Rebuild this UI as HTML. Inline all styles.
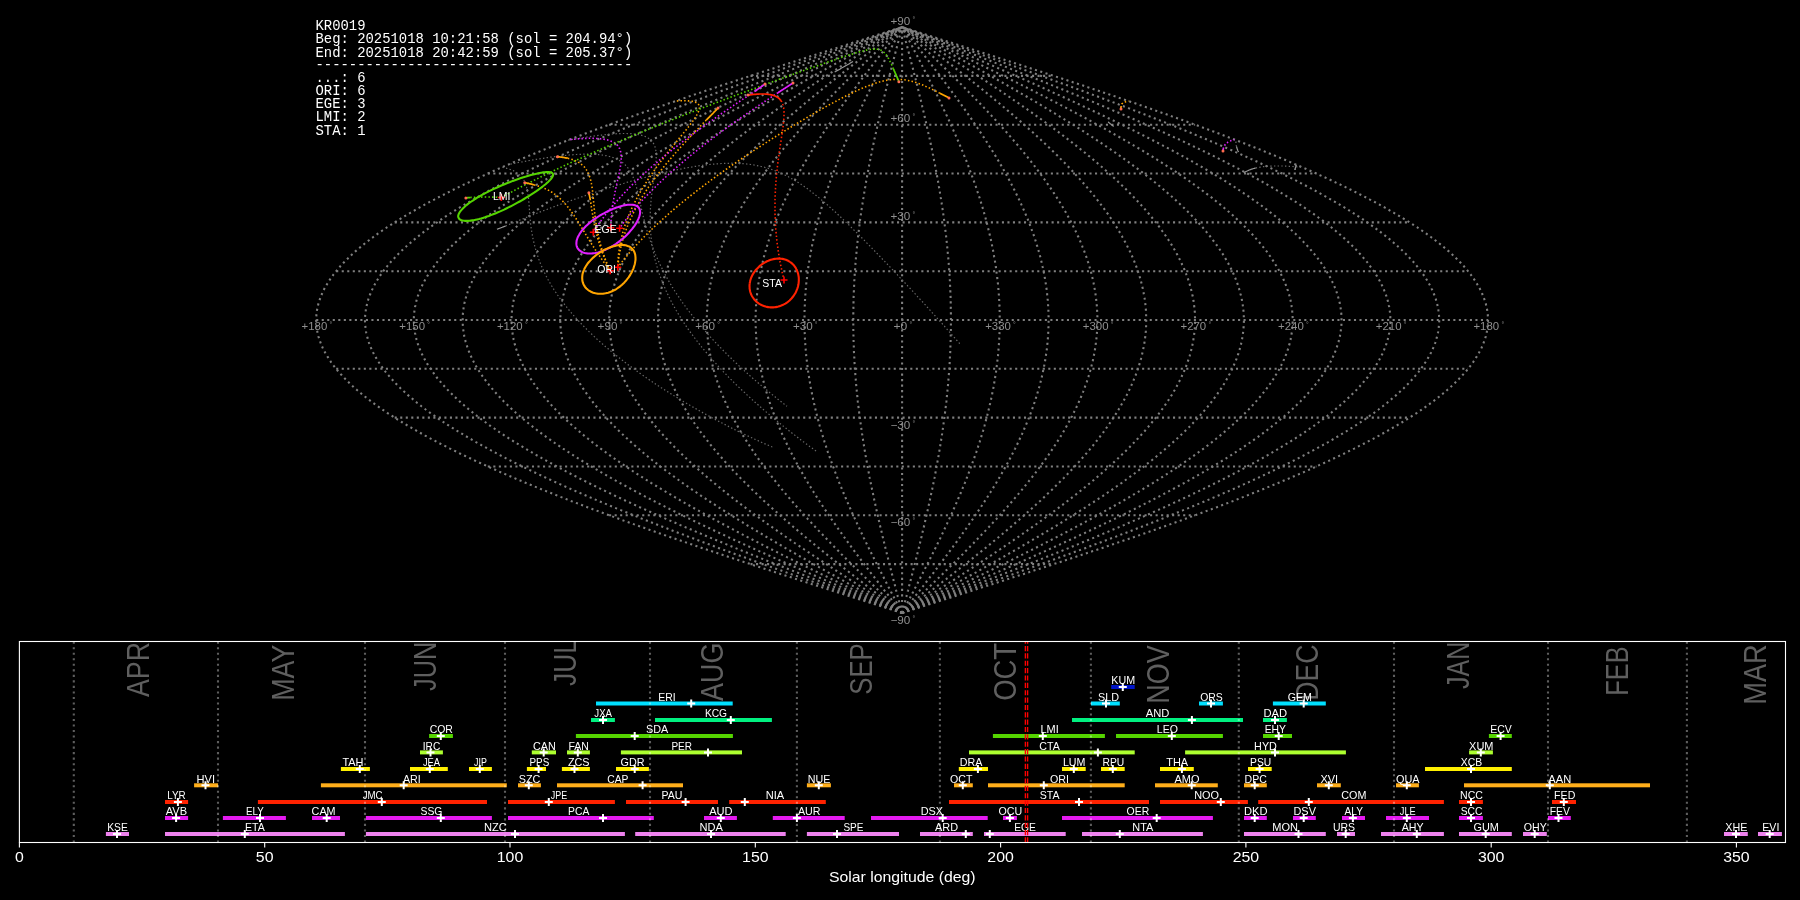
<!DOCTYPE html>
<html><head><meta charset="utf-8"><style>
html,body{margin:0;padding:0;background:#000;width:1800px;height:900px;overflow:hidden}
svg{display:block;will-change:transform}
</style></head><body>
<svg width="1800" height="900" viewBox="0 0 1800 900">
<rect width="1800" height="900" fill="#000"/>
<g fill="none" stroke="#7f7f7f" stroke-width="2.08" stroke-dasharray="2.08 3.44">
<path d="M902.1,613.0 L907.2,611.3 L912.3,609.7 L917.4,608.1 L922.5,606.4 L927.7,604.8 L932.8,603.2 L937.9,601.6 L943.0,599.9 L948.1,598.3 L953.2,596.7 L958.3,595.0 L963.3,593.4 L968.4,591.8 L973.5,590.2 L978.6,588.5 L983.6,586.9 L988.7,585.3 L993.8,583.7 L998.8,582.0 L1003.8,580.4 L1008.9,578.8 L1013.9,577.1 L1018.9,575.5 L1023.9,573.9 L1028.9,572.3 L1033.9,570.6 L1038.9,569.0 L1043.8,567.4 L1048.8,565.8 L1053.7,564.1 L1058.7,562.5 L1063.6,560.9 L1068.5,559.2 L1073.4,557.6 L1078.3,556.0 L1083.2,554.4 L1088.0,552.7 L1092.9,551.1 L1097.7,549.5 L1102.5,547.9 L1107.3,546.2 L1112.1,544.6 L1116.8,543.0 L1121.6,541.3 L1126.3,539.7 L1131.0,538.1 L1135.7,536.5 L1140.4,534.8 L1145.1,533.2 L1149.7,531.6 L1154.3,529.9 L1158.9,528.3 L1163.5,526.7 L1168.1,525.1 L1172.6,523.4 L1177.2,521.8 L1181.7,520.2 L1186.1,518.6 L1190.6,516.9 L1195.1,515.3 L1199.5,513.7 L1203.9,512.0 L1208.2,510.4 L1212.6,508.8 L1216.9,507.2 L1221.2,505.5 L1225.5,503.9 L1229.7,502.3 L1234.0,500.7 L1238.2,499.0 L1242.3,497.4 L1246.5,495.8 L1250.6,494.1 L1254.7,492.5 L1258.8,490.9 L1262.8,489.3 L1266.8,487.6 L1270.8,486.0 L1274.8,484.4 L1278.7,482.8 L1282.6,481.1 L1286.5,479.5 L1290.3,477.9 L1294.1,476.2 L1297.9,474.6 L1301.7,473.0 L1305.4,471.4 L1309.1,469.7 L1312.8,468.1 L1316.4,466.5 L1320.0,464.8 L1323.6,463.2 L1327.1,461.6 L1330.6,460.0 L1334.1,458.3 L1337.5,456.7 L1340.9,455.1 L1344.3,453.5 L1347.6,451.8 L1350.9,450.2 L1354.2,448.6 L1357.4,446.9 L1360.6,445.3 L1363.8,443.7 L1366.9,442.1 L1370.0,440.4 L1373.1,438.8 L1376.1,437.2 L1379.1,435.6 L1382.0,433.9 L1385.0,432.3 L1387.8,430.7 L1390.7,429.0 L1393.5,427.4 L1396.2,425.8 L1399.0,424.2 L1401.7,422.5 L1404.3,420.9 L1406.9,419.3 L1409.5,417.6 L1412.0,416.0 L1414.5,414.4 L1417.0,412.8 L1419.4,411.1 L1421.8,409.5 L1424.1,407.9 L1426.4,406.3 L1428.7,404.6 L1430.9,403.0 L1433.1,401.4 L1435.2,399.7 L1437.3,398.1 L1439.4,396.5 L1441.4,394.9 L1443.4,393.2 L1445.3,391.6 L1447.2,390.0 L1449.1,388.4 L1450.9,386.7 L1452.7,385.1 L1454.4,383.5 L1456.1,381.8 L1457.7,380.2 L1459.3,378.6 L1460.9,377.0 L1462.4,375.3 L1463.9,373.7 L1465.3,372.1 L1466.7,370.5 L1468.0,368.8 L1469.3,367.2 L1470.6,365.6 L1471.8,363.9 L1473.0,362.3 L1474.1,360.7 L1475.2,359.1 L1476.2,357.4 L1477.2,355.8 L1478.2,354.2 L1479.1,352.6 L1480.0,350.9 L1480.8,349.3 L1481.6,347.7 L1482.3,346.0 L1483.0,344.4 L1483.6,342.8 L1484.2,341.2 L1484.8,339.5 L1485.3,337.9 L1485.8,336.3 L1486.2,334.6 L1486.6,333.0 L1486.9,331.4 L1487.2,329.8 L1487.4,328.1 L1487.6,326.5 L1487.8,324.9 L1487.9,323.3 L1488.0,321.6 L1488.0,320.0 L1488.0,318.4 L1487.9,316.7 L1487.8,315.1 L1487.6,313.5 L1487.4,311.9 L1487.2,310.2 L1486.9,308.6 L1486.6,307.0 L1486.2,305.4 L1485.8,303.7 L1485.3,302.1 L1484.8,300.5 L1484.2,298.8 L1483.6,297.2 L1483.0,295.6 L1482.3,294.0 L1481.6,292.3 L1480.8,290.7 L1480.0,289.1 L1479.1,287.4 L1478.2,285.8 L1477.2,284.2 L1476.2,282.6 L1475.2,280.9 L1474.1,279.3 L1473.0,277.7 L1471.8,276.1 L1470.6,274.4 L1469.3,272.8 L1468.0,271.2 L1466.7,269.5 L1465.3,267.9 L1463.9,266.3 L1462.4,264.7 L1460.9,263.0 L1459.3,261.4 L1457.7,259.8 L1456.1,258.2 L1454.4,256.5 L1452.7,254.9 L1450.9,253.3 L1449.1,251.6 L1447.2,250.0 L1445.3,248.4 L1443.4,246.8 L1441.4,245.1 L1439.4,243.5 L1437.3,241.9 L1435.2,240.3 L1433.1,238.6 L1430.9,237.0 L1428.7,235.4 L1426.4,233.7 L1424.1,232.1 L1421.8,230.5 L1419.4,228.9 L1417.0,227.2 L1414.5,225.6 L1412.0,224.0 L1409.5,222.4 L1406.9,220.7 L1404.3,219.1 L1401.7,217.5 L1399.0,215.8 L1396.2,214.2 L1393.5,212.6 L1390.7,211.0 L1387.8,209.3 L1385.0,207.7 L1382.0,206.1 L1379.1,204.4 L1376.1,202.8 L1373.1,201.2 L1370.0,199.6 L1366.9,197.9 L1363.8,196.3 L1360.6,194.7 L1357.4,193.1 L1354.2,191.4 L1350.9,189.8 L1347.6,188.2 L1344.3,186.5 L1340.9,184.9 L1337.5,183.3 L1334.1,181.7 L1330.6,180.0 L1327.1,178.4 L1323.6,176.8 L1320.0,175.2 L1316.4,173.5 L1312.8,171.9 L1309.1,170.3 L1305.4,168.6 L1301.7,167.0 L1297.9,165.4 L1294.1,163.8 L1290.3,162.1 L1286.5,160.5 L1282.6,158.9 L1278.7,157.2 L1274.8,155.6 L1270.8,154.0 L1266.8,152.4 L1262.8,150.7 L1258.8,149.1 L1254.7,147.5 L1250.6,145.9 L1246.5,144.2 L1242.3,142.6 L1238.2,141.0 L1234.0,139.3 L1229.7,137.7 L1225.5,136.1 L1221.2,134.5 L1216.9,132.8 L1212.6,131.2 L1208.2,129.6 L1203.9,128.0 L1199.5,126.3 L1195.1,124.7 L1190.6,123.1 L1186.1,121.4 L1181.7,119.8 L1177.2,118.2 L1172.6,116.6 L1168.1,114.9 L1163.5,113.3 L1158.9,111.7 L1154.3,110.1 L1149.7,108.4 L1145.1,106.8 L1140.4,105.2 L1135.7,103.5 L1131.0,101.9 L1126.3,100.3 L1121.6,98.7 L1116.8,97.0 L1112.1,95.4 L1107.3,93.8 L1102.5,92.2 L1097.7,90.5 L1092.9,88.9 L1088.0,87.3 L1083.2,85.6 L1078.3,84.0 L1073.4,82.4 L1068.5,80.8 L1063.6,79.1 L1058.7,77.5 L1053.7,75.9 L1048.8,74.2 L1043.8,72.6 L1038.9,71.0 L1033.9,69.4 L1028.9,67.7 L1023.9,66.1 L1018.9,64.5 L1013.9,62.9 L1008.9,61.2 L1003.8,59.6 L998.8,58.0 L993.8,56.3 L988.7,54.7 L983.6,53.1 L978.6,51.5 L973.5,49.8 L968.4,48.2 L963.3,46.6 L958.3,45.0 L953.2,43.3 L948.1,41.7 L943.0,40.1 L937.9,38.4 L932.8,36.8 L927.7,35.2 L922.5,33.6 L917.4,31.9 L912.3,30.3 L907.2,28.7 L902.1,27.1"/>
<path d="M902.1,613.0 L906.8,611.3 L911.5,609.7 L916.2,608.1 L920.8,606.4 L925.5,604.8 L930.2,603.2 L934.9,601.6 L939.6,599.9 L944.2,598.3 L948.9,596.7 L953.6,595.0 L958.2,593.4 L962.9,591.8 L967.6,590.2 L972.2,588.5 L976.8,586.9 L981.5,585.3 L986.1,583.7 L990.7,582.0 L995.4,580.4 L1000.0,578.8 L1004.6,577.1 L1009.2,575.5 L1013.8,573.9 L1018.3,572.3 L1022.9,570.6 L1027.5,569.0 L1032.0,567.4 L1036.6,565.8 L1041.1,564.1 L1045.6,562.5 L1050.1,560.9 L1054.6,559.2 L1059.1,557.6 L1063.6,556.0 L1068.1,554.4 L1072.5,552.7 L1077.0,551.1 L1081.4,549.5 L1085.8,547.9 L1090.2,546.2 L1094.6,544.6 L1098.9,543.0 L1103.3,541.3 L1107.6,539.7 L1112.0,538.1 L1116.3,536.5 L1120.5,534.8 L1124.8,533.2 L1129.1,531.6 L1133.3,529.9 L1137.5,528.3 L1141.7,526.7 L1145.9,525.1 L1150.1,523.4 L1154.2,521.8 L1158.4,520.2 L1162.5,518.6 L1166.6,516.9 L1170.6,515.3 L1174.7,513.7 L1178.7,512.0 L1182.7,510.4 L1186.7,508.8 L1190.7,507.2 L1194.6,505.5 L1198.5,503.9 L1202.4,502.3 L1206.3,500.7 L1210.2,499.0 L1214.0,497.4 L1217.8,495.8 L1221.6,494.1 L1225.3,492.5 L1229.1,490.9 L1232.8,489.3 L1236.4,487.6 L1240.1,486.0 L1243.7,484.4 L1247.3,482.8 L1250.9,481.1 L1254.5,479.5 L1258.0,477.9 L1261.5,476.2 L1264.9,474.6 L1268.4,473.0 L1271.8,471.4 L1275.2,469.7 L1278.5,468.1 L1281.9,466.5 L1285.2,464.8 L1288.4,463.2 L1291.7,461.6 L1294.9,460.0 L1298.1,458.3 L1301.2,456.7 L1304.3,455.1 L1307.4,453.5 L1310.5,451.8 L1313.5,450.2 L1316.5,448.6 L1319.5,446.9 L1322.4,445.3 L1325.3,443.7 L1328.2,442.1 L1331.0,440.4 L1333.8,438.8 L1336.6,437.2 L1339.3,435.6 L1342.0,433.9 L1344.7,432.3 L1347.4,430.7 L1350.0,429.0 L1352.5,427.4 L1355.1,425.8 L1357.6,424.2 L1360.0,422.5 L1362.5,420.9 L1364.9,419.3 L1367.2,417.6 L1369.5,416.0 L1371.8,414.4 L1374.1,412.8 L1376.3,411.1 L1378.5,409.5 L1380.6,407.9 L1382.7,406.3 L1384.8,404.6 L1386.9,403.0 L1388.9,401.4 L1390.8,399.7 L1392.7,398.1 L1394.6,396.5 L1396.5,394.9 L1398.3,393.2 L1400.1,391.6 L1401.8,390.0 L1403.5,388.4 L1405.2,386.7 L1406.8,385.1 L1408.4,383.5 L1409.9,381.8 L1411.4,380.2 L1412.9,378.6 L1414.3,377.0 L1415.7,375.3 L1417.1,373.7 L1418.4,372.1 L1419.6,370.5 L1420.9,368.8 L1422.1,367.2 L1423.2,365.6 L1424.3,363.9 L1425.4,362.3 L1426.4,360.7 L1427.4,359.1 L1428.4,357.4 L1429.3,355.8 L1430.2,354.2 L1431.0,352.6 L1431.8,350.9 L1432.6,349.3 L1433.3,347.7 L1433.9,346.0 L1434.6,344.4 L1435.2,342.8 L1435.7,341.2 L1436.2,339.5 L1436.7,337.9 L1437.1,336.3 L1437.5,334.6 L1437.9,333.0 L1438.2,331.4 L1438.4,329.8 L1438.7,328.1 L1438.8,326.5 L1439.0,324.9 L1439.1,323.3 L1439.2,321.6 L1439.2,320.0 L1439.2,318.4 L1439.1,316.7 L1439.0,315.1 L1438.8,313.5 L1438.7,311.9 L1438.4,310.2 L1438.2,308.6 L1437.9,307.0 L1437.5,305.4 L1437.1,303.7 L1436.7,302.1 L1436.2,300.5 L1435.7,298.8 L1435.2,297.2 L1434.6,295.6 L1433.9,294.0 L1433.3,292.3 L1432.6,290.7 L1431.8,289.1 L1431.0,287.4 L1430.2,285.8 L1429.3,284.2 L1428.4,282.6 L1427.4,280.9 L1426.4,279.3 L1425.4,277.7 L1424.3,276.1 L1423.2,274.4 L1422.1,272.8 L1420.9,271.2 L1419.6,269.5 L1418.4,267.9 L1417.1,266.3 L1415.7,264.7 L1414.3,263.0 L1412.9,261.4 L1411.4,259.8 L1409.9,258.2 L1408.4,256.5 L1406.8,254.9 L1405.2,253.3 L1403.5,251.6 L1401.8,250.0 L1400.1,248.4 L1398.3,246.8 L1396.5,245.1 L1394.6,243.5 L1392.7,241.9 L1390.8,240.3 L1388.9,238.6 L1386.9,237.0 L1384.8,235.4 L1382.7,233.7 L1380.6,232.1 L1378.5,230.5 L1376.3,228.9 L1374.1,227.2 L1371.8,225.6 L1369.5,224.0 L1367.2,222.4 L1364.9,220.7 L1362.5,219.1 L1360.0,217.5 L1357.6,215.8 L1355.1,214.2 L1352.5,212.6 L1350.0,211.0 L1347.4,209.3 L1344.7,207.7 L1342.0,206.1 L1339.3,204.4 L1336.6,202.8 L1333.8,201.2 L1331.0,199.6 L1328.2,197.9 L1325.3,196.3 L1322.4,194.7 L1319.5,193.1 L1316.5,191.4 L1313.5,189.8 L1310.5,188.2 L1307.4,186.5 L1304.3,184.9 L1301.2,183.3 L1298.1,181.7 L1294.9,180.0 L1291.7,178.4 L1288.4,176.8 L1285.2,175.2 L1281.9,173.5 L1278.5,171.9 L1275.2,170.3 L1271.8,168.6 L1268.4,167.0 L1264.9,165.4 L1261.5,163.8 L1258.0,162.1 L1254.5,160.5 L1250.9,158.9 L1247.3,157.2 L1243.7,155.6 L1240.1,154.0 L1236.4,152.4 L1232.8,150.7 L1229.1,149.1 L1225.3,147.5 L1221.6,145.9 L1217.8,144.2 L1214.0,142.6 L1210.2,141.0 L1206.3,139.3 L1202.4,137.7 L1198.5,136.1 L1194.6,134.5 L1190.7,132.8 L1186.7,131.2 L1182.7,129.6 L1178.7,128.0 L1174.7,126.3 L1170.6,124.7 L1166.6,123.1 L1162.5,121.4 L1158.4,119.8 L1154.2,118.2 L1150.1,116.6 L1145.9,114.9 L1141.7,113.3 L1137.5,111.7 L1133.3,110.1 L1129.1,108.4 L1124.8,106.8 L1120.5,105.2 L1116.3,103.5 L1112.0,101.9 L1107.6,100.3 L1103.3,98.7 L1098.9,97.0 L1094.6,95.4 L1090.2,93.8 L1085.8,92.2 L1081.4,90.5 L1077.0,88.9 L1072.5,87.3 L1068.1,85.6 L1063.6,84.0 L1059.1,82.4 L1054.6,80.8 L1050.1,79.1 L1045.6,77.5 L1041.1,75.9 L1036.6,74.2 L1032.0,72.6 L1027.5,71.0 L1022.9,69.4 L1018.3,67.7 L1013.8,66.1 L1009.2,64.5 L1004.6,62.9 L1000.0,61.2 L995.4,59.6 L990.7,58.0 L986.1,56.3 L981.5,54.7 L976.8,53.1 L972.2,51.5 L967.6,49.8 L962.9,48.2 L958.2,46.6 L953.6,45.0 L948.9,43.3 L944.2,41.7 L939.6,40.1 L934.9,38.4 L930.2,36.8 L925.5,35.2 L920.8,33.6 L916.2,31.9 L911.5,30.3 L906.8,28.7 L902.1,27.1"/>
<path d="M902.1,613.0 L906.4,611.3 L910.6,609.7 L914.9,608.1 L919.1,606.4 L923.4,604.8 L927.7,603.2 L931.9,601.6 L936.2,599.9 L940.4,598.3 L944.7,596.7 L948.9,595.0 L953.1,593.4 L957.4,591.8 L961.6,590.2 L965.8,588.5 L970.1,586.9 L974.3,585.3 L978.5,583.7 L982.7,582.0 L986.9,580.4 L991.1,578.8 L995.3,577.1 L999.4,575.5 L1003.6,573.9 L1007.8,572.3 L1011.9,570.6 L1016.1,569.0 L1020.2,567.4 L1024.3,565.8 L1028.5,564.1 L1032.6,562.5 L1036.7,560.9 L1040.8,559.2 L1044.9,557.6 L1048.9,556.0 L1053.0,554.4 L1057.0,552.7 L1061.1,551.1 L1065.1,549.5 L1069.1,547.9 L1073.1,546.2 L1077.1,544.6 L1081.0,543.0 L1085.0,541.3 L1088.9,539.7 L1092.9,538.1 L1096.8,536.5 L1100.7,534.8 L1104.6,533.2 L1108.4,531.6 L1112.3,529.9 L1116.1,528.3 L1120.0,526.7 L1123.8,525.1 L1127.5,523.4 L1131.3,521.8 L1135.1,520.2 L1138.8,518.6 L1142.5,516.9 L1146.2,515.3 L1149.9,513.7 L1153.6,512.0 L1157.2,510.4 L1160.8,508.8 L1164.4,507.2 L1168.0,505.5 L1171.6,503.9 L1175.1,502.3 L1178.6,500.7 L1182.1,499.0 L1185.6,497.4 L1189.1,495.8 L1192.5,494.1 L1195.9,492.5 L1199.3,490.9 L1202.7,489.3 L1206.0,487.6 L1209.4,486.0 L1212.7,484.4 L1215.9,482.8 L1219.2,481.1 L1222.4,479.5 L1225.6,477.9 L1228.8,476.2 L1232.0,474.6 L1235.1,473.0 L1238.2,471.4 L1241.3,469.7 L1244.3,468.1 L1247.3,466.5 L1250.3,464.8 L1253.3,463.2 L1256.3,461.6 L1259.2,460.0 L1262.1,458.3 L1264.9,456.7 L1267.8,455.1 L1270.6,453.5 L1273.4,451.8 L1276.1,450.2 L1278.8,448.6 L1281.5,446.9 L1284.2,445.3 L1286.8,443.7 L1289.5,442.1 L1292.0,440.4 L1294.6,438.8 L1297.1,437.2 L1299.6,435.6 L1302.1,433.9 L1304.5,432.3 L1306.9,430.7 L1309.2,429.0 L1311.6,427.4 L1313.9,425.8 L1316.2,424.2 L1318.4,422.5 L1320.6,420.9 L1322.8,419.3 L1324.9,417.6 L1327.1,416.0 L1329.1,414.4 L1331.2,412.8 L1333.2,411.1 L1335.2,409.5 L1337.1,407.9 L1339.1,406.3 L1340.9,404.6 L1342.8,403.0 L1344.6,401.4 L1346.4,399.7 L1348.1,398.1 L1349.9,396.5 L1351.5,394.9 L1353.2,393.2 L1354.8,391.6 L1356.4,390.0 L1357.9,388.4 L1359.4,386.7 L1360.9,385.1 L1362.3,383.5 L1363.7,381.8 L1365.1,380.2 L1366.5,378.6 L1367.8,377.0 L1369.0,375.3 L1370.2,373.7 L1371.4,372.1 L1372.6,370.5 L1373.7,368.8 L1374.8,367.2 L1375.8,365.6 L1376.9,363.9 L1377.8,362.3 L1378.8,360.7 L1379.7,359.1 L1380.5,357.4 L1381.4,355.8 L1382.2,354.2 L1382.9,352.6 L1383.7,350.9 L1384.3,349.3 L1385.0,347.7 L1385.6,346.0 L1386.2,344.4 L1386.7,342.8 L1387.2,341.2 L1387.7,339.5 L1388.1,337.9 L1388.5,336.3 L1388.8,334.6 L1389.2,333.0 L1389.4,331.4 L1389.7,329.8 L1389.9,328.1 L1390.1,326.5 L1390.2,324.9 L1390.3,323.3 L1390.3,321.6 L1390.3,320.0 L1390.3,318.4 L1390.3,316.7 L1390.2,315.1 L1390.1,313.5 L1389.9,311.9 L1389.7,310.2 L1389.4,308.6 L1389.2,307.0 L1388.8,305.4 L1388.5,303.7 L1388.1,302.1 L1387.7,300.5 L1387.2,298.8 L1386.7,297.2 L1386.2,295.6 L1385.6,294.0 L1385.0,292.3 L1384.3,290.7 L1383.7,289.1 L1382.9,287.4 L1382.2,285.8 L1381.4,284.2 L1380.5,282.6 L1379.7,280.9 L1378.8,279.3 L1377.8,277.7 L1376.9,276.1 L1375.8,274.4 L1374.8,272.8 L1373.7,271.2 L1372.6,269.5 L1371.4,267.9 L1370.2,266.3 L1369.0,264.7 L1367.8,263.0 L1366.5,261.4 L1365.1,259.8 L1363.7,258.2 L1362.3,256.5 L1360.9,254.9 L1359.4,253.3 L1357.9,251.6 L1356.4,250.0 L1354.8,248.4 L1353.2,246.8 L1351.5,245.1 L1349.9,243.5 L1348.1,241.9 L1346.4,240.3 L1344.6,238.6 L1342.8,237.0 L1340.9,235.4 L1339.1,233.7 L1337.1,232.1 L1335.2,230.5 L1333.2,228.9 L1331.2,227.2 L1329.1,225.6 L1327.1,224.0 L1324.9,222.4 L1322.8,220.7 L1320.6,219.1 L1318.4,217.5 L1316.2,215.8 L1313.9,214.2 L1311.6,212.6 L1309.2,211.0 L1306.9,209.3 L1304.5,207.7 L1302.1,206.1 L1299.6,204.4 L1297.1,202.8 L1294.6,201.2 L1292.0,199.6 L1289.5,197.9 L1286.8,196.3 L1284.2,194.7 L1281.5,193.1 L1278.8,191.4 L1276.1,189.8 L1273.4,188.2 L1270.6,186.5 L1267.8,184.9 L1264.9,183.3 L1262.1,181.7 L1259.2,180.0 L1256.3,178.4 L1253.3,176.8 L1250.3,175.2 L1247.3,173.5 L1244.3,171.9 L1241.3,170.3 L1238.2,168.6 L1235.1,167.0 L1232.0,165.4 L1228.8,163.8 L1225.6,162.1 L1222.4,160.5 L1219.2,158.9 L1215.9,157.2 L1212.7,155.6 L1209.4,154.0 L1206.0,152.4 L1202.7,150.7 L1199.3,149.1 L1195.9,147.5 L1192.5,145.9 L1189.1,144.2 L1185.6,142.6 L1182.1,141.0 L1178.6,139.3 L1175.1,137.7 L1171.6,136.1 L1168.0,134.5 L1164.4,132.8 L1160.8,131.2 L1157.2,129.6 L1153.6,128.0 L1149.9,126.3 L1146.2,124.7 L1142.5,123.1 L1138.8,121.4 L1135.1,119.8 L1131.3,118.2 L1127.5,116.6 L1123.8,114.9 L1120.0,113.3 L1116.1,111.7 L1112.3,110.1 L1108.4,108.4 L1104.6,106.8 L1100.7,105.2 L1096.8,103.5 L1092.9,101.9 L1088.9,100.3 L1085.0,98.7 L1081.0,97.0 L1077.1,95.4 L1073.1,93.8 L1069.1,92.2 L1065.1,90.5 L1061.1,88.9 L1057.0,87.3 L1053.0,85.6 L1048.9,84.0 L1044.9,82.4 L1040.8,80.8 L1036.7,79.1 L1032.6,77.5 L1028.5,75.9 L1024.3,74.2 L1020.2,72.6 L1016.1,71.0 L1011.9,69.4 L1007.8,67.7 L1003.6,66.1 L999.4,64.5 L995.3,62.9 L991.1,61.2 L986.9,59.6 L982.7,58.0 L978.5,56.3 L974.3,54.7 L970.1,53.1 L965.8,51.5 L961.6,49.8 L957.4,48.2 L953.1,46.6 L948.9,45.0 L944.7,43.3 L940.4,41.7 L936.2,40.1 L931.9,38.4 L927.7,36.8 L923.4,35.2 L919.1,33.6 L914.9,31.9 L910.6,30.3 L906.4,28.7 L902.1,27.1"/>
<path d="M902.1,613.0 L905.9,611.3 L909.8,609.7 L913.6,608.1 L917.4,606.4 L921.3,604.8 L925.1,603.2 L928.9,601.6 L932.8,599.9 L936.6,598.3 L940.4,596.7 L944.2,595.0 L948.0,593.4 L951.8,591.8 L955.7,590.2 L959.5,588.5 L963.3,586.9 L967.1,585.3 L970.8,583.7 L974.6,582.0 L978.4,580.4 L982.2,578.8 L985.9,577.1 L989.7,575.5 L993.5,573.9 L997.2,572.3 L1000.9,570.6 L1004.7,569.0 L1008.4,567.4 L1012.1,565.8 L1015.8,564.1 L1019.5,562.5 L1023.2,560.9 L1026.9,559.2 L1030.6,557.6 L1034.2,556.0 L1037.9,554.4 L1041.5,552.7 L1045.2,551.1 L1048.8,549.5 L1052.4,547.9 L1056.0,546.2 L1059.6,544.6 L1063.1,543.0 L1066.7,541.3 L1070.3,539.7 L1073.8,538.1 L1077.3,536.5 L1080.8,534.8 L1084.3,533.2 L1087.8,531.6 L1091.3,529.9 L1094.7,528.3 L1098.2,526.7 L1101.6,525.1 L1105.0,523.4 L1108.4,521.8 L1111.8,520.2 L1115.1,518.6 L1118.5,516.9 L1121.8,515.3 L1125.1,513.7 L1128.4,512.0 L1131.7,510.4 L1135.0,508.8 L1138.2,507.2 L1141.4,505.5 L1144.6,503.9 L1147.8,502.3 L1151.0,500.7 L1154.1,499.0 L1157.3,497.4 L1160.4,495.8 L1163.5,494.1 L1166.6,492.5 L1169.6,490.9 L1172.6,489.3 L1175.6,487.6 L1178.6,486.0 L1181.6,484.4 L1184.6,482.8 L1187.5,481.1 L1190.4,479.5 L1193.3,477.9 L1196.1,476.2 L1199.0,474.6 L1201.8,473.0 L1204.6,471.4 L1207.4,469.7 L1210.1,468.1 L1212.8,466.5 L1215.5,464.8 L1218.2,463.2 L1220.8,461.6 L1223.5,460.0 L1226.1,458.3 L1228.7,456.7 L1231.2,455.1 L1233.7,453.5 L1236.2,451.8 L1238.7,450.2 L1241.2,448.6 L1243.6,446.9 L1246.0,445.3 L1248.4,443.7 L1250.7,442.1 L1253.0,440.4 L1255.3,438.8 L1257.6,437.2 L1259.8,435.6 L1262.1,433.9 L1264.2,432.3 L1266.4,430.7 L1268.5,429.0 L1270.6,427.4 L1272.7,425.8 L1274.8,424.2 L1276.8,422.5 L1278.8,420.9 L1280.7,419.3 L1282.7,417.6 L1284.6,416.0 L1286.4,414.4 L1288.3,412.8 L1290.1,411.1 L1291.9,409.5 L1293.6,407.9 L1295.4,406.3 L1297.1,404.6 L1298.7,403.0 L1300.4,401.4 L1302.0,399.7 L1303.5,398.1 L1305.1,396.5 L1306.6,394.9 L1308.1,393.2 L1309.5,391.6 L1310.9,390.0 L1312.3,388.4 L1313.7,386.7 L1315.0,385.1 L1316.3,383.5 L1317.6,381.8 L1318.8,380.2 L1320.0,378.6 L1321.2,377.0 L1322.3,375.3 L1323.4,373.7 L1324.5,372.1 L1325.5,370.5 L1326.6,368.8 L1327.5,367.2 L1328.5,365.6 L1329.4,363.9 L1330.3,362.3 L1331.1,360.7 L1331.9,359.1 L1332.7,357.4 L1333.5,355.8 L1334.2,354.2 L1334.8,352.6 L1335.5,350.9 L1336.1,349.3 L1336.7,347.7 L1337.2,346.0 L1337.8,344.4 L1338.2,342.8 L1338.7,341.2 L1339.1,339.5 L1339.5,337.9 L1339.9,336.3 L1340.2,334.6 L1340.5,333.0 L1340.7,331.4 L1340.9,329.8 L1341.1,328.1 L1341.3,326.5 L1341.4,324.9 L1341.5,323.3 L1341.5,321.6 L1341.5,320.0 L1341.5,318.4 L1341.5,316.7 L1341.4,315.1 L1341.3,313.5 L1341.1,311.9 L1340.9,310.2 L1340.7,308.6 L1340.5,307.0 L1340.2,305.4 L1339.9,303.7 L1339.5,302.1 L1339.1,300.5 L1338.7,298.8 L1338.2,297.2 L1337.8,295.6 L1337.2,294.0 L1336.7,292.3 L1336.1,290.7 L1335.5,289.1 L1334.8,287.4 L1334.2,285.8 L1333.5,284.2 L1332.7,282.6 L1331.9,280.9 L1331.1,279.3 L1330.3,277.7 L1329.4,276.1 L1328.5,274.4 L1327.5,272.8 L1326.6,271.2 L1325.5,269.5 L1324.5,267.9 L1323.4,266.3 L1322.3,264.7 L1321.2,263.0 L1320.0,261.4 L1318.8,259.8 L1317.6,258.2 L1316.3,256.5 L1315.0,254.9 L1313.7,253.3 L1312.3,251.6 L1310.9,250.0 L1309.5,248.4 L1308.1,246.8 L1306.6,245.1 L1305.1,243.5 L1303.5,241.9 L1302.0,240.3 L1300.4,238.6 L1298.7,237.0 L1297.1,235.4 L1295.4,233.7 L1293.6,232.1 L1291.9,230.5 L1290.1,228.9 L1288.3,227.2 L1286.4,225.6 L1284.6,224.0 L1282.7,222.4 L1280.7,220.7 L1278.8,219.1 L1276.8,217.5 L1274.8,215.8 L1272.7,214.2 L1270.6,212.6 L1268.5,211.0 L1266.4,209.3 L1264.2,207.7 L1262.1,206.1 L1259.8,204.4 L1257.6,202.8 L1255.3,201.2 L1253.0,199.6 L1250.7,197.9 L1248.4,196.3 L1246.0,194.7 L1243.6,193.1 L1241.2,191.4 L1238.7,189.8 L1236.2,188.2 L1233.7,186.5 L1231.2,184.9 L1228.7,183.3 L1226.1,181.7 L1223.5,180.0 L1220.8,178.4 L1218.2,176.8 L1215.5,175.2 L1212.8,173.5 L1210.1,171.9 L1207.4,170.3 L1204.6,168.6 L1201.8,167.0 L1199.0,165.4 L1196.1,163.8 L1193.3,162.1 L1190.4,160.5 L1187.5,158.9 L1184.6,157.2 L1181.6,155.6 L1178.6,154.0 L1175.6,152.4 L1172.6,150.7 L1169.6,149.1 L1166.6,147.5 L1163.5,145.9 L1160.4,144.2 L1157.3,142.6 L1154.1,141.0 L1151.0,139.3 L1147.8,137.7 L1144.6,136.1 L1141.4,134.5 L1138.2,132.8 L1135.0,131.2 L1131.7,129.6 L1128.4,128.0 L1125.1,126.3 L1121.8,124.7 L1118.5,123.1 L1115.1,121.4 L1111.8,119.8 L1108.4,118.2 L1105.0,116.6 L1101.6,114.9 L1098.2,113.3 L1094.7,111.7 L1091.3,110.1 L1087.8,108.4 L1084.3,106.8 L1080.8,105.2 L1077.3,103.5 L1073.8,101.9 L1070.3,100.3 L1066.7,98.7 L1063.1,97.0 L1059.6,95.4 L1056.0,93.8 L1052.4,92.2 L1048.8,90.5 L1045.2,88.9 L1041.5,87.3 L1037.9,85.6 L1034.2,84.0 L1030.6,82.4 L1026.9,80.8 L1023.2,79.1 L1019.5,77.5 L1015.8,75.9 L1012.1,74.2 L1008.4,72.6 L1004.7,71.0 L1000.9,69.4 L997.2,67.7 L993.5,66.1 L989.7,64.5 L985.9,62.9 L982.2,61.2 L978.4,59.6 L974.6,58.0 L970.8,56.3 L967.1,54.7 L963.3,53.1 L959.5,51.5 L955.7,49.8 L951.8,48.2 L948.0,46.6 L944.2,45.0 L940.4,43.3 L936.6,41.7 L932.8,40.1 L928.9,38.4 L925.1,36.8 L921.3,35.2 L917.4,33.6 L913.6,31.9 L909.8,30.3 L905.9,28.7 L902.1,27.1"/>
<path d="M902.1,613.0 L905.5,611.3 L908.9,609.7 L912.3,608.1 L915.7,606.4 L919.1,604.8 L922.5,603.2 L925.9,601.6 L929.3,599.9 L932.7,598.3 L936.1,596.7 L939.5,595.0 L942.9,593.4 L946.3,591.8 L949.7,590.2 L953.1,588.5 L956.5,586.9 L959.8,585.3 L963.2,583.7 L966.6,582.0 L969.9,580.4 L973.3,578.8 L976.6,577.1 L980.0,575.5 L983.3,573.9 L986.6,572.3 L990.0,570.6 L993.3,569.0 L996.6,567.4 L999.9,565.8 L1003.2,564.1 L1006.5,562.5 L1009.8,560.9 L1013.0,559.2 L1016.3,557.6 L1019.6,556.0 L1022.8,554.4 L1026.0,552.7 L1029.3,551.1 L1032.5,549.5 L1035.7,547.9 L1038.9,546.2 L1042.1,544.6 L1045.3,543.0 L1048.4,541.3 L1051.6,539.7 L1054.7,538.1 L1057.9,536.5 L1061.0,534.8 L1064.1,533.2 L1067.2,531.6 L1070.3,529.9 L1073.3,528.3 L1076.4,526.7 L1079.4,525.1 L1082.5,523.4 L1085.5,521.8 L1088.5,520.2 L1091.5,518.6 L1094.4,516.9 L1097.4,515.3 L1100.3,513.7 L1103.3,512.0 L1106.2,510.4 L1109.1,508.8 L1112.0,507.2 L1114.8,505.5 L1117.7,503.9 L1120.5,502.3 L1123.3,500.7 L1126.1,499.0 L1128.9,497.4 L1131.7,495.8 L1134.4,494.1 L1137.2,492.5 L1139.9,490.9 L1142.6,489.3 L1145.3,487.6 L1147.9,486.0 L1150.6,484.4 L1153.2,482.8 L1155.8,481.1 L1158.4,479.5 L1160.9,477.9 L1163.5,476.2 L1166.0,474.6 L1168.5,473.0 L1171.0,471.4 L1173.4,469.7 L1175.9,468.1 L1178.3,466.5 L1180.7,464.8 L1183.1,463.2 L1185.4,461.6 L1187.8,460.0 L1190.1,458.3 L1192.4,456.7 L1194.6,455.1 L1196.9,453.5 L1199.1,451.8 L1201.3,450.2 L1203.5,448.6 L1205.7,446.9 L1207.8,445.3 L1209.9,443.7 L1212.0,442.1 L1214.0,440.4 L1216.1,438.8 L1218.1,437.2 L1220.1,435.6 L1222.1,433.9 L1224.0,432.3 L1225.9,430.7 L1227.8,429.0 L1229.7,427.4 L1231.5,425.8 L1233.3,424.2 L1235.1,422.5 L1236.9,420.9 L1238.7,419.3 L1240.4,417.6 L1242.1,416.0 L1243.7,414.4 L1245.4,412.8 L1247.0,411.1 L1248.6,409.5 L1250.1,407.9 L1251.7,406.3 L1253.2,404.6 L1254.6,403.0 L1256.1,401.4 L1257.5,399.7 L1258.9,398.1 L1260.3,396.5 L1261.6,394.9 L1263.0,393.2 L1264.3,391.6 L1265.5,390.0 L1266.8,388.4 L1268.0,386.7 L1269.1,385.1 L1270.3,383.5 L1271.4,381.8 L1272.5,380.2 L1273.6,378.6 L1274.6,377.0 L1275.6,375.3 L1276.6,373.7 L1277.6,372.1 L1278.5,370.5 L1279.4,368.8 L1280.3,367.2 L1281.1,365.6 L1281.9,363.9 L1282.7,362.3 L1283.4,360.7 L1284.2,359.1 L1284.9,357.4 L1285.5,355.8 L1286.2,354.2 L1286.8,352.6 L1287.3,350.9 L1287.9,349.3 L1288.4,347.7 L1288.9,346.0 L1289.4,344.4 L1289.8,342.8 L1290.2,341.2 L1290.6,339.5 L1290.9,337.9 L1291.2,336.3 L1291.5,334.6 L1291.7,333.0 L1292.0,331.4 L1292.2,329.8 L1292.3,328.1 L1292.5,326.5 L1292.6,324.9 L1292.6,323.3 L1292.7,321.6 L1292.7,320.0 L1292.7,318.4 L1292.6,316.7 L1292.6,315.1 L1292.5,313.5 L1292.3,311.9 L1292.2,310.2 L1292.0,308.6 L1291.7,307.0 L1291.5,305.4 L1291.2,303.7 L1290.9,302.1 L1290.6,300.5 L1290.2,298.8 L1289.8,297.2 L1289.4,295.6 L1288.9,294.0 L1288.4,292.3 L1287.9,290.7 L1287.3,289.1 L1286.8,287.4 L1286.2,285.8 L1285.5,284.2 L1284.9,282.6 L1284.2,280.9 L1283.4,279.3 L1282.7,277.7 L1281.9,276.1 L1281.1,274.4 L1280.3,272.8 L1279.4,271.2 L1278.5,269.5 L1277.6,267.9 L1276.6,266.3 L1275.6,264.7 L1274.6,263.0 L1273.6,261.4 L1272.5,259.8 L1271.4,258.2 L1270.3,256.5 L1269.1,254.9 L1268.0,253.3 L1266.8,251.6 L1265.5,250.0 L1264.3,248.4 L1263.0,246.8 L1261.6,245.1 L1260.3,243.5 L1258.9,241.9 L1257.5,240.3 L1256.1,238.6 L1254.6,237.0 L1253.2,235.4 L1251.7,233.7 L1250.1,232.1 L1248.6,230.5 L1247.0,228.9 L1245.4,227.2 L1243.7,225.6 L1242.1,224.0 L1240.4,222.4 L1238.7,220.7 L1236.9,219.1 L1235.1,217.5 L1233.3,215.8 L1231.5,214.2 L1229.7,212.6 L1227.8,211.0 L1225.9,209.3 L1224.0,207.7 L1222.1,206.1 L1220.1,204.4 L1218.1,202.8 L1216.1,201.2 L1214.0,199.6 L1212.0,197.9 L1209.9,196.3 L1207.8,194.7 L1205.7,193.1 L1203.5,191.4 L1201.3,189.8 L1199.1,188.2 L1196.9,186.5 L1194.6,184.9 L1192.4,183.3 L1190.1,181.7 L1187.8,180.0 L1185.4,178.4 L1183.1,176.8 L1180.7,175.2 L1178.3,173.5 L1175.9,171.9 L1173.4,170.3 L1171.0,168.6 L1168.5,167.0 L1166.0,165.4 L1163.5,163.8 L1160.9,162.1 L1158.4,160.5 L1155.8,158.9 L1153.2,157.2 L1150.6,155.6 L1147.9,154.0 L1145.3,152.4 L1142.6,150.7 L1139.9,149.1 L1137.2,147.5 L1134.4,145.9 L1131.7,144.2 L1128.9,142.6 L1126.1,141.0 L1123.3,139.3 L1120.5,137.7 L1117.7,136.1 L1114.8,134.5 L1112.0,132.8 L1109.1,131.2 L1106.2,129.6 L1103.3,128.0 L1100.3,126.3 L1097.4,124.7 L1094.4,123.1 L1091.5,121.4 L1088.5,119.8 L1085.5,118.2 L1082.5,116.6 L1079.4,114.9 L1076.4,113.3 L1073.3,111.7 L1070.3,110.1 L1067.2,108.4 L1064.1,106.8 L1061.0,105.2 L1057.9,103.5 L1054.7,101.9 L1051.6,100.3 L1048.4,98.7 L1045.3,97.0 L1042.1,95.4 L1038.9,93.8 L1035.7,92.2 L1032.5,90.5 L1029.3,88.9 L1026.0,87.3 L1022.8,85.6 L1019.6,84.0 L1016.3,82.4 L1013.0,80.8 L1009.8,79.1 L1006.5,77.5 L1003.2,75.9 L999.9,74.2 L996.6,72.6 L993.3,71.0 L990.0,69.4 L986.6,67.7 L983.3,66.1 L980.0,64.5 L976.6,62.9 L973.3,61.2 L969.9,59.6 L966.6,58.0 L963.2,56.3 L959.8,54.7 L956.5,53.1 L953.1,51.5 L949.7,49.8 L946.3,48.2 L942.9,46.6 L939.5,45.0 L936.1,43.3 L932.7,41.7 L929.3,40.1 L925.9,38.4 L922.5,36.8 L919.1,35.2 L915.7,33.6 L912.3,31.9 L908.9,30.3 L905.5,28.7 L902.1,27.1"/>
<path d="M902.1,613.0 L905.1,611.3 L908.1,609.7 L911.0,608.1 L914.0,606.4 L917.0,604.8 L920.0,603.2 L923.0,601.6 L925.9,599.9 L928.9,598.3 L931.9,596.7 L934.9,595.0 L937.8,593.4 L940.8,591.8 L943.8,590.2 L946.7,588.5 L949.7,586.9 L952.6,585.3 L955.6,583.7 L958.5,582.0 L961.4,580.4 L964.4,578.8 L967.3,577.1 L970.2,575.5 L973.2,573.9 L976.1,572.3 L979.0,570.6 L981.9,569.0 L984.8,567.4 L987.7,565.8 L990.6,564.1 L993.4,562.5 L996.3,560.9 L999.2,559.2 L1002.0,557.6 L1004.9,556.0 L1007.7,554.4 L1010.5,552.7 L1013.4,551.1 L1016.2,549.5 L1019.0,547.9 L1021.8,546.2 L1024.6,544.6 L1027.4,543.0 L1030.1,541.3 L1032.9,539.7 L1035.6,538.1 L1038.4,536.5 L1041.1,534.8 L1043.8,533.2 L1046.5,531.6 L1049.2,529.9 L1051.9,528.3 L1054.6,526.7 L1057.3,525.1 L1059.9,523.4 L1062.6,521.8 L1065.2,520.2 L1067.8,518.6 L1070.4,516.9 L1073.0,515.3 L1075.6,513.7 L1078.1,512.0 L1080.7,510.4 L1083.2,508.8 L1085.7,507.2 L1088.2,505.5 L1090.7,503.9 L1093.2,502.3 L1095.7,500.7 L1098.1,499.0 L1100.6,497.4 L1103.0,495.8 L1105.4,494.1 L1107.8,492.5 L1110.2,490.9 L1112.5,489.3 L1114.9,487.6 L1117.2,486.0 L1119.5,484.4 L1121.8,482.8 L1124.1,481.1 L1126.3,479.5 L1128.6,477.9 L1130.8,476.2 L1133.0,474.6 L1135.2,473.0 L1137.4,471.4 L1139.5,469.7 L1141.7,468.1 L1143.8,466.5 L1145.9,464.8 L1148.0,463.2 L1150.0,461.6 L1152.1,460.0 L1154.1,458.3 L1156.1,456.7 L1158.1,455.1 L1160.0,453.5 L1162.0,451.8 L1163.9,450.2 L1165.8,448.6 L1167.7,446.9 L1169.6,445.3 L1171.4,443.7 L1173.2,442.1 L1175.1,440.4 L1176.8,438.8 L1178.6,437.2 L1180.3,435.6 L1182.1,433.9 L1183.8,432.3 L1185.4,430.7 L1187.1,429.0 L1188.7,427.4 L1190.4,425.8 L1191.9,424.2 L1193.5,422.5 L1195.1,420.9 L1196.6,419.3 L1198.1,417.6 L1199.6,416.0 L1201.0,414.4 L1202.5,412.8 L1203.9,411.1 L1205.3,409.5 L1206.6,407.9 L1208.0,406.3 L1209.3,404.6 L1210.6,403.0 L1211.9,401.4 L1213.1,399.7 L1214.3,398.1 L1215.5,396.5 L1216.7,394.9 L1217.9,393.2 L1219.0,391.6 L1220.1,390.0 L1221.2,388.4 L1222.2,386.7 L1223.3,385.1 L1224.3,383.5 L1225.3,381.8 L1226.2,380.2 L1227.1,378.6 L1228.1,377.0 L1228.9,375.3 L1229.8,373.7 L1230.6,372.1 L1231.4,370.5 L1232.2,368.8 L1233.0,367.2 L1233.7,365.6 L1234.4,363.9 L1235.1,362.3 L1235.8,360.7 L1236.4,359.1 L1237.0,357.4 L1237.6,355.8 L1238.2,354.2 L1238.7,352.6 L1239.2,350.9 L1239.7,349.3 L1240.1,347.7 L1240.5,346.0 L1241.0,344.4 L1241.3,342.8 L1241.7,341.2 L1242.0,339.5 L1242.3,337.9 L1242.6,336.3 L1242.8,334.6 L1243.0,333.0 L1243.2,331.4 L1243.4,329.8 L1243.5,328.1 L1243.7,326.5 L1243.8,324.9 L1243.8,323.3 L1243.9,321.6 L1243.9,320.0 L1243.9,318.4 L1243.8,316.7 L1243.8,315.1 L1243.7,313.5 L1243.5,311.9 L1243.4,310.2 L1243.2,308.6 L1243.0,307.0 L1242.8,305.4 L1242.6,303.7 L1242.3,302.1 L1242.0,300.5 L1241.7,298.8 L1241.3,297.2 L1241.0,295.6 L1240.5,294.0 L1240.1,292.3 L1239.7,290.7 L1239.2,289.1 L1238.7,287.4 L1238.2,285.8 L1237.6,284.2 L1237.0,282.6 L1236.4,280.9 L1235.8,279.3 L1235.1,277.7 L1234.4,276.1 L1233.7,274.4 L1233.0,272.8 L1232.2,271.2 L1231.4,269.5 L1230.6,267.9 L1229.8,266.3 L1228.9,264.7 L1228.1,263.0 L1227.1,261.4 L1226.2,259.8 L1225.3,258.2 L1224.3,256.5 L1223.3,254.9 L1222.2,253.3 L1221.2,251.6 L1220.1,250.0 L1219.0,248.4 L1217.9,246.8 L1216.7,245.1 L1215.5,243.5 L1214.3,241.9 L1213.1,240.3 L1211.9,238.6 L1210.6,237.0 L1209.3,235.4 L1208.0,233.7 L1206.6,232.1 L1205.3,230.5 L1203.9,228.9 L1202.5,227.2 L1201.0,225.6 L1199.6,224.0 L1198.1,222.4 L1196.6,220.7 L1195.1,219.1 L1193.5,217.5 L1191.9,215.8 L1190.4,214.2 L1188.7,212.6 L1187.1,211.0 L1185.4,209.3 L1183.8,207.7 L1182.1,206.1 L1180.3,204.4 L1178.6,202.8 L1176.8,201.2 L1175.1,199.6 L1173.2,197.9 L1171.4,196.3 L1169.6,194.7 L1167.7,193.1 L1165.8,191.4 L1163.9,189.8 L1162.0,188.2 L1160.0,186.5 L1158.1,184.9 L1156.1,183.3 L1154.1,181.7 L1152.1,180.0 L1150.0,178.4 L1148.0,176.8 L1145.9,175.2 L1143.8,173.5 L1141.7,171.9 L1139.5,170.3 L1137.4,168.6 L1135.2,167.0 L1133.0,165.4 L1130.8,163.8 L1128.6,162.1 L1126.3,160.5 L1124.1,158.9 L1121.8,157.2 L1119.5,155.6 L1117.2,154.0 L1114.9,152.4 L1112.5,150.7 L1110.2,149.1 L1107.8,147.5 L1105.4,145.9 L1103.0,144.2 L1100.6,142.6 L1098.1,141.0 L1095.7,139.3 L1093.2,137.7 L1090.7,136.1 L1088.2,134.5 L1085.7,132.8 L1083.2,131.2 L1080.7,129.6 L1078.1,128.0 L1075.6,126.3 L1073.0,124.7 L1070.4,123.1 L1067.8,121.4 L1065.2,119.8 L1062.6,118.2 L1059.9,116.6 L1057.3,114.9 L1054.6,113.3 L1051.9,111.7 L1049.2,110.1 L1046.5,108.4 L1043.8,106.8 L1041.1,105.2 L1038.4,103.5 L1035.6,101.9 L1032.9,100.3 L1030.1,98.7 L1027.4,97.0 L1024.6,95.4 L1021.8,93.8 L1019.0,92.2 L1016.2,90.5 L1013.4,88.9 L1010.5,87.3 L1007.7,85.6 L1004.9,84.0 L1002.0,82.4 L999.2,80.8 L996.3,79.1 L993.4,77.5 L990.6,75.9 L987.7,74.2 L984.8,72.6 L981.9,71.0 L979.0,69.4 L976.1,67.7 L973.2,66.1 L970.2,64.5 L967.3,62.9 L964.4,61.2 L961.4,59.6 L958.5,58.0 L955.6,56.3 L952.6,54.7 L949.7,53.1 L946.7,51.5 L943.8,49.8 L940.8,48.2 L937.8,46.6 L934.9,45.0 L931.9,43.3 L928.9,41.7 L925.9,40.1 L923.0,38.4 L920.0,36.8 L917.0,35.2 L914.0,33.6 L911.0,31.9 L908.1,30.3 L905.1,28.7 L902.1,27.1"/>
<path d="M902.1,613.0 L904.7,611.3 L907.2,609.7 L909.8,608.1 L912.3,606.4 L914.9,604.8 L917.4,603.2 L920.0,601.6 L922.5,599.9 L925.1,598.3 L927.6,596.7 L930.2,595.0 L932.7,593.4 L935.3,591.8 L937.8,590.2 L940.3,588.5 L942.9,586.9 L945.4,585.3 L947.9,583.7 L950.5,582.0 L953.0,580.4 L955.5,578.8 L958.0,577.1 L960.5,575.5 L963.0,573.9 L965.5,572.3 L968.0,570.6 L970.5,569.0 L973.0,567.4 L975.4,565.8 L977.9,564.1 L980.4,562.5 L982.8,560.9 L985.3,559.2 L987.8,557.6 L990.2,556.0 L992.6,554.4 L995.1,552.7 L997.5,551.1 L999.9,549.5 L1002.3,547.9 L1004.7,546.2 L1007.1,544.6 L1009.5,543.0 L1011.8,541.3 L1014.2,539.7 L1016.6,538.1 L1018.9,536.5 L1021.3,534.8 L1023.6,533.2 L1025.9,531.6 L1028.2,529.9 L1030.5,528.3 L1032.8,526.7 L1035.1,525.1 L1037.4,523.4 L1039.6,521.8 L1041.9,520.2 L1044.1,518.6 L1046.4,516.9 L1048.6,515.3 L1050.8,513.7 L1053.0,512.0 L1055.2,510.4 L1057.3,508.8 L1059.5,507.2 L1061.7,505.5 L1063.8,503.9 L1065.9,502.3 L1068.0,500.7 L1070.1,499.0 L1072.2,497.4 L1074.3,495.8 L1076.4,494.1 L1078.4,492.5 L1080.4,490.9 L1082.5,489.3 L1084.5,487.6 L1086.5,486.0 L1088.4,484.4 L1090.4,482.8 L1092.4,481.1 L1094.3,479.5 L1096.2,477.9 L1098.1,476.2 L1100.0,474.6 L1101.9,473.0 L1103.8,471.4 L1105.6,469.7 L1107.4,468.1 L1109.2,466.5 L1111.0,464.8 L1112.8,463.2 L1114.6,461.6 L1116.4,460.0 L1118.1,458.3 L1119.8,456.7 L1121.5,455.1 L1123.2,453.5 L1124.9,451.8 L1126.5,450.2 L1128.1,448.6 L1129.8,446.9 L1131.4,445.3 L1132.9,443.7 L1134.5,442.1 L1136.1,440.4 L1137.6,438.8 L1139.1,437.2 L1140.6,435.6 L1142.1,433.9 L1143.5,432.3 L1145.0,430.7 L1146.4,429.0 L1147.8,427.4 L1149.2,425.8 L1150.5,424.2 L1151.9,422.5 L1153.2,420.9 L1154.5,419.3 L1155.8,417.6 L1157.1,416.0 L1158.3,414.4 L1159.5,412.8 L1160.8,411.1 L1161.9,409.5 L1163.1,407.9 L1164.3,406.3 L1165.4,404.6 L1166.5,403.0 L1167.6,401.4 L1168.7,399.7 L1169.7,398.1 L1170.8,396.5 L1171.8,394.9 L1172.8,393.2 L1173.7,391.6 L1174.7,390.0 L1175.6,388.4 L1176.5,386.7 L1177.4,385.1 L1178.2,383.5 L1179.1,381.8 L1179.9,380.2 L1180.7,378.6 L1181.5,377.0 L1182.2,375.3 L1183.0,373.7 L1183.7,372.1 L1184.4,370.5 L1185.1,368.8 L1185.7,367.2 L1186.3,365.6 L1187.0,363.9 L1187.5,362.3 L1188.1,360.7 L1188.6,359.1 L1189.2,357.4 L1189.7,355.8 L1190.1,354.2 L1190.6,352.6 L1191.0,350.9 L1191.4,349.3 L1191.8,347.7 L1192.2,346.0 L1192.5,344.4 L1192.9,342.8 L1193.2,341.2 L1193.4,339.5 L1193.7,337.9 L1193.9,336.3 L1194.1,334.6 L1194.3,333.0 L1194.5,331.4 L1194.6,329.8 L1194.8,328.1 L1194.9,326.5 L1194.9,324.9 L1195.0,323.3 L1195.0,321.6 L1195.0,320.0 L1195.0,318.4 L1195.0,316.7 L1194.9,315.1 L1194.9,313.5 L1194.8,311.9 L1194.6,310.2 L1194.5,308.6 L1194.3,307.0 L1194.1,305.4 L1193.9,303.7 L1193.7,302.1 L1193.4,300.5 L1193.2,298.8 L1192.9,297.2 L1192.5,295.6 L1192.2,294.0 L1191.8,292.3 L1191.4,290.7 L1191.0,289.1 L1190.6,287.4 L1190.1,285.8 L1189.7,284.2 L1189.2,282.6 L1188.6,280.9 L1188.1,279.3 L1187.5,277.7 L1187.0,276.1 L1186.3,274.4 L1185.7,272.8 L1185.1,271.2 L1184.4,269.5 L1183.7,267.9 L1183.0,266.3 L1182.2,264.7 L1181.5,263.0 L1180.7,261.4 L1179.9,259.8 L1179.1,258.2 L1178.2,256.5 L1177.4,254.9 L1176.5,253.3 L1175.6,251.6 L1174.7,250.0 L1173.7,248.4 L1172.8,246.8 L1171.8,245.1 L1170.8,243.5 L1169.7,241.9 L1168.7,240.3 L1167.6,238.6 L1166.5,237.0 L1165.4,235.4 L1164.3,233.7 L1163.1,232.1 L1161.9,230.5 L1160.8,228.9 L1159.5,227.2 L1158.3,225.6 L1157.1,224.0 L1155.8,222.4 L1154.5,220.7 L1153.2,219.1 L1151.9,217.5 L1150.5,215.8 L1149.2,214.2 L1147.8,212.6 L1146.4,211.0 L1145.0,209.3 L1143.5,207.7 L1142.1,206.1 L1140.6,204.4 L1139.1,202.8 L1137.6,201.2 L1136.1,199.6 L1134.5,197.9 L1132.9,196.3 L1131.4,194.7 L1129.8,193.1 L1128.1,191.4 L1126.5,189.8 L1124.9,188.2 L1123.2,186.5 L1121.5,184.9 L1119.8,183.3 L1118.1,181.7 L1116.4,180.0 L1114.6,178.4 L1112.8,176.8 L1111.0,175.2 L1109.2,173.5 L1107.4,171.9 L1105.6,170.3 L1103.8,168.6 L1101.9,167.0 L1100.0,165.4 L1098.1,163.8 L1096.2,162.1 L1094.3,160.5 L1092.4,158.9 L1090.4,157.2 L1088.4,155.6 L1086.5,154.0 L1084.5,152.4 L1082.5,150.7 L1080.4,149.1 L1078.4,147.5 L1076.4,145.9 L1074.3,144.2 L1072.2,142.6 L1070.1,141.0 L1068.0,139.3 L1065.9,137.7 L1063.8,136.1 L1061.7,134.5 L1059.5,132.8 L1057.3,131.2 L1055.2,129.6 L1053.0,128.0 L1050.8,126.3 L1048.6,124.7 L1046.4,123.1 L1044.1,121.4 L1041.9,119.8 L1039.6,118.2 L1037.4,116.6 L1035.1,114.9 L1032.8,113.3 L1030.5,111.7 L1028.2,110.1 L1025.9,108.4 L1023.6,106.8 L1021.3,105.2 L1018.9,103.5 L1016.6,101.9 L1014.2,100.3 L1011.8,98.7 L1009.5,97.0 L1007.1,95.4 L1004.7,93.8 L1002.3,92.2 L999.9,90.5 L997.5,88.9 L995.1,87.3 L992.6,85.6 L990.2,84.0 L987.8,82.4 L985.3,80.8 L982.8,79.1 L980.4,77.5 L977.9,75.9 L975.4,74.2 L973.0,72.6 L970.5,71.0 L968.0,69.4 L965.5,67.7 L963.0,66.1 L960.5,64.5 L958.0,62.9 L955.5,61.2 L953.0,59.6 L950.5,58.0 L947.9,56.3 L945.4,54.7 L942.9,53.1 L940.3,51.5 L937.8,49.8 L935.3,48.2 L932.7,46.6 L930.2,45.0 L927.6,43.3 L925.1,41.7 L922.5,40.1 L920.0,38.4 L917.4,36.8 L914.9,35.2 L912.3,33.6 L909.8,31.9 L907.2,30.3 L904.7,28.7 L902.1,27.1"/>
<path d="M902.1,613.0 L904.2,611.3 L906.4,609.7 L908.5,608.1 L910.6,606.4 L912.7,604.8 L914.9,603.2 L917.0,601.6 L919.1,599.9 L921.3,598.3 L923.4,596.7 L925.5,595.0 L927.6,593.4 L929.7,591.8 L931.9,590.2 L934.0,588.5 L936.1,586.9 L938.2,585.3 L940.3,583.7 L942.4,582.0 L944.5,580.4 L946.6,578.8 L948.7,577.1 L950.8,575.5 L952.9,573.9 L954.9,572.3 L957.0,570.6 L959.1,569.0 L961.2,567.4 L963.2,565.8 L965.3,564.1 L967.3,562.5 L969.4,560.9 L971.4,559.2 L973.5,557.6 L975.5,556.0 L977.5,554.4 L979.6,552.7 L981.6,551.1 L983.6,549.5 L985.6,547.9 L987.6,546.2 L989.6,544.6 L991.6,543.0 L993.6,541.3 L995.5,539.7 L997.5,538.1 L999.4,536.5 L1001.4,534.8 L1003.3,533.2 L1005.3,531.6 L1007.2,529.9 L1009.1,528.3 L1011.0,526.7 L1012.9,525.1 L1014.8,523.4 L1016.7,521.8 L1018.6,520.2 L1020.5,518.6 L1022.3,516.9 L1024.2,515.3 L1026.0,513.7 L1027.8,512.0 L1029.7,510.4 L1031.5,508.8 L1033.3,507.2 L1035.1,505.5 L1036.8,503.9 L1038.6,502.3 L1040.4,500.7 L1042.1,499.0 L1043.9,497.4 L1045.6,495.8 L1047.3,494.1 L1049.0,492.5 L1050.7,490.9 L1052.4,489.3 L1054.1,487.6 L1055.7,486.0 L1057.4,484.4 L1059.0,482.8 L1060.6,481.1 L1062.3,479.5 L1063.9,477.9 L1065.5,476.2 L1067.0,474.6 L1068.6,473.0 L1070.1,471.4 L1071.7,469.7 L1073.2,468.1 L1074.7,466.5 L1076.2,464.8 L1077.7,463.2 L1079.2,461.6 L1080.6,460.0 L1082.1,458.3 L1083.5,456.7 L1084.9,455.1 L1086.3,453.5 L1087.7,451.8 L1089.1,450.2 L1090.5,448.6 L1091.8,446.9 L1093.2,445.3 L1094.5,443.7 L1095.8,442.1 L1097.1,440.4 L1098.3,438.8 L1099.6,437.2 L1100.8,435.6 L1102.1,433.9 L1103.3,432.3 L1104.5,430.7 L1105.7,429.0 L1106.8,427.4 L1108.0,425.8 L1109.1,424.2 L1110.3,422.5 L1111.4,420.9 L1112.4,419.3 L1113.5,417.6 L1114.6,416.0 L1115.6,414.4 L1116.6,412.8 L1117.6,411.1 L1118.6,409.5 L1119.6,407.9 L1120.6,406.3 L1121.5,404.6 L1122.4,403.0 L1123.4,401.4 L1124.2,399.7 L1125.1,398.1 L1126.0,396.5 L1126.8,394.9 L1127.6,393.2 L1128.4,391.6 L1129.2,390.0 L1130.0,388.4 L1130.8,386.7 L1131.5,385.1 L1132.2,383.5 L1132.9,381.8 L1133.6,380.2 L1134.3,378.6 L1134.9,377.0 L1135.6,375.3 L1136.2,373.7 L1136.8,372.1 L1137.3,370.5 L1137.9,368.8 L1138.4,367.2 L1139.0,365.6 L1139.5,363.9 L1140.0,362.3 L1140.4,360.7 L1140.9,359.1 L1141.3,357.4 L1141.7,355.8 L1142.1,354.2 L1142.5,352.6 L1142.9,350.9 L1143.2,349.3 L1143.5,347.7 L1143.8,346.0 L1144.1,344.4 L1144.4,342.8 L1144.7,341.2 L1144.9,339.5 L1145.1,337.9 L1145.3,336.3 L1145.5,334.6 L1145.6,333.0 L1145.8,331.4 L1145.9,329.8 L1146.0,328.1 L1146.1,326.5 L1146.1,324.9 L1146.2,323.3 L1146.2,321.6 L1146.2,320.0 L1146.2,318.4 L1146.2,316.7 L1146.1,315.1 L1146.1,313.5 L1146.0,311.9 L1145.9,310.2 L1145.8,308.6 L1145.6,307.0 L1145.5,305.4 L1145.3,303.7 L1145.1,302.1 L1144.9,300.5 L1144.7,298.8 L1144.4,297.2 L1144.1,295.6 L1143.8,294.0 L1143.5,292.3 L1143.2,290.7 L1142.9,289.1 L1142.5,287.4 L1142.1,285.8 L1141.7,284.2 L1141.3,282.6 L1140.9,280.9 L1140.4,279.3 L1140.0,277.7 L1139.5,276.1 L1139.0,274.4 L1138.4,272.8 L1137.9,271.2 L1137.3,269.5 L1136.8,267.9 L1136.2,266.3 L1135.6,264.7 L1134.9,263.0 L1134.3,261.4 L1133.6,259.8 L1132.9,258.2 L1132.2,256.5 L1131.5,254.9 L1130.8,253.3 L1130.0,251.6 L1129.2,250.0 L1128.4,248.4 L1127.6,246.8 L1126.8,245.1 L1126.0,243.5 L1125.1,241.9 L1124.2,240.3 L1123.4,238.6 L1122.4,237.0 L1121.5,235.4 L1120.6,233.7 L1119.6,232.1 L1118.6,230.5 L1117.6,228.9 L1116.6,227.2 L1115.6,225.6 L1114.6,224.0 L1113.5,222.4 L1112.4,220.7 L1111.4,219.1 L1110.3,217.5 L1109.1,215.8 L1108.0,214.2 L1106.8,212.6 L1105.7,211.0 L1104.5,209.3 L1103.3,207.7 L1102.1,206.1 L1100.8,204.4 L1099.6,202.8 L1098.3,201.2 L1097.1,199.6 L1095.8,197.9 L1094.5,196.3 L1093.2,194.7 L1091.8,193.1 L1090.5,191.4 L1089.1,189.8 L1087.7,188.2 L1086.3,186.5 L1084.9,184.9 L1083.5,183.3 L1082.1,181.7 L1080.6,180.0 L1079.2,178.4 L1077.7,176.8 L1076.2,175.2 L1074.7,173.5 L1073.2,171.9 L1071.7,170.3 L1070.1,168.6 L1068.6,167.0 L1067.0,165.4 L1065.5,163.8 L1063.9,162.1 L1062.3,160.5 L1060.6,158.9 L1059.0,157.2 L1057.4,155.6 L1055.7,154.0 L1054.1,152.4 L1052.4,150.7 L1050.7,149.1 L1049.0,147.5 L1047.3,145.9 L1045.6,144.2 L1043.9,142.6 L1042.1,141.0 L1040.4,139.3 L1038.6,137.7 L1036.8,136.1 L1035.1,134.5 L1033.3,132.8 L1031.5,131.2 L1029.7,129.6 L1027.8,128.0 L1026.0,126.3 L1024.2,124.7 L1022.3,123.1 L1020.5,121.4 L1018.6,119.8 L1016.7,118.2 L1014.8,116.6 L1012.9,114.9 L1011.0,113.3 L1009.1,111.7 L1007.2,110.1 L1005.3,108.4 L1003.3,106.8 L1001.4,105.2 L999.4,103.5 L997.5,101.9 L995.5,100.3 L993.6,98.7 L991.6,97.0 L989.6,95.4 L987.6,93.8 L985.6,92.2 L983.6,90.5 L981.6,88.9 L979.6,87.3 L977.5,85.6 L975.5,84.0 L973.5,82.4 L971.4,80.8 L969.4,79.1 L967.3,77.5 L965.3,75.9 L963.2,74.2 L961.2,72.6 L959.1,71.0 L957.0,69.4 L954.9,67.7 L952.9,66.1 L950.8,64.5 L948.7,62.9 L946.6,61.2 L944.5,59.6 L942.4,58.0 L940.3,56.3 L938.2,54.7 L936.1,53.1 L934.0,51.5 L931.9,49.8 L929.7,48.2 L927.6,46.6 L925.5,45.0 L923.4,43.3 L921.3,41.7 L919.1,40.1 L917.0,38.4 L914.9,36.8 L912.7,35.2 L910.6,33.6 L908.5,31.9 L906.4,30.3 L904.2,28.7 L902.1,27.1"/>
<path d="M902.1,613.0 L903.8,611.3 L905.5,609.7 L907.2,608.1 L908.9,606.4 L910.6,604.8 L912.3,603.2 L914.0,601.6 L915.7,599.9 L917.4,598.3 L919.1,596.7 L920.8,595.0 L922.5,593.4 L924.2,591.8 L925.9,590.2 L927.6,588.5 L929.3,586.9 L931.0,585.3 L932.7,583.7 L934.3,582.0 L936.0,580.4 L937.7,578.8 L939.4,577.1 L941.0,575.5 L942.7,573.9 L944.4,572.3 L946.0,570.6 L947.7,569.0 L949.3,567.4 L951.0,565.8 L952.6,564.1 L954.3,562.5 L955.9,560.9 L957.6,559.2 L959.2,557.6 L960.8,556.0 L962.5,554.4 L964.1,552.7 L965.7,551.1 L967.3,549.5 L968.9,547.9 L970.5,546.2 L972.1,544.6 L973.7,543.0 L975.3,541.3 L976.8,539.7 L978.4,538.1 L980.0,536.5 L981.5,534.8 L983.1,533.2 L984.6,531.6 L986.2,529.9 L987.7,528.3 L989.2,526.7 L990.8,525.1 L992.3,523.4 L993.8,521.8 L995.3,520.2 L996.8,518.6 L998.3,516.9 L999.8,515.3 L1001.2,513.7 L1002.7,512.0 L1004.1,510.4 L1005.6,508.8 L1007.0,507.2 L1008.5,505.5 L1009.9,503.9 L1011.3,502.3 L1012.7,500.7 L1014.1,499.0 L1015.5,497.4 L1016.9,495.8 L1018.3,494.1 L1019.6,492.5 L1021.0,490.9 L1022.3,489.3 L1023.7,487.6 L1025.0,486.0 L1026.3,484.4 L1027.6,482.8 L1028.9,481.1 L1030.2,479.5 L1031.5,477.9 L1032.8,476.2 L1034.0,474.6 L1035.3,473.0 L1036.5,471.4 L1037.8,469.7 L1039.0,468.1 L1040.2,466.5 L1041.4,464.8 L1042.6,463.2 L1043.8,461.6 L1044.9,460.0 L1046.1,458.3 L1047.2,456.7 L1048.4,455.1 L1049.5,453.5 L1050.6,451.8 L1051.7,450.2 L1052.8,448.6 L1053.9,446.9 L1054.9,445.3 L1056.0,443.7 L1057.0,442.1 L1058.1,440.4 L1059.1,438.8 L1060.1,437.2 L1061.1,435.6 L1062.1,433.9 L1063.1,432.3 L1064.0,430.7 L1065.0,429.0 L1065.9,427.4 L1066.8,425.8 L1067.7,424.2 L1068.6,422.5 L1069.5,420.9 L1070.4,419.3 L1071.2,417.6 L1072.1,416.0 L1072.9,414.4 L1073.7,412.8 L1074.5,411.1 L1075.3,409.5 L1076.1,407.9 L1076.9,406.3 L1077.6,404.6 L1078.4,403.0 L1079.1,401.4 L1079.8,399.7 L1080.5,398.1 L1081.2,396.5 L1081.9,394.9 L1082.5,393.2 L1083.2,391.6 L1083.8,390.0 L1084.4,388.4 L1085.0,386.7 L1085.6,385.1 L1086.2,383.5 L1086.8,381.8 L1087.3,380.2 L1087.8,378.6 L1088.4,377.0 L1088.9,375.3 L1089.4,373.7 L1089.8,372.1 L1090.3,370.5 L1090.7,368.8 L1091.2,367.2 L1091.6,365.6 L1092.0,363.9 L1092.4,362.3 L1092.8,360.7 L1093.1,359.1 L1093.5,357.4 L1093.8,355.8 L1094.1,354.2 L1094.4,352.6 L1094.7,350.9 L1095.0,349.3 L1095.3,347.7 L1095.5,346.0 L1095.7,344.4 L1095.9,342.8 L1096.1,341.2 L1096.3,339.5 L1096.5,337.9 L1096.7,336.3 L1096.8,334.6 L1096.9,333.0 L1097.0,331.4 L1097.1,329.8 L1097.2,328.1 L1097.3,326.5 L1097.3,324.9 L1097.4,323.3 L1097.4,321.6 L1097.4,320.0 L1097.4,318.4 L1097.4,316.7 L1097.3,315.1 L1097.3,313.5 L1097.2,311.9 L1097.1,310.2 L1097.0,308.6 L1096.9,307.0 L1096.8,305.4 L1096.7,303.7 L1096.5,302.1 L1096.3,300.5 L1096.1,298.8 L1095.9,297.2 L1095.7,295.6 L1095.5,294.0 L1095.3,292.3 L1095.0,290.7 L1094.7,289.1 L1094.4,287.4 L1094.1,285.8 L1093.8,284.2 L1093.5,282.6 L1093.1,280.9 L1092.8,279.3 L1092.4,277.7 L1092.0,276.1 L1091.6,274.4 L1091.2,272.8 L1090.7,271.2 L1090.3,269.5 L1089.8,267.9 L1089.4,266.3 L1088.9,264.7 L1088.4,263.0 L1087.8,261.4 L1087.3,259.8 L1086.8,258.2 L1086.2,256.5 L1085.6,254.9 L1085.0,253.3 L1084.4,251.6 L1083.8,250.0 L1083.2,248.4 L1082.5,246.8 L1081.9,245.1 L1081.2,243.5 L1080.5,241.9 L1079.8,240.3 L1079.1,238.6 L1078.4,237.0 L1077.6,235.4 L1076.9,233.7 L1076.1,232.1 L1075.3,230.5 L1074.5,228.9 L1073.7,227.2 L1072.9,225.6 L1072.1,224.0 L1071.2,222.4 L1070.4,220.7 L1069.5,219.1 L1068.6,217.5 L1067.7,215.8 L1066.8,214.2 L1065.9,212.6 L1065.0,211.0 L1064.0,209.3 L1063.1,207.7 L1062.1,206.1 L1061.1,204.4 L1060.1,202.8 L1059.1,201.2 L1058.1,199.6 L1057.0,197.9 L1056.0,196.3 L1054.9,194.7 L1053.9,193.1 L1052.8,191.4 L1051.7,189.8 L1050.6,188.2 L1049.5,186.5 L1048.4,184.9 L1047.2,183.3 L1046.1,181.7 L1044.9,180.0 L1043.8,178.4 L1042.6,176.8 L1041.4,175.2 L1040.2,173.5 L1039.0,171.9 L1037.8,170.3 L1036.5,168.6 L1035.3,167.0 L1034.0,165.4 L1032.8,163.8 L1031.5,162.1 L1030.2,160.5 L1028.9,158.9 L1027.6,157.2 L1026.3,155.6 L1025.0,154.0 L1023.7,152.4 L1022.3,150.7 L1021.0,149.1 L1019.6,147.5 L1018.3,145.9 L1016.9,144.2 L1015.5,142.6 L1014.1,141.0 L1012.7,139.3 L1011.3,137.7 L1009.9,136.1 L1008.5,134.5 L1007.0,132.8 L1005.6,131.2 L1004.1,129.6 L1002.7,128.0 L1001.2,126.3 L999.8,124.7 L998.3,123.1 L996.8,121.4 L995.3,119.8 L993.8,118.2 L992.3,116.6 L990.8,114.9 L989.2,113.3 L987.7,111.7 L986.2,110.1 L984.6,108.4 L983.1,106.8 L981.5,105.2 L980.0,103.5 L978.4,101.9 L976.8,100.3 L975.3,98.7 L973.7,97.0 L972.1,95.4 L970.5,93.8 L968.9,92.2 L967.3,90.5 L965.7,88.9 L964.1,87.3 L962.5,85.6 L960.8,84.0 L959.2,82.4 L957.6,80.8 L955.9,79.1 L954.3,77.5 L952.6,75.9 L951.0,74.2 L949.3,72.6 L947.7,71.0 L946.0,69.4 L944.4,67.7 L942.7,66.1 L941.0,64.5 L939.4,62.9 L937.7,61.2 L936.0,59.6 L934.3,58.0 L932.7,56.3 L931.0,54.7 L929.3,53.1 L927.6,51.5 L925.9,49.8 L924.2,48.2 L922.5,46.6 L920.8,45.0 L919.1,43.3 L917.4,41.7 L915.7,40.1 L914.0,38.4 L912.3,36.8 L910.6,35.2 L908.9,33.6 L907.2,31.9 L905.5,30.3 L903.8,28.7 L902.1,27.1"/>
<path d="M902.1,613.0 L903.4,611.3 L904.7,609.7 L905.9,608.1 L907.2,606.4 L908.5,604.8 L909.8,603.2 L911.0,601.6 L912.3,599.9 L913.6,598.3 L914.9,596.7 L916.1,595.0 L917.4,593.4 L918.7,591.8 L920.0,590.2 L921.2,588.5 L922.5,586.9 L923.8,585.3 L925.0,583.7 L926.3,582.0 L927.5,580.4 L928.8,578.8 L930.0,577.1 L931.3,575.5 L932.6,573.9 L933.8,572.3 L935.0,570.6 L936.3,569.0 L937.5,567.4 L938.8,565.8 L940.0,564.1 L941.2,562.5 L942.5,560.9 L943.7,559.2 L944.9,557.6 L946.1,556.0 L947.4,554.4 L948.6,552.7 L949.8,551.1 L951.0,549.5 L952.2,547.9 L953.4,546.2 L954.6,544.6 L955.8,543.0 L957.0,541.3 L958.2,539.7 L959.3,538.1 L960.5,536.5 L961.7,534.8 L962.8,533.2 L964.0,531.6 L965.2,529.9 L966.3,528.3 L967.5,526.7 L968.6,525.1 L969.7,523.4 L970.9,521.8 L972.0,520.2 L973.1,518.6 L974.2,516.9 L975.3,515.3 L976.4,513.7 L977.5,512.0 L978.6,510.4 L979.7,508.8 L980.8,507.2 L981.9,505.5 L982.9,503.9 L984.0,502.3 L985.1,500.7 L986.1,499.0 L987.2,497.4 L988.2,495.8 L989.2,494.1 L990.3,492.5 L991.3,490.9 L992.3,489.3 L993.3,487.6 L994.3,486.0 L995.3,484.4 L996.3,482.8 L997.2,481.1 L998.2,479.5 L999.2,477.9 L1000.1,476.2 L1001.1,474.6 L1002.0,473.0 L1002.9,471.4 L1003.9,469.7 L1004.8,468.1 L1005.7,466.5 L1006.6,464.8 L1007.5,463.2 L1008.3,461.6 L1009.2,460.0 L1010.1,458.3 L1011.0,456.7 L1011.8,455.1 L1012.6,453.5 L1013.5,451.8 L1014.3,450.2 L1015.1,448.6 L1015.9,446.9 L1016.7,445.3 L1017.5,443.7 L1018.3,442.1 L1019.1,440.4 L1019.8,438.8 L1020.6,437.2 L1021.3,435.6 L1022.1,433.9 L1022.8,432.3 L1023.5,430.7 L1024.2,429.0 L1024.9,427.4 L1025.6,425.8 L1026.3,424.2 L1027.0,422.5 L1027.7,420.9 L1028.3,419.3 L1029.0,417.6 L1029.6,416.0 L1030.2,414.4 L1030.8,412.8 L1031.4,411.1 L1032.0,409.5 L1032.6,407.9 L1033.2,406.3 L1033.8,404.6 L1034.3,403.0 L1034.9,401.4 L1035.4,399.7 L1035.9,398.1 L1036.4,396.5 L1036.9,394.9 L1037.4,393.2 L1037.9,391.6 L1038.4,390.0 L1038.8,388.4 L1039.3,386.7 L1039.7,385.1 L1040.2,383.5 L1040.6,381.8 L1041.0,380.2 L1041.4,378.6 L1041.8,377.0 L1042.2,375.3 L1042.5,373.7 L1042.9,372.1 L1043.2,370.5 L1043.6,368.8 L1043.9,367.2 L1044.2,365.6 L1044.5,363.9 L1044.8,362.3 L1045.1,360.7 L1045.4,359.1 L1045.6,357.4 L1045.9,355.8 L1046.1,354.2 L1046.3,352.6 L1046.6,350.9 L1046.8,349.3 L1047.0,347.7 L1047.1,346.0 L1047.3,344.4 L1047.5,342.8 L1047.6,341.2 L1047.8,339.5 L1047.9,337.9 L1048.0,336.3 L1048.1,334.6 L1048.2,333.0 L1048.3,331.4 L1048.4,329.8 L1048.4,328.1 L1048.5,326.5 L1048.5,324.9 L1048.6,323.3 L1048.6,321.6 L1048.6,320.0 L1048.6,318.4 L1048.6,316.7 L1048.5,315.1 L1048.5,313.5 L1048.4,311.9 L1048.4,310.2 L1048.3,308.6 L1048.2,307.0 L1048.1,305.4 L1048.0,303.7 L1047.9,302.1 L1047.8,300.5 L1047.6,298.8 L1047.5,297.2 L1047.3,295.6 L1047.1,294.0 L1047.0,292.3 L1046.8,290.7 L1046.6,289.1 L1046.3,287.4 L1046.1,285.8 L1045.9,284.2 L1045.6,282.6 L1045.4,280.9 L1045.1,279.3 L1044.8,277.7 L1044.5,276.1 L1044.2,274.4 L1043.9,272.8 L1043.6,271.2 L1043.2,269.5 L1042.9,267.9 L1042.5,266.3 L1042.2,264.7 L1041.8,263.0 L1041.4,261.4 L1041.0,259.8 L1040.6,258.2 L1040.2,256.5 L1039.7,254.9 L1039.3,253.3 L1038.8,251.6 L1038.4,250.0 L1037.9,248.4 L1037.4,246.8 L1036.9,245.1 L1036.4,243.5 L1035.9,241.9 L1035.4,240.3 L1034.9,238.6 L1034.3,237.0 L1033.8,235.4 L1033.2,233.7 L1032.6,232.1 L1032.0,230.5 L1031.4,228.9 L1030.8,227.2 L1030.2,225.6 L1029.6,224.0 L1029.0,222.4 L1028.3,220.7 L1027.7,219.1 L1027.0,217.5 L1026.3,215.8 L1025.6,214.2 L1024.9,212.6 L1024.2,211.0 L1023.5,209.3 L1022.8,207.7 L1022.1,206.1 L1021.3,204.4 L1020.6,202.8 L1019.8,201.2 L1019.1,199.6 L1018.3,197.9 L1017.5,196.3 L1016.7,194.7 L1015.9,193.1 L1015.1,191.4 L1014.3,189.8 L1013.5,188.2 L1012.6,186.5 L1011.8,184.9 L1011.0,183.3 L1010.1,181.7 L1009.2,180.0 L1008.3,178.4 L1007.5,176.8 L1006.6,175.2 L1005.7,173.5 L1004.8,171.9 L1003.9,170.3 L1002.9,168.6 L1002.0,167.0 L1001.1,165.4 L1000.1,163.8 L999.2,162.1 L998.2,160.5 L997.2,158.9 L996.3,157.2 L995.3,155.6 L994.3,154.0 L993.3,152.4 L992.3,150.7 L991.3,149.1 L990.3,147.5 L989.2,145.9 L988.2,144.2 L987.2,142.6 L986.1,141.0 L985.1,139.3 L984.0,137.7 L982.9,136.1 L981.9,134.5 L980.8,132.8 L979.7,131.2 L978.6,129.6 L977.5,128.0 L976.4,126.3 L975.3,124.7 L974.2,123.1 L973.1,121.4 L972.0,119.8 L970.9,118.2 L969.7,116.6 L968.6,114.9 L967.5,113.3 L966.3,111.7 L965.2,110.1 L964.0,108.4 L962.8,106.8 L961.7,105.2 L960.5,103.5 L959.3,101.9 L958.2,100.3 L957.0,98.7 L955.8,97.0 L954.6,95.4 L953.4,93.8 L952.2,92.2 L951.0,90.5 L949.8,88.9 L948.6,87.3 L947.4,85.6 L946.1,84.0 L944.9,82.4 L943.7,80.8 L942.5,79.1 L941.2,77.5 L940.0,75.9 L938.8,74.2 L937.5,72.6 L936.3,71.0 L935.0,69.4 L933.8,67.7 L932.6,66.1 L931.3,64.5 L930.0,62.9 L928.8,61.2 L927.5,59.6 L926.3,58.0 L925.0,56.3 L923.8,54.7 L922.5,53.1 L921.2,51.5 L920.0,49.8 L918.7,48.2 L917.4,46.6 L916.1,45.0 L914.9,43.3 L913.6,41.7 L912.3,40.1 L911.0,38.4 L909.8,36.8 L908.5,35.2 L907.2,33.6 L905.9,31.9 L904.7,30.3 L903.4,28.7 L902.1,27.1"/>
<path d="M902.1,613.0 L903.0,611.3 L903.8,609.7 L904.7,608.1 L905.5,606.4 L906.4,604.8 L907.2,603.2 L908.1,601.6 L908.9,599.9 L909.8,598.3 L910.6,596.7 L911.5,595.0 L912.3,593.4 L913.2,591.8 L914.0,590.2 L914.8,588.5 L915.7,586.9 L916.5,585.3 L917.4,583.7 L918.2,582.0 L919.1,580.4 L919.9,578.8 L920.7,577.1 L921.6,575.5 L922.4,573.9 L923.2,572.3 L924.1,570.6 L924.9,569.0 L925.7,567.4 L926.5,565.8 L927.4,564.1 L928.2,562.5 L929.0,560.9 L929.8,559.2 L930.7,557.6 L931.5,556.0 L932.3,554.4 L933.1,552.7 L933.9,551.1 L934.7,549.5 L935.5,547.9 L936.3,546.2 L937.1,544.6 L937.9,543.0 L938.7,541.3 L939.5,539.7 L940.3,538.1 L941.0,536.5 L941.8,534.8 L942.6,533.2 L943.4,531.6 L944.1,529.9 L944.9,528.3 L945.7,526.7 L946.4,525.1 L947.2,523.4 L947.9,521.8 L948.7,520.2 L949.4,518.6 L950.2,516.9 L950.9,515.3 L951.7,513.7 L952.4,512.0 L953.1,510.4 L953.8,508.8 L954.6,507.2 L955.3,505.5 L956.0,503.9 L956.7,502.3 L957.4,500.7 L958.1,499.0 L958.8,497.4 L959.5,495.8 L960.2,494.1 L960.9,492.5 L961.5,490.9 L962.2,489.3 L962.9,487.6 L963.6,486.0 L964.2,484.4 L964.9,482.8 L965.5,481.1 L966.2,479.5 L966.8,477.9 L967.4,476.2 L968.1,474.6 L968.7,473.0 L969.3,471.4 L969.9,469.7 L970.5,468.1 L971.1,466.5 L971.7,464.8 L972.3,463.2 L972.9,461.6 L973.5,460.0 L974.1,458.3 L974.7,456.7 L975.2,455.1 L975.8,453.5 L976.4,451.8 L976.9,450.2 L977.4,448.6 L978.0,446.9 L978.5,445.3 L979.0,443.7 L979.6,442.1 L980.1,440.4 L980.6,438.8 L981.1,437.2 L981.6,435.6 L982.1,433.9 L982.6,432.3 L983.1,430.7 L983.5,429.0 L984.0,427.4 L984.5,425.8 L984.9,424.2 L985.4,422.5 L985.8,420.9 L986.2,419.3 L986.7,417.6 L987.1,416.0 L987.5,414.4 L987.9,412.8 L988.3,411.1 L988.7,409.5 L989.1,407.9 L989.5,406.3 L989.9,404.6 L990.2,403.0 L990.6,401.4 L991.0,399.7 L991.3,398.1 L991.7,396.5 L992.0,394.9 L992.3,393.2 L992.6,391.6 L993.0,390.0 L993.3,388.4 L993.6,386.7 L993.9,385.1 L994.1,383.5 L994.4,381.8 L994.7,380.2 L995.0,378.6 L995.2,377.0 L995.5,375.3 L995.7,373.7 L996.0,372.1 L996.2,370.5 L996.4,368.8 L996.6,367.2 L996.8,365.6 L997.1,363.9 L997.2,362.3 L997.4,360.7 L997.6,359.1 L997.8,357.4 L998.0,355.8 L998.1,354.2 L998.3,352.6 L998.4,350.9 L998.5,349.3 L998.7,347.7 L998.8,346.0 L998.9,344.4 L999.0,342.8 L999.1,341.2 L999.2,339.5 L999.3,337.9 L999.4,336.3 L999.4,334.6 L999.5,333.0 L999.6,331.4 L999.6,329.8 L999.7,328.1 L999.7,326.5 L999.7,324.9 L999.7,323.3 L999.7,321.6 L999.8,320.0 L999.7,318.4 L999.7,316.7 L999.7,315.1 L999.7,313.5 L999.7,311.9 L999.6,310.2 L999.6,308.6 L999.5,307.0 L999.4,305.4 L999.4,303.7 L999.3,302.1 L999.2,300.5 L999.1,298.8 L999.0,297.2 L998.9,295.6 L998.8,294.0 L998.7,292.3 L998.5,290.7 L998.4,289.1 L998.3,287.4 L998.1,285.8 L998.0,284.2 L997.8,282.6 L997.6,280.9 L997.4,279.3 L997.2,277.7 L997.1,276.1 L996.8,274.4 L996.6,272.8 L996.4,271.2 L996.2,269.5 L996.0,267.9 L995.7,266.3 L995.5,264.7 L995.2,263.0 L995.0,261.4 L994.7,259.8 L994.4,258.2 L994.1,256.5 L993.9,254.9 L993.6,253.3 L993.3,251.6 L993.0,250.0 L992.6,248.4 L992.3,246.8 L992.0,245.1 L991.7,243.5 L991.3,241.9 L991.0,240.3 L990.6,238.6 L990.2,237.0 L989.9,235.4 L989.5,233.7 L989.1,232.1 L988.7,230.5 L988.3,228.9 L987.9,227.2 L987.5,225.6 L987.1,224.0 L986.7,222.4 L986.2,220.7 L985.8,219.1 L985.4,217.5 L984.9,215.8 L984.5,214.2 L984.0,212.6 L983.5,211.0 L983.1,209.3 L982.6,207.7 L982.1,206.1 L981.6,204.4 L981.1,202.8 L980.6,201.2 L980.1,199.6 L979.6,197.9 L979.0,196.3 L978.5,194.7 L978.0,193.1 L977.4,191.4 L976.9,189.8 L976.4,188.2 L975.8,186.5 L975.2,184.9 L974.7,183.3 L974.1,181.7 L973.5,180.0 L972.9,178.4 L972.3,176.8 L971.7,175.2 L971.1,173.5 L970.5,171.9 L969.9,170.3 L969.3,168.6 L968.7,167.0 L968.1,165.4 L967.4,163.8 L966.8,162.1 L966.2,160.5 L965.5,158.9 L964.9,157.2 L964.2,155.6 L963.6,154.0 L962.9,152.4 L962.2,150.7 L961.5,149.1 L960.9,147.5 L960.2,145.9 L959.5,144.2 L958.8,142.6 L958.1,141.0 L957.4,139.3 L956.7,137.7 L956.0,136.1 L955.3,134.5 L954.6,132.8 L953.8,131.2 L953.1,129.6 L952.4,128.0 L951.7,126.3 L950.9,124.7 L950.2,123.1 L949.4,121.4 L948.7,119.8 L947.9,118.2 L947.2,116.6 L946.4,114.9 L945.7,113.3 L944.9,111.7 L944.1,110.1 L943.4,108.4 L942.6,106.8 L941.8,105.2 L941.0,103.5 L940.3,101.9 L939.5,100.3 L938.7,98.7 L937.9,97.0 L937.1,95.4 L936.3,93.8 L935.5,92.2 L934.7,90.5 L933.9,88.9 L933.1,87.3 L932.3,85.6 L931.5,84.0 L930.7,82.4 L929.8,80.8 L929.0,79.1 L928.2,77.5 L927.4,75.9 L926.5,74.2 L925.7,72.6 L924.9,71.0 L924.1,69.4 L923.2,67.7 L922.4,66.1 L921.6,64.5 L920.7,62.9 L919.9,61.2 L919.1,59.6 L918.2,58.0 L917.4,56.3 L916.5,54.7 L915.7,53.1 L914.8,51.5 L914.0,49.8 L913.2,48.2 L912.3,46.6 L911.5,45.0 L910.6,43.3 L909.8,41.7 L908.9,40.1 L908.1,38.4 L907.2,36.8 L906.4,35.2 L905.5,33.6 L904.7,31.9 L903.8,30.3 L903.0,28.7 L902.1,27.1"/>
<path d="M902.1,613.0 L902.5,611.3 L903.0,609.7 L903.4,608.1 L903.8,606.4 L904.2,604.8 L904.7,603.2 L905.1,601.6 L905.5,599.9 L905.9,598.3 L906.4,596.7 L906.8,595.0 L907.2,593.4 L907.6,591.8 L908.1,590.2 L908.5,588.5 L908.9,586.9 L909.3,585.3 L909.7,583.7 L910.2,582.0 L910.6,580.4 L911.0,578.8 L911.4,577.1 L911.8,575.5 L912.3,573.9 L912.7,572.3 L913.1,570.6 L913.5,569.0 L913.9,567.4 L914.3,565.8 L914.7,564.1 L915.1,562.5 L915.6,560.9 L916.0,559.2 L916.4,557.6 L916.8,556.0 L917.2,554.4 L917.6,552.7 L918.0,551.1 L918.4,549.5 L918.8,547.9 L919.2,546.2 L919.6,544.6 L920.0,543.0 L920.4,541.3 L920.8,539.7 L921.2,538.1 L921.6,536.5 L922.0,534.8 L922.3,533.2 L922.7,531.6 L923.1,529.9 L923.5,528.3 L923.9,526.7 L924.3,525.1 L924.6,523.4 L925.0,521.8 L925.4,520.2 L925.8,518.6 L926.1,516.9 L926.5,515.3 L926.9,513.7 L927.2,512.0 L927.6,510.4 L928.0,508.8 L928.3,507.2 L928.7,505.5 L929.0,503.9 L929.4,502.3 L929.8,500.7 L930.1,499.0 L930.5,497.4 L930.8,495.8 L931.1,494.1 L931.5,492.5 L931.8,490.9 L932.2,489.3 L932.5,487.6 L932.8,486.0 L933.2,484.4 L933.5,482.8 L933.8,481.1 L934.1,479.5 L934.5,477.9 L934.8,476.2 L935.1,474.6 L935.4,473.0 L935.7,471.4 L936.0,469.7 L936.3,468.1 L936.6,466.5 L936.9,464.8 L937.2,463.2 L937.5,461.6 L937.8,460.0 L938.1,458.3 L938.4,456.7 L938.7,455.1 L938.9,453.5 L939.2,451.8 L939.5,450.2 L939.8,448.6 L940.0,446.9 L940.3,445.3 L940.6,443.7 L940.8,442.1 L941.1,440.4 L941.3,438.8 L941.6,437.2 L941.8,435.6 L942.1,433.9 L942.3,432.3 L942.6,430.7 L942.8,429.0 L943.0,427.4 L943.3,425.8 L943.5,424.2 L943.7,422.5 L944.0,420.9 L944.2,419.3 L944.4,417.6 L944.6,416.0 L944.8,414.4 L945.0,412.8 L945.2,411.1 L945.4,409.5 L945.6,407.9 L945.8,406.3 L946.0,404.6 L946.2,403.0 L946.4,401.4 L946.5,399.7 L946.7,398.1 L946.9,396.5 L947.0,394.9 L947.2,393.2 L947.4,391.6 L947.5,390.0 L947.7,388.4 L947.8,386.7 L948.0,385.1 L948.1,383.5 L948.3,381.8 L948.4,380.2 L948.5,378.6 L948.7,377.0 L948.8,375.3 L948.9,373.7 L949.0,372.1 L949.1,370.5 L949.3,368.8 L949.4,367.2 L949.5,365.6 L949.6,363.9 L949.7,362.3 L949.8,360.7 L949.9,359.1 L949.9,357.4 L950.0,355.8 L950.1,354.2 L950.2,352.6 L950.3,350.9 L950.3,349.3 L950.4,347.7 L950.4,346.0 L950.5,344.4 L950.6,342.8 L950.6,341.2 L950.7,339.5 L950.7,337.9 L950.7,336.3 L950.8,334.6 L950.8,333.0 L950.8,331.4 L950.9,329.8 L950.9,328.1 L950.9,326.5 L950.9,324.9 L950.9,323.3 L950.9,321.6 L950.9,320.0 L950.9,318.4 L950.9,316.7 L950.9,315.1 L950.9,313.5 L950.9,311.9 L950.9,310.2 L950.8,308.6 L950.8,307.0 L950.8,305.4 L950.7,303.7 L950.7,302.1 L950.7,300.5 L950.6,298.8 L950.6,297.2 L950.5,295.6 L950.4,294.0 L950.4,292.3 L950.3,290.7 L950.3,289.1 L950.2,287.4 L950.1,285.8 L950.0,284.2 L949.9,282.6 L949.9,280.9 L949.8,279.3 L949.7,277.7 L949.6,276.1 L949.5,274.4 L949.4,272.8 L949.3,271.2 L949.1,269.5 L949.0,267.9 L948.9,266.3 L948.8,264.7 L948.7,263.0 L948.5,261.4 L948.4,259.8 L948.3,258.2 L948.1,256.5 L948.0,254.9 L947.8,253.3 L947.7,251.6 L947.5,250.0 L947.4,248.4 L947.2,246.8 L947.0,245.1 L946.9,243.5 L946.7,241.9 L946.5,240.3 L946.4,238.6 L946.2,237.0 L946.0,235.4 L945.8,233.7 L945.6,232.1 L945.4,230.5 L945.2,228.9 L945.0,227.2 L944.8,225.6 L944.6,224.0 L944.4,222.4 L944.2,220.7 L944.0,219.1 L943.7,217.5 L943.5,215.8 L943.3,214.2 L943.0,212.6 L942.8,211.0 L942.6,209.3 L942.3,207.7 L942.1,206.1 L941.8,204.4 L941.6,202.8 L941.3,201.2 L941.1,199.6 L940.8,197.9 L940.6,196.3 L940.3,194.7 L940.0,193.1 L939.8,191.4 L939.5,189.8 L939.2,188.2 L938.9,186.5 L938.7,184.9 L938.4,183.3 L938.1,181.7 L937.8,180.0 L937.5,178.4 L937.2,176.8 L936.9,175.2 L936.6,173.5 L936.3,171.9 L936.0,170.3 L935.7,168.6 L935.4,167.0 L935.1,165.4 L934.8,163.8 L934.5,162.1 L934.1,160.5 L933.8,158.9 L933.5,157.2 L933.2,155.6 L932.8,154.0 L932.5,152.4 L932.2,150.7 L931.8,149.1 L931.5,147.5 L931.1,145.9 L930.8,144.2 L930.5,142.6 L930.1,141.0 L929.8,139.3 L929.4,137.7 L929.0,136.1 L928.7,134.5 L928.3,132.8 L928.0,131.2 L927.6,129.6 L927.2,128.0 L926.9,126.3 L926.5,124.7 L926.1,123.1 L925.8,121.4 L925.4,119.8 L925.0,118.2 L924.6,116.6 L924.3,114.9 L923.9,113.3 L923.5,111.7 L923.1,110.1 L922.7,108.4 L922.3,106.8 L922.0,105.2 L921.6,103.5 L921.2,101.9 L920.8,100.3 L920.4,98.7 L920.0,97.0 L919.6,95.4 L919.2,93.8 L918.8,92.2 L918.4,90.5 L918.0,88.9 L917.6,87.3 L917.2,85.6 L916.8,84.0 L916.4,82.4 L916.0,80.8 L915.6,79.1 L915.1,77.5 L914.7,75.9 L914.3,74.2 L913.9,72.6 L913.5,71.0 L913.1,69.4 L912.7,67.7 L912.3,66.1 L911.8,64.5 L911.4,62.9 L911.0,61.2 L910.6,59.6 L910.2,58.0 L909.7,56.3 L909.3,54.7 L908.9,53.1 L908.5,51.5 L908.1,49.8 L907.6,48.2 L907.2,46.6 L906.8,45.0 L906.4,43.3 L905.9,41.7 L905.5,40.1 L905.1,38.4 L904.7,36.8 L904.2,35.2 L903.8,33.6 L903.4,31.9 L903.0,30.3 L902.5,28.7 L902.1,27.1"/>
<path d="M902.1,613.0 L902.1,611.3 L902.1,609.7 L902.1,608.1 L902.1,606.4 L902.1,604.8 L902.1,603.2 L902.1,601.6 L902.1,599.9 L902.1,598.3 L902.1,596.7 L902.1,595.0 L902.1,593.4 L902.1,591.8 L902.1,590.2 L902.1,588.5 L902.1,586.9 L902.1,585.3 L902.1,583.7 L902.1,582.0 L902.1,580.4 L902.1,578.8 L902.1,577.1 L902.1,575.5 L902.1,573.9 L902.1,572.3 L902.1,570.6 L902.1,569.0 L902.1,567.4 L902.1,565.8 L902.1,564.1 L902.1,562.5 L902.1,560.9 L902.1,559.2 L902.1,557.6 L902.1,556.0 L902.1,554.4 L902.1,552.7 L902.1,551.1 L902.1,549.5 L902.1,547.9 L902.1,546.2 L902.1,544.6 L902.1,543.0 L902.1,541.3 L902.1,539.7 L902.1,538.1 L902.1,536.5 L902.1,534.8 L902.1,533.2 L902.1,531.6 L902.1,529.9 L902.1,528.3 L902.1,526.7 L902.1,525.1 L902.1,523.4 L902.1,521.8 L902.1,520.2 L902.1,518.6 L902.1,516.9 L902.1,515.3 L902.1,513.7 L902.1,512.0 L902.1,510.4 L902.1,508.8 L902.1,507.2 L902.1,505.5 L902.1,503.9 L902.1,502.3 L902.1,500.7 L902.1,499.0 L902.1,497.4 L902.1,495.8 L902.1,494.1 L902.1,492.5 L902.1,490.9 L902.1,489.3 L902.1,487.6 L902.1,486.0 L902.1,484.4 L902.1,482.8 L902.1,481.1 L902.1,479.5 L902.1,477.9 L902.1,476.2 L902.1,474.6 L902.1,473.0 L902.1,471.4 L902.1,469.7 L902.1,468.1 L902.1,466.5 L902.1,464.8 L902.1,463.2 L902.1,461.6 L902.1,460.0 L902.1,458.3 L902.1,456.7 L902.1,455.1 L902.1,453.5 L902.1,451.8 L902.1,450.2 L902.1,448.6 L902.1,446.9 L902.1,445.3 L902.1,443.7 L902.1,442.1 L902.1,440.4 L902.1,438.8 L902.1,437.2 L902.1,435.6 L902.1,433.9 L902.1,432.3 L902.1,430.7 L902.1,429.0 L902.1,427.4 L902.1,425.8 L902.1,424.2 L902.1,422.5 L902.1,420.9 L902.1,419.3 L902.1,417.6 L902.1,416.0 L902.1,414.4 L902.1,412.8 L902.1,411.1 L902.1,409.5 L902.1,407.9 L902.1,406.3 L902.1,404.6 L902.1,403.0 L902.1,401.4 L902.1,399.7 L902.1,398.1 L902.1,396.5 L902.1,394.9 L902.1,393.2 L902.1,391.6 L902.1,390.0 L902.1,388.4 L902.1,386.7 L902.1,385.1 L902.1,383.5 L902.1,381.8 L902.1,380.2 L902.1,378.6 L902.1,377.0 L902.1,375.3 L902.1,373.7 L902.1,372.1 L902.1,370.5 L902.1,368.8 L902.1,367.2 L902.1,365.6 L902.1,363.9 L902.1,362.3 L902.1,360.7 L902.1,359.1 L902.1,357.4 L902.1,355.8 L902.1,354.2 L902.1,352.6 L902.1,350.9 L902.1,349.3 L902.1,347.7 L902.1,346.0 L902.1,344.4 L902.1,342.8 L902.1,341.2 L902.1,339.5 L902.1,337.9 L902.1,336.3 L902.1,334.6 L902.1,333.0 L902.1,331.4 L902.1,329.8 L902.1,328.1 L902.1,326.5 L902.1,324.9 L902.1,323.3 L902.1,321.6 L902.1,320.0 L902.1,318.4 L902.1,316.7 L902.1,315.1 L902.1,313.5 L902.1,311.9 L902.1,310.2 L902.1,308.6 L902.1,307.0 L902.1,305.4 L902.1,303.7 L902.1,302.1 L902.1,300.5 L902.1,298.8 L902.1,297.2 L902.1,295.6 L902.1,294.0 L902.1,292.3 L902.1,290.7 L902.1,289.1 L902.1,287.4 L902.1,285.8 L902.1,284.2 L902.1,282.6 L902.1,280.9 L902.1,279.3 L902.1,277.7 L902.1,276.1 L902.1,274.4 L902.1,272.8 L902.1,271.2 L902.1,269.5 L902.1,267.9 L902.1,266.3 L902.1,264.7 L902.1,263.0 L902.1,261.4 L902.1,259.8 L902.1,258.2 L902.1,256.5 L902.1,254.9 L902.1,253.3 L902.1,251.6 L902.1,250.0 L902.1,248.4 L902.1,246.8 L902.1,245.1 L902.1,243.5 L902.1,241.9 L902.1,240.3 L902.1,238.6 L902.1,237.0 L902.1,235.4 L902.1,233.7 L902.1,232.1 L902.1,230.5 L902.1,228.9 L902.1,227.2 L902.1,225.6 L902.1,224.0 L902.1,222.4 L902.1,220.7 L902.1,219.1 L902.1,217.5 L902.1,215.8 L902.1,214.2 L902.1,212.6 L902.1,211.0 L902.1,209.3 L902.1,207.7 L902.1,206.1 L902.1,204.4 L902.1,202.8 L902.1,201.2 L902.1,199.6 L902.1,197.9 L902.1,196.3 L902.1,194.7 L902.1,193.1 L902.1,191.4 L902.1,189.8 L902.1,188.2 L902.1,186.5 L902.1,184.9 L902.1,183.3 L902.1,181.7 L902.1,180.0 L902.1,178.4 L902.1,176.8 L902.1,175.2 L902.1,173.5 L902.1,171.9 L902.1,170.3 L902.1,168.6 L902.1,167.0 L902.1,165.4 L902.1,163.8 L902.1,162.1 L902.1,160.5 L902.1,158.9 L902.1,157.2 L902.1,155.6 L902.1,154.0 L902.1,152.4 L902.1,150.7 L902.1,149.1 L902.1,147.5 L902.1,145.9 L902.1,144.2 L902.1,142.6 L902.1,141.0 L902.1,139.3 L902.1,137.7 L902.1,136.1 L902.1,134.5 L902.1,132.8 L902.1,131.2 L902.1,129.6 L902.1,128.0 L902.1,126.3 L902.1,124.7 L902.1,123.1 L902.1,121.4 L902.1,119.8 L902.1,118.2 L902.1,116.6 L902.1,114.9 L902.1,113.3 L902.1,111.7 L902.1,110.1 L902.1,108.4 L902.1,106.8 L902.1,105.2 L902.1,103.5 L902.1,101.9 L902.1,100.3 L902.1,98.7 L902.1,97.0 L902.1,95.4 L902.1,93.8 L902.1,92.2 L902.1,90.5 L902.1,88.9 L902.1,87.3 L902.1,85.6 L902.1,84.0 L902.1,82.4 L902.1,80.8 L902.1,79.1 L902.1,77.5 L902.1,75.9 L902.1,74.2 L902.1,72.6 L902.1,71.0 L902.1,69.4 L902.1,67.7 L902.1,66.1 L902.1,64.5 L902.1,62.9 L902.1,61.2 L902.1,59.6 L902.1,58.0 L902.1,56.3 L902.1,54.7 L902.1,53.1 L902.1,51.5 L902.1,49.8 L902.1,48.2 L902.1,46.6 L902.1,45.0 L902.1,43.3 L902.1,41.7 L902.1,40.1 L902.1,38.4 L902.1,36.8 L902.1,35.2 L902.1,33.6 L902.1,31.9 L902.1,30.3 L902.1,28.7 L902.1,27.1"/>
<path d="M902.1,613.0 L901.7,611.3 L901.2,609.7 L900.8,608.1 L900.4,606.4 L900.0,604.8 L899.5,603.2 L899.1,601.6 L898.7,599.9 L898.3,598.3 L897.8,596.7 L897.4,595.0 L897.0,593.4 L896.6,591.8 L896.1,590.2 L895.7,588.5 L895.3,586.9 L894.9,585.3 L894.5,583.7 L894.0,582.0 L893.6,580.4 L893.2,578.8 L892.8,577.1 L892.4,575.5 L891.9,573.9 L891.5,572.3 L891.1,570.6 L890.7,569.0 L890.3,567.4 L889.9,565.8 L889.5,564.1 L889.1,562.5 L888.6,560.9 L888.2,559.2 L887.8,557.6 L887.4,556.0 L887.0,554.4 L886.6,552.7 L886.2,551.1 L885.8,549.5 L885.4,547.9 L885.0,546.2 L884.6,544.6 L884.2,543.0 L883.8,541.3 L883.4,539.7 L883.0,538.1 L882.6,536.5 L882.2,534.8 L881.9,533.2 L881.5,531.6 L881.1,529.9 L880.7,528.3 L880.3,526.7 L879.9,525.1 L879.6,523.4 L879.2,521.8 L878.8,520.2 L878.4,518.6 L878.1,516.9 L877.7,515.3 L877.3,513.7 L877.0,512.0 L876.6,510.4 L876.2,508.8 L875.9,507.2 L875.5,505.5 L875.2,503.9 L874.8,502.3 L874.4,500.7 L874.1,499.0 L873.7,497.4 L873.4,495.8 L873.1,494.1 L872.7,492.5 L872.4,490.9 L872.0,489.3 L871.7,487.6 L871.4,486.0 L871.0,484.4 L870.7,482.8 L870.4,481.1 L870.1,479.5 L869.7,477.9 L869.4,476.2 L869.1,474.6 L868.8,473.0 L868.5,471.4 L868.2,469.7 L867.9,468.1 L867.6,466.5 L867.3,464.8 L867.0,463.2 L866.7,461.6 L866.4,460.0 L866.1,458.3 L865.8,456.7 L865.5,455.1 L865.3,453.5 L865.0,451.8 L864.7,450.2 L864.4,448.6 L864.2,446.9 L863.9,445.3 L863.6,443.7 L863.4,442.1 L863.1,440.4 L862.9,438.8 L862.6,437.2 L862.4,435.6 L862.1,433.9 L861.9,432.3 L861.6,430.7 L861.4,429.0 L861.2,427.4 L860.9,425.8 L860.7,424.2 L860.5,422.5 L860.2,420.9 L860.0,419.3 L859.8,417.6 L859.6,416.0 L859.4,414.4 L859.2,412.8 L859.0,411.1 L858.8,409.5 L858.6,407.9 L858.4,406.3 L858.2,404.6 L858.0,403.0 L857.8,401.4 L857.7,399.7 L857.5,398.1 L857.3,396.5 L857.2,394.9 L857.0,393.2 L856.8,391.6 L856.7,390.0 L856.5,388.4 L856.4,386.7 L856.2,385.1 L856.1,383.5 L855.9,381.8 L855.8,380.2 L855.7,378.6 L855.5,377.0 L855.4,375.3 L855.3,373.7 L855.2,372.1 L855.1,370.5 L854.9,368.8 L854.8,367.2 L854.7,365.6 L854.6,363.9 L854.5,362.3 L854.4,360.7 L854.3,359.1 L854.3,357.4 L854.2,355.8 L854.1,354.2 L854.0,352.6 L853.9,350.9 L853.9,349.3 L853.8,347.7 L853.8,346.0 L853.7,344.4 L853.6,342.8 L853.6,341.2 L853.5,339.5 L853.5,337.9 L853.5,336.3 L853.4,334.6 L853.4,333.0 L853.4,331.4 L853.3,329.8 L853.3,328.1 L853.3,326.5 L853.3,324.9 L853.3,323.3 L853.3,321.6 L853.3,320.0 L853.3,318.4 L853.3,316.7 L853.3,315.1 L853.3,313.5 L853.3,311.9 L853.3,310.2 L853.4,308.6 L853.4,307.0 L853.4,305.4 L853.5,303.7 L853.5,302.1 L853.5,300.5 L853.6,298.8 L853.6,297.2 L853.7,295.6 L853.8,294.0 L853.8,292.3 L853.9,290.7 L853.9,289.1 L854.0,287.4 L854.1,285.8 L854.2,284.2 L854.3,282.6 L854.3,280.9 L854.4,279.3 L854.5,277.7 L854.6,276.1 L854.7,274.4 L854.8,272.8 L854.9,271.2 L855.1,269.5 L855.2,267.9 L855.3,266.3 L855.4,264.7 L855.5,263.0 L855.7,261.4 L855.8,259.8 L855.9,258.2 L856.1,256.5 L856.2,254.9 L856.4,253.3 L856.5,251.6 L856.7,250.0 L856.8,248.4 L857.0,246.8 L857.2,245.1 L857.3,243.5 L857.5,241.9 L857.7,240.3 L857.8,238.6 L858.0,237.0 L858.2,235.4 L858.4,233.7 L858.6,232.1 L858.8,230.5 L859.0,228.9 L859.2,227.2 L859.4,225.6 L859.6,224.0 L859.8,222.4 L860.0,220.7 L860.2,219.1 L860.5,217.5 L860.7,215.8 L860.9,214.2 L861.2,212.6 L861.4,211.0 L861.6,209.3 L861.9,207.7 L862.1,206.1 L862.4,204.4 L862.6,202.8 L862.9,201.2 L863.1,199.6 L863.4,197.9 L863.6,196.3 L863.9,194.7 L864.2,193.1 L864.4,191.4 L864.7,189.8 L865.0,188.2 L865.3,186.5 L865.5,184.9 L865.8,183.3 L866.1,181.7 L866.4,180.0 L866.7,178.4 L867.0,176.8 L867.3,175.2 L867.6,173.5 L867.9,171.9 L868.2,170.3 L868.5,168.6 L868.8,167.0 L869.1,165.4 L869.4,163.8 L869.7,162.1 L870.1,160.5 L870.4,158.9 L870.7,157.2 L871.0,155.6 L871.4,154.0 L871.7,152.4 L872.0,150.7 L872.4,149.1 L872.7,147.5 L873.1,145.9 L873.4,144.2 L873.7,142.6 L874.1,141.0 L874.4,139.3 L874.8,137.7 L875.2,136.1 L875.5,134.5 L875.9,132.8 L876.2,131.2 L876.6,129.6 L877.0,128.0 L877.3,126.3 L877.7,124.7 L878.1,123.1 L878.4,121.4 L878.8,119.8 L879.2,118.2 L879.6,116.6 L879.9,114.9 L880.3,113.3 L880.7,111.7 L881.1,110.1 L881.5,108.4 L881.9,106.8 L882.2,105.2 L882.6,103.5 L883.0,101.9 L883.4,100.3 L883.8,98.7 L884.2,97.0 L884.6,95.4 L885.0,93.8 L885.4,92.2 L885.8,90.5 L886.2,88.9 L886.6,87.3 L887.0,85.6 L887.4,84.0 L887.8,82.4 L888.2,80.8 L888.6,79.1 L889.1,77.5 L889.5,75.9 L889.9,74.2 L890.3,72.6 L890.7,71.0 L891.1,69.4 L891.5,67.7 L891.9,66.1 L892.4,64.5 L892.8,62.9 L893.2,61.2 L893.6,59.6 L894.0,58.0 L894.5,56.3 L894.9,54.7 L895.3,53.1 L895.7,51.5 L896.1,49.8 L896.6,48.2 L897.0,46.6 L897.4,45.0 L897.8,43.3 L898.3,41.7 L898.7,40.1 L899.1,38.4 L899.5,36.8 L900.0,35.2 L900.4,33.6 L900.8,31.9 L901.2,30.3 L901.7,28.7 L902.1,27.1"/>
<path d="M902.1,613.0 L901.2,611.3 L900.4,609.7 L899.5,608.1 L898.7,606.4 L897.8,604.8 L897.0,603.2 L896.1,601.6 L895.3,599.9 L894.4,598.3 L893.6,596.7 L892.7,595.0 L891.9,593.4 L891.0,591.8 L890.2,590.2 L889.4,588.5 L888.5,586.9 L887.7,585.3 L886.8,583.7 L886.0,582.0 L885.1,580.4 L884.3,578.8 L883.5,577.1 L882.6,575.5 L881.8,573.9 L881.0,572.3 L880.1,570.6 L879.3,569.0 L878.5,567.4 L877.7,565.8 L876.8,564.1 L876.0,562.5 L875.2,560.9 L874.4,559.2 L873.5,557.6 L872.7,556.0 L871.9,554.4 L871.1,552.7 L870.3,551.1 L869.5,549.5 L868.7,547.9 L867.9,546.2 L867.1,544.6 L866.3,543.0 L865.5,541.3 L864.7,539.7 L863.9,538.1 L863.2,536.5 L862.4,534.8 L861.6,533.2 L860.8,531.6 L860.1,529.9 L859.3,528.3 L858.5,526.7 L857.8,525.1 L857.0,523.4 L856.3,521.8 L855.5,520.2 L854.8,518.6 L854.0,516.9 L853.3,515.3 L852.5,513.7 L851.8,512.0 L851.1,510.4 L850.4,508.8 L849.6,507.2 L848.9,505.5 L848.2,503.9 L847.5,502.3 L846.8,500.7 L846.1,499.0 L845.4,497.4 L844.7,495.8 L844.0,494.1 L843.3,492.5 L842.7,490.9 L842.0,489.3 L841.3,487.6 L840.6,486.0 L840.0,484.4 L839.3,482.8 L838.7,481.1 L838.0,479.5 L837.4,477.9 L836.8,476.2 L836.1,474.6 L835.5,473.0 L834.9,471.4 L834.3,469.7 L833.7,468.1 L833.1,466.5 L832.5,464.8 L831.9,463.2 L831.3,461.6 L830.7,460.0 L830.1,458.3 L829.5,456.7 L829.0,455.1 L828.4,453.5 L827.8,451.8 L827.3,450.2 L826.8,448.6 L826.2,446.9 L825.7,445.3 L825.2,443.7 L824.6,442.1 L824.1,440.4 L823.6,438.8 L823.1,437.2 L822.6,435.6 L822.1,433.9 L821.6,432.3 L821.1,430.7 L820.7,429.0 L820.2,427.4 L819.7,425.8 L819.3,424.2 L818.8,422.5 L818.4,420.9 L818.0,419.3 L817.5,417.6 L817.1,416.0 L816.7,414.4 L816.3,412.8 L815.9,411.1 L815.5,409.5 L815.1,407.9 L814.7,406.3 L814.3,404.6 L814.0,403.0 L813.6,401.4 L813.2,399.7 L812.9,398.1 L812.5,396.5 L812.2,394.9 L811.9,393.2 L811.6,391.6 L811.2,390.0 L810.9,388.4 L810.6,386.7 L810.3,385.1 L810.1,383.5 L809.8,381.8 L809.5,380.2 L809.2,378.6 L809.0,377.0 L808.7,375.3 L808.5,373.7 L808.2,372.1 L808.0,370.5 L807.8,368.8 L807.6,367.2 L807.4,365.6 L807.1,363.9 L807.0,362.3 L806.8,360.7 L806.6,359.1 L806.4,357.4 L806.2,355.8 L806.1,354.2 L805.9,352.6 L805.8,350.9 L805.7,349.3 L805.5,347.7 L805.4,346.0 L805.3,344.4 L805.2,342.8 L805.1,341.2 L805.0,339.5 L804.9,337.9 L804.8,336.3 L804.8,334.6 L804.7,333.0 L804.6,331.4 L804.6,329.8 L804.5,328.1 L804.5,326.5 L804.5,324.9 L804.5,323.3 L804.5,321.6 L804.5,320.0 L804.5,318.4 L804.5,316.7 L804.5,315.1 L804.5,313.5 L804.5,311.9 L804.6,310.2 L804.6,308.6 L804.7,307.0 L804.8,305.4 L804.8,303.7 L804.9,302.1 L805.0,300.5 L805.1,298.8 L805.2,297.2 L805.3,295.6 L805.4,294.0 L805.5,292.3 L805.7,290.7 L805.8,289.1 L805.9,287.4 L806.1,285.8 L806.2,284.2 L806.4,282.6 L806.6,280.9 L806.8,279.3 L807.0,277.7 L807.1,276.1 L807.4,274.4 L807.6,272.8 L807.8,271.2 L808.0,269.5 L808.2,267.9 L808.5,266.3 L808.7,264.7 L809.0,263.0 L809.2,261.4 L809.5,259.8 L809.8,258.2 L810.1,256.5 L810.3,254.9 L810.6,253.3 L810.9,251.6 L811.2,250.0 L811.6,248.4 L811.9,246.8 L812.2,245.1 L812.5,243.5 L812.9,241.9 L813.2,240.3 L813.6,238.6 L814.0,237.0 L814.3,235.4 L814.7,233.7 L815.1,232.1 L815.5,230.5 L815.9,228.9 L816.3,227.2 L816.7,225.6 L817.1,224.0 L817.5,222.4 L818.0,220.7 L818.4,219.1 L818.8,217.5 L819.3,215.8 L819.7,214.2 L820.2,212.6 L820.7,211.0 L821.1,209.3 L821.6,207.7 L822.1,206.1 L822.6,204.4 L823.1,202.8 L823.6,201.2 L824.1,199.6 L824.6,197.9 L825.2,196.3 L825.7,194.7 L826.2,193.1 L826.8,191.4 L827.3,189.8 L827.8,188.2 L828.4,186.5 L829.0,184.9 L829.5,183.3 L830.1,181.7 L830.7,180.0 L831.3,178.4 L831.9,176.8 L832.5,175.2 L833.1,173.5 L833.7,171.9 L834.3,170.3 L834.9,168.6 L835.5,167.0 L836.1,165.4 L836.8,163.8 L837.4,162.1 L838.0,160.5 L838.7,158.9 L839.3,157.2 L840.0,155.6 L840.6,154.0 L841.3,152.4 L842.0,150.7 L842.7,149.1 L843.3,147.5 L844.0,145.9 L844.7,144.2 L845.4,142.6 L846.1,141.0 L846.8,139.3 L847.5,137.7 L848.2,136.1 L848.9,134.5 L849.6,132.8 L850.4,131.2 L851.1,129.6 L851.8,128.0 L852.5,126.3 L853.3,124.7 L854.0,123.1 L854.8,121.4 L855.5,119.8 L856.3,118.2 L857.0,116.6 L857.8,114.9 L858.5,113.3 L859.3,111.7 L860.1,110.1 L860.8,108.4 L861.6,106.8 L862.4,105.2 L863.2,103.5 L863.9,101.9 L864.7,100.3 L865.5,98.7 L866.3,97.0 L867.1,95.4 L867.9,93.8 L868.7,92.2 L869.5,90.5 L870.3,88.9 L871.1,87.3 L871.9,85.6 L872.7,84.0 L873.5,82.4 L874.4,80.8 L875.2,79.1 L876.0,77.5 L876.8,75.9 L877.7,74.2 L878.5,72.6 L879.3,71.0 L880.1,69.4 L881.0,67.7 L881.8,66.1 L882.6,64.5 L883.5,62.9 L884.3,61.2 L885.1,59.6 L886.0,58.0 L886.8,56.3 L887.7,54.7 L888.5,53.1 L889.4,51.5 L890.2,49.8 L891.0,48.2 L891.9,46.6 L892.7,45.0 L893.6,43.3 L894.4,41.7 L895.3,40.1 L896.1,38.4 L897.0,36.8 L897.8,35.2 L898.7,33.6 L899.5,31.9 L900.4,30.3 L901.2,28.7 L902.1,27.1"/>
<path d="M902.1,613.0 L900.8,611.3 L899.5,609.7 L898.3,608.1 L897.0,606.4 L895.7,604.8 L894.4,603.2 L893.2,601.6 L891.9,599.9 L890.6,598.3 L889.3,596.7 L888.1,595.0 L886.8,593.4 L885.5,591.8 L884.2,590.2 L883.0,588.5 L881.7,586.9 L880.4,585.3 L879.2,583.7 L877.9,582.0 L876.7,580.4 L875.4,578.8 L874.2,577.1 L872.9,575.5 L871.6,573.9 L870.4,572.3 L869.2,570.6 L867.9,569.0 L866.7,567.4 L865.4,565.8 L864.2,564.1 L863.0,562.5 L861.7,560.9 L860.5,559.2 L859.3,557.6 L858.1,556.0 L856.8,554.4 L855.6,552.7 L854.4,551.1 L853.2,549.5 L852.0,547.9 L850.8,546.2 L849.6,544.6 L848.4,543.0 L847.2,541.3 L846.0,539.7 L844.9,538.1 L843.7,536.5 L842.5,534.8 L841.4,533.2 L840.2,531.6 L839.0,529.9 L837.9,528.3 L836.7,526.7 L835.6,525.1 L834.5,523.4 L833.3,521.8 L832.2,520.2 L831.1,518.6 L830.0,516.9 L828.9,515.3 L827.8,513.7 L826.7,512.0 L825.6,510.4 L824.5,508.8 L823.4,507.2 L822.3,505.5 L821.3,503.9 L820.2,502.3 L819.1,500.7 L818.1,499.0 L817.0,497.4 L816.0,495.8 L815.0,494.1 L813.9,492.5 L812.9,490.9 L811.9,489.3 L810.9,487.6 L809.9,486.0 L808.9,484.4 L807.9,482.8 L807.0,481.1 L806.0,479.5 L805.0,477.9 L804.1,476.2 L803.1,474.6 L802.2,473.0 L801.3,471.4 L800.3,469.7 L799.4,468.1 L798.5,466.5 L797.6,464.8 L796.7,463.2 L795.9,461.6 L795.0,460.0 L794.1,458.3 L793.2,456.7 L792.4,455.1 L791.6,453.5 L790.7,451.8 L789.9,450.2 L789.1,448.6 L788.3,446.9 L787.5,445.3 L786.7,443.7 L785.9,442.1 L785.1,440.4 L784.4,438.8 L783.6,437.2 L782.9,435.6 L782.1,433.9 L781.4,432.3 L780.7,430.7 L780.0,429.0 L779.3,427.4 L778.6,425.8 L777.9,424.2 L777.2,422.5 L776.5,420.9 L775.9,419.3 L775.2,417.6 L774.6,416.0 L774.0,414.4 L773.4,412.8 L772.8,411.1 L772.2,409.5 L771.6,407.9 L771.0,406.3 L770.4,404.6 L769.9,403.0 L769.3,401.4 L768.8,399.7 L768.3,398.1 L767.8,396.5 L767.3,394.9 L766.8,393.2 L766.3,391.6 L765.8,390.0 L765.4,388.4 L764.9,386.7 L764.5,385.1 L764.0,383.5 L763.6,381.8 L763.2,380.2 L762.8,378.6 L762.4,377.0 L762.0,375.3 L761.7,373.7 L761.3,372.1 L761.0,370.5 L760.6,368.8 L760.3,367.2 L760.0,365.6 L759.7,363.9 L759.4,362.3 L759.1,360.7 L758.8,359.1 L758.6,357.4 L758.3,355.8 L758.1,354.2 L757.9,352.6 L757.6,350.9 L757.4,349.3 L757.2,347.7 L757.1,346.0 L756.9,344.4 L756.7,342.8 L756.6,341.2 L756.4,339.5 L756.3,337.9 L756.2,336.3 L756.1,334.6 L756.0,333.0 L755.9,331.4 L755.8,329.8 L755.8,328.1 L755.7,326.5 L755.7,324.9 L755.6,323.3 L755.6,321.6 L755.6,320.0 L755.6,318.4 L755.6,316.7 L755.7,315.1 L755.7,313.5 L755.8,311.9 L755.8,310.2 L755.9,308.6 L756.0,307.0 L756.1,305.4 L756.2,303.7 L756.3,302.1 L756.4,300.5 L756.6,298.8 L756.7,297.2 L756.9,295.6 L757.1,294.0 L757.2,292.3 L757.4,290.7 L757.6,289.1 L757.9,287.4 L758.1,285.8 L758.3,284.2 L758.6,282.6 L758.8,280.9 L759.1,279.3 L759.4,277.7 L759.7,276.1 L760.0,274.4 L760.3,272.8 L760.6,271.2 L761.0,269.5 L761.3,267.9 L761.7,266.3 L762.0,264.7 L762.4,263.0 L762.8,261.4 L763.2,259.8 L763.6,258.2 L764.0,256.5 L764.5,254.9 L764.9,253.3 L765.4,251.6 L765.8,250.0 L766.3,248.4 L766.8,246.8 L767.3,245.1 L767.8,243.5 L768.3,241.9 L768.8,240.3 L769.3,238.6 L769.9,237.0 L770.4,235.4 L771.0,233.7 L771.6,232.1 L772.2,230.5 L772.8,228.9 L773.4,227.2 L774.0,225.6 L774.6,224.0 L775.2,222.4 L775.9,220.7 L776.5,219.1 L777.2,217.5 L777.9,215.8 L778.6,214.2 L779.3,212.6 L780.0,211.0 L780.7,209.3 L781.4,207.7 L782.1,206.1 L782.9,204.4 L783.6,202.8 L784.4,201.2 L785.1,199.6 L785.9,197.9 L786.7,196.3 L787.5,194.7 L788.3,193.1 L789.1,191.4 L789.9,189.8 L790.7,188.2 L791.6,186.5 L792.4,184.9 L793.2,183.3 L794.1,181.7 L795.0,180.0 L795.9,178.4 L796.7,176.8 L797.6,175.2 L798.5,173.5 L799.4,171.9 L800.3,170.3 L801.3,168.6 L802.2,167.0 L803.1,165.4 L804.1,163.8 L805.0,162.1 L806.0,160.5 L807.0,158.9 L807.9,157.2 L808.9,155.6 L809.9,154.0 L810.9,152.4 L811.9,150.7 L812.9,149.1 L813.9,147.5 L815.0,145.9 L816.0,144.2 L817.0,142.6 L818.1,141.0 L819.1,139.3 L820.2,137.7 L821.3,136.1 L822.3,134.5 L823.4,132.8 L824.5,131.2 L825.6,129.6 L826.7,128.0 L827.8,126.3 L828.9,124.7 L830.0,123.1 L831.1,121.4 L832.2,119.8 L833.3,118.2 L834.5,116.6 L835.6,114.9 L836.7,113.3 L837.9,111.7 L839.0,110.1 L840.2,108.4 L841.4,106.8 L842.5,105.2 L843.7,103.5 L844.9,101.9 L846.0,100.3 L847.2,98.7 L848.4,97.0 L849.6,95.4 L850.8,93.8 L852.0,92.2 L853.2,90.5 L854.4,88.9 L855.6,87.3 L856.8,85.6 L858.1,84.0 L859.3,82.4 L860.5,80.8 L861.7,79.1 L863.0,77.5 L864.2,75.9 L865.4,74.2 L866.7,72.6 L867.9,71.0 L869.2,69.4 L870.4,67.7 L871.6,66.1 L872.9,64.5 L874.2,62.9 L875.4,61.2 L876.7,59.6 L877.9,58.0 L879.2,56.3 L880.4,54.7 L881.7,53.1 L883.0,51.5 L884.2,49.8 L885.5,48.2 L886.8,46.6 L888.1,45.0 L889.3,43.3 L890.6,41.7 L891.9,40.1 L893.2,38.4 L894.4,36.8 L895.7,35.2 L897.0,33.6 L898.3,31.9 L899.5,30.3 L900.8,28.7 L902.1,27.1"/>
<path d="M902.1,613.0 L900.4,611.3 L898.7,609.7 L897.0,608.1 L895.3,606.4 L893.6,604.8 L891.9,603.2 L890.2,601.6 L888.5,599.9 L886.8,598.3 L885.1,596.7 L883.4,595.0 L881.7,593.4 L880.0,591.8 L878.3,590.2 L876.6,588.5 L874.9,586.9 L873.2,585.3 L871.5,583.7 L869.9,582.0 L868.2,580.4 L866.5,578.8 L864.8,577.1 L863.2,575.5 L861.5,573.9 L859.8,572.3 L858.2,570.6 L856.5,569.0 L854.9,567.4 L853.2,565.8 L851.6,564.1 L849.9,562.5 L848.3,560.9 L846.6,559.2 L845.0,557.6 L843.4,556.0 L841.7,554.4 L840.1,552.7 L838.5,551.1 L836.9,549.5 L835.3,547.9 L833.7,546.2 L832.1,544.6 L830.5,543.0 L828.9,541.3 L827.4,539.7 L825.8,538.1 L824.2,536.5 L822.7,534.8 L821.1,533.2 L819.6,531.6 L818.0,529.9 L816.5,528.3 L815.0,526.7 L813.4,525.1 L811.9,523.4 L810.4,521.8 L808.9,520.2 L807.4,518.6 L805.9,516.9 L804.5,515.3 L803.0,513.7 L801.5,512.0 L800.1,510.4 L798.6,508.8 L797.2,507.2 L795.7,505.5 L794.3,503.9 L792.9,502.3 L791.5,500.7 L790.1,499.0 L788.7,497.4 L787.3,495.8 L785.9,494.1 L784.6,492.5 L783.2,490.9 L781.9,489.3 L780.5,487.6 L779.2,486.0 L777.9,484.4 L776.6,482.8 L775.3,481.1 L774.0,479.5 L772.7,477.9 L771.4,476.2 L770.2,474.6 L768.9,473.0 L767.7,471.4 L766.4,469.7 L765.2,468.1 L764.0,466.5 L762.8,464.8 L761.6,463.2 L760.4,461.6 L759.3,460.0 L758.1,458.3 L757.0,456.7 L755.8,455.1 L754.7,453.5 L753.6,451.8 L752.5,450.2 L751.4,448.6 L750.3,446.9 L749.3,445.3 L748.2,443.7 L747.2,442.1 L746.1,440.4 L745.1,438.8 L744.1,437.2 L743.1,435.6 L742.1,433.9 L741.1,432.3 L740.2,430.7 L739.2,429.0 L738.3,427.4 L737.4,425.8 L736.5,424.2 L735.6,422.5 L734.7,420.9 L733.8,419.3 L733.0,417.6 L732.1,416.0 L731.3,414.4 L730.5,412.8 L729.7,411.1 L728.9,409.5 L728.1,407.9 L727.3,406.3 L726.6,404.6 L725.8,403.0 L725.1,401.4 L724.4,399.7 L723.7,398.1 L723.0,396.5 L722.3,394.9 L721.7,393.2 L721.0,391.6 L720.4,390.0 L719.8,388.4 L719.2,386.7 L718.6,385.1 L718.0,383.5 L717.4,381.8 L716.9,380.2 L716.4,378.6 L715.8,377.0 L715.3,375.3 L714.8,373.7 L714.4,372.1 L713.9,370.5 L713.5,368.8 L713.0,367.2 L712.6,365.6 L712.2,363.9 L711.8,362.3 L711.4,360.7 L711.1,359.1 L710.7,357.4 L710.4,355.8 L710.1,354.2 L709.8,352.6 L709.5,350.9 L709.2,349.3 L708.9,347.7 L708.7,346.0 L708.5,344.4 L708.3,342.8 L708.1,341.2 L707.9,339.5 L707.7,337.9 L707.5,336.3 L707.4,334.6 L707.3,333.0 L707.2,331.4 L707.1,329.8 L707.0,328.1 L706.9,326.5 L706.9,324.9 L706.8,323.3 L706.8,321.6 L706.8,320.0 L706.8,318.4 L706.8,316.7 L706.9,315.1 L706.9,313.5 L707.0,311.9 L707.1,310.2 L707.2,308.6 L707.3,307.0 L707.4,305.4 L707.5,303.7 L707.7,302.1 L707.9,300.5 L708.1,298.8 L708.3,297.2 L708.5,295.6 L708.7,294.0 L708.9,292.3 L709.2,290.7 L709.5,289.1 L709.8,287.4 L710.1,285.8 L710.4,284.2 L710.7,282.6 L711.1,280.9 L711.4,279.3 L711.8,277.7 L712.2,276.1 L712.6,274.4 L713.0,272.8 L713.5,271.2 L713.9,269.5 L714.4,267.9 L714.8,266.3 L715.3,264.7 L715.8,263.0 L716.4,261.4 L716.9,259.8 L717.4,258.2 L718.0,256.5 L718.6,254.9 L719.2,253.3 L719.8,251.6 L720.4,250.0 L721.0,248.4 L721.7,246.8 L722.3,245.1 L723.0,243.5 L723.7,241.9 L724.4,240.3 L725.1,238.6 L725.8,237.0 L726.6,235.4 L727.3,233.7 L728.1,232.1 L728.9,230.5 L729.7,228.9 L730.5,227.2 L731.3,225.6 L732.1,224.0 L733.0,222.4 L733.8,220.7 L734.7,219.1 L735.6,217.5 L736.5,215.8 L737.4,214.2 L738.3,212.6 L739.2,211.0 L740.2,209.3 L741.1,207.7 L742.1,206.1 L743.1,204.4 L744.1,202.8 L745.1,201.2 L746.1,199.6 L747.2,197.9 L748.2,196.3 L749.3,194.7 L750.3,193.1 L751.4,191.4 L752.5,189.8 L753.6,188.2 L754.7,186.5 L755.8,184.9 L757.0,183.3 L758.1,181.7 L759.3,180.0 L760.4,178.4 L761.6,176.8 L762.8,175.2 L764.0,173.5 L765.2,171.9 L766.4,170.3 L767.7,168.6 L768.9,167.0 L770.2,165.4 L771.4,163.8 L772.7,162.1 L774.0,160.5 L775.3,158.9 L776.6,157.2 L777.9,155.6 L779.2,154.0 L780.5,152.4 L781.9,150.7 L783.2,149.1 L784.6,147.5 L785.9,145.9 L787.3,144.2 L788.7,142.6 L790.1,141.0 L791.5,139.3 L792.9,137.7 L794.3,136.1 L795.7,134.5 L797.2,132.8 L798.6,131.2 L800.1,129.6 L801.5,128.0 L803.0,126.3 L804.5,124.7 L805.9,123.1 L807.4,121.4 L808.9,119.8 L810.4,118.2 L811.9,116.6 L813.4,114.9 L815.0,113.3 L816.5,111.7 L818.0,110.1 L819.6,108.4 L821.1,106.8 L822.7,105.2 L824.2,103.5 L825.8,101.9 L827.4,100.3 L828.9,98.7 L830.5,97.0 L832.1,95.4 L833.7,93.8 L835.3,92.2 L836.9,90.5 L838.5,88.9 L840.1,87.3 L841.7,85.6 L843.4,84.0 L845.0,82.4 L846.6,80.8 L848.3,79.1 L849.9,77.5 L851.6,75.9 L853.2,74.2 L854.9,72.6 L856.5,71.0 L858.2,69.4 L859.8,67.7 L861.5,66.1 L863.2,64.5 L864.8,62.9 L866.5,61.2 L868.2,59.6 L869.9,58.0 L871.5,56.3 L873.2,54.7 L874.9,53.1 L876.6,51.5 L878.3,49.8 L880.0,48.2 L881.7,46.6 L883.4,45.0 L885.1,43.3 L886.8,41.7 L888.5,40.1 L890.2,38.4 L891.9,36.8 L893.6,35.2 L895.3,33.6 L897.0,31.9 L898.7,30.3 L900.4,28.7 L902.1,27.1"/>
<path d="M902.1,613.0 L900.0,611.3 L897.8,609.7 L895.7,608.1 L893.6,606.4 L891.5,604.8 L889.3,603.2 L887.2,601.6 L885.1,599.9 L882.9,598.3 L880.8,596.7 L878.7,595.0 L876.6,593.4 L874.5,591.8 L872.3,590.2 L870.2,588.5 L868.1,586.9 L866.0,585.3 L863.9,583.7 L861.8,582.0 L859.7,580.4 L857.6,578.8 L855.5,577.1 L853.4,575.5 L851.3,573.9 L849.3,572.3 L847.2,570.6 L845.1,569.0 L843.0,567.4 L841.0,565.8 L838.9,564.1 L836.9,562.5 L834.8,560.9 L832.8,559.2 L830.7,557.6 L828.7,556.0 L826.7,554.4 L824.6,552.7 L822.6,551.1 L820.6,549.5 L818.6,547.9 L816.6,546.2 L814.6,544.6 L812.6,543.0 L810.6,541.3 L808.7,539.7 L806.7,538.1 L804.8,536.5 L802.8,534.8 L800.9,533.2 L798.9,531.6 L797.0,529.9 L795.1,528.3 L793.2,526.7 L791.3,525.1 L789.4,523.4 L787.5,521.8 L785.6,520.2 L783.7,518.6 L781.9,516.9 L780.0,515.3 L778.2,513.7 L776.4,512.0 L774.5,510.4 L772.7,508.8 L770.9,507.2 L769.1,505.5 L767.4,503.9 L765.6,502.3 L763.8,500.7 L762.1,499.0 L760.3,497.4 L758.6,495.8 L756.9,494.1 L755.2,492.5 L753.5,490.9 L751.8,489.3 L750.1,487.6 L748.5,486.0 L746.8,484.4 L745.2,482.8 L743.6,481.1 L741.9,479.5 L740.3,477.9 L738.7,476.2 L737.2,474.6 L735.6,473.0 L734.1,471.4 L732.5,469.7 L731.0,468.1 L729.5,466.5 L728.0,464.8 L726.5,463.2 L725.0,461.6 L723.6,460.0 L722.1,458.3 L720.7,456.7 L719.3,455.1 L717.9,453.5 L716.5,451.8 L715.1,450.2 L713.7,448.6 L712.4,446.9 L711.0,445.3 L709.7,443.7 L708.4,442.1 L707.1,440.4 L705.9,438.8 L704.6,437.2 L703.4,435.6 L702.1,433.9 L700.9,432.3 L699.7,430.7 L698.5,429.0 L697.4,427.4 L696.2,425.8 L695.1,424.2 L693.9,422.5 L692.8,420.9 L691.8,419.3 L690.7,417.6 L689.6,416.0 L688.6,414.4 L687.6,412.8 L686.6,411.1 L685.6,409.5 L684.6,407.9 L683.6,406.3 L682.7,404.6 L681.8,403.0 L680.8,401.4 L680.0,399.7 L679.1,398.1 L678.2,396.5 L677.4,394.9 L676.6,393.2 L675.8,391.6 L675.0,390.0 L674.2,388.4 L673.4,386.7 L672.7,385.1 L672.0,383.5 L671.3,381.8 L670.6,380.2 L669.9,378.6 L669.3,377.0 L668.6,375.3 L668.0,373.7 L667.4,372.1 L666.9,370.5 L666.3,368.8 L665.8,367.2 L665.2,365.6 L664.7,363.9 L664.2,362.3 L663.8,360.7 L663.3,359.1 L662.9,357.4 L662.5,355.8 L662.1,354.2 L661.7,352.6 L661.3,350.9 L661.0,349.3 L660.7,347.7 L660.4,346.0 L660.1,344.4 L659.8,342.8 L659.5,341.2 L659.3,339.5 L659.1,337.9 L658.9,336.3 L658.7,334.6 L658.6,333.0 L658.4,331.4 L658.3,329.8 L658.2,328.1 L658.1,326.5 L658.1,324.9 L658.0,323.3 L658.0,321.6 L658.0,320.0 L658.0,318.4 L658.0,316.7 L658.1,315.1 L658.1,313.5 L658.2,311.9 L658.3,310.2 L658.4,308.6 L658.6,307.0 L658.7,305.4 L658.9,303.7 L659.1,302.1 L659.3,300.5 L659.5,298.8 L659.8,297.2 L660.1,295.6 L660.4,294.0 L660.7,292.3 L661.0,290.7 L661.3,289.1 L661.7,287.4 L662.1,285.8 L662.5,284.2 L662.9,282.6 L663.3,280.9 L663.8,279.3 L664.2,277.7 L664.7,276.1 L665.2,274.4 L665.8,272.8 L666.3,271.2 L666.9,269.5 L667.4,267.9 L668.0,266.3 L668.6,264.7 L669.3,263.0 L669.9,261.4 L670.6,259.8 L671.3,258.2 L672.0,256.5 L672.7,254.9 L673.4,253.3 L674.2,251.6 L675.0,250.0 L675.8,248.4 L676.6,246.8 L677.4,245.1 L678.2,243.5 L679.1,241.9 L680.0,240.3 L680.8,238.6 L681.8,237.0 L682.7,235.4 L683.6,233.7 L684.6,232.1 L685.6,230.5 L686.6,228.9 L687.6,227.2 L688.6,225.6 L689.6,224.0 L690.7,222.4 L691.8,220.7 L692.8,219.1 L693.9,217.5 L695.1,215.8 L696.2,214.2 L697.4,212.6 L698.5,211.0 L699.7,209.3 L700.9,207.7 L702.1,206.1 L703.4,204.4 L704.6,202.8 L705.9,201.2 L707.1,199.6 L708.4,197.9 L709.7,196.3 L711.0,194.7 L712.4,193.1 L713.7,191.4 L715.1,189.8 L716.5,188.2 L717.9,186.5 L719.3,184.9 L720.7,183.3 L722.1,181.7 L723.6,180.0 L725.0,178.4 L726.5,176.8 L728.0,175.2 L729.5,173.5 L731.0,171.9 L732.5,170.3 L734.1,168.6 L735.6,167.0 L737.2,165.4 L738.7,163.8 L740.3,162.1 L741.9,160.5 L743.6,158.9 L745.2,157.2 L746.8,155.6 L748.5,154.0 L750.1,152.4 L751.8,150.7 L753.5,149.1 L755.2,147.5 L756.9,145.9 L758.6,144.2 L760.3,142.6 L762.1,141.0 L763.8,139.3 L765.6,137.7 L767.4,136.1 L769.1,134.5 L770.9,132.8 L772.7,131.2 L774.5,129.6 L776.4,128.0 L778.2,126.3 L780.0,124.7 L781.9,123.1 L783.7,121.4 L785.6,119.8 L787.5,118.2 L789.4,116.6 L791.3,114.9 L793.2,113.3 L795.1,111.7 L797.0,110.1 L798.9,108.4 L800.9,106.8 L802.8,105.2 L804.8,103.5 L806.7,101.9 L808.7,100.3 L810.6,98.7 L812.6,97.0 L814.6,95.4 L816.6,93.8 L818.6,92.2 L820.6,90.5 L822.6,88.9 L824.6,87.3 L826.7,85.6 L828.7,84.0 L830.7,82.4 L832.8,80.8 L834.8,79.1 L836.9,77.5 L838.9,75.9 L841.0,74.2 L843.0,72.6 L845.1,71.0 L847.2,69.4 L849.3,67.7 L851.3,66.1 L853.4,64.5 L855.5,62.9 L857.6,61.2 L859.7,59.6 L861.8,58.0 L863.9,56.3 L866.0,54.7 L868.1,53.1 L870.2,51.5 L872.3,49.8 L874.5,48.2 L876.6,46.6 L878.7,45.0 L880.8,43.3 L882.9,41.7 L885.1,40.1 L887.2,38.4 L889.3,36.8 L891.5,35.2 L893.6,33.6 L895.7,31.9 L897.8,30.3 L900.0,28.7 L902.1,27.1"/>
<path d="M902.1,613.0 L899.5,611.3 L897.0,609.7 L894.4,608.1 L891.9,606.4 L889.3,604.8 L886.8,603.2 L884.2,601.6 L881.7,599.9 L879.1,598.3 L876.6,596.7 L874.0,595.0 L871.5,593.4 L868.9,591.8 L866.4,590.2 L863.9,588.5 L861.3,586.9 L858.8,585.3 L856.3,583.7 L853.7,582.0 L851.2,580.4 L848.7,578.8 L846.2,577.1 L843.7,575.5 L841.2,573.9 L838.7,572.3 L836.2,570.6 L833.7,569.0 L831.2,567.4 L828.8,565.8 L826.3,564.1 L823.8,562.5 L821.4,560.9 L818.9,559.2 L816.4,557.6 L814.0,556.0 L811.6,554.4 L809.1,552.7 L806.7,551.1 L804.3,549.5 L801.9,547.9 L799.5,546.2 L797.1,544.6 L794.7,543.0 L792.4,541.3 L790.0,539.7 L787.6,538.1 L785.3,536.5 L782.9,534.8 L780.6,533.2 L778.3,531.6 L776.0,529.9 L773.7,528.3 L771.4,526.7 L769.1,525.1 L766.8,523.4 L764.6,521.8 L762.3,520.2 L760.1,518.6 L757.8,516.9 L755.6,515.3 L753.4,513.7 L751.2,512.0 L749.0,510.4 L746.9,508.8 L744.7,507.2 L742.5,505.5 L740.4,503.9 L738.3,502.3 L736.2,500.7 L734.1,499.0 L732.0,497.4 L729.9,495.8 L727.8,494.1 L725.8,492.5 L723.8,490.9 L721.7,489.3 L719.7,487.6 L717.7,486.0 L715.8,484.4 L713.8,482.8 L711.8,481.1 L709.9,479.5 L708.0,477.9 L706.1,476.2 L704.2,474.6 L702.3,473.0 L700.4,471.4 L698.6,469.7 L696.8,468.1 L695.0,466.5 L693.2,464.8 L691.4,463.2 L689.6,461.6 L687.8,460.0 L686.1,458.3 L684.4,456.7 L682.7,455.1 L681.0,453.5 L679.3,451.8 L677.7,450.2 L676.1,448.6 L674.4,446.9 L672.8,445.3 L671.3,443.7 L669.7,442.1 L668.1,440.4 L666.6,438.8 L665.1,437.2 L663.6,435.6 L662.1,433.9 L660.7,432.3 L659.2,430.7 L657.8,429.0 L656.4,427.4 L655.0,425.8 L653.7,424.2 L652.3,422.5 L651.0,420.9 L649.7,419.3 L648.4,417.6 L647.1,416.0 L645.9,414.4 L644.7,412.8 L643.4,411.1 L642.3,409.5 L641.1,407.9 L639.9,406.3 L638.8,404.6 L637.7,403.0 L636.6,401.4 L635.5,399.7 L634.5,398.1 L633.4,396.5 L632.4,394.9 L631.4,393.2 L630.5,391.6 L629.5,390.0 L628.6,388.4 L627.7,386.7 L626.8,385.1 L626.0,383.5 L625.1,381.8 L624.3,380.2 L623.5,378.6 L622.7,377.0 L622.0,375.3 L621.2,373.7 L620.5,372.1 L619.8,370.5 L619.1,368.8 L618.5,367.2 L617.9,365.6 L617.2,363.9 L616.7,362.3 L616.1,360.7 L615.6,359.1 L615.0,357.4 L614.5,355.8 L614.1,354.2 L613.6,352.6 L613.2,350.9 L612.8,349.3 L612.4,347.7 L612.0,346.0 L611.7,344.4 L611.3,342.8 L611.0,341.2 L610.8,339.5 L610.5,337.9 L610.3,336.3 L610.1,334.6 L609.9,333.0 L609.7,331.4 L609.6,329.8 L609.4,328.1 L609.3,326.5 L609.3,324.9 L609.2,323.3 L609.2,321.6 L609.2,320.0 L609.2,318.4 L609.2,316.7 L609.3,315.1 L609.3,313.5 L609.4,311.9 L609.6,310.2 L609.7,308.6 L609.9,307.0 L610.1,305.4 L610.3,303.7 L610.5,302.1 L610.8,300.5 L611.0,298.8 L611.3,297.2 L611.7,295.6 L612.0,294.0 L612.4,292.3 L612.8,290.7 L613.2,289.1 L613.6,287.4 L614.1,285.8 L614.5,284.2 L615.0,282.6 L615.6,280.9 L616.1,279.3 L616.7,277.7 L617.2,276.1 L617.9,274.4 L618.5,272.8 L619.1,271.2 L619.8,269.5 L620.5,267.9 L621.2,266.3 L622.0,264.7 L622.7,263.0 L623.5,261.4 L624.3,259.8 L625.1,258.2 L626.0,256.5 L626.8,254.9 L627.7,253.3 L628.6,251.6 L629.5,250.0 L630.5,248.4 L631.4,246.8 L632.4,245.1 L633.4,243.5 L634.5,241.9 L635.5,240.3 L636.6,238.6 L637.7,237.0 L638.8,235.4 L639.9,233.7 L641.1,232.1 L642.3,230.5 L643.4,228.9 L644.7,227.2 L645.9,225.6 L647.1,224.0 L648.4,222.4 L649.7,220.7 L651.0,219.1 L652.3,217.5 L653.7,215.8 L655.0,214.2 L656.4,212.6 L657.8,211.0 L659.2,209.3 L660.7,207.7 L662.1,206.1 L663.6,204.4 L665.1,202.8 L666.6,201.2 L668.1,199.6 L669.7,197.9 L671.3,196.3 L672.8,194.7 L674.4,193.1 L676.1,191.4 L677.7,189.8 L679.3,188.2 L681.0,186.5 L682.7,184.9 L684.4,183.3 L686.1,181.7 L687.8,180.0 L689.6,178.4 L691.4,176.8 L693.2,175.2 L695.0,173.5 L696.8,171.9 L698.6,170.3 L700.4,168.6 L702.3,167.0 L704.2,165.4 L706.1,163.8 L708.0,162.1 L709.9,160.5 L711.8,158.9 L713.8,157.2 L715.8,155.6 L717.7,154.0 L719.7,152.4 L721.7,150.7 L723.8,149.1 L725.8,147.5 L727.8,145.9 L729.9,144.2 L732.0,142.6 L734.1,141.0 L736.2,139.3 L738.3,137.7 L740.4,136.1 L742.5,134.5 L744.7,132.8 L746.9,131.2 L749.0,129.6 L751.2,128.0 L753.4,126.3 L755.6,124.7 L757.8,123.1 L760.1,121.4 L762.3,119.8 L764.6,118.2 L766.8,116.6 L769.1,114.9 L771.4,113.3 L773.7,111.7 L776.0,110.1 L778.3,108.4 L780.6,106.8 L782.9,105.2 L785.3,103.5 L787.6,101.9 L790.0,100.3 L792.4,98.7 L794.7,97.0 L797.1,95.4 L799.5,93.8 L801.9,92.2 L804.3,90.5 L806.7,88.9 L809.1,87.3 L811.6,85.6 L814.0,84.0 L816.4,82.4 L818.9,80.8 L821.4,79.1 L823.8,77.5 L826.3,75.9 L828.8,74.2 L831.2,72.6 L833.7,71.0 L836.2,69.4 L838.7,67.7 L841.2,66.1 L843.7,64.5 L846.2,62.9 L848.7,61.2 L851.2,59.6 L853.7,58.0 L856.3,56.3 L858.8,54.7 L861.3,53.1 L863.9,51.5 L866.4,49.8 L868.9,48.2 L871.5,46.6 L874.0,45.0 L876.6,43.3 L879.1,41.7 L881.7,40.1 L884.2,38.4 L886.8,36.8 L889.3,35.2 L891.9,33.6 L894.4,31.9 L897.0,30.3 L899.5,28.7 L902.1,27.1"/>
<path d="M902.1,613.0 L899.1,611.3 L896.1,609.7 L893.2,608.1 L890.2,606.4 L887.2,604.8 L884.2,603.2 L881.2,601.6 L878.3,599.9 L875.3,598.3 L872.3,596.7 L869.3,595.0 L866.4,593.4 L863.4,591.8 L860.4,590.2 L857.5,588.5 L854.5,586.9 L851.6,585.3 L848.6,583.7 L845.7,582.0 L842.8,580.4 L839.8,578.8 L836.9,577.1 L834.0,575.5 L831.0,573.9 L828.1,572.3 L825.2,570.6 L822.3,569.0 L819.4,567.4 L816.5,565.8 L813.6,564.1 L810.8,562.5 L807.9,560.9 L805.0,559.2 L802.2,557.6 L799.3,556.0 L796.5,554.4 L793.7,552.7 L790.8,551.1 L788.0,549.5 L785.2,547.9 L782.4,546.2 L779.6,544.6 L776.8,543.0 L774.1,541.3 L771.3,539.7 L768.6,538.1 L765.8,536.5 L763.1,534.8 L760.4,533.2 L757.7,531.6 L755.0,529.9 L752.3,528.3 L749.6,526.7 L746.9,525.1 L744.3,523.4 L741.6,521.8 L739.0,520.2 L736.4,518.6 L733.8,516.9 L731.2,515.3 L728.6,513.7 L726.1,512.0 L723.5,510.4 L721.0,508.8 L718.5,507.2 L716.0,505.5 L713.5,503.9 L711.0,502.3 L708.5,500.7 L706.1,499.0 L703.6,497.4 L701.2,495.8 L698.8,494.1 L696.4,492.5 L694.0,490.9 L691.7,489.3 L689.3,487.6 L687.0,486.0 L684.7,484.4 L682.4,482.8 L680.1,481.1 L677.9,479.5 L675.6,477.9 L673.4,476.2 L671.2,474.6 L669.0,473.0 L666.8,471.4 L664.7,469.7 L662.5,468.1 L660.4,466.5 L658.3,464.8 L656.2,463.2 L654.2,461.6 L652.1,460.0 L650.1,458.3 L648.1,456.7 L646.1,455.1 L644.2,453.5 L642.2,451.8 L640.3,450.2 L638.4,448.6 L636.5,446.9 L634.6,445.3 L632.8,443.7 L631.0,442.1 L629.1,440.4 L627.4,438.8 L625.6,437.2 L623.9,435.6 L622.1,433.9 L620.4,432.3 L618.8,430.7 L617.1,429.0 L615.5,427.4 L613.8,425.8 L612.3,424.2 L610.7,422.5 L609.1,420.9 L607.6,419.3 L606.1,417.6 L604.6,416.0 L603.2,414.4 L601.7,412.8 L600.3,411.1 L598.9,409.5 L597.6,407.9 L596.2,406.3 L594.9,404.6 L593.6,403.0 L592.3,401.4 L591.1,399.7 L589.9,398.1 L588.7,396.5 L587.5,394.9 L586.3,393.2 L585.2,391.6 L584.1,390.0 L583.0,388.4 L582.0,386.7 L580.9,385.1 L579.9,383.5 L578.9,381.8 L578.0,380.2 L577.1,378.6 L576.1,377.0 L575.3,375.3 L574.4,373.7 L573.6,372.1 L572.8,370.5 L572.0,368.8 L571.2,367.2 L570.5,365.6 L569.8,363.9 L569.1,362.3 L568.4,360.7 L567.8,359.1 L567.2,357.4 L566.6,355.8 L566.0,354.2 L565.5,352.6 L565.0,350.9 L564.5,349.3 L564.1,347.7 L563.7,346.0 L563.2,344.4 L562.9,342.8 L562.5,341.2 L562.2,339.5 L561.9,337.9 L561.6,336.3 L561.4,334.6 L561.2,333.0 L561.0,331.4 L560.8,329.8 L560.7,328.1 L560.5,326.5 L560.4,324.9 L560.4,323.3 L560.3,321.6 L560.3,320.0 L560.3,318.4 L560.4,316.7 L560.4,315.1 L560.5,313.5 L560.7,311.9 L560.8,310.2 L561.0,308.6 L561.2,307.0 L561.4,305.4 L561.6,303.7 L561.9,302.1 L562.2,300.5 L562.5,298.8 L562.9,297.2 L563.2,295.6 L563.7,294.0 L564.1,292.3 L564.5,290.7 L565.0,289.1 L565.5,287.4 L566.0,285.8 L566.6,284.2 L567.2,282.6 L567.8,280.9 L568.4,279.3 L569.1,277.7 L569.8,276.1 L570.5,274.4 L571.2,272.8 L572.0,271.2 L572.8,269.5 L573.6,267.9 L574.4,266.3 L575.3,264.7 L576.1,263.0 L577.1,261.4 L578.0,259.8 L578.9,258.2 L579.9,256.5 L580.9,254.9 L582.0,253.3 L583.0,251.6 L584.1,250.0 L585.2,248.4 L586.3,246.8 L587.5,245.1 L588.7,243.5 L589.9,241.9 L591.1,240.3 L592.3,238.6 L593.6,237.0 L594.9,235.4 L596.2,233.7 L597.6,232.1 L598.9,230.5 L600.3,228.9 L601.7,227.2 L603.2,225.6 L604.6,224.0 L606.1,222.4 L607.6,220.7 L609.1,219.1 L610.7,217.5 L612.3,215.8 L613.8,214.2 L615.5,212.6 L617.1,211.0 L618.8,209.3 L620.4,207.7 L622.1,206.1 L623.9,204.4 L625.6,202.8 L627.4,201.2 L629.1,199.6 L631.0,197.9 L632.8,196.3 L634.6,194.7 L636.5,193.1 L638.4,191.4 L640.3,189.8 L642.2,188.2 L644.2,186.5 L646.1,184.9 L648.1,183.3 L650.1,181.7 L652.1,180.0 L654.2,178.4 L656.2,176.8 L658.3,175.2 L660.4,173.5 L662.5,171.9 L664.7,170.3 L666.8,168.6 L669.0,167.0 L671.2,165.4 L673.4,163.8 L675.6,162.1 L677.9,160.5 L680.1,158.9 L682.4,157.2 L684.7,155.6 L687.0,154.0 L689.3,152.4 L691.7,150.7 L694.0,149.1 L696.4,147.5 L698.8,145.9 L701.2,144.2 L703.6,142.6 L706.1,141.0 L708.5,139.3 L711.0,137.7 L713.5,136.1 L716.0,134.5 L718.5,132.8 L721.0,131.2 L723.5,129.6 L726.1,128.0 L728.6,126.3 L731.2,124.7 L733.8,123.1 L736.4,121.4 L739.0,119.8 L741.6,118.2 L744.3,116.6 L746.9,114.9 L749.6,113.3 L752.3,111.7 L755.0,110.1 L757.7,108.4 L760.4,106.8 L763.1,105.2 L765.8,103.5 L768.6,101.9 L771.3,100.3 L774.1,98.7 L776.8,97.0 L779.6,95.4 L782.4,93.8 L785.2,92.2 L788.0,90.5 L790.8,88.9 L793.7,87.3 L796.5,85.6 L799.3,84.0 L802.2,82.4 L805.0,80.8 L807.9,79.1 L810.8,77.5 L813.6,75.9 L816.5,74.2 L819.4,72.6 L822.3,71.0 L825.2,69.4 L828.1,67.7 L831.0,66.1 L834.0,64.5 L836.9,62.9 L839.8,61.2 L842.8,59.6 L845.7,58.0 L848.6,56.3 L851.6,54.7 L854.5,53.1 L857.5,51.5 L860.4,49.8 L863.4,48.2 L866.4,46.6 L869.3,45.0 L872.3,43.3 L875.3,41.7 L878.3,40.1 L881.2,38.4 L884.2,36.8 L887.2,35.2 L890.2,33.6 L893.2,31.9 L896.1,30.3 L899.1,28.7 L902.1,27.1"/>
<path d="M902.1,613.0 L898.7,611.3 L895.3,609.7 L891.9,608.1 L888.5,606.4 L885.1,604.8 L881.7,603.2 L878.3,601.6 L874.9,599.9 L871.5,598.3 L868.1,596.7 L864.7,595.0 L861.3,593.4 L857.9,591.8 L854.5,590.2 L851.1,588.5 L847.7,586.9 L844.4,585.3 L841.0,583.7 L837.6,582.0 L834.3,580.4 L830.9,578.8 L827.6,577.1 L824.2,575.5 L820.9,573.9 L817.6,572.3 L814.2,570.6 L810.9,569.0 L807.6,567.4 L804.3,565.8 L801.0,564.1 L797.7,562.5 L794.4,560.9 L791.2,559.2 L787.9,557.6 L784.6,556.0 L781.4,554.4 L778.2,552.7 L774.9,551.1 L771.7,549.5 L768.5,547.9 L765.3,546.2 L762.1,544.6 L758.9,543.0 L755.8,541.3 L752.6,539.7 L749.5,538.1 L746.3,536.5 L743.2,534.8 L740.1,533.2 L737.0,531.6 L733.9,529.9 L730.9,528.3 L727.8,526.7 L724.8,525.1 L721.7,523.4 L718.7,521.8 L715.7,520.2 L712.7,518.6 L709.8,516.9 L706.8,515.3 L703.9,513.7 L700.9,512.0 L698.0,510.4 L695.1,508.8 L692.2,507.2 L689.4,505.5 L686.5,503.9 L683.7,502.3 L680.9,500.7 L678.1,499.0 L675.3,497.4 L672.5,495.8 L669.8,494.1 L667.0,492.5 L664.3,490.9 L661.6,489.3 L658.9,487.6 L656.3,486.0 L653.6,484.4 L651.0,482.8 L648.4,481.1 L645.8,479.5 L643.3,477.9 L640.7,476.2 L638.2,474.6 L635.7,473.0 L633.2,471.4 L630.8,469.7 L628.3,468.1 L625.9,466.5 L623.5,464.8 L621.1,463.2 L618.8,461.6 L616.4,460.0 L614.1,458.3 L611.8,456.7 L609.6,455.1 L607.3,453.5 L605.1,451.8 L602.9,450.2 L600.7,448.6 L598.5,446.9 L596.4,445.3 L594.3,443.7 L592.2,442.1 L590.2,440.4 L588.1,438.8 L586.1,437.2 L584.1,435.6 L582.1,433.9 L580.2,432.3 L578.3,430.7 L576.4,429.0 L574.5,427.4 L572.7,425.8 L570.9,424.2 L569.1,422.5 L567.3,420.9 L565.5,419.3 L563.8,417.6 L562.1,416.0 L560.5,414.4 L558.8,412.8 L557.2,411.1 L555.6,409.5 L554.1,407.9 L552.5,406.3 L551.0,404.6 L549.6,403.0 L548.1,401.4 L546.7,399.7 L545.3,398.1 L543.9,396.5 L542.6,394.9 L541.2,393.2 L539.9,391.6 L538.7,390.0 L537.4,388.4 L536.2,386.7 L535.1,385.1 L533.9,383.5 L532.8,381.8 L531.7,380.2 L530.6,378.6 L529.6,377.0 L528.6,375.3 L527.6,373.7 L526.6,372.1 L525.7,370.5 L524.8,368.8 L523.9,367.2 L523.1,365.6 L522.3,363.9 L521.5,362.3 L520.8,360.7 L520.0,359.1 L519.3,357.4 L518.7,355.8 L518.0,354.2 L517.4,352.6 L516.9,350.9 L516.3,349.3 L515.8,347.7 L515.3,346.0 L514.8,344.4 L514.4,342.8 L514.0,341.2 L513.6,339.5 L513.3,337.9 L513.0,336.3 L512.7,334.6 L512.5,333.0 L512.2,331.4 L512.0,329.8 L511.9,328.1 L511.7,326.5 L511.6,324.9 L511.6,323.3 L511.5,321.6 L511.5,320.0 L511.5,318.4 L511.6,316.7 L511.6,315.1 L511.7,313.5 L511.9,311.9 L512.0,310.2 L512.2,308.6 L512.5,307.0 L512.7,305.4 L513.0,303.7 L513.3,302.1 L513.6,300.5 L514.0,298.8 L514.4,297.2 L514.8,295.6 L515.3,294.0 L515.8,292.3 L516.3,290.7 L516.9,289.1 L517.4,287.4 L518.0,285.8 L518.7,284.2 L519.3,282.6 L520.0,280.9 L520.8,279.3 L521.5,277.7 L522.3,276.1 L523.1,274.4 L523.9,272.8 L524.8,271.2 L525.7,269.5 L526.6,267.9 L527.6,266.3 L528.6,264.7 L529.6,263.0 L530.6,261.4 L531.7,259.8 L532.8,258.2 L533.9,256.5 L535.1,254.9 L536.2,253.3 L537.4,251.6 L538.7,250.0 L539.9,248.4 L541.2,246.8 L542.6,245.1 L543.9,243.5 L545.3,241.9 L546.7,240.3 L548.1,238.6 L549.6,237.0 L551.0,235.4 L552.5,233.7 L554.1,232.1 L555.6,230.5 L557.2,228.9 L558.8,227.2 L560.5,225.6 L562.1,224.0 L563.8,222.4 L565.5,220.7 L567.3,219.1 L569.1,217.5 L570.9,215.8 L572.7,214.2 L574.5,212.6 L576.4,211.0 L578.3,209.3 L580.2,207.7 L582.1,206.1 L584.1,204.4 L586.1,202.8 L588.1,201.2 L590.2,199.6 L592.2,197.9 L594.3,196.3 L596.4,194.7 L598.5,193.1 L600.7,191.4 L602.9,189.8 L605.1,188.2 L607.3,186.5 L609.6,184.9 L611.8,183.3 L614.1,181.7 L616.4,180.0 L618.8,178.4 L621.1,176.8 L623.5,175.2 L625.9,173.5 L628.3,171.9 L630.8,170.3 L633.2,168.6 L635.7,167.0 L638.2,165.4 L640.7,163.8 L643.3,162.1 L645.8,160.5 L648.4,158.9 L651.0,157.2 L653.6,155.6 L656.3,154.0 L658.9,152.4 L661.6,150.7 L664.3,149.1 L667.0,147.5 L669.8,145.9 L672.5,144.2 L675.3,142.6 L678.1,141.0 L680.9,139.3 L683.7,137.7 L686.5,136.1 L689.4,134.5 L692.2,132.8 L695.1,131.2 L698.0,129.6 L700.9,128.0 L703.9,126.3 L706.8,124.7 L709.8,123.1 L712.7,121.4 L715.7,119.8 L718.7,118.2 L721.7,116.6 L724.8,114.9 L727.8,113.3 L730.9,111.7 L733.9,110.1 L737.0,108.4 L740.1,106.8 L743.2,105.2 L746.3,103.5 L749.5,101.9 L752.6,100.3 L755.8,98.7 L758.9,97.0 L762.1,95.4 L765.3,93.8 L768.5,92.2 L771.7,90.5 L774.9,88.9 L778.2,87.3 L781.4,85.6 L784.6,84.0 L787.9,82.4 L791.2,80.8 L794.4,79.1 L797.7,77.5 L801.0,75.9 L804.3,74.2 L807.6,72.6 L810.9,71.0 L814.2,69.4 L817.6,67.7 L820.9,66.1 L824.2,64.5 L827.6,62.9 L830.9,61.2 L834.3,59.6 L837.6,58.0 L841.0,56.3 L844.4,54.7 L847.7,53.1 L851.1,51.5 L854.5,49.8 L857.9,48.2 L861.3,46.6 L864.7,45.0 L868.1,43.3 L871.5,41.7 L874.9,40.1 L878.3,38.4 L881.7,36.8 L885.1,35.2 L888.5,33.6 L891.9,31.9 L895.3,30.3 L898.7,28.7 L902.1,27.1"/>
<path d="M902.1,613.0 L898.3,611.3 L894.4,609.7 L890.6,608.1 L886.8,606.4 L882.9,604.8 L879.1,603.2 L875.3,601.6 L871.4,599.9 L867.6,598.3 L863.8,596.7 L860.0,595.0 L856.2,593.4 L852.4,591.8 L848.5,590.2 L844.7,588.5 L840.9,586.9 L837.1,585.3 L833.4,583.7 L829.6,582.0 L825.8,580.4 L822.0,578.8 L818.3,577.1 L814.5,575.5 L810.7,573.9 L807.0,572.3 L803.3,570.6 L799.5,569.0 L795.8,567.4 L792.1,565.8 L788.4,564.1 L784.7,562.5 L781.0,560.9 L777.3,559.2 L773.6,557.6 L770.0,556.0 L766.3,554.4 L762.7,552.7 L759.0,551.1 L755.4,549.5 L751.8,547.9 L748.2,546.2 L744.6,544.6 L741.1,543.0 L737.5,541.3 L733.9,539.7 L730.4,538.1 L726.9,536.5 L723.4,534.8 L719.9,533.2 L716.4,531.6 L712.9,529.9 L709.5,528.3 L706.0,526.7 L702.6,525.1 L699.2,523.4 L695.8,521.8 L692.4,520.2 L689.1,518.6 L685.7,516.9 L682.4,515.3 L679.1,513.7 L675.8,512.0 L672.5,510.4 L669.2,508.8 L666.0,507.2 L662.8,505.5 L659.6,503.9 L656.4,502.3 L653.2,500.7 L650.1,499.0 L646.9,497.4 L643.8,495.8 L640.7,494.1 L637.6,492.5 L634.6,490.9 L631.6,489.3 L628.6,487.6 L625.6,486.0 L622.6,484.4 L619.6,482.8 L616.7,481.1 L613.8,479.5 L610.9,477.9 L608.1,476.2 L605.2,474.6 L602.4,473.0 L599.6,471.4 L596.8,469.7 L594.1,468.1 L591.4,466.5 L588.7,464.8 L586.0,463.2 L583.4,461.6 L580.7,460.0 L578.1,458.3 L575.5,456.7 L573.0,455.1 L570.5,453.5 L568.0,451.8 L565.5,450.2 L563.0,448.6 L560.6,446.9 L558.2,445.3 L555.8,443.7 L553.5,442.1 L551.2,440.4 L548.9,438.8 L546.6,437.2 L544.4,435.6 L542.1,433.9 L540.0,432.3 L537.8,430.7 L535.7,429.0 L533.6,427.4 L531.5,425.8 L529.4,424.2 L527.4,422.5 L525.4,420.9 L523.5,419.3 L521.5,417.6 L519.6,416.0 L517.8,414.4 L515.9,412.8 L514.1,411.1 L512.3,409.5 L510.6,407.9 L508.8,406.3 L507.1,404.6 L505.5,403.0 L503.8,401.4 L502.2,399.7 L500.7,398.1 L499.1,396.5 L497.6,394.9 L496.1,393.2 L494.7,391.6 L493.3,390.0 L491.9,388.4 L490.5,386.7 L489.2,385.1 L487.9,383.5 L486.6,381.8 L485.4,380.2 L484.2,378.6 L483.0,377.0 L481.9,375.3 L480.8,373.7 L479.7,372.1 L478.7,370.5 L477.6,368.8 L476.7,367.2 L475.7,365.6 L474.8,363.9 L473.9,362.3 L473.1,360.7 L472.3,359.1 L471.5,357.4 L470.7,355.8 L470.0,354.2 L469.4,352.6 L468.7,350.9 L468.1,349.3 L467.5,347.7 L467.0,346.0 L466.4,344.4 L466.0,342.8 L465.5,341.2 L465.1,339.5 L464.7,337.9 L464.3,336.3 L464.0,334.6 L463.7,333.0 L463.5,331.4 L463.3,329.8 L463.1,328.1 L462.9,326.5 L462.8,324.9 L462.7,323.3 L462.7,321.6 L462.7,320.0 L462.7,318.4 L462.7,316.7 L462.8,315.1 L462.9,313.5 L463.1,311.9 L463.3,310.2 L463.5,308.6 L463.7,307.0 L464.0,305.4 L464.3,303.7 L464.7,302.1 L465.1,300.5 L465.5,298.8 L466.0,297.2 L466.4,295.6 L467.0,294.0 L467.5,292.3 L468.1,290.7 L468.7,289.1 L469.4,287.4 L470.0,285.8 L470.7,284.2 L471.5,282.6 L472.3,280.9 L473.1,279.3 L473.9,277.7 L474.8,276.1 L475.7,274.4 L476.7,272.8 L477.6,271.2 L478.7,269.5 L479.7,267.9 L480.8,266.3 L481.9,264.7 L483.0,263.0 L484.2,261.4 L485.4,259.8 L486.6,258.2 L487.9,256.5 L489.2,254.9 L490.5,253.3 L491.9,251.6 L493.3,250.0 L494.7,248.4 L496.1,246.8 L497.6,245.1 L499.1,243.5 L500.7,241.9 L502.2,240.3 L503.8,238.6 L505.5,237.0 L507.1,235.4 L508.8,233.7 L510.6,232.1 L512.3,230.5 L514.1,228.9 L515.9,227.2 L517.8,225.6 L519.6,224.0 L521.5,222.4 L523.5,220.7 L525.4,219.1 L527.4,217.5 L529.4,215.8 L531.5,214.2 L533.6,212.6 L535.7,211.0 L537.8,209.3 L540.0,207.7 L542.1,206.1 L544.4,204.4 L546.6,202.8 L548.9,201.2 L551.2,199.6 L553.5,197.9 L555.8,196.3 L558.2,194.7 L560.6,193.1 L563.0,191.4 L565.5,189.8 L568.0,188.2 L570.5,186.5 L573.0,184.9 L575.5,183.3 L578.1,181.7 L580.7,180.0 L583.4,178.4 L586.0,176.8 L588.7,175.2 L591.4,173.5 L594.1,171.9 L596.8,170.3 L599.6,168.6 L602.4,167.0 L605.2,165.4 L608.1,163.8 L610.9,162.1 L613.8,160.5 L616.7,158.9 L619.6,157.2 L622.6,155.6 L625.6,154.0 L628.6,152.4 L631.6,150.7 L634.6,149.1 L637.6,147.5 L640.7,145.9 L643.8,144.2 L646.9,142.6 L650.1,141.0 L653.2,139.3 L656.4,137.7 L659.6,136.1 L662.8,134.5 L666.0,132.8 L669.2,131.2 L672.5,129.6 L675.8,128.0 L679.1,126.3 L682.4,124.7 L685.7,123.1 L689.1,121.4 L692.4,119.8 L695.8,118.2 L699.2,116.6 L702.6,114.9 L706.0,113.3 L709.5,111.7 L712.9,110.1 L716.4,108.4 L719.9,106.8 L723.4,105.2 L726.9,103.5 L730.4,101.9 L733.9,100.3 L737.5,98.7 L741.1,97.0 L744.6,95.4 L748.2,93.8 L751.8,92.2 L755.4,90.5 L759.0,88.9 L762.7,87.3 L766.3,85.6 L770.0,84.0 L773.6,82.4 L777.3,80.8 L781.0,79.1 L784.7,77.5 L788.4,75.9 L792.1,74.2 L795.8,72.6 L799.5,71.0 L803.3,69.4 L807.0,67.7 L810.7,66.1 L814.5,64.5 L818.3,62.9 L822.0,61.2 L825.8,59.6 L829.6,58.0 L833.4,56.3 L837.1,54.7 L840.9,53.1 L844.7,51.5 L848.5,49.8 L852.4,48.2 L856.2,46.6 L860.0,45.0 L863.8,43.3 L867.6,41.7 L871.4,40.1 L875.3,38.4 L879.1,36.8 L882.9,35.2 L886.8,33.6 L890.6,31.9 L894.4,30.3 L898.3,28.7 L902.1,27.1"/>
<path d="M902.1,613.0 L897.8,611.3 L893.6,609.7 L889.3,608.1 L885.1,606.4 L880.8,604.8 L876.5,603.2 L872.3,601.6 L868.0,599.9 L863.8,598.3 L859.5,596.7 L855.3,595.0 L851.1,593.4 L846.8,591.8 L842.6,590.2 L838.4,588.5 L834.1,586.9 L829.9,585.3 L825.7,583.7 L821.5,582.0 L817.3,580.4 L813.1,578.8 L808.9,577.1 L804.8,575.5 L800.6,573.9 L796.4,572.3 L792.3,570.6 L788.1,569.0 L784.0,567.4 L779.9,565.8 L775.7,564.1 L771.6,562.5 L767.5,560.9 L763.4,559.2 L759.3,557.6 L755.3,556.0 L751.2,554.4 L747.2,552.7 L743.1,551.1 L739.1,549.5 L735.1,547.9 L731.1,546.2 L727.1,544.6 L723.2,543.0 L719.2,541.3 L715.3,539.7 L711.3,538.1 L707.4,536.5 L703.5,534.8 L699.6,533.2 L695.8,531.6 L691.9,529.9 L688.1,528.3 L684.2,526.7 L680.4,525.1 L676.7,523.4 L672.9,521.8 L669.1,520.2 L665.4,518.6 L661.7,516.9 L658.0,515.3 L654.3,513.7 L650.6,512.0 L647.0,510.4 L643.4,508.8 L639.8,507.2 L636.2,505.5 L632.6,503.9 L629.1,502.3 L625.6,500.7 L622.1,499.0 L618.6,497.4 L615.1,495.8 L611.7,494.1 L608.3,492.5 L604.9,490.9 L601.5,489.3 L598.2,487.6 L594.8,486.0 L591.5,484.4 L588.3,482.8 L585.0,481.1 L581.8,479.5 L578.6,477.9 L575.4,476.2 L572.2,474.6 L569.1,473.0 L566.0,471.4 L562.9,469.7 L559.9,468.1 L556.9,466.5 L553.9,464.8 L550.9,463.2 L547.9,461.6 L545.0,460.0 L542.1,458.3 L539.3,456.7 L536.4,455.1 L533.6,453.5 L530.8,451.8 L528.1,450.2 L525.4,448.6 L522.7,446.9 L520.0,445.3 L517.4,443.7 L514.7,442.1 L512.2,440.4 L509.6,438.8 L507.1,437.2 L504.6,435.6 L502.1,433.9 L499.7,432.3 L497.3,430.7 L495.0,429.0 L492.6,427.4 L490.3,425.8 L488.0,424.2 L485.8,422.5 L483.6,420.9 L481.4,419.3 L479.3,417.6 L477.1,416.0 L475.1,414.4 L473.0,412.8 L471.0,411.1 L469.0,409.5 L467.1,407.9 L465.1,406.3 L463.3,404.6 L461.4,403.0 L459.6,401.4 L457.8,399.7 L456.1,398.1 L454.3,396.5 L452.7,394.9 L451.0,393.2 L449.4,391.6 L447.8,390.0 L446.3,388.4 L444.8,386.7 L443.3,385.1 L441.9,383.5 L440.5,381.8 L439.1,380.2 L437.7,378.6 L436.4,377.0 L435.2,375.3 L434.0,373.7 L432.8,372.1 L431.6,370.5 L430.5,368.8 L429.4,367.2 L428.4,365.6 L427.3,363.9 L426.4,362.3 L425.4,360.7 L424.5,359.1 L423.7,357.4 L422.8,355.8 L422.0,354.2 L421.3,352.6 L420.5,350.9 L419.9,349.3 L419.2,347.7 L418.6,346.0 L418.0,344.4 L417.5,342.8 L417.0,341.2 L416.5,339.5 L416.1,337.9 L415.7,336.3 L415.4,334.6 L415.0,333.0 L414.8,331.4 L414.5,329.8 L414.3,328.1 L414.1,326.5 L414.0,324.9 L413.9,323.3 L413.9,321.6 L413.9,320.0 L413.9,318.4 L413.9,316.7 L414.0,315.1 L414.1,313.5 L414.3,311.9 L414.5,310.2 L414.8,308.6 L415.0,307.0 L415.4,305.4 L415.7,303.7 L416.1,302.1 L416.5,300.5 L417.0,298.8 L417.5,297.2 L418.0,295.6 L418.6,294.0 L419.2,292.3 L419.9,290.7 L420.5,289.1 L421.3,287.4 L422.0,285.8 L422.8,284.2 L423.7,282.6 L424.5,280.9 L425.4,279.3 L426.4,277.7 L427.3,276.1 L428.4,274.4 L429.4,272.8 L430.5,271.2 L431.6,269.5 L432.8,267.9 L434.0,266.3 L435.2,264.7 L436.4,263.0 L437.7,261.4 L439.1,259.8 L440.5,258.2 L441.9,256.5 L443.3,254.9 L444.8,253.3 L446.3,251.6 L447.8,250.0 L449.4,248.4 L451.0,246.8 L452.7,245.1 L454.3,243.5 L456.1,241.9 L457.8,240.3 L459.6,238.6 L461.4,237.0 L463.3,235.4 L465.1,233.7 L467.1,232.1 L469.0,230.5 L471.0,228.9 L473.0,227.2 L475.1,225.6 L477.1,224.0 L479.3,222.4 L481.4,220.7 L483.6,219.1 L485.8,217.5 L488.0,215.8 L490.3,214.2 L492.6,212.6 L495.0,211.0 L497.3,209.3 L499.7,207.7 L502.1,206.1 L504.6,204.4 L507.1,202.8 L509.6,201.2 L512.2,199.6 L514.7,197.9 L517.4,196.3 L520.0,194.7 L522.7,193.1 L525.4,191.4 L528.1,189.8 L530.8,188.2 L533.6,186.5 L536.4,184.9 L539.3,183.3 L542.1,181.7 L545.0,180.0 L547.9,178.4 L550.9,176.8 L553.9,175.2 L556.9,173.5 L559.9,171.9 L562.9,170.3 L566.0,168.6 L569.1,167.0 L572.2,165.4 L575.4,163.8 L578.6,162.1 L581.8,160.5 L585.0,158.9 L588.3,157.2 L591.5,155.6 L594.8,154.0 L598.2,152.4 L601.5,150.7 L604.9,149.1 L608.3,147.5 L611.7,145.9 L615.1,144.2 L618.6,142.6 L622.1,141.0 L625.6,139.3 L629.1,137.7 L632.6,136.1 L636.2,134.5 L639.8,132.8 L643.4,131.2 L647.0,129.6 L650.6,128.0 L654.3,126.3 L658.0,124.7 L661.7,123.1 L665.4,121.4 L669.1,119.8 L672.9,118.2 L676.7,116.6 L680.4,114.9 L684.2,113.3 L688.1,111.7 L691.9,110.1 L695.8,108.4 L699.6,106.8 L703.5,105.2 L707.4,103.5 L711.3,101.9 L715.3,100.3 L719.2,98.7 L723.2,97.0 L727.1,95.4 L731.1,93.8 L735.1,92.2 L739.1,90.5 L743.1,88.9 L747.2,87.3 L751.2,85.6 L755.3,84.0 L759.3,82.4 L763.4,80.8 L767.5,79.1 L771.6,77.5 L775.7,75.9 L779.9,74.2 L784.0,72.6 L788.1,71.0 L792.3,69.4 L796.4,67.7 L800.6,66.1 L804.8,64.5 L808.9,62.9 L813.1,61.2 L817.3,59.6 L821.5,58.0 L825.7,56.3 L829.9,54.7 L834.1,53.1 L838.4,51.5 L842.6,49.8 L846.8,48.2 L851.1,46.6 L855.3,45.0 L859.5,43.3 L863.8,41.7 L868.0,40.1 L872.3,38.4 L876.5,36.8 L880.8,35.2 L885.1,33.6 L889.3,31.9 L893.6,30.3 L897.8,28.7 L902.1,27.1"/>
<path d="M902.1,613.0 L897.4,611.3 L892.7,609.7 L888.0,608.1 L883.4,606.4 L878.7,604.8 L874.0,603.2 L869.3,601.6 L864.6,599.9 L860.0,598.3 L855.3,596.7 L850.6,595.0 L846.0,593.4 L841.3,591.8 L836.6,590.2 L832.0,588.5 L827.4,586.9 L822.7,585.3 L818.1,583.7 L813.5,582.0 L808.8,580.4 L804.2,578.8 L799.6,577.1 L795.0,575.5 L790.4,573.9 L785.9,572.3 L781.3,570.6 L776.7,569.0 L772.2,567.4 L767.6,565.8 L763.1,564.1 L758.6,562.5 L754.1,560.9 L749.6,559.2 L745.1,557.6 L740.6,556.0 L736.1,554.4 L731.7,552.7 L727.2,551.1 L722.8,549.5 L718.4,547.9 L714.0,546.2 L709.6,544.6 L705.3,543.0 L700.9,541.3 L696.6,539.7 L692.2,538.1 L687.9,536.5 L683.7,534.8 L679.4,533.2 L675.1,531.6 L670.9,529.9 L666.7,528.3 L662.5,526.7 L658.3,525.1 L654.1,523.4 L650.0,521.8 L645.8,520.2 L641.7,518.6 L637.6,516.9 L633.6,515.3 L629.5,513.7 L625.5,512.0 L621.5,510.4 L617.5,508.8 L613.5,507.2 L609.6,505.5 L605.7,503.9 L601.8,502.3 L597.9,500.7 L594.0,499.0 L590.2,497.4 L586.4,495.8 L582.6,494.1 L578.9,492.5 L575.1,490.9 L571.4,489.3 L567.8,487.6 L564.1,486.0 L560.5,484.4 L556.9,482.8 L553.3,481.1 L549.7,479.5 L546.2,477.9 L542.7,476.2 L539.3,474.6 L535.8,473.0 L532.4,471.4 L529.0,469.7 L525.7,468.1 L522.3,466.5 L519.0,464.8 L515.8,463.2 L512.5,461.6 L509.3,460.0 L506.1,458.3 L503.0,456.7 L499.9,455.1 L496.8,453.5 L493.7,451.8 L490.7,450.2 L487.7,448.6 L484.7,446.9 L481.8,445.3 L478.9,443.7 L476.0,442.1 L473.2,440.4 L470.4,438.8 L467.6,437.2 L464.9,435.6 L462.2,433.9 L459.5,432.3 L456.8,430.7 L454.2,429.0 L451.7,427.4 L449.1,425.8 L446.6,424.2 L444.2,422.5 L441.7,420.9 L439.3,419.3 L437.0,417.6 L434.7,416.0 L432.4,414.4 L430.1,412.8 L427.9,411.1 L425.7,409.5 L423.6,407.9 L421.5,406.3 L419.4,404.6 L417.3,403.0 L415.3,401.4 L413.4,399.7 L411.5,398.1 L409.6,396.5 L407.7,394.9 L405.9,393.2 L404.1,391.6 L402.4,390.0 L400.7,388.4 L399.0,386.7 L397.4,385.1 L395.8,383.5 L394.3,381.8 L392.8,380.2 L391.3,378.6 L389.9,377.0 L388.5,375.3 L387.1,373.7 L385.8,372.1 L384.6,370.5 L383.3,368.8 L382.1,367.2 L381.0,365.6 L379.9,363.9 L378.8,362.3 L377.8,360.7 L376.8,359.1 L375.8,357.4 L374.9,355.8 L374.0,354.2 L373.2,352.6 L372.4,350.9 L371.6,349.3 L370.9,347.7 L370.3,346.0 L369.6,344.4 L369.0,342.8 L368.5,341.2 L368.0,339.5 L367.5,337.9 L367.1,336.3 L366.7,334.6 L366.3,333.0 L366.0,331.4 L365.8,329.8 L365.5,328.1 L365.4,326.5 L365.2,324.9 L365.1,323.3 L365.0,321.6 L365.0,320.0 L365.0,318.4 L365.1,316.7 L365.2,315.1 L365.4,313.5 L365.5,311.9 L365.8,310.2 L366.0,308.6 L366.3,307.0 L366.7,305.4 L367.1,303.7 L367.5,302.1 L368.0,300.5 L368.5,298.8 L369.0,297.2 L369.6,295.6 L370.3,294.0 L370.9,292.3 L371.6,290.7 L372.4,289.1 L373.2,287.4 L374.0,285.8 L374.9,284.2 L375.8,282.6 L376.8,280.9 L377.8,279.3 L378.8,277.7 L379.9,276.1 L381.0,274.4 L382.1,272.8 L383.3,271.2 L384.6,269.5 L385.8,267.9 L387.1,266.3 L388.5,264.7 L389.9,263.0 L391.3,261.4 L392.8,259.8 L394.3,258.2 L395.8,256.5 L397.4,254.9 L399.0,253.3 L400.7,251.6 L402.4,250.0 L404.1,248.4 L405.9,246.8 L407.7,245.1 L409.6,243.5 L411.5,241.9 L413.4,240.3 L415.3,238.6 L417.3,237.0 L419.4,235.4 L421.5,233.7 L423.6,232.1 L425.7,230.5 L427.9,228.9 L430.1,227.2 L432.4,225.6 L434.7,224.0 L437.0,222.4 L439.3,220.7 L441.7,219.1 L444.2,217.5 L446.6,215.8 L449.1,214.2 L451.7,212.6 L454.2,211.0 L456.8,209.3 L459.5,207.7 L462.2,206.1 L464.9,204.4 L467.6,202.8 L470.4,201.2 L473.2,199.6 L476.0,197.9 L478.9,196.3 L481.8,194.7 L484.7,193.1 L487.7,191.4 L490.7,189.8 L493.7,188.2 L496.8,186.5 L499.9,184.9 L503.0,183.3 L506.1,181.7 L509.3,180.0 L512.5,178.4 L515.8,176.8 L519.0,175.2 L522.3,173.5 L525.7,171.9 L529.0,170.3 L532.4,168.6 L535.8,167.0 L539.3,165.4 L542.7,163.8 L546.2,162.1 L549.7,160.5 L553.3,158.9 L556.9,157.2 L560.5,155.6 L564.1,154.0 L567.8,152.4 L571.4,150.7 L575.1,149.1 L578.9,147.5 L582.6,145.9 L586.4,144.2 L590.2,142.6 L594.0,141.0 L597.9,139.3 L601.8,137.7 L605.7,136.1 L609.6,134.5 L613.5,132.8 L617.5,131.2 L621.5,129.6 L625.5,128.0 L629.5,126.3 L633.6,124.7 L637.6,123.1 L641.7,121.4 L645.8,119.8 L650.0,118.2 L654.1,116.6 L658.3,114.9 L662.5,113.3 L666.7,111.7 L670.9,110.1 L675.1,108.4 L679.4,106.8 L683.7,105.2 L687.9,103.5 L692.2,101.9 L696.6,100.3 L700.9,98.7 L705.3,97.0 L709.6,95.4 L714.0,93.8 L718.4,92.2 L722.8,90.5 L727.2,88.9 L731.7,87.3 L736.1,85.6 L740.6,84.0 L745.1,82.4 L749.6,80.8 L754.1,79.1 L758.6,77.5 L763.1,75.9 L767.6,74.2 L772.2,72.6 L776.7,71.0 L781.3,69.4 L785.9,67.7 L790.4,66.1 L795.0,64.5 L799.6,62.9 L804.2,61.2 L808.8,59.6 L813.5,58.0 L818.1,56.3 L822.7,54.7 L827.4,53.1 L832.0,51.5 L836.6,49.8 L841.3,48.2 L846.0,46.6 L850.6,45.0 L855.3,43.3 L860.0,41.7 L864.6,40.1 L869.3,38.4 L874.0,36.8 L878.7,35.2 L883.4,33.6 L888.0,31.9 L892.7,30.3 L897.4,28.7 L902.1,27.1"/>
<path d="M902.1,613.0 L897.0,611.3 L891.9,609.7 L886.8,608.1 L881.7,606.4 L876.5,604.8 L871.4,603.2 L866.3,601.6 L861.2,599.9 L856.1,598.3 L851.0,596.7 L845.9,595.0 L840.9,593.4 L835.8,591.8 L830.7,590.2 L825.6,588.5 L820.6,586.9 L815.5,585.3 L810.4,583.7 L805.4,582.0 L800.4,580.4 L795.3,578.8 L790.3,577.1 L785.3,575.5 L780.3,573.9 L775.3,572.3 L770.3,570.6 L765.3,569.0 L760.4,567.4 L755.4,565.8 L750.5,564.1 L745.5,562.5 L740.6,560.9 L735.7,559.2 L730.8,557.6 L725.9,556.0 L721.0,554.4 L716.2,552.7 L711.3,551.1 L706.5,549.5 L701.7,547.9 L696.9,546.2 L692.1,544.6 L687.4,543.0 L682.6,541.3 L677.9,539.7 L673.2,538.1 L668.5,536.5 L663.8,534.8 L659.1,533.2 L654.5,531.6 L649.9,529.9 L645.3,528.3 L640.7,526.7 L636.1,525.1 L631.6,523.4 L627.0,521.8 L622.5,520.2 L618.1,518.6 L613.6,516.9 L609.1,515.3 L604.7,513.7 L600.3,512.0 L596.0,510.4 L591.6,508.8 L587.3,507.2 L583.0,505.5 L578.7,503.9 L574.5,502.3 L570.2,500.7 L566.0,499.0 L561.9,497.4 L557.7,495.8 L553.6,494.1 L549.5,492.5 L545.4,490.9 L541.4,489.3 L537.4,487.6 L533.4,486.0 L529.4,484.4 L525.5,482.8 L521.6,481.1 L517.7,479.5 L513.9,477.9 L510.1,476.2 L506.3,474.6 L502.5,473.0 L498.8,471.4 L495.1,469.7 L491.4,468.1 L487.8,466.5 L484.2,464.8 L480.6,463.2 L477.1,461.6 L473.6,460.0 L470.1,458.3 L466.7,456.7 L463.3,455.1 L459.9,453.5 L456.6,451.8 L453.3,450.2 L450.0,448.6 L446.8,446.9 L443.6,445.3 L440.4,443.7 L437.3,442.1 L434.2,440.4 L431.1,438.8 L428.1,437.2 L425.1,435.6 L422.2,433.9 L419.2,432.3 L416.4,430.7 L413.5,429.0 L410.7,427.4 L408.0,425.8 L405.2,424.2 L402.5,422.5 L399.9,420.9 L397.3,419.3 L394.7,417.6 L392.2,416.0 L389.7,414.4 L387.2,412.8 L384.8,411.1 L382.4,409.5 L380.1,407.9 L377.8,406.3 L375.5,404.6 L373.3,403.0 L371.1,401.4 L369.0,399.7 L366.9,398.1 L364.8,396.5 L362.8,394.9 L360.8,393.2 L358.9,391.6 L357.0,390.0 L355.1,388.4 L353.3,386.7 L351.5,385.1 L349.8,383.5 L348.1,381.8 L346.5,380.2 L344.9,378.6 L343.3,377.0 L341.8,375.3 L340.3,373.7 L338.9,372.1 L337.5,370.5 L336.2,368.8 L334.9,367.2 L333.6,365.6 L332.4,363.9 L331.2,362.3 L330.1,360.7 L329.0,359.1 L328.0,357.4 L327.0,355.8 L326.0,354.2 L325.1,352.6 L324.2,350.9 L323.4,349.3 L322.6,347.7 L321.9,346.0 L321.2,344.4 L320.6,342.8 L320.0,341.2 L319.4,339.5 L318.9,337.9 L318.4,336.3 L318.0,334.6 L317.6,333.0 L317.3,331.4 L317.0,329.8 L316.8,328.1 L316.6,326.5 L316.4,324.9 L316.3,323.3 L316.2,321.6 L316.2,320.0 L316.2,318.4 L316.3,316.7 L316.4,315.1 L316.6,313.5 L316.8,311.9 L317.0,310.2 L317.3,308.6 L317.6,307.0 L318.0,305.4 L318.4,303.7 L318.9,302.1 L319.4,300.5 L320.0,298.8 L320.6,297.2 L321.2,295.6 L321.9,294.0 L322.6,292.3 L323.4,290.7 L324.2,289.1 L325.1,287.4 L326.0,285.8 L327.0,284.2 L328.0,282.6 L329.0,280.9 L330.1,279.3 L331.2,277.7 L332.4,276.1 L333.6,274.4 L334.9,272.8 L336.2,271.2 L337.5,269.5 L338.9,267.9 L340.3,266.3 L341.8,264.7 L343.3,263.0 L344.9,261.4 L346.5,259.8 L348.1,258.2 L349.8,256.5 L351.5,254.9 L353.3,253.3 L355.1,251.6 L357.0,250.0 L358.9,248.4 L360.8,246.8 L362.8,245.1 L364.8,243.5 L366.9,241.9 L369.0,240.3 L371.1,238.6 L373.3,237.0 L375.5,235.4 L377.8,233.7 L380.1,232.1 L382.4,230.5 L384.8,228.9 L387.2,227.2 L389.7,225.6 L392.2,224.0 L394.7,222.4 L397.3,220.7 L399.9,219.1 L402.5,217.5 L405.2,215.8 L408.0,214.2 L410.7,212.6 L413.5,211.0 L416.4,209.3 L419.2,207.7 L422.2,206.1 L425.1,204.4 L428.1,202.8 L431.1,201.2 L434.2,199.6 L437.3,197.9 L440.4,196.3 L443.6,194.7 L446.8,193.1 L450.0,191.4 L453.3,189.8 L456.6,188.2 L459.9,186.5 L463.3,184.9 L466.7,183.3 L470.1,181.7 L473.6,180.0 L477.1,178.4 L480.6,176.8 L484.2,175.2 L487.8,173.5 L491.4,171.9 L495.1,170.3 L498.8,168.6 L502.5,167.0 L506.3,165.4 L510.1,163.8 L513.9,162.1 L517.7,160.5 L521.6,158.9 L525.5,157.2 L529.4,155.6 L533.4,154.0 L537.4,152.4 L541.4,150.7 L545.4,149.1 L549.5,147.5 L553.6,145.9 L557.7,144.2 L561.9,142.6 L566.0,141.0 L570.2,139.3 L574.5,137.7 L578.7,136.1 L583.0,134.5 L587.3,132.8 L591.6,131.2 L596.0,129.6 L600.3,128.0 L604.7,126.3 L609.1,124.7 L613.6,123.1 L618.1,121.4 L622.5,119.8 L627.0,118.2 L631.6,116.6 L636.1,114.9 L640.7,113.3 L645.3,111.7 L649.9,110.1 L654.5,108.4 L659.1,106.8 L663.8,105.2 L668.5,103.5 L673.2,101.9 L677.9,100.3 L682.6,98.7 L687.4,97.0 L692.1,95.4 L696.9,93.8 L701.7,92.2 L706.5,90.5 L711.3,88.9 L716.2,87.3 L721.0,85.6 L725.9,84.0 L730.8,82.4 L735.7,80.8 L740.6,79.1 L745.5,77.5 L750.5,75.9 L755.4,74.2 L760.4,72.6 L765.3,71.0 L770.3,69.4 L775.3,67.7 L780.3,66.1 L785.3,64.5 L790.3,62.9 L795.3,61.2 L800.4,59.6 L805.4,58.0 L810.4,56.3 L815.5,54.7 L820.6,53.1 L825.6,51.5 L830.7,49.8 L835.8,48.2 L840.9,46.6 L845.9,45.0 L851.0,43.3 L856.1,41.7 L861.2,40.1 L866.3,38.4 L871.4,36.8 L876.5,35.2 L881.7,33.6 L886.8,31.9 L891.9,30.3 L897.0,28.7 L902.1,27.1"/>
<path d="M750.5,564.1 L751.3,564.1 L752.1,564.1 L753.0,564.1 L753.8,564.1 L754.7,564.1 L755.5,564.1 L756.4,564.1 L757.2,564.1 L758.0,564.1 L758.9,564.1 L759.7,564.1 L760.6,564.1 L761.4,564.1 L762.3,564.1 L763.1,564.1 L763.9,564.1 L764.8,564.1 L765.6,564.1 L766.5,564.1 L767.3,564.1 L768.1,564.1 L769.0,564.1 L769.8,564.1 L770.7,564.1 L771.5,564.1 L772.4,564.1 L773.2,564.1 L774.0,564.1 L774.9,564.1 L775.7,564.1 L776.6,564.1 L777.4,564.1 L778.3,564.1 L779.1,564.1 L779.9,564.1 L780.8,564.1 L781.6,564.1 L782.5,564.1 L783.3,564.1 L784.2,564.1 L785.0,564.1 L785.8,564.1 L786.7,564.1 L787.5,564.1 L788.4,564.1 L789.2,564.1 L790.1,564.1 L790.9,564.1 L791.7,564.1 L792.6,564.1 L793.4,564.1 L794.3,564.1 L795.1,564.1 L796.0,564.1 L796.8,564.1 L797.6,564.1 L798.5,564.1 L799.3,564.1 L800.2,564.1 L801.0,564.1 L801.8,564.1 L802.7,564.1 L803.5,564.1 L804.4,564.1 L805.2,564.1 L806.1,564.1 L806.9,564.1 L807.7,564.1 L808.6,564.1 L809.4,564.1 L810.3,564.1 L811.1,564.1 L812.0,564.1 L812.8,564.1 L813.6,564.1 L814.5,564.1 L815.3,564.1 L816.2,564.1 L817.0,564.1 L817.9,564.1 L818.7,564.1 L819.5,564.1 L820.4,564.1 L821.2,564.1 L822.1,564.1 L822.9,564.1 L823.8,564.1 L824.6,564.1 L825.4,564.1 L826.3,564.1 L827.1,564.1 L828.0,564.1 L828.8,564.1 L829.6,564.1 L830.5,564.1 L831.3,564.1 L832.2,564.1 L833.0,564.1 L833.9,564.1 L834.7,564.1 L835.5,564.1 L836.4,564.1 L837.2,564.1 L838.1,564.1 L838.9,564.1 L839.8,564.1 L840.6,564.1 L841.4,564.1 L842.3,564.1 L843.1,564.1 L844.0,564.1 L844.8,564.1 L845.7,564.1 L846.5,564.1 L847.3,564.1 L848.2,564.1 L849.0,564.1 L849.9,564.1 L850.7,564.1 L851.6,564.1 L852.4,564.1 L853.2,564.1 L854.1,564.1 L854.9,564.1 L855.8,564.1 L856.6,564.1 L857.4,564.1 L858.3,564.1 L859.1,564.1 L860.0,564.1 L860.8,564.1 L861.7,564.1 L862.5,564.1 L863.3,564.1 L864.2,564.1 L865.0,564.1 L865.9,564.1 L866.7,564.1 L867.6,564.1 L868.4,564.1 L869.2,564.1 L870.1,564.1 L870.9,564.1 L871.8,564.1 L872.6,564.1 L873.5,564.1 L874.3,564.1 L875.1,564.1 L876.0,564.1 L876.8,564.1 L877.7,564.1 L878.5,564.1 L879.4,564.1 L880.2,564.1 L881.0,564.1 L881.9,564.1 L882.7,564.1 L883.6,564.1 L884.4,564.1 L885.3,564.1 L886.1,564.1 L886.9,564.1 L887.8,564.1 L888.6,564.1 L889.5,564.1 L890.3,564.1 L891.1,564.1 L892.0,564.1 L892.8,564.1 L893.7,564.1 L894.5,564.1 L895.4,564.1 L896.2,564.1 L897.0,564.1 L897.9,564.1 L898.7,564.1 L899.6,564.1 L900.4,564.1 L901.3,564.1 L902.1,564.1 L902.9,564.1 L903.8,564.1 L904.6,564.1 L905.5,564.1 L906.3,564.1 L907.2,564.1 L908.0,564.1 L908.8,564.1 L909.7,564.1 L910.5,564.1 L911.4,564.1 L912.2,564.1 L913.1,564.1 L913.9,564.1 L914.7,564.1 L915.6,564.1 L916.4,564.1 L917.3,564.1 L918.1,564.1 L918.9,564.1 L919.8,564.1 L920.6,564.1 L921.5,564.1 L922.3,564.1 L923.2,564.1 L924.0,564.1 L924.8,564.1 L925.7,564.1 L926.5,564.1 L927.4,564.1 L928.2,564.1 L929.1,564.1 L929.9,564.1 L930.7,564.1 L931.6,564.1 L932.4,564.1 L933.3,564.1 L934.1,564.1 L935.0,564.1 L935.8,564.1 L936.6,564.1 L937.5,564.1 L938.3,564.1 L939.2,564.1 L940.0,564.1 L940.9,564.1 L941.7,564.1 L942.5,564.1 L943.4,564.1 L944.2,564.1 L945.1,564.1 L945.9,564.1 L946.8,564.1 L947.6,564.1 L948.4,564.1 L949.3,564.1 L950.1,564.1 L951.0,564.1 L951.8,564.1 L952.6,564.1 L953.5,564.1 L954.3,564.1 L955.2,564.1 L956.0,564.1 L956.9,564.1 L957.7,564.1 L958.5,564.1 L959.4,564.1 L960.2,564.1 L961.1,564.1 L961.9,564.1 L962.8,564.1 L963.6,564.1 L964.4,564.1 L965.3,564.1 L966.1,564.1 L967.0,564.1 L967.8,564.1 L968.7,564.1 L969.5,564.1 L970.3,564.1 L971.2,564.1 L972.0,564.1 L972.9,564.1 L973.7,564.1 L974.6,564.1 L975.4,564.1 L976.2,564.1 L977.1,564.1 L977.9,564.1 L978.8,564.1 L979.6,564.1 L980.4,564.1 L981.3,564.1 L982.1,564.1 L983.0,564.1 L983.8,564.1 L984.7,564.1 L985.5,564.1 L986.3,564.1 L987.2,564.1 L988.0,564.1 L988.9,564.1 L989.7,564.1 L990.6,564.1 L991.4,564.1 L992.2,564.1 L993.1,564.1 L993.9,564.1 L994.8,564.1 L995.6,564.1 L996.5,564.1 L997.3,564.1 L998.1,564.1 L999.0,564.1 L999.8,564.1 L1000.7,564.1 L1001.5,564.1 L1002.4,564.1 L1003.2,564.1 L1004.0,564.1 L1004.9,564.1 L1005.7,564.1 L1006.6,564.1 L1007.4,564.1 L1008.2,564.1 L1009.1,564.1 L1009.9,564.1 L1010.8,564.1 L1011.6,564.1 L1012.5,564.1 L1013.3,564.1 L1014.1,564.1 L1015.0,564.1 L1015.8,564.1 L1016.7,564.1 L1017.5,564.1 L1018.4,564.1 L1019.2,564.1 L1020.0,564.1 L1020.9,564.1 L1021.7,564.1 L1022.6,564.1 L1023.4,564.1 L1024.3,564.1 L1025.1,564.1 L1025.9,564.1 L1026.8,564.1 L1027.6,564.1 L1028.5,564.1 L1029.3,564.1 L1030.2,564.1 L1031.0,564.1 L1031.8,564.1 L1032.7,564.1 L1033.5,564.1 L1034.4,564.1 L1035.2,564.1 L1036.1,564.1 L1036.9,564.1 L1037.7,564.1 L1038.6,564.1 L1039.4,564.1 L1040.3,564.1 L1041.1,564.1 L1041.9,564.1 L1042.8,564.1 L1043.6,564.1 L1044.5,564.1 L1045.3,564.1 L1046.2,564.1 L1047.0,564.1 L1047.8,564.1 L1048.7,564.1 L1049.5,564.1 L1050.4,564.1 L1051.2,564.1 L1052.1,564.1 L1052.9,564.1 L1053.7,564.1"/>
<path d="M609.1,515.3 L610.8,515.3 L612.4,515.3 L614.0,515.3 L615.7,515.3 L617.3,515.3 L618.9,515.3 L620.5,515.3 L622.2,515.3 L623.8,515.3 L625.4,515.3 L627.1,515.3 L628.7,515.3 L630.3,515.3 L631.9,515.3 L633.6,515.3 L635.2,515.3 L636.8,515.3 L638.4,515.3 L640.1,515.3 L641.7,515.3 L643.3,515.3 L645.0,515.3 L646.6,515.3 L648.2,515.3 L649.8,515.3 L651.5,515.3 L653.1,515.3 L654.7,515.3 L656.3,515.3 L658.0,515.3 L659.6,515.3 L661.2,515.3 L662.9,515.3 L664.5,515.3 L666.1,515.3 L667.7,515.3 L669.4,515.3 L671.0,515.3 L672.6,515.3 L674.2,515.3 L675.9,515.3 L677.5,515.3 L679.1,515.3 L680.8,515.3 L682.4,515.3 L684.0,515.3 L685.6,515.3 L687.3,515.3 L688.9,515.3 L690.5,515.3 L692.2,515.3 L693.8,515.3 L695.4,515.3 L697.0,515.3 L698.7,515.3 L700.3,515.3 L701.9,515.3 L703.5,515.3 L705.2,515.3 L706.8,515.3 L708.4,515.3 L710.1,515.3 L711.7,515.3 L713.3,515.3 L714.9,515.3 L716.6,515.3 L718.2,515.3 L719.8,515.3 L721.4,515.3 L723.1,515.3 L724.7,515.3 L726.3,515.3 L728.0,515.3 L729.6,515.3 L731.2,515.3 L732.8,515.3 L734.5,515.3 L736.1,515.3 L737.7,515.3 L739.4,515.3 L741.0,515.3 L742.6,515.3 L744.2,515.3 L745.9,515.3 L747.5,515.3 L749.1,515.3 L750.7,515.3 L752.4,515.3 L754.0,515.3 L755.6,515.3 L757.3,515.3 L758.9,515.3 L760.5,515.3 L762.1,515.3 L763.8,515.3 L765.4,515.3 L767.0,515.3 L768.6,515.3 L770.3,515.3 L771.9,515.3 L773.5,515.3 L775.2,515.3 L776.8,515.3 L778.4,515.3 L780.0,515.3 L781.7,515.3 L783.3,515.3 L784.9,515.3 L786.5,515.3 L788.2,515.3 L789.8,515.3 L791.4,515.3 L793.1,515.3 L794.7,515.3 L796.3,515.3 L797.9,515.3 L799.6,515.3 L801.2,515.3 L802.8,515.3 L804.5,515.3 L806.1,515.3 L807.7,515.3 L809.3,515.3 L811.0,515.3 L812.6,515.3 L814.2,515.3 L815.8,515.3 L817.5,515.3 L819.1,515.3 L820.7,515.3 L822.4,515.3 L824.0,515.3 L825.6,515.3 L827.2,515.3 L828.9,515.3 L830.5,515.3 L832.1,515.3 L833.7,515.3 L835.4,515.3 L837.0,515.3 L838.6,515.3 L840.3,515.3 L841.9,515.3 L843.5,515.3 L845.1,515.3 L846.8,515.3 L848.4,515.3 L850.0,515.3 L851.6,515.3 L853.3,515.3 L854.9,515.3 L856.5,515.3 L858.2,515.3 L859.8,515.3 L861.4,515.3 L863.0,515.3 L864.7,515.3 L866.3,515.3 L867.9,515.3 L869.6,515.3 L871.2,515.3 L872.8,515.3 L874.4,515.3 L876.1,515.3 L877.7,515.3 L879.3,515.3 L880.9,515.3 L882.6,515.3 L884.2,515.3 L885.8,515.3 L887.5,515.3 L889.1,515.3 L890.7,515.3 L892.3,515.3 L894.0,515.3 L895.6,515.3 L897.2,515.3 L898.8,515.3 L900.5,515.3 L902.1,515.3 L903.7,515.3 L905.4,515.3 L907.0,515.3 L908.6,515.3 L910.2,515.3 L911.9,515.3 L913.5,515.3 L915.1,515.3 L916.7,515.3 L918.4,515.3 L920.0,515.3 L921.6,515.3 L923.3,515.3 L924.9,515.3 L926.5,515.3 L928.1,515.3 L929.8,515.3 L931.4,515.3 L933.0,515.3 L934.6,515.3 L936.3,515.3 L937.9,515.3 L939.5,515.3 L941.2,515.3 L942.8,515.3 L944.4,515.3 L946.0,515.3 L947.7,515.3 L949.3,515.3 L950.9,515.3 L952.6,515.3 L954.2,515.3 L955.8,515.3 L957.4,515.3 L959.1,515.3 L960.7,515.3 L962.3,515.3 L963.9,515.3 L965.6,515.3 L967.2,515.3 L968.8,515.3 L970.5,515.3 L972.1,515.3 L973.7,515.3 L975.3,515.3 L977.0,515.3 L978.6,515.3 L980.2,515.3 L981.8,515.3 L983.5,515.3 L985.1,515.3 L986.7,515.3 L988.4,515.3 L990.0,515.3 L991.6,515.3 L993.2,515.3 L994.9,515.3 L996.5,515.3 L998.1,515.3 L999.8,515.3 L1001.4,515.3 L1003.0,515.3 L1004.6,515.3 L1006.3,515.3 L1007.9,515.3 L1009.5,515.3 L1011.1,515.3 L1012.8,515.3 L1014.4,515.3 L1016.0,515.3 L1017.7,515.3 L1019.3,515.3 L1020.9,515.3 L1022.5,515.3 L1024.2,515.3 L1025.8,515.3 L1027.4,515.3 L1029.0,515.3 L1030.7,515.3 L1032.3,515.3 L1033.9,515.3 L1035.6,515.3 L1037.2,515.3 L1038.8,515.3 L1040.4,515.3 L1042.1,515.3 L1043.7,515.3 L1045.3,515.3 L1046.9,515.3 L1048.6,515.3 L1050.2,515.3 L1051.8,515.3 L1053.5,515.3 L1055.1,515.3 L1056.7,515.3 L1058.3,515.3 L1060.0,515.3 L1061.6,515.3 L1063.2,515.3 L1064.9,515.3 L1066.5,515.3 L1068.1,515.3 L1069.7,515.3 L1071.4,515.3 L1073.0,515.3 L1074.6,515.3 L1076.2,515.3 L1077.9,515.3 L1079.5,515.3 L1081.1,515.3 L1082.8,515.3 L1084.4,515.3 L1086.0,515.3 L1087.6,515.3 L1089.3,515.3 L1090.9,515.3 L1092.5,515.3 L1094.1,515.3 L1095.8,515.3 L1097.4,515.3 L1099.0,515.3 L1100.7,515.3 L1102.3,515.3 L1103.9,515.3 L1105.5,515.3 L1107.2,515.3 L1108.8,515.3 L1110.4,515.3 L1112.0,515.3 L1113.7,515.3 L1115.3,515.3 L1116.9,515.3 L1118.6,515.3 L1120.2,515.3 L1121.8,515.3 L1123.4,515.3 L1125.1,515.3 L1126.7,515.3 L1128.3,515.3 L1130.0,515.3 L1131.6,515.3 L1133.2,515.3 L1134.8,515.3 L1136.5,515.3 L1138.1,515.3 L1139.7,515.3 L1141.3,515.3 L1143.0,515.3 L1144.6,515.3 L1146.2,515.3 L1147.9,515.3 L1149.5,515.3 L1151.1,515.3 L1152.7,515.3 L1154.4,515.3 L1156.0,515.3 L1157.6,515.3 L1159.2,515.3 L1160.9,515.3 L1162.5,515.3 L1164.1,515.3 L1165.8,515.3 L1167.4,515.3 L1169.0,515.3 L1170.6,515.3 L1172.3,515.3 L1173.9,515.3 L1175.5,515.3 L1177.1,515.3 L1178.8,515.3 L1180.4,515.3 L1182.0,515.3 L1183.7,515.3 L1185.3,515.3 L1186.9,515.3 L1188.5,515.3 L1190.2,515.3 L1191.8,515.3 L1193.4,515.3 L1195.1,515.3"/>
<path d="M487.8,466.5 L490.1,466.5 L492.4,466.5 L494.7,466.5 L497.0,466.5 L499.3,466.5 L501.6,466.5 L503.9,466.5 L506.2,466.5 L508.5,466.5 L510.8,466.5 L513.1,466.5 L515.4,466.5 L517.7,466.5 L520.0,466.5 L522.3,466.5 L524.6,466.5 L526.9,466.5 L529.2,466.5 L531.5,466.5 L533.8,466.5 L536.1,466.5 L538.4,466.5 L540.7,466.5 L543.0,466.5 L545.3,466.5 L547.6,466.5 L550.0,466.5 L552.3,466.5 L554.6,466.5 L556.9,466.5 L559.2,466.5 L561.5,466.5 L563.8,466.5 L566.1,466.5 L568.4,466.5 L570.7,466.5 L573.0,466.5 L575.3,466.5 L577.6,466.5 L579.9,466.5 L582.2,466.5 L584.5,466.5 L586.8,466.5 L589.1,466.5 L591.4,466.5 L593.7,466.5 L596.0,466.5 L598.3,466.5 L600.6,466.5 L602.9,466.5 L605.2,466.5 L607.5,466.5 L609.8,466.5 L612.1,466.5 L614.4,466.5 L616.7,466.5 L619.0,466.5 L621.3,466.5 L623.6,466.5 L625.9,466.5 L628.2,466.5 L630.5,466.5 L632.8,466.5 L635.1,466.5 L637.4,466.5 L639.7,466.5 L642.0,466.5 L644.3,466.5 L646.6,466.5 L648.9,466.5 L651.2,466.5 L653.5,466.5 L655.8,466.5 L658.1,466.5 L660.4,466.5 L662.7,466.5 L665.0,466.5 L667.3,466.5 L669.6,466.5 L671.9,466.5 L674.2,466.5 L676.5,466.5 L678.8,466.5 L681.1,466.5 L683.4,466.5 L685.7,466.5 L688.0,466.5 L690.3,466.5 L692.7,466.5 L695.0,466.5 L697.3,466.5 L699.6,466.5 L701.9,466.5 L704.2,466.5 L706.5,466.5 L708.8,466.5 L711.1,466.5 L713.4,466.5 L715.7,466.5 L718.0,466.5 L720.3,466.5 L722.6,466.5 L724.9,466.5 L727.2,466.5 L729.5,466.5 L731.8,466.5 L734.1,466.5 L736.4,466.5 L738.7,466.5 L741.0,466.5 L743.3,466.5 L745.6,466.5 L747.9,466.5 L750.2,466.5 L752.5,466.5 L754.8,466.5 L757.1,466.5 L759.4,466.5 L761.7,466.5 L764.0,466.5 L766.3,466.5 L768.6,466.5 L770.9,466.5 L773.2,466.5 L775.5,466.5 L777.8,466.5 L780.1,466.5 L782.4,466.5 L784.7,466.5 L787.0,466.5 L789.3,466.5 L791.6,466.5 L793.9,466.5 L796.2,466.5 L798.5,466.5 L800.8,466.5 L803.1,466.5 L805.4,466.5 L807.7,466.5 L810.0,466.5 L812.3,466.5 L814.6,466.5 L816.9,466.5 L819.2,466.5 L821.5,466.5 L823.8,466.5 L826.1,466.5 L828.4,466.5 L830.7,466.5 L833.1,466.5 L835.4,466.5 L837.7,466.5 L840.0,466.5 L842.3,466.5 L844.6,466.5 L846.9,466.5 L849.2,466.5 L851.5,466.5 L853.8,466.5 L856.1,466.5 L858.4,466.5 L860.7,466.5 L863.0,466.5 L865.3,466.5 L867.6,466.5 L869.9,466.5 L872.2,466.5 L874.5,466.5 L876.8,466.5 L879.1,466.5 L881.4,466.5 L883.7,466.5 L886.0,466.5 L888.3,466.5 L890.6,466.5 L892.9,466.5 L895.2,466.5 L897.5,466.5 L899.8,466.5 L902.1,466.5 L904.4,466.5 L906.7,466.5 L909.0,466.5 L911.3,466.5 L913.6,466.5 L915.9,466.5 L918.2,466.5 L920.5,466.5 L922.8,466.5 L925.1,466.5 L927.4,466.5 L929.7,466.5 L932.0,466.5 L934.3,466.5 L936.6,466.5 L938.9,466.5 L941.2,466.5 L943.5,466.5 L945.8,466.5 L948.1,466.5 L950.4,466.5 L952.7,466.5 L955.0,466.5 L957.3,466.5 L959.6,466.5 L961.9,466.5 L964.2,466.5 L966.5,466.5 L968.8,466.5 L971.1,466.5 L973.5,466.5 L975.8,466.5 L978.1,466.5 L980.4,466.5 L982.7,466.5 L985.0,466.5 L987.3,466.5 L989.6,466.5 L991.9,466.5 L994.2,466.5 L996.5,466.5 L998.8,466.5 L1001.1,466.5 L1003.4,466.5 L1005.7,466.5 L1008.0,466.5 L1010.3,466.5 L1012.6,466.5 L1014.9,466.5 L1017.2,466.5 L1019.5,466.5 L1021.8,466.5 L1024.1,466.5 L1026.4,466.5 L1028.7,466.5 L1031.0,466.5 L1033.3,466.5 L1035.6,466.5 L1037.9,466.5 L1040.2,466.5 L1042.5,466.5 L1044.8,466.5 L1047.1,466.5 L1049.4,466.5 L1051.7,466.5 L1054.0,466.5 L1056.3,466.5 L1058.6,466.5 L1060.9,466.5 L1063.2,466.5 L1065.5,466.5 L1067.8,466.5 L1070.1,466.5 L1072.4,466.5 L1074.7,466.5 L1077.0,466.5 L1079.3,466.5 L1081.6,466.5 L1083.9,466.5 L1086.2,466.5 L1088.5,466.5 L1090.8,466.5 L1093.1,466.5 L1095.4,466.5 L1097.7,466.5 L1100.0,466.5 L1102.3,466.5 L1104.6,466.5 L1106.9,466.5 L1109.2,466.5 L1111.5,466.5 L1113.9,466.5 L1116.2,466.5 L1118.5,466.5 L1120.8,466.5 L1123.1,466.5 L1125.4,466.5 L1127.7,466.5 L1130.0,466.5 L1132.3,466.5 L1134.6,466.5 L1136.9,466.5 L1139.2,466.5 L1141.5,466.5 L1143.8,466.5 L1146.1,466.5 L1148.4,466.5 L1150.7,466.5 L1153.0,466.5 L1155.3,466.5 L1157.6,466.5 L1159.9,466.5 L1162.2,466.5 L1164.5,466.5 L1166.8,466.5 L1169.1,466.5 L1171.4,466.5 L1173.7,466.5 L1176.0,466.5 L1178.3,466.5 L1180.6,466.5 L1182.9,466.5 L1185.2,466.5 L1187.5,466.5 L1189.8,466.5 L1192.1,466.5 L1194.4,466.5 L1196.7,466.5 L1199.0,466.5 L1201.3,466.5 L1203.6,466.5 L1205.9,466.5 L1208.2,466.5 L1210.5,466.5 L1212.8,466.5 L1215.1,466.5 L1217.4,466.5 L1219.7,466.5 L1222.0,466.5 L1224.3,466.5 L1226.6,466.5 L1228.9,466.5 L1231.2,466.5 L1233.5,466.5 L1235.8,466.5 L1238.1,466.5 L1240.4,466.5 L1242.7,466.5 L1245.0,466.5 L1247.3,466.5 L1249.6,466.5 L1251.9,466.5 L1254.2,466.5 L1256.6,466.5 L1258.9,466.5 L1261.2,466.5 L1263.5,466.5 L1265.8,466.5 L1268.1,466.5 L1270.4,466.5 L1272.7,466.5 L1275.0,466.5 L1277.3,466.5 L1279.6,466.5 L1281.9,466.5 L1284.2,466.5 L1286.5,466.5 L1288.8,466.5 L1291.1,466.5 L1293.4,466.5 L1295.7,466.5 L1298.0,466.5 L1300.3,466.5 L1302.6,466.5 L1304.9,466.5 L1307.2,466.5 L1309.5,466.5 L1311.8,466.5 L1314.1,466.5 L1316.4,466.5"/>
<path d="M394.7,417.6 L397.5,417.6 L400.3,417.6 L403.2,417.6 L406.0,417.6 L408.8,417.6 L411.6,417.6 L414.4,417.6 L417.2,417.6 L420.1,417.6 L422.9,417.6 L425.7,417.6 L428.5,417.6 L431.3,417.6 L434.2,417.6 L437.0,417.6 L439.8,417.6 L442.6,417.6 L445.4,417.6 L448.3,417.6 L451.1,417.6 L453.9,417.6 L456.7,417.6 L459.5,417.6 L462.3,417.6 L465.2,417.6 L468.0,417.6 L470.8,417.6 L473.6,417.6 L476.4,417.6 L479.3,417.6 L482.1,417.6 L484.9,417.6 L487.7,417.6 L490.5,417.6 L493.4,417.6 L496.2,417.6 L499.0,417.6 L501.8,417.6 L504.6,417.6 L507.5,417.6 L510.3,417.6 L513.1,417.6 L515.9,417.6 L518.7,417.6 L521.5,417.6 L524.4,417.6 L527.2,417.6 L530.0,417.6 L532.8,417.6 L535.6,417.6 L538.5,417.6 L541.3,417.6 L544.1,417.6 L546.9,417.6 L549.7,417.6 L552.6,417.6 L555.4,417.6 L558.2,417.6 L561.0,417.6 L563.8,417.6 L566.6,417.6 L569.5,417.6 L572.3,417.6 L575.1,417.6 L577.9,417.6 L580.7,417.6 L583.6,417.6 L586.4,417.6 L589.2,417.6 L592.0,417.6 L594.8,417.6 L597.7,417.6 L600.5,417.6 L603.3,417.6 L606.1,417.6 L608.9,417.6 L611.8,417.6 L614.6,417.6 L617.4,417.6 L620.2,417.6 L623.0,417.6 L625.8,417.6 L628.7,417.6 L631.5,417.6 L634.3,417.6 L637.1,417.6 L639.9,417.6 L642.8,417.6 L645.6,417.6 L648.4,417.6 L651.2,417.6 L654.0,417.6 L656.9,417.6 L659.7,417.6 L662.5,417.6 L665.3,417.6 L668.1,417.6 L670.9,417.6 L673.8,417.6 L676.6,417.6 L679.4,417.6 L682.2,417.6 L685.0,417.6 L687.9,417.6 L690.7,417.6 L693.5,417.6 L696.3,417.6 L699.1,417.6 L702.0,417.6 L704.8,417.6 L707.6,417.6 L710.4,417.6 L713.2,417.6 L716.1,417.6 L718.9,417.6 L721.7,417.6 L724.5,417.6 L727.3,417.6 L730.1,417.6 L733.0,417.6 L735.8,417.6 L738.6,417.6 L741.4,417.6 L744.2,417.6 L747.1,417.6 L749.9,417.6 L752.7,417.6 L755.5,417.6 L758.3,417.6 L761.2,417.6 L764.0,417.6 L766.8,417.6 L769.6,417.6 L772.4,417.6 L775.2,417.6 L778.1,417.6 L780.9,417.6 L783.7,417.6 L786.5,417.6 L789.3,417.6 L792.2,417.6 L795.0,417.6 L797.8,417.6 L800.6,417.6 L803.4,417.6 L806.3,417.6 L809.1,417.6 L811.9,417.6 L814.7,417.6 L817.5,417.6 L820.4,417.6 L823.2,417.6 L826.0,417.6 L828.8,417.6 L831.6,417.6 L834.4,417.6 L837.3,417.6 L840.1,417.6 L842.9,417.6 L845.7,417.6 L848.5,417.6 L851.4,417.6 L854.2,417.6 L857.0,417.6 L859.8,417.6 L862.6,417.6 L865.5,417.6 L868.3,417.6 L871.1,417.6 L873.9,417.6 L876.7,417.6 L879.5,417.6 L882.4,417.6 L885.2,417.6 L888.0,417.6 L890.8,417.6 L893.6,417.6 L896.5,417.6 L899.3,417.6 L902.1,417.6 L904.9,417.6 L907.7,417.6 L910.6,417.6 L913.4,417.6 L916.2,417.6 L919.0,417.6 L921.8,417.6 L924.7,417.6 L927.5,417.6 L930.3,417.6 L933.1,417.6 L935.9,417.6 L938.7,417.6 L941.6,417.6 L944.4,417.6 L947.2,417.6 L950.0,417.6 L952.8,417.6 L955.7,417.6 L958.5,417.6 L961.3,417.6 L964.1,417.6 L966.9,417.6 L969.8,417.6 L972.6,417.6 L975.4,417.6 L978.2,417.6 L981.0,417.6 L983.8,417.6 L986.7,417.6 L989.5,417.6 L992.3,417.6 L995.1,417.6 L997.9,417.6 L1000.8,417.6 L1003.6,417.6 L1006.4,417.6 L1009.2,417.6 L1012.0,417.6 L1014.9,417.6 L1017.7,417.6 L1020.5,417.6 L1023.3,417.6 L1026.1,417.6 L1029.0,417.6 L1031.8,417.6 L1034.6,417.6 L1037.4,417.6 L1040.2,417.6 L1043.0,417.6 L1045.9,417.6 L1048.7,417.6 L1051.5,417.6 L1054.3,417.6 L1057.1,417.6 L1060.0,417.6 L1062.8,417.6 L1065.6,417.6 L1068.4,417.6 L1071.2,417.6 L1074.1,417.6 L1076.9,417.6 L1079.7,417.6 L1082.5,417.6 L1085.3,417.6 L1088.1,417.6 L1091.0,417.6 L1093.8,417.6 L1096.6,417.6 L1099.4,417.6 L1102.2,417.6 L1105.1,417.6 L1107.9,417.6 L1110.7,417.6 L1113.5,417.6 L1116.3,417.6 L1119.2,417.6 L1122.0,417.6 L1124.8,417.6 L1127.6,417.6 L1130.4,417.6 L1133.3,417.6 L1136.1,417.6 L1138.9,417.6 L1141.7,417.6 L1144.5,417.6 L1147.3,417.6 L1150.2,417.6 L1153.0,417.6 L1155.8,417.6 L1158.6,417.6 L1161.4,417.6 L1164.3,417.6 L1167.1,417.6 L1169.9,417.6 L1172.7,417.6 L1175.5,417.6 L1178.4,417.6 L1181.2,417.6 L1184.0,417.6 L1186.8,417.6 L1189.6,417.6 L1192.4,417.6 L1195.3,417.6 L1198.1,417.6 L1200.9,417.6 L1203.7,417.6 L1206.5,417.6 L1209.4,417.6 L1212.2,417.6 L1215.0,417.6 L1217.8,417.6 L1220.6,417.6 L1223.5,417.6 L1226.3,417.6 L1229.1,417.6 L1231.9,417.6 L1234.7,417.6 L1237.6,417.6 L1240.4,417.6 L1243.2,417.6 L1246.0,417.6 L1248.8,417.6 L1251.6,417.6 L1254.5,417.6 L1257.3,417.6 L1260.1,417.6 L1262.9,417.6 L1265.7,417.6 L1268.6,417.6 L1271.4,417.6 L1274.2,417.6 L1277.0,417.6 L1279.8,417.6 L1282.7,417.6 L1285.5,417.6 L1288.3,417.6 L1291.1,417.6 L1293.9,417.6 L1296.7,417.6 L1299.6,417.6 L1302.4,417.6 L1305.2,417.6 L1308.0,417.6 L1310.8,417.6 L1313.7,417.6 L1316.5,417.6 L1319.3,417.6 L1322.1,417.6 L1324.9,417.6 L1327.8,417.6 L1330.6,417.6 L1333.4,417.6 L1336.2,417.6 L1339.0,417.6 L1341.9,417.6 L1344.7,417.6 L1347.5,417.6 L1350.3,417.6 L1353.1,417.6 L1355.9,417.6 L1358.8,417.6 L1361.6,417.6 L1364.4,417.6 L1367.2,417.6 L1370.0,417.6 L1372.9,417.6 L1375.7,417.6 L1378.5,417.6 L1381.3,417.6 L1384.1,417.6 L1387.0,417.6 L1389.8,417.6 L1392.6,417.6 L1395.4,417.6 L1398.2,417.6 L1401.0,417.6 L1403.9,417.6 L1406.7,417.6 L1409.5,417.6"/>
<path d="M336.2,368.8 L339.3,368.8 L342.5,368.8 L345.6,368.8 L348.7,368.8 L351.9,368.8 L355.0,368.8 L358.2,368.8 L361.3,368.8 L364.5,368.8 L367.6,368.8 L370.7,368.8 L373.9,368.8 L377.0,368.8 L380.2,368.8 L383.3,368.8 L386.5,368.8 L389.6,368.8 L392.8,368.8 L395.9,368.8 L399.0,368.8 L402.2,368.8 L405.3,368.8 L408.5,368.8 L411.6,368.8 L414.8,368.8 L417.9,368.8 L421.1,368.8 L424.2,368.8 L427.3,368.8 L430.5,368.8 L433.6,368.8 L436.8,368.8 L439.9,368.8 L443.1,368.8 L446.2,368.8 L449.4,368.8 L452.5,368.8 L455.6,368.8 L458.8,368.8 L461.9,368.8 L465.1,368.8 L468.2,368.8 L471.4,368.8 L474.5,368.8 L477.6,368.8 L480.8,368.8 L483.9,368.8 L487.1,368.8 L490.2,368.8 L493.4,368.8 L496.5,368.8 L499.7,368.8 L502.8,368.8 L505.9,368.8 L509.1,368.8 L512.2,368.8 L515.4,368.8 L518.5,368.8 L521.7,368.8 L524.8,368.8 L528.0,368.8 L531.1,368.8 L534.2,368.8 L537.4,368.8 L540.5,368.8 L543.7,368.8 L546.8,368.8 L550.0,368.8 L553.1,368.8 L556.3,368.8 L559.4,368.8 L562.5,368.8 L565.7,368.8 L568.8,368.8 L572.0,368.8 L575.1,368.8 L578.3,368.8 L581.4,368.8 L584.5,368.8 L587.7,368.8 L590.8,368.8 L594.0,368.8 L597.1,368.8 L600.3,368.8 L603.4,368.8 L606.6,368.8 L609.7,368.8 L612.8,368.8 L616.0,368.8 L619.1,368.8 L622.3,368.8 L625.4,368.8 L628.6,368.8 L631.7,368.8 L634.9,368.8 L638.0,368.8 L641.1,368.8 L644.3,368.8 L647.4,368.8 L650.6,368.8 L653.7,368.8 L656.9,368.8 L660.0,368.8 L663.1,368.8 L666.3,368.8 L669.4,368.8 L672.6,368.8 L675.7,368.8 L678.9,368.8 L682.0,368.8 L685.2,368.8 L688.3,368.8 L691.4,368.8 L694.6,368.8 L697.7,368.8 L700.9,368.8 L704.0,368.8 L707.2,368.8 L710.3,368.8 L713.5,368.8 L716.6,368.8 L719.7,368.8 L722.9,368.8 L726.0,368.8 L729.2,368.8 L732.3,368.8 L735.5,368.8 L738.6,368.8 L741.8,368.8 L744.9,368.8 L748.0,368.8 L751.2,368.8 L754.3,368.8 L757.5,368.8 L760.6,368.8 L763.8,368.8 L766.9,368.8 L770.0,368.8 L773.2,368.8 L776.3,368.8 L779.5,368.8 L782.6,368.8 L785.8,368.8 L788.9,368.8 L792.1,368.8 L795.2,368.8 L798.3,368.8 L801.5,368.8 L804.6,368.8 L807.8,368.8 L810.9,368.8 L814.1,368.8 L817.2,368.8 L820.4,368.8 L823.5,368.8 L826.6,368.8 L829.8,368.8 L832.9,368.8 L836.1,368.8 L839.2,368.8 L842.4,368.8 L845.5,368.8 L848.7,368.8 L851.8,368.8 L854.9,368.8 L858.1,368.8 L861.2,368.8 L864.4,368.8 L867.5,368.8 L870.7,368.8 L873.8,368.8 L876.9,368.8 L880.1,368.8 L883.2,368.8 L886.4,368.8 L889.5,368.8 L892.7,368.8 L895.8,368.8 L899.0,368.8 L902.1,368.8 L905.2,368.8 L908.4,368.8 L911.5,368.8 L914.7,368.8 L917.8,368.8 L921.0,368.8 L924.1,368.8 L927.3,368.8 L930.4,368.8 L933.5,368.8 L936.7,368.8 L939.8,368.8 L943.0,368.8 L946.1,368.8 L949.3,368.8 L952.4,368.8 L955.5,368.8 L958.7,368.8 L961.8,368.8 L965.0,368.8 L968.1,368.8 L971.3,368.8 L974.4,368.8 L977.6,368.8 L980.7,368.8 L983.8,368.8 L987.0,368.8 L990.1,368.8 L993.3,368.8 L996.4,368.8 L999.6,368.8 L1002.7,368.8 L1005.9,368.8 L1009.0,368.8 L1012.1,368.8 L1015.3,368.8 L1018.4,368.8 L1021.6,368.8 L1024.7,368.8 L1027.9,368.8 L1031.0,368.8 L1034.2,368.8 L1037.3,368.8 L1040.4,368.8 L1043.6,368.8 L1046.7,368.8 L1049.9,368.8 L1053.0,368.8 L1056.2,368.8 L1059.3,368.8 L1062.4,368.8 L1065.6,368.8 L1068.7,368.8 L1071.9,368.8 L1075.0,368.8 L1078.2,368.8 L1081.3,368.8 L1084.5,368.8 L1087.6,368.8 L1090.7,368.8 L1093.9,368.8 L1097.0,368.8 L1100.2,368.8 L1103.3,368.8 L1106.5,368.8 L1109.6,368.8 L1112.8,368.8 L1115.9,368.8 L1119.0,368.8 L1122.2,368.8 L1125.3,368.8 L1128.5,368.8 L1131.6,368.8 L1134.8,368.8 L1137.9,368.8 L1141.1,368.8 L1144.2,368.8 L1147.3,368.8 L1150.5,368.8 L1153.6,368.8 L1156.8,368.8 L1159.9,368.8 L1163.1,368.8 L1166.2,368.8 L1169.3,368.8 L1172.5,368.8 L1175.6,368.8 L1178.8,368.8 L1181.9,368.8 L1185.1,368.8 L1188.2,368.8 L1191.4,368.8 L1194.5,368.8 L1197.6,368.8 L1200.8,368.8 L1203.9,368.8 L1207.1,368.8 L1210.2,368.8 L1213.4,368.8 L1216.5,368.8 L1219.7,368.8 L1222.8,368.8 L1225.9,368.8 L1229.1,368.8 L1232.2,368.8 L1235.4,368.8 L1238.5,368.8 L1241.7,368.8 L1244.8,368.8 L1247.9,368.8 L1251.1,368.8 L1254.2,368.8 L1257.4,368.8 L1260.5,368.8 L1263.7,368.8 L1266.8,368.8 L1270.0,368.8 L1273.1,368.8 L1276.2,368.8 L1279.4,368.8 L1282.5,368.8 L1285.7,368.8 L1288.8,368.8 L1292.0,368.8 L1295.1,368.8 L1298.3,368.8 L1301.4,368.8 L1304.5,368.8 L1307.7,368.8 L1310.8,368.8 L1314.0,368.8 L1317.1,368.8 L1320.3,368.8 L1323.4,368.8 L1326.6,368.8 L1329.7,368.8 L1332.8,368.8 L1336.0,368.8 L1339.1,368.8 L1342.3,368.8 L1345.4,368.8 L1348.6,368.8 L1351.7,368.8 L1354.8,368.8 L1358.0,368.8 L1361.1,368.8 L1364.3,368.8 L1367.4,368.8 L1370.6,368.8 L1373.7,368.8 L1376.9,368.8 L1380.0,368.8 L1383.1,368.8 L1386.3,368.8 L1389.4,368.8 L1392.6,368.8 L1395.7,368.8 L1398.9,368.8 L1402.0,368.8 L1405.2,368.8 L1408.3,368.8 L1411.4,368.8 L1414.6,368.8 L1417.7,368.8 L1420.9,368.8 L1424.0,368.8 L1427.2,368.8 L1430.3,368.8 L1433.5,368.8 L1436.6,368.8 L1439.7,368.8 L1442.9,368.8 L1446.0,368.8 L1449.2,368.8 L1452.3,368.8 L1455.5,368.8 L1458.6,368.8 L1461.7,368.8 L1464.9,368.8 L1468.0,368.8"/>
<path d="M316.2,320.0 L319.5,320.0 L322.7,320.0 L326.0,320.0 L329.2,320.0 L332.5,320.0 L335.7,320.0 L339.0,320.0 L342.2,320.0 L345.5,320.0 L348.8,320.0 L352.0,320.0 L355.3,320.0 L358.5,320.0 L361.8,320.0 L365.0,320.0 L368.3,320.0 L371.5,320.0 L374.8,320.0 L378.0,320.0 L381.3,320.0 L384.6,320.0 L387.8,320.0 L391.1,320.0 L394.3,320.0 L397.6,320.0 L400.8,320.0 L404.1,320.0 L407.3,320.0 L410.6,320.0 L413.9,320.0 L417.1,320.0 L420.4,320.0 L423.6,320.0 L426.9,320.0 L430.1,320.0 L433.4,320.0 L436.6,320.0 L439.9,320.0 L443.1,320.0 L446.4,320.0 L449.7,320.0 L452.9,320.0 L456.2,320.0 L459.4,320.0 L462.7,320.0 L465.9,320.0 L469.2,320.0 L472.4,320.0 L475.7,320.0 L479.0,320.0 L482.2,320.0 L485.5,320.0 L488.7,320.0 L492.0,320.0 L495.2,320.0 L498.5,320.0 L501.7,320.0 L505.0,320.0 L508.2,320.0 L511.5,320.0 L514.8,320.0 L518.0,320.0 L521.3,320.0 L524.5,320.0 L527.8,320.0 L531.0,320.0 L534.3,320.0 L537.5,320.0 L540.8,320.0 L544.0,320.0 L547.3,320.0 L550.6,320.0 L553.8,320.0 L557.1,320.0 L560.3,320.0 L563.6,320.0 L566.8,320.0 L570.1,320.0 L573.3,320.0 L576.6,320.0 L579.9,320.0 L583.1,320.0 L586.4,320.0 L589.6,320.0 L592.9,320.0 L596.1,320.0 L599.4,320.0 L602.6,320.0 L605.9,320.0 L609.2,320.0 L612.4,320.0 L615.7,320.0 L618.9,320.0 L622.2,320.0 L625.4,320.0 L628.7,320.0 L631.9,320.0 L635.2,320.0 L638.4,320.0 L641.7,320.0 L645.0,320.0 L648.2,320.0 L651.5,320.0 L654.7,320.0 L658.0,320.0 L661.2,320.0 L664.5,320.0 L667.7,320.0 L671.0,320.0 L674.2,320.0 L677.5,320.0 L680.8,320.0 L684.0,320.0 L687.3,320.0 L690.5,320.0 L693.8,320.0 L697.0,320.0 L700.3,320.0 L703.5,320.0 L706.8,320.0 L710.1,320.0 L713.3,320.0 L716.6,320.0 L719.8,320.0 L723.1,320.0 L726.3,320.0 L729.6,320.0 L732.8,320.0 L736.1,320.0 L739.4,320.0 L742.6,320.0 L745.9,320.0 L749.1,320.0 L752.4,320.0 L755.6,320.0 L758.9,320.0 L762.1,320.0 L765.4,320.0 L768.6,320.0 L771.9,320.0 L775.2,320.0 L778.4,320.0 L781.7,320.0 L784.9,320.0 L788.2,320.0 L791.4,320.0 L794.7,320.0 L797.9,320.0 L801.2,320.0 L804.5,320.0 L807.7,320.0 L811.0,320.0 L814.2,320.0 L817.5,320.0 L820.7,320.0 L824.0,320.0 L827.2,320.0 L830.5,320.0 L833.7,320.0 L837.0,320.0 L840.3,320.0 L843.5,320.0 L846.8,320.0 L850.0,320.0 L853.3,320.0 L856.5,320.0 L859.8,320.0 L863.0,320.0 L866.3,320.0 L869.6,320.0 L872.8,320.0 L876.1,320.0 L879.3,320.0 L882.6,320.0 L885.8,320.0 L889.1,320.0 L892.3,320.0 L895.6,320.0 L898.8,320.0 L902.1,320.0 L905.4,320.0 L908.6,320.0 L911.9,320.0 L915.1,320.0 L918.4,320.0 L921.6,320.0 L924.9,320.0 L928.1,320.0 L931.4,320.0 L934.6,320.0 L937.9,320.0 L941.2,320.0 L944.4,320.0 L947.7,320.0 L950.9,320.0 L954.2,320.0 L957.4,320.0 L960.7,320.0 L963.9,320.0 L967.2,320.0 L970.5,320.0 L973.7,320.0 L977.0,320.0 L980.2,320.0 L983.5,320.0 L986.7,320.0 L990.0,320.0 L993.2,320.0 L996.5,320.0 L999.8,320.0 L1003.0,320.0 L1006.3,320.0 L1009.5,320.0 L1012.8,320.0 L1016.0,320.0 L1019.3,320.0 L1022.5,320.0 L1025.8,320.0 L1029.0,320.0 L1032.3,320.0 L1035.6,320.0 L1038.8,320.0 L1042.1,320.0 L1045.3,320.0 L1048.6,320.0 L1051.8,320.0 L1055.1,320.0 L1058.3,320.0 L1061.6,320.0 L1064.8,320.0 L1068.1,320.0 L1071.4,320.0 L1074.6,320.0 L1077.9,320.0 L1081.1,320.0 L1084.4,320.0 L1087.6,320.0 L1090.9,320.0 L1094.1,320.0 L1097.4,320.0 L1100.7,320.0 L1103.9,320.0 L1107.2,320.0 L1110.4,320.0 L1113.7,320.0 L1116.9,320.0 L1120.2,320.0 L1123.4,320.0 L1126.7,320.0 L1130.0,320.0 L1133.2,320.0 L1136.5,320.0 L1139.7,320.0 L1143.0,320.0 L1146.2,320.0 L1149.5,320.0 L1152.7,320.0 L1156.0,320.0 L1159.2,320.0 L1162.5,320.0 L1165.8,320.0 L1169.0,320.0 L1172.3,320.0 L1175.5,320.0 L1178.8,320.0 L1182.0,320.0 L1185.3,320.0 L1188.5,320.0 L1191.8,320.0 L1195.0,320.0 L1198.3,320.0 L1201.6,320.0 L1204.8,320.0 L1208.1,320.0 L1211.3,320.0 L1214.6,320.0 L1217.8,320.0 L1221.1,320.0 L1224.3,320.0 L1227.6,320.0 L1230.9,320.0 L1234.1,320.0 L1237.4,320.0 L1240.6,320.0 L1243.9,320.0 L1247.1,320.0 L1250.4,320.0 L1253.6,320.0 L1256.9,320.0 L1260.2,320.0 L1263.4,320.0 L1266.7,320.0 L1269.9,320.0 L1273.2,320.0 L1276.4,320.0 L1279.7,320.0 L1282.9,320.0 L1286.2,320.0 L1289.4,320.0 L1292.7,320.0 L1296.0,320.0 L1299.2,320.0 L1302.5,320.0 L1305.7,320.0 L1309.0,320.0 L1312.2,320.0 L1315.5,320.0 L1318.7,320.0 L1322.0,320.0 L1325.2,320.0 L1328.5,320.0 L1331.8,320.0 L1335.0,320.0 L1338.3,320.0 L1341.5,320.0 L1344.8,320.0 L1348.0,320.0 L1351.3,320.0 L1354.5,320.0 L1357.8,320.0 L1361.1,320.0 L1364.3,320.0 L1367.6,320.0 L1370.8,320.0 L1374.1,320.0 L1377.3,320.0 L1380.6,320.0 L1383.8,320.0 L1387.1,320.0 L1390.3,320.0 L1393.6,320.0 L1396.9,320.0 L1400.1,320.0 L1403.4,320.0 L1406.6,320.0 L1409.9,320.0 L1413.1,320.0 L1416.4,320.0 L1419.6,320.0 L1422.9,320.0 L1426.2,320.0 L1429.4,320.0 L1432.7,320.0 L1435.9,320.0 L1439.2,320.0 L1442.4,320.0 L1445.7,320.0 L1448.9,320.0 L1452.2,320.0 L1455.5,320.0 L1458.7,320.0 L1462.0,320.0 L1465.2,320.0 L1468.5,320.0 L1471.7,320.0 L1475.0,320.0 L1478.2,320.0 L1481.5,320.0 L1484.7,320.0 L1488.0,320.0"/>
<path d="M336.2,271.2 L339.3,271.2 L342.5,271.2 L345.6,271.2 L348.7,271.2 L351.9,271.2 L355.0,271.2 L358.2,271.2 L361.3,271.2 L364.5,271.2 L367.6,271.2 L370.7,271.2 L373.9,271.2 L377.0,271.2 L380.2,271.2 L383.3,271.2 L386.5,271.2 L389.6,271.2 L392.8,271.2 L395.9,271.2 L399.0,271.2 L402.2,271.2 L405.3,271.2 L408.5,271.2 L411.6,271.2 L414.8,271.2 L417.9,271.2 L421.1,271.2 L424.2,271.2 L427.3,271.2 L430.5,271.2 L433.6,271.2 L436.8,271.2 L439.9,271.2 L443.1,271.2 L446.2,271.2 L449.4,271.2 L452.5,271.2 L455.6,271.2 L458.8,271.2 L461.9,271.2 L465.1,271.2 L468.2,271.2 L471.4,271.2 L474.5,271.2 L477.6,271.2 L480.8,271.2 L483.9,271.2 L487.1,271.2 L490.2,271.2 L493.4,271.2 L496.5,271.2 L499.7,271.2 L502.8,271.2 L505.9,271.2 L509.1,271.2 L512.2,271.2 L515.4,271.2 L518.5,271.2 L521.7,271.2 L524.8,271.2 L528.0,271.2 L531.1,271.2 L534.2,271.2 L537.4,271.2 L540.5,271.2 L543.7,271.2 L546.8,271.2 L550.0,271.2 L553.1,271.2 L556.3,271.2 L559.4,271.2 L562.5,271.2 L565.7,271.2 L568.8,271.2 L572.0,271.2 L575.1,271.2 L578.3,271.2 L581.4,271.2 L584.5,271.2 L587.7,271.2 L590.8,271.2 L594.0,271.2 L597.1,271.2 L600.3,271.2 L603.4,271.2 L606.6,271.2 L609.7,271.2 L612.8,271.2 L616.0,271.2 L619.1,271.2 L622.3,271.2 L625.4,271.2 L628.6,271.2 L631.7,271.2 L634.9,271.2 L638.0,271.2 L641.1,271.2 L644.3,271.2 L647.4,271.2 L650.6,271.2 L653.7,271.2 L656.9,271.2 L660.0,271.2 L663.1,271.2 L666.3,271.2 L669.4,271.2 L672.6,271.2 L675.7,271.2 L678.9,271.2 L682.0,271.2 L685.2,271.2 L688.3,271.2 L691.4,271.2 L694.6,271.2 L697.7,271.2 L700.9,271.2 L704.0,271.2 L707.2,271.2 L710.3,271.2 L713.5,271.2 L716.6,271.2 L719.7,271.2 L722.9,271.2 L726.0,271.2 L729.2,271.2 L732.3,271.2 L735.5,271.2 L738.6,271.2 L741.8,271.2 L744.9,271.2 L748.0,271.2 L751.2,271.2 L754.3,271.2 L757.5,271.2 L760.6,271.2 L763.8,271.2 L766.9,271.2 L770.0,271.2 L773.2,271.2 L776.3,271.2 L779.5,271.2 L782.6,271.2 L785.8,271.2 L788.9,271.2 L792.1,271.2 L795.2,271.2 L798.3,271.2 L801.5,271.2 L804.6,271.2 L807.8,271.2 L810.9,271.2 L814.1,271.2 L817.2,271.2 L820.4,271.2 L823.5,271.2 L826.6,271.2 L829.8,271.2 L832.9,271.2 L836.1,271.2 L839.2,271.2 L842.4,271.2 L845.5,271.2 L848.7,271.2 L851.8,271.2 L854.9,271.2 L858.1,271.2 L861.2,271.2 L864.4,271.2 L867.5,271.2 L870.7,271.2 L873.8,271.2 L876.9,271.2 L880.1,271.2 L883.2,271.2 L886.4,271.2 L889.5,271.2 L892.7,271.2 L895.8,271.2 L899.0,271.2 L902.1,271.2 L905.2,271.2 L908.4,271.2 L911.5,271.2 L914.7,271.2 L917.8,271.2 L921.0,271.2 L924.1,271.2 L927.3,271.2 L930.4,271.2 L933.5,271.2 L936.7,271.2 L939.8,271.2 L943.0,271.2 L946.1,271.2 L949.3,271.2 L952.4,271.2 L955.5,271.2 L958.7,271.2 L961.8,271.2 L965.0,271.2 L968.1,271.2 L971.3,271.2 L974.4,271.2 L977.6,271.2 L980.7,271.2 L983.8,271.2 L987.0,271.2 L990.1,271.2 L993.3,271.2 L996.4,271.2 L999.6,271.2 L1002.7,271.2 L1005.9,271.2 L1009.0,271.2 L1012.1,271.2 L1015.3,271.2 L1018.4,271.2 L1021.6,271.2 L1024.7,271.2 L1027.9,271.2 L1031.0,271.2 L1034.2,271.2 L1037.3,271.2 L1040.4,271.2 L1043.6,271.2 L1046.7,271.2 L1049.9,271.2 L1053.0,271.2 L1056.2,271.2 L1059.3,271.2 L1062.4,271.2 L1065.6,271.2 L1068.7,271.2 L1071.9,271.2 L1075.0,271.2 L1078.2,271.2 L1081.3,271.2 L1084.5,271.2 L1087.6,271.2 L1090.7,271.2 L1093.9,271.2 L1097.0,271.2 L1100.2,271.2 L1103.3,271.2 L1106.5,271.2 L1109.6,271.2 L1112.8,271.2 L1115.9,271.2 L1119.0,271.2 L1122.2,271.2 L1125.3,271.2 L1128.5,271.2 L1131.6,271.2 L1134.8,271.2 L1137.9,271.2 L1141.1,271.2 L1144.2,271.2 L1147.3,271.2 L1150.5,271.2 L1153.6,271.2 L1156.8,271.2 L1159.9,271.2 L1163.1,271.2 L1166.2,271.2 L1169.3,271.2 L1172.5,271.2 L1175.6,271.2 L1178.8,271.2 L1181.9,271.2 L1185.1,271.2 L1188.2,271.2 L1191.4,271.2 L1194.5,271.2 L1197.6,271.2 L1200.8,271.2 L1203.9,271.2 L1207.1,271.2 L1210.2,271.2 L1213.4,271.2 L1216.5,271.2 L1219.7,271.2 L1222.8,271.2 L1225.9,271.2 L1229.1,271.2 L1232.2,271.2 L1235.4,271.2 L1238.5,271.2 L1241.7,271.2 L1244.8,271.2 L1247.9,271.2 L1251.1,271.2 L1254.2,271.2 L1257.4,271.2 L1260.5,271.2 L1263.7,271.2 L1266.8,271.2 L1270.0,271.2 L1273.1,271.2 L1276.2,271.2 L1279.4,271.2 L1282.5,271.2 L1285.7,271.2 L1288.8,271.2 L1292.0,271.2 L1295.1,271.2 L1298.3,271.2 L1301.4,271.2 L1304.5,271.2 L1307.7,271.2 L1310.8,271.2 L1314.0,271.2 L1317.1,271.2 L1320.3,271.2 L1323.4,271.2 L1326.6,271.2 L1329.7,271.2 L1332.8,271.2 L1336.0,271.2 L1339.1,271.2 L1342.3,271.2 L1345.4,271.2 L1348.6,271.2 L1351.7,271.2 L1354.8,271.2 L1358.0,271.2 L1361.1,271.2 L1364.3,271.2 L1367.4,271.2 L1370.6,271.2 L1373.7,271.2 L1376.9,271.2 L1380.0,271.2 L1383.1,271.2 L1386.3,271.2 L1389.4,271.2 L1392.6,271.2 L1395.7,271.2 L1398.9,271.2 L1402.0,271.2 L1405.2,271.2 L1408.3,271.2 L1411.4,271.2 L1414.6,271.2 L1417.7,271.2 L1420.9,271.2 L1424.0,271.2 L1427.2,271.2 L1430.3,271.2 L1433.5,271.2 L1436.6,271.2 L1439.7,271.2 L1442.9,271.2 L1446.0,271.2 L1449.2,271.2 L1452.3,271.2 L1455.5,271.2 L1458.6,271.2 L1461.7,271.2 L1464.9,271.2 L1468.0,271.2"/>
<path d="M394.7,222.4 L397.5,222.4 L400.3,222.4 L403.2,222.4 L406.0,222.4 L408.8,222.4 L411.6,222.4 L414.4,222.4 L417.2,222.4 L420.1,222.4 L422.9,222.4 L425.7,222.4 L428.5,222.4 L431.3,222.4 L434.2,222.4 L437.0,222.4 L439.8,222.4 L442.6,222.4 L445.4,222.4 L448.3,222.4 L451.1,222.4 L453.9,222.4 L456.7,222.4 L459.5,222.4 L462.3,222.4 L465.2,222.4 L468.0,222.4 L470.8,222.4 L473.6,222.4 L476.4,222.4 L479.3,222.4 L482.1,222.4 L484.9,222.4 L487.7,222.4 L490.5,222.4 L493.4,222.4 L496.2,222.4 L499.0,222.4 L501.8,222.4 L504.6,222.4 L507.5,222.4 L510.3,222.4 L513.1,222.4 L515.9,222.4 L518.7,222.4 L521.5,222.4 L524.4,222.4 L527.2,222.4 L530.0,222.4 L532.8,222.4 L535.6,222.4 L538.5,222.4 L541.3,222.4 L544.1,222.4 L546.9,222.4 L549.7,222.4 L552.6,222.4 L555.4,222.4 L558.2,222.4 L561.0,222.4 L563.8,222.4 L566.6,222.4 L569.5,222.4 L572.3,222.4 L575.1,222.4 L577.9,222.4 L580.7,222.4 L583.6,222.4 L586.4,222.4 L589.2,222.4 L592.0,222.4 L594.8,222.4 L597.7,222.4 L600.5,222.4 L603.3,222.4 L606.1,222.4 L608.9,222.4 L611.8,222.4 L614.6,222.4 L617.4,222.4 L620.2,222.4 L623.0,222.4 L625.8,222.4 L628.7,222.4 L631.5,222.4 L634.3,222.4 L637.1,222.4 L639.9,222.4 L642.8,222.4 L645.6,222.4 L648.4,222.4 L651.2,222.4 L654.0,222.4 L656.9,222.4 L659.7,222.4 L662.5,222.4 L665.3,222.4 L668.1,222.4 L670.9,222.4 L673.8,222.4 L676.6,222.4 L679.4,222.4 L682.2,222.4 L685.0,222.4 L687.9,222.4 L690.7,222.4 L693.5,222.4 L696.3,222.4 L699.1,222.4 L702.0,222.4 L704.8,222.4 L707.6,222.4 L710.4,222.4 L713.2,222.4 L716.1,222.4 L718.9,222.4 L721.7,222.4 L724.5,222.4 L727.3,222.4 L730.1,222.4 L733.0,222.4 L735.8,222.4 L738.6,222.4 L741.4,222.4 L744.2,222.4 L747.1,222.4 L749.9,222.4 L752.7,222.4 L755.5,222.4 L758.3,222.4 L761.2,222.4 L764.0,222.4 L766.8,222.4 L769.6,222.4 L772.4,222.4 L775.2,222.4 L778.1,222.4 L780.9,222.4 L783.7,222.4 L786.5,222.4 L789.3,222.4 L792.2,222.4 L795.0,222.4 L797.8,222.4 L800.6,222.4 L803.4,222.4 L806.3,222.4 L809.1,222.4 L811.9,222.4 L814.7,222.4 L817.5,222.4 L820.4,222.4 L823.2,222.4 L826.0,222.4 L828.8,222.4 L831.6,222.4 L834.4,222.4 L837.3,222.4 L840.1,222.4 L842.9,222.4 L845.7,222.4 L848.5,222.4 L851.4,222.4 L854.2,222.4 L857.0,222.4 L859.8,222.4 L862.6,222.4 L865.5,222.4 L868.3,222.4 L871.1,222.4 L873.9,222.4 L876.7,222.4 L879.5,222.4 L882.4,222.4 L885.2,222.4 L888.0,222.4 L890.8,222.4 L893.6,222.4 L896.5,222.4 L899.3,222.4 L902.1,222.4 L904.9,222.4 L907.7,222.4 L910.6,222.4 L913.4,222.4 L916.2,222.4 L919.0,222.4 L921.8,222.4 L924.7,222.4 L927.5,222.4 L930.3,222.4 L933.1,222.4 L935.9,222.4 L938.7,222.4 L941.6,222.4 L944.4,222.4 L947.2,222.4 L950.0,222.4 L952.8,222.4 L955.7,222.4 L958.5,222.4 L961.3,222.4 L964.1,222.4 L966.9,222.4 L969.8,222.4 L972.6,222.4 L975.4,222.4 L978.2,222.4 L981.0,222.4 L983.8,222.4 L986.7,222.4 L989.5,222.4 L992.3,222.4 L995.1,222.4 L997.9,222.4 L1000.8,222.4 L1003.6,222.4 L1006.4,222.4 L1009.2,222.4 L1012.0,222.4 L1014.9,222.4 L1017.7,222.4 L1020.5,222.4 L1023.3,222.4 L1026.1,222.4 L1029.0,222.4 L1031.8,222.4 L1034.6,222.4 L1037.4,222.4 L1040.2,222.4 L1043.0,222.4 L1045.9,222.4 L1048.7,222.4 L1051.5,222.4 L1054.3,222.4 L1057.1,222.4 L1060.0,222.4 L1062.8,222.4 L1065.6,222.4 L1068.4,222.4 L1071.2,222.4 L1074.1,222.4 L1076.9,222.4 L1079.7,222.4 L1082.5,222.4 L1085.3,222.4 L1088.1,222.4 L1091.0,222.4 L1093.8,222.4 L1096.6,222.4 L1099.4,222.4 L1102.2,222.4 L1105.1,222.4 L1107.9,222.4 L1110.7,222.4 L1113.5,222.4 L1116.3,222.4 L1119.2,222.4 L1122.0,222.4 L1124.8,222.4 L1127.6,222.4 L1130.4,222.4 L1133.3,222.4 L1136.1,222.4 L1138.9,222.4 L1141.7,222.4 L1144.5,222.4 L1147.3,222.4 L1150.2,222.4 L1153.0,222.4 L1155.8,222.4 L1158.6,222.4 L1161.4,222.4 L1164.3,222.4 L1167.1,222.4 L1169.9,222.4 L1172.7,222.4 L1175.5,222.4 L1178.4,222.4 L1181.2,222.4 L1184.0,222.4 L1186.8,222.4 L1189.6,222.4 L1192.4,222.4 L1195.3,222.4 L1198.1,222.4 L1200.9,222.4 L1203.7,222.4 L1206.5,222.4 L1209.4,222.4 L1212.2,222.4 L1215.0,222.4 L1217.8,222.4 L1220.6,222.4 L1223.5,222.4 L1226.3,222.4 L1229.1,222.4 L1231.9,222.4 L1234.7,222.4 L1237.6,222.4 L1240.4,222.4 L1243.2,222.4 L1246.0,222.4 L1248.8,222.4 L1251.6,222.4 L1254.5,222.4 L1257.3,222.4 L1260.1,222.4 L1262.9,222.4 L1265.7,222.4 L1268.6,222.4 L1271.4,222.4 L1274.2,222.4 L1277.0,222.4 L1279.8,222.4 L1282.7,222.4 L1285.5,222.4 L1288.3,222.4 L1291.1,222.4 L1293.9,222.4 L1296.7,222.4 L1299.6,222.4 L1302.4,222.4 L1305.2,222.4 L1308.0,222.4 L1310.8,222.4 L1313.7,222.4 L1316.5,222.4 L1319.3,222.4 L1322.1,222.4 L1324.9,222.4 L1327.8,222.4 L1330.6,222.4 L1333.4,222.4 L1336.2,222.4 L1339.0,222.4 L1341.9,222.4 L1344.7,222.4 L1347.5,222.4 L1350.3,222.4 L1353.1,222.4 L1355.9,222.4 L1358.8,222.4 L1361.6,222.4 L1364.4,222.4 L1367.2,222.4 L1370.0,222.4 L1372.9,222.4 L1375.7,222.4 L1378.5,222.4 L1381.3,222.4 L1384.1,222.4 L1387.0,222.4 L1389.8,222.4 L1392.6,222.4 L1395.4,222.4 L1398.2,222.4 L1401.0,222.4 L1403.9,222.4 L1406.7,222.4 L1409.5,222.4"/>
<path d="M487.8,173.5 L490.1,173.5 L492.4,173.5 L494.7,173.5 L497.0,173.5 L499.3,173.5 L501.6,173.5 L503.9,173.5 L506.2,173.5 L508.5,173.5 L510.8,173.5 L513.1,173.5 L515.4,173.5 L517.7,173.5 L520.0,173.5 L522.3,173.5 L524.6,173.5 L526.9,173.5 L529.2,173.5 L531.5,173.5 L533.8,173.5 L536.1,173.5 L538.4,173.5 L540.7,173.5 L543.0,173.5 L545.3,173.5 L547.6,173.5 L550.0,173.5 L552.3,173.5 L554.6,173.5 L556.9,173.5 L559.2,173.5 L561.5,173.5 L563.8,173.5 L566.1,173.5 L568.4,173.5 L570.7,173.5 L573.0,173.5 L575.3,173.5 L577.6,173.5 L579.9,173.5 L582.2,173.5 L584.5,173.5 L586.8,173.5 L589.1,173.5 L591.4,173.5 L593.7,173.5 L596.0,173.5 L598.3,173.5 L600.6,173.5 L602.9,173.5 L605.2,173.5 L607.5,173.5 L609.8,173.5 L612.1,173.5 L614.4,173.5 L616.7,173.5 L619.0,173.5 L621.3,173.5 L623.6,173.5 L625.9,173.5 L628.2,173.5 L630.5,173.5 L632.8,173.5 L635.1,173.5 L637.4,173.5 L639.7,173.5 L642.0,173.5 L644.3,173.5 L646.6,173.5 L648.9,173.5 L651.2,173.5 L653.5,173.5 L655.8,173.5 L658.1,173.5 L660.4,173.5 L662.7,173.5 L665.0,173.5 L667.3,173.5 L669.6,173.5 L671.9,173.5 L674.2,173.5 L676.5,173.5 L678.8,173.5 L681.1,173.5 L683.4,173.5 L685.7,173.5 L688.0,173.5 L690.3,173.5 L692.7,173.5 L695.0,173.5 L697.3,173.5 L699.6,173.5 L701.9,173.5 L704.2,173.5 L706.5,173.5 L708.8,173.5 L711.1,173.5 L713.4,173.5 L715.7,173.5 L718.0,173.5 L720.3,173.5 L722.6,173.5 L724.9,173.5 L727.2,173.5 L729.5,173.5 L731.8,173.5 L734.1,173.5 L736.4,173.5 L738.7,173.5 L741.0,173.5 L743.3,173.5 L745.6,173.5 L747.9,173.5 L750.2,173.5 L752.5,173.5 L754.8,173.5 L757.1,173.5 L759.4,173.5 L761.7,173.5 L764.0,173.5 L766.3,173.5 L768.6,173.5 L770.9,173.5 L773.2,173.5 L775.5,173.5 L777.8,173.5 L780.1,173.5 L782.4,173.5 L784.7,173.5 L787.0,173.5 L789.3,173.5 L791.6,173.5 L793.9,173.5 L796.2,173.5 L798.5,173.5 L800.8,173.5 L803.1,173.5 L805.4,173.5 L807.7,173.5 L810.0,173.5 L812.3,173.5 L814.6,173.5 L816.9,173.5 L819.2,173.5 L821.5,173.5 L823.8,173.5 L826.1,173.5 L828.4,173.5 L830.7,173.5 L833.1,173.5 L835.4,173.5 L837.7,173.5 L840.0,173.5 L842.3,173.5 L844.6,173.5 L846.9,173.5 L849.2,173.5 L851.5,173.5 L853.8,173.5 L856.1,173.5 L858.4,173.5 L860.7,173.5 L863.0,173.5 L865.3,173.5 L867.6,173.5 L869.9,173.5 L872.2,173.5 L874.5,173.5 L876.8,173.5 L879.1,173.5 L881.4,173.5 L883.7,173.5 L886.0,173.5 L888.3,173.5 L890.6,173.5 L892.9,173.5 L895.2,173.5 L897.5,173.5 L899.8,173.5 L902.1,173.5 L904.4,173.5 L906.7,173.5 L909.0,173.5 L911.3,173.5 L913.6,173.5 L915.9,173.5 L918.2,173.5 L920.5,173.5 L922.8,173.5 L925.1,173.5 L927.4,173.5 L929.7,173.5 L932.0,173.5 L934.3,173.5 L936.6,173.5 L938.9,173.5 L941.2,173.5 L943.5,173.5 L945.8,173.5 L948.1,173.5 L950.4,173.5 L952.7,173.5 L955.0,173.5 L957.3,173.5 L959.6,173.5 L961.9,173.5 L964.2,173.5 L966.5,173.5 L968.8,173.5 L971.1,173.5 L973.5,173.5 L975.8,173.5 L978.1,173.5 L980.4,173.5 L982.7,173.5 L985.0,173.5 L987.3,173.5 L989.6,173.5 L991.9,173.5 L994.2,173.5 L996.5,173.5 L998.8,173.5 L1001.1,173.5 L1003.4,173.5 L1005.7,173.5 L1008.0,173.5 L1010.3,173.5 L1012.6,173.5 L1014.9,173.5 L1017.2,173.5 L1019.5,173.5 L1021.8,173.5 L1024.1,173.5 L1026.4,173.5 L1028.7,173.5 L1031.0,173.5 L1033.3,173.5 L1035.6,173.5 L1037.9,173.5 L1040.2,173.5 L1042.5,173.5 L1044.8,173.5 L1047.1,173.5 L1049.4,173.5 L1051.7,173.5 L1054.0,173.5 L1056.3,173.5 L1058.6,173.5 L1060.9,173.5 L1063.2,173.5 L1065.5,173.5 L1067.8,173.5 L1070.1,173.5 L1072.4,173.5 L1074.7,173.5 L1077.0,173.5 L1079.3,173.5 L1081.6,173.5 L1083.9,173.5 L1086.2,173.5 L1088.5,173.5 L1090.8,173.5 L1093.1,173.5 L1095.4,173.5 L1097.7,173.5 L1100.0,173.5 L1102.3,173.5 L1104.6,173.5 L1106.9,173.5 L1109.2,173.5 L1111.5,173.5 L1113.9,173.5 L1116.2,173.5 L1118.5,173.5 L1120.8,173.5 L1123.1,173.5 L1125.4,173.5 L1127.7,173.5 L1130.0,173.5 L1132.3,173.5 L1134.6,173.5 L1136.9,173.5 L1139.2,173.5 L1141.5,173.5 L1143.8,173.5 L1146.1,173.5 L1148.4,173.5 L1150.7,173.5 L1153.0,173.5 L1155.3,173.5 L1157.6,173.5 L1159.9,173.5 L1162.2,173.5 L1164.5,173.5 L1166.8,173.5 L1169.1,173.5 L1171.4,173.5 L1173.7,173.5 L1176.0,173.5 L1178.3,173.5 L1180.6,173.5 L1182.9,173.5 L1185.2,173.5 L1187.5,173.5 L1189.8,173.5 L1192.1,173.5 L1194.4,173.5 L1196.7,173.5 L1199.0,173.5 L1201.3,173.5 L1203.6,173.5 L1205.9,173.5 L1208.2,173.5 L1210.5,173.5 L1212.8,173.5 L1215.1,173.5 L1217.4,173.5 L1219.7,173.5 L1222.0,173.5 L1224.3,173.5 L1226.6,173.5 L1228.9,173.5 L1231.2,173.5 L1233.5,173.5 L1235.8,173.5 L1238.1,173.5 L1240.4,173.5 L1242.7,173.5 L1245.0,173.5 L1247.3,173.5 L1249.6,173.5 L1251.9,173.5 L1254.2,173.5 L1256.6,173.5 L1258.9,173.5 L1261.2,173.5 L1263.5,173.5 L1265.8,173.5 L1268.1,173.5 L1270.4,173.5 L1272.7,173.5 L1275.0,173.5 L1277.3,173.5 L1279.6,173.5 L1281.9,173.5 L1284.2,173.5 L1286.5,173.5 L1288.8,173.5 L1291.1,173.5 L1293.4,173.5 L1295.7,173.5 L1298.0,173.5 L1300.3,173.5 L1302.6,173.5 L1304.9,173.5 L1307.2,173.5 L1309.5,173.5 L1311.8,173.5 L1314.1,173.5 L1316.4,173.5"/>
<path d="M609.1,124.7 L610.8,124.7 L612.4,124.7 L614.0,124.7 L615.7,124.7 L617.3,124.7 L618.9,124.7 L620.5,124.7 L622.2,124.7 L623.8,124.7 L625.4,124.7 L627.1,124.7 L628.7,124.7 L630.3,124.7 L631.9,124.7 L633.6,124.7 L635.2,124.7 L636.8,124.7 L638.4,124.7 L640.1,124.7 L641.7,124.7 L643.3,124.7 L645.0,124.7 L646.6,124.7 L648.2,124.7 L649.8,124.7 L651.5,124.7 L653.1,124.7 L654.7,124.7 L656.3,124.7 L658.0,124.7 L659.6,124.7 L661.2,124.7 L662.9,124.7 L664.5,124.7 L666.1,124.7 L667.7,124.7 L669.4,124.7 L671.0,124.7 L672.6,124.7 L674.2,124.7 L675.9,124.7 L677.5,124.7 L679.1,124.7 L680.8,124.7 L682.4,124.7 L684.0,124.7 L685.6,124.7 L687.3,124.7 L688.9,124.7 L690.5,124.7 L692.2,124.7 L693.8,124.7 L695.4,124.7 L697.0,124.7 L698.7,124.7 L700.3,124.7 L701.9,124.7 L703.5,124.7 L705.2,124.7 L706.8,124.7 L708.4,124.7 L710.1,124.7 L711.7,124.7 L713.3,124.7 L714.9,124.7 L716.6,124.7 L718.2,124.7 L719.8,124.7 L721.4,124.7 L723.1,124.7 L724.7,124.7 L726.3,124.7 L728.0,124.7 L729.6,124.7 L731.2,124.7 L732.8,124.7 L734.5,124.7 L736.1,124.7 L737.7,124.7 L739.4,124.7 L741.0,124.7 L742.6,124.7 L744.2,124.7 L745.9,124.7 L747.5,124.7 L749.1,124.7 L750.7,124.7 L752.4,124.7 L754.0,124.7 L755.6,124.7 L757.3,124.7 L758.9,124.7 L760.5,124.7 L762.1,124.7 L763.8,124.7 L765.4,124.7 L767.0,124.7 L768.6,124.7 L770.3,124.7 L771.9,124.7 L773.5,124.7 L775.2,124.7 L776.8,124.7 L778.4,124.7 L780.0,124.7 L781.7,124.7 L783.3,124.7 L784.9,124.7 L786.5,124.7 L788.2,124.7 L789.8,124.7 L791.4,124.7 L793.1,124.7 L794.7,124.7 L796.3,124.7 L797.9,124.7 L799.6,124.7 L801.2,124.7 L802.8,124.7 L804.5,124.7 L806.1,124.7 L807.7,124.7 L809.3,124.7 L811.0,124.7 L812.6,124.7 L814.2,124.7 L815.8,124.7 L817.5,124.7 L819.1,124.7 L820.7,124.7 L822.4,124.7 L824.0,124.7 L825.6,124.7 L827.2,124.7 L828.9,124.7 L830.5,124.7 L832.1,124.7 L833.7,124.7 L835.4,124.7 L837.0,124.7 L838.6,124.7 L840.3,124.7 L841.9,124.7 L843.5,124.7 L845.1,124.7 L846.8,124.7 L848.4,124.7 L850.0,124.7 L851.6,124.7 L853.3,124.7 L854.9,124.7 L856.5,124.7 L858.2,124.7 L859.8,124.7 L861.4,124.7 L863.0,124.7 L864.7,124.7 L866.3,124.7 L867.9,124.7 L869.6,124.7 L871.2,124.7 L872.8,124.7 L874.4,124.7 L876.1,124.7 L877.7,124.7 L879.3,124.7 L880.9,124.7 L882.6,124.7 L884.2,124.7 L885.8,124.7 L887.5,124.7 L889.1,124.7 L890.7,124.7 L892.3,124.7 L894.0,124.7 L895.6,124.7 L897.2,124.7 L898.8,124.7 L900.5,124.7 L902.1,124.7 L903.7,124.7 L905.4,124.7 L907.0,124.7 L908.6,124.7 L910.2,124.7 L911.9,124.7 L913.5,124.7 L915.1,124.7 L916.7,124.7 L918.4,124.7 L920.0,124.7 L921.6,124.7 L923.3,124.7 L924.9,124.7 L926.5,124.7 L928.1,124.7 L929.8,124.7 L931.4,124.7 L933.0,124.7 L934.6,124.7 L936.3,124.7 L937.9,124.7 L939.5,124.7 L941.2,124.7 L942.8,124.7 L944.4,124.7 L946.0,124.7 L947.7,124.7 L949.3,124.7 L950.9,124.7 L952.6,124.7 L954.2,124.7 L955.8,124.7 L957.4,124.7 L959.1,124.7 L960.7,124.7 L962.3,124.7 L963.9,124.7 L965.6,124.7 L967.2,124.7 L968.8,124.7 L970.5,124.7 L972.1,124.7 L973.7,124.7 L975.3,124.7 L977.0,124.7 L978.6,124.7 L980.2,124.7 L981.8,124.7 L983.5,124.7 L985.1,124.7 L986.7,124.7 L988.4,124.7 L990.0,124.7 L991.6,124.7 L993.2,124.7 L994.9,124.7 L996.5,124.7 L998.1,124.7 L999.8,124.7 L1001.4,124.7 L1003.0,124.7 L1004.6,124.7 L1006.3,124.7 L1007.9,124.7 L1009.5,124.7 L1011.1,124.7 L1012.8,124.7 L1014.4,124.7 L1016.0,124.7 L1017.7,124.7 L1019.3,124.7 L1020.9,124.7 L1022.5,124.7 L1024.2,124.7 L1025.8,124.7 L1027.4,124.7 L1029.0,124.7 L1030.7,124.7 L1032.3,124.7 L1033.9,124.7 L1035.6,124.7 L1037.2,124.7 L1038.8,124.7 L1040.4,124.7 L1042.1,124.7 L1043.7,124.7 L1045.3,124.7 L1046.9,124.7 L1048.6,124.7 L1050.2,124.7 L1051.8,124.7 L1053.5,124.7 L1055.1,124.7 L1056.7,124.7 L1058.3,124.7 L1060.0,124.7 L1061.6,124.7 L1063.2,124.7 L1064.9,124.7 L1066.5,124.7 L1068.1,124.7 L1069.7,124.7 L1071.4,124.7 L1073.0,124.7 L1074.6,124.7 L1076.2,124.7 L1077.9,124.7 L1079.5,124.7 L1081.1,124.7 L1082.8,124.7 L1084.4,124.7 L1086.0,124.7 L1087.6,124.7 L1089.3,124.7 L1090.9,124.7 L1092.5,124.7 L1094.1,124.7 L1095.8,124.7 L1097.4,124.7 L1099.0,124.7 L1100.7,124.7 L1102.3,124.7 L1103.9,124.7 L1105.5,124.7 L1107.2,124.7 L1108.8,124.7 L1110.4,124.7 L1112.0,124.7 L1113.7,124.7 L1115.3,124.7 L1116.9,124.7 L1118.6,124.7 L1120.2,124.7 L1121.8,124.7 L1123.4,124.7 L1125.1,124.7 L1126.7,124.7 L1128.3,124.7 L1130.0,124.7 L1131.6,124.7 L1133.2,124.7 L1134.8,124.7 L1136.5,124.7 L1138.1,124.7 L1139.7,124.7 L1141.3,124.7 L1143.0,124.7 L1144.6,124.7 L1146.2,124.7 L1147.9,124.7 L1149.5,124.7 L1151.1,124.7 L1152.7,124.7 L1154.4,124.7 L1156.0,124.7 L1157.6,124.7 L1159.2,124.7 L1160.9,124.7 L1162.5,124.7 L1164.1,124.7 L1165.8,124.7 L1167.4,124.7 L1169.0,124.7 L1170.6,124.7 L1172.3,124.7 L1173.9,124.7 L1175.5,124.7 L1177.1,124.7 L1178.8,124.7 L1180.4,124.7 L1182.0,124.7 L1183.7,124.7 L1185.3,124.7 L1186.9,124.7 L1188.5,124.7 L1190.2,124.7 L1191.8,124.7 L1193.4,124.7 L1195.1,124.7"/>
<path d="M750.5,75.9 L751.3,75.9 L752.1,75.9 L753.0,75.9 L753.8,75.9 L754.7,75.9 L755.5,75.9 L756.4,75.9 L757.2,75.9 L758.0,75.9 L758.9,75.9 L759.7,75.9 L760.6,75.9 L761.4,75.9 L762.3,75.9 L763.1,75.9 L763.9,75.9 L764.8,75.9 L765.6,75.9 L766.5,75.9 L767.3,75.9 L768.1,75.9 L769.0,75.9 L769.8,75.9 L770.7,75.9 L771.5,75.9 L772.4,75.9 L773.2,75.9 L774.0,75.9 L774.9,75.9 L775.7,75.9 L776.6,75.9 L777.4,75.9 L778.3,75.9 L779.1,75.9 L779.9,75.9 L780.8,75.9 L781.6,75.9 L782.5,75.9 L783.3,75.9 L784.2,75.9 L785.0,75.9 L785.8,75.9 L786.7,75.9 L787.5,75.9 L788.4,75.9 L789.2,75.9 L790.1,75.9 L790.9,75.9 L791.7,75.9 L792.6,75.9 L793.4,75.9 L794.3,75.9 L795.1,75.9 L796.0,75.9 L796.8,75.9 L797.6,75.9 L798.5,75.9 L799.3,75.9 L800.2,75.9 L801.0,75.9 L801.8,75.9 L802.7,75.9 L803.5,75.9 L804.4,75.9 L805.2,75.9 L806.1,75.9 L806.9,75.9 L807.7,75.9 L808.6,75.9 L809.4,75.9 L810.3,75.9 L811.1,75.9 L812.0,75.9 L812.8,75.9 L813.6,75.9 L814.5,75.9 L815.3,75.9 L816.2,75.9 L817.0,75.9 L817.9,75.9 L818.7,75.9 L819.5,75.9 L820.4,75.9 L821.2,75.9 L822.1,75.9 L822.9,75.9 L823.8,75.9 L824.6,75.9 L825.4,75.9 L826.3,75.9 L827.1,75.9 L828.0,75.9 L828.8,75.9 L829.6,75.9 L830.5,75.9 L831.3,75.9 L832.2,75.9 L833.0,75.9 L833.9,75.9 L834.7,75.9 L835.5,75.9 L836.4,75.9 L837.2,75.9 L838.1,75.9 L838.9,75.9 L839.8,75.9 L840.6,75.9 L841.4,75.9 L842.3,75.9 L843.1,75.9 L844.0,75.9 L844.8,75.9 L845.7,75.9 L846.5,75.9 L847.3,75.9 L848.2,75.9 L849.0,75.9 L849.9,75.9 L850.7,75.9 L851.6,75.9 L852.4,75.9 L853.2,75.9 L854.1,75.9 L854.9,75.9 L855.8,75.9 L856.6,75.9 L857.4,75.9 L858.3,75.9 L859.1,75.9 L860.0,75.9 L860.8,75.9 L861.7,75.9 L862.5,75.9 L863.3,75.9 L864.2,75.9 L865.0,75.9 L865.9,75.9 L866.7,75.9 L867.6,75.9 L868.4,75.9 L869.2,75.9 L870.1,75.9 L870.9,75.9 L871.8,75.9 L872.6,75.9 L873.5,75.9 L874.3,75.9 L875.1,75.9 L876.0,75.9 L876.8,75.9 L877.7,75.9 L878.5,75.9 L879.4,75.9 L880.2,75.9 L881.0,75.9 L881.9,75.9 L882.7,75.9 L883.6,75.9 L884.4,75.9 L885.3,75.9 L886.1,75.9 L886.9,75.9 L887.8,75.9 L888.6,75.9 L889.5,75.9 L890.3,75.9 L891.1,75.9 L892.0,75.9 L892.8,75.9 L893.7,75.9 L894.5,75.9 L895.4,75.9 L896.2,75.9 L897.0,75.9 L897.9,75.9 L898.7,75.9 L899.6,75.9 L900.4,75.9 L901.3,75.9 L902.1,75.9 L902.9,75.9 L903.8,75.9 L904.6,75.9 L905.5,75.9 L906.3,75.9 L907.2,75.9 L908.0,75.9 L908.8,75.9 L909.7,75.9 L910.5,75.9 L911.4,75.9 L912.2,75.9 L913.1,75.9 L913.9,75.9 L914.7,75.9 L915.6,75.9 L916.4,75.9 L917.3,75.9 L918.1,75.9 L918.9,75.9 L919.8,75.9 L920.6,75.9 L921.5,75.9 L922.3,75.9 L923.2,75.9 L924.0,75.9 L924.8,75.9 L925.7,75.9 L926.5,75.9 L927.4,75.9 L928.2,75.9 L929.1,75.9 L929.9,75.9 L930.7,75.9 L931.6,75.9 L932.4,75.9 L933.3,75.9 L934.1,75.9 L935.0,75.9 L935.8,75.9 L936.6,75.9 L937.5,75.9 L938.3,75.9 L939.2,75.9 L940.0,75.9 L940.9,75.9 L941.7,75.9 L942.5,75.9 L943.4,75.9 L944.2,75.9 L945.1,75.9 L945.9,75.9 L946.8,75.9 L947.6,75.9 L948.4,75.9 L949.3,75.9 L950.1,75.9 L951.0,75.9 L951.8,75.9 L952.6,75.9 L953.5,75.9 L954.3,75.9 L955.2,75.9 L956.0,75.9 L956.9,75.9 L957.7,75.9 L958.5,75.9 L959.4,75.9 L960.2,75.9 L961.1,75.9 L961.9,75.9 L962.8,75.9 L963.6,75.9 L964.4,75.9 L965.3,75.9 L966.1,75.9 L967.0,75.9 L967.8,75.9 L968.7,75.9 L969.5,75.9 L970.3,75.9 L971.2,75.9 L972.0,75.9 L972.9,75.9 L973.7,75.9 L974.6,75.9 L975.4,75.9 L976.2,75.9 L977.1,75.9 L977.9,75.9 L978.8,75.9 L979.6,75.9 L980.4,75.9 L981.3,75.9 L982.1,75.9 L983.0,75.9 L983.8,75.9 L984.7,75.9 L985.5,75.9 L986.3,75.9 L987.2,75.9 L988.0,75.9 L988.9,75.9 L989.7,75.9 L990.6,75.9 L991.4,75.9 L992.2,75.9 L993.1,75.9 L993.9,75.9 L994.8,75.9 L995.6,75.9 L996.5,75.9 L997.3,75.9 L998.1,75.9 L999.0,75.9 L999.8,75.9 L1000.7,75.9 L1001.5,75.9 L1002.4,75.9 L1003.2,75.9 L1004.0,75.9 L1004.9,75.9 L1005.7,75.9 L1006.6,75.9 L1007.4,75.9 L1008.2,75.9 L1009.1,75.9 L1009.9,75.9 L1010.8,75.9 L1011.6,75.9 L1012.5,75.9 L1013.3,75.9 L1014.1,75.9 L1015.0,75.9 L1015.8,75.9 L1016.7,75.9 L1017.5,75.9 L1018.4,75.9 L1019.2,75.9 L1020.0,75.9 L1020.9,75.9 L1021.7,75.9 L1022.6,75.9 L1023.4,75.9 L1024.3,75.9 L1025.1,75.9 L1025.9,75.9 L1026.8,75.9 L1027.6,75.9 L1028.5,75.9 L1029.3,75.9 L1030.2,75.9 L1031.0,75.9 L1031.8,75.9 L1032.7,75.9 L1033.5,75.9 L1034.4,75.9 L1035.2,75.9 L1036.1,75.9 L1036.9,75.9 L1037.7,75.9 L1038.6,75.9 L1039.4,75.9 L1040.3,75.9 L1041.1,75.9 L1041.9,75.9 L1042.8,75.9 L1043.6,75.9 L1044.5,75.9 L1045.3,75.9 L1046.2,75.9 L1047.0,75.9 L1047.8,75.9 L1048.7,75.9 L1049.5,75.9 L1050.4,75.9 L1051.2,75.9 L1052.1,75.9 L1052.9,75.9 L1053.7,75.9"/>
</g>
<g font-family="Liberation Sans, sans-serif" font-size="10.70" fill="#8f8f8f">
<text x="1473.4" y="329.6" textLength="25.7" lengthAdjust="spacingAndGlyphs">+180</text>
<text x="1501.4" y="326.8" font-size="6.8">°</text>
<text x="1375.8" y="329.6" textLength="25.7" lengthAdjust="spacingAndGlyphs">+210</text>
<text x="1403.7" y="326.8" font-size="6.8">°</text>
<text x="1278.1" y="329.6" textLength="25.7" lengthAdjust="spacingAndGlyphs">+240</text>
<text x="1306.1" y="326.8" font-size="6.8">°</text>
<text x="1180.5" y="329.6" textLength="25.7" lengthAdjust="spacingAndGlyphs">+270</text>
<text x="1208.4" y="326.8" font-size="6.8">°</text>
<text x="1082.8" y="329.6" textLength="25.7" lengthAdjust="spacingAndGlyphs">+300</text>
<text x="1110.8" y="326.8" font-size="6.8">°</text>
<text x="985.2" y="329.6" textLength="25.7" lengthAdjust="spacingAndGlyphs">+330</text>
<text x="1013.1" y="326.8" font-size="6.8">°</text>
<text x="893.5" y="329.6" textLength="13.8" lengthAdjust="spacingAndGlyphs">+0</text>
<text x="909.5" y="326.8" font-size="6.8">°</text>
<text x="792.9" y="329.6" textLength="19.8" lengthAdjust="spacingAndGlyphs">+30</text>
<text x="814.8" y="326.8" font-size="6.8">°</text>
<text x="695.2" y="329.6" textLength="19.8" lengthAdjust="spacingAndGlyphs">+60</text>
<text x="717.2" y="326.8" font-size="6.8">°</text>
<text x="597.6" y="329.6" textLength="19.8" lengthAdjust="spacingAndGlyphs">+90</text>
<text x="619.5" y="326.8" font-size="6.8">°</text>
<text x="496.9" y="329.6" textLength="25.7" lengthAdjust="spacingAndGlyphs">+120</text>
<text x="524.9" y="326.8" font-size="6.8">°</text>
<text x="399.3" y="329.6" textLength="25.7" lengthAdjust="spacingAndGlyphs">+150</text>
<text x="427.2" y="326.8" font-size="6.8">°</text>
<text x="301.6" y="329.6" textLength="25.7" lengthAdjust="spacingAndGlyphs">+180</text>
<text x="329.6" y="326.8" font-size="6.8">°</text>
<text x="890.5" y="24.6" textLength="19.8" lengthAdjust="spacingAndGlyphs">+90</text>
<text x="912.5" y="21.8" font-size="6.8">°</text>
<text x="890.5" y="122.2" textLength="19.8" lengthAdjust="spacingAndGlyphs">+60</text>
<text x="912.5" y="119.4" font-size="6.8">°</text>
<text x="890.5" y="219.9" textLength="19.8" lengthAdjust="spacingAndGlyphs">+30</text>
<text x="912.5" y="217.1" font-size="6.8">°</text>
<text x="890.5" y="428.5" textLength="19.8" lengthAdjust="spacingAndGlyphs">−30</text>
<text x="912.5" y="425.7" font-size="6.8">°</text>
<text x="890.5" y="526.2" textLength="19.8" lengthAdjust="spacingAndGlyphs">−60</text>
<text x="912.5" y="523.4" font-size="6.8">°</text>
<text x="890.5" y="623.9" textLength="19.8" lengthAdjust="spacingAndGlyphs">−90</text>
<text x="912.5" y="621.1" font-size="6.8">°</text>
</g>
<path d="M505.6,226.0 L507.5,225.2 L509.3,224.4 L511.2,223.7 L513.0,222.9 L514.9,222.1 L516.8,221.3 L518.6,220.6 L520.5,219.8 L522.4,219.0 L524.3,218.3 L526.2,217.5 L528.0,216.7 L529.9,216.0 L531.8,215.2 L533.7,214.5 L535.6,213.8 L537.5,213.0 L539.4,212.3 L541.3,211.5 L543.2,210.8 L545.1,210.1 L547.0,209.4 L548.9,208.6 L550.8,207.9 L552.7,207.2 L554.6,206.5 L556.5,205.8 L558.4,205.1 L560.4,204.4 L562.3,203.7 L564.2,203.0 L566.1,202.3 L568.0,201.6 L569.9,201.0 L571.8,200.3 L573.7,199.6 L575.6,199.0 L577.5,198.3 L579.4,197.6 L581.3,197.0 L583.2,196.3 L585.1,195.7 L587.0,195.0 L588.8,194.4 L590.7,193.8 L592.6,193.2 L594.5,192.5 L596.4,191.9 L598.2,191.3 L600.1,190.7 L602.0,190.1 L603.8,189.5 L605.7,188.9 L607.5,188.3 L609.4,187.7 L611.2,187.2 L613.1,186.6 L614.9,186.0 L616.8,185.5 L618.6,184.9 L620.4,184.4 L622.2,183.8 L624.0,183.3 L625.8,182.7 L627.6,182.2 L629.4,181.7 L631.2,181.2 L633.0,180.7 L634.8,180.2 L636.6,179.7 L638.3,179.2 L640.1,178.7 L641.8,178.2 L643.6,177.7 L645.3,177.3 L647.1,176.8 L648.8,176.4 L650.5,175.9 L652.2,175.5 L653.9,175.1 L655.6,174.6 L657.3,174.2 L659.0,173.8 L660.6,173.4 L662.3,173.0 L664.0,172.6 L665.6,172.2 L667.2,171.9 L668.9,171.5 L670.5,171.1 L672.1,170.8 L673.7,170.4 L675.3,170.1 L676.9,169.8 L678.5,169.4 L680.0,169.1 L681.6,168.8 L683.1,168.5 L684.7,168.2 L686.2,167.9 L687.7,167.7 L689.3,167.4 L690.8,167.1 L692.2,166.9 L693.7,166.6 L695.2,166.4 L696.7,166.2 L698.1,165.9 L699.6,165.7 L701.0,165.5 L702.4,165.3 L703.9,165.2 L705.3,165.0 L706.7,164.8 L708.1,164.6 L709.4,164.5 L710.8,164.4 L712.2,164.2 L713.5,164.1 L714.8,164.0 L716.2,163.9 L717.5,163.8 L718.8,163.7 L720.1,163.6 L721.4,163.5 L722.7,163.5 L724.0,163.4 L725.2,163.4 L726.5,163.3 L727.7,163.3 L729.0,163.3 L730.2,163.3 L731.4,163.2 L732.6,163.3 L733.8,163.3 L735.0,163.3 L736.2,163.3 L737.4,163.4 L738.5,163.4 L739.7,163.5 L740.8,163.5 L742.0,163.6 L743.1,163.7 L744.2,163.8 L745.3,163.9 L746.5,164.0 L747.5,164.1 L748.6,164.3 L749.7,164.4 L750.8,164.5 L751.9,164.7 L752.9,164.9 L754.0,165.0 L755.0,165.2 L756.1,165.4 L757.1,165.6 L758.1,165.8 L759.1,166.0 L760.1,166.2 L761.2,166.5 L762.1,166.7 L763.1,167.0 L764.1,167.2 L765.1,167.5 L766.1,167.8 L767.0,168.0 L768.0,168.3 L769.0,168.6 L769.9,168.9 L770.9,169.2 L771.8,169.5 L772.7,169.9 L773.7,170.2 L774.6,170.5 L775.5,170.9 L776.4,171.2 L777.3,171.6 L778.2,172.0 L779.1,172.4 L780.0,172.7 L780.9,173.1 L781.8,173.5 L782.7,173.9 L783.6,174.4 L784.5,174.8 L785.3,175.2 L786.2,175.6 L787.1,176.1 L787.9,176.5 L788.8,177.0 L789.6,177.4 L790.5,177.9 L791.3,178.4 L792.2,178.9 L793.0,179.4 L793.9,179.8 L794.7,180.3 L795.6,180.9 L796.4,181.4 L797.2,181.9 L798.1,182.4 L798.9,182.9 L799.7,183.5 L800.5,184.0 L801.4,184.6 L802.2,185.1 L803.0,185.7 L803.8,186.2 L804.6,186.8 L805.4,187.4 L806.2,187.9 L807.1,188.5 L807.9,189.1 L808.7,189.7 L809.5,190.3 L810.3,190.9 L811.1,191.5 L811.9,192.1 L812.7,192.8 L813.5,193.4 L814.3,194.0 L815.1,194.6 L815.9,195.3 L816.7,195.9 L817.5,196.6 L818.3,197.2 L819.1,197.9 L819.9,198.5 L820.7,199.2 L821.5,199.9 L822.3,200.5 L823.1,201.2 L823.9,201.9 L824.7,202.6 L825.5,203.3 L826.3,204.0 L827.1,204.6 L827.9,205.3 L828.6,206.1 L829.4,206.8 L830.2,207.5 L831.0,208.2 L831.8,208.9 L832.6,209.6 L833.4,210.3 L834.2,211.1 L835.0,211.8 L835.8,212.5 L836.6,213.3 L837.4,214.0 L838.2,214.8 L839.0,215.5 L839.8,216.3 L840.6,217.0 L841.4,217.8 L842.2,218.5 L843.0,219.3 L843.8,220.1 L844.6,220.8 L845.4,221.6 L846.2,222.4 L847.0,223.1 L847.8,223.9 L848.6,224.7 L849.4,225.5 L850.2,226.3 L851.0,227.1 L851.8,227.9 L852.6,228.7 L853.4,229.5 L854.2,230.3 L855.1,231.1 L855.9,231.9 L856.7,232.7 L857.5,233.5 L858.3,234.3 L859.1,235.1 L859.9,235.9 L860.7,236.7 L861.5,237.5 L862.3,238.4 L863.2,239.2 L864.0,240.0 L864.8,240.8 L865.6,241.7 L866.4,242.5 L867.2,243.3 L868.1,244.2 L868.9,245.0 L869.7,245.8 L870.5,246.7 L871.3,247.5 L872.1,248.4 L873.0,249.2 L873.8,250.1 L874.6,250.9 L875.4,251.8 L876.2,252.6 L877.1,253.5 L877.9,254.3 L878.7,255.2 L879.5,256.0 L880.4,256.9 L881.2,257.7 L882.0,258.6 L882.8,259.5 L883.7,260.3 L884.5,261.2 L885.3,262.1 L886.1,262.9 L887.0,263.8 L887.8,264.7 L888.6,265.5 L889.5,266.4 L890.3,267.3 L891.1,268.2 L891.9,269.0 L892.8,269.9 L893.6,270.8 L894.4,271.7 L895.3,272.6 L896.1,273.4 L896.9,274.3 L897.7,275.2 L898.6,276.1 L899.4,277.0 L900.2,277.9 L901.1,278.7 L901.9,279.6 L902.7,280.5 L903.5,281.4 L904.4,282.3 L905.2,283.2 L906.0,284.1 L906.9,285.0 L907.7,285.9 L908.5,286.7 L909.4,287.6 L910.2,288.5 L911.0,289.4 L911.8,290.3 L912.7,291.2 L913.5,292.1 L914.3,293.0 L915.2,293.9 L916.0,294.8 L916.8,295.7 L917.6,296.6 L918.5,297.5 L919.3,298.4 L920.1,299.3 L920.9,300.2 L921.8,301.1 L922.6,302.0 L923.4,302.9 L924.2,303.8 L925.1,304.7 L925.9,305.6 L926.7,306.5 L927.5,307.4 L928.3,308.3 L929.2,309.2 L930.0,310.1 L930.8,311.0 L931.6,312.0 L932.4,312.9 L933.3,313.8 L934.1,314.7 L934.9,315.6 L935.7,316.5 L936.5,317.4 L937.3,318.3 L938.1,319.2 L938.9,320.1 L939.8,321.0 L940.6,321.9 L941.4,322.8 L942.2,323.7 L943.0,324.6 L943.8,325.5 L944.6,326.4 L945.4,327.3 L946.2,328.2 L947.0,329.2 L947.8,330.1 L948.6,331.0 L949.4,331.9 L950.2,332.8 L951.0,333.7 L951.8,334.6 L952.6,335.5 L953.4,336.4 L954.2,337.3 L955.0,338.2 L955.7,339.1 L956.5,340.0 L957.3,340.9 L958.1,341.8 L958.9,342.7 L959.7,343.6" fill="none" stroke="#6a6a6a" stroke-width="1.2" stroke-dasharray="1.39 2.29"/>
<path d="M1255.7,168.0 L1256.6,167.8 L1257.5,167.6 L1258.4,167.5 L1259.3,167.3 L1260.3,167.1 L1261.3,167.0 L1262.3,166.9 L1263.3,166.7 L1264.3,166.6 L1265.4,166.5 L1266.4,166.4 L1267.5,166.3 L1268.6,166.2 L1269.8,166.2 L1270.9,166.1 L1272.1,166.1 L1273.3,166.0 L1274.5,166.0 L1275.7,166.0 L1277.0,166.0 L1278.3,166.0 L1279.6,166.0 L1280.9,166.0 L1282.2,166.0 L1283.6,166.0 L1284.9,166.1 L1286.3,166.1 L1287.8,166.2 L1289.2,166.3 L1290.7,166.4 L1292.2,166.5 L1293.7,166.6 L1295.2,166.7 L1296.7,166.8 L1298.3,166.9 L1299.9,167.1 L1301.5,167.2 M502.4,167.4 L503.2,167.5 L504.1,167.7 L505.0,167.9 L505.8,168.1 L506.6,168.3 L507.4,168.5 L508.1,168.7 L508.9,169.0 L509.6,169.2 L510.3,169.5 L511.0,169.7 L511.7,170.0 L512.3,170.2 L513.0,170.5 L513.6,170.8 L514.2,171.1 L514.8,171.4 L515.3,171.8 L515.9,172.1 L516.4,172.4 L516.9,172.8 L517.5,173.1 L517.9,173.5 L518.4,173.8 L518.9,174.2 L519.3,174.6 L519.7,175.0 L520.2,175.4 L520.6,175.8 L520.9,176.2 L521.3,176.6 L521.7,177.1 L522.0,177.5 L522.4,177.9 L522.7,178.4 L523.0,178.8 L523.3,179.3 L523.6,179.8 L523.9,180.3 L524.1,180.8 L524.4,181.2 L524.6,181.8 L524.9,182.3 L525.1,182.8 L525.3,183.3 L525.5,183.8 L525.7,184.4 L525.9,184.9 L526.1,185.4 L526.3,186.0 L526.4,186.6 L526.6,187.1 L526.7,187.7 L526.9,188.3 L527.0,188.9 L527.2,189.5 L527.3,190.0 L527.4,190.6 L527.5,191.3 L527.6,191.9 L527.7,192.5 L527.8,193.1 L527.9,193.7 L528.0,194.4 L528.1,195.0 L528.2,195.7 L528.3,196.3 L528.4,197.0 L528.4,197.6 L528.5,198.3 L528.6,199.0 L528.6,199.6 L528.7,200.3 L528.8,201.0 L528.8,201.7 L528.9,202.4 L528.9,203.1 L529.0,203.8 L529.1,204.5 L529.1,205.2 L529.2,205.9 L529.2,206.6 L529.3,207.4 L529.3,208.1 L529.4,208.8 L529.4,209.6 L529.5,210.3 L529.5,211.0 L529.6,211.8 L529.6,212.5 L529.7,213.3 L529.8,214.1 L529.8,214.8 L529.9,215.6 L530.0,216.4 L530.0,217.1 L530.1,217.9 L530.2,218.7 L530.2,219.5 L530.3,220.3 L530.4,221.1 L530.5,221.8 L530.6,222.6 L530.6,223.4 L530.7,224.2 L530.8,225.0 L530.9,225.9 L531.0,226.7 L531.1,227.5 L531.2,228.3 L531.4,229.1 L531.5,229.9 L531.6,230.8 L531.7,231.6 L531.9,232.4 L532.0,233.3 L532.1,234.1 L532.3,234.9 L532.4,235.8 L532.6,236.6 L532.8,237.5 L532.9,238.3 L533.1,239.2 L533.3,240.0 L533.5,240.9 L533.7,241.7 L533.9,242.6 L534.1,243.4 L534.3,244.3 L534.5,245.2 L534.7,246.0 L534.9,246.9 L535.2,247.8 L535.4,248.7 L535.7,249.5 L535.9,250.4 L536.2,251.3 L536.4,252.2 L536.7,253.0 L537.0,253.9 L537.3,254.8 L537.6,255.7 L537.9,256.6 L538.2,257.5 L538.5,258.4 L538.8,259.3 L539.2,260.2 L539.5,261.1 L539.8,262.0 L540.2,262.9 L540.6,263.8 L540.9,264.7 L541.3,265.6 L541.7,266.5 L542.1,267.4 L542.5,268.3 L542.9,269.2 L543.3,270.1 L543.7,271.0 L544.2,271.9 L544.6,272.8 L545.1,273.8 L545.5,274.7 L546.0,275.6 L546.4,276.5 L546.9,277.4 L547.4,278.3 L547.9,279.3 L548.4,280.2 L548.9,281.1 L549.4,282.0 L550.0,283.0 L550.5,283.9 L551.1,284.8 L551.6,285.7 L552.2,286.7 L552.8,287.6 L553.3,288.5 L553.9,289.5 L554.5,290.4 L555.1,291.3 L555.7,292.2 L556.4,293.2 L557.0,294.1 L557.6,295.0 L558.3,296.0 L558.9,296.9 L559.6,297.9 L560.3,298.8 L561.0,299.7 L561.6,300.7 L562.3,301.6 L563.0,302.5 L563.8,303.5 L564.5,304.4 L565.2,305.3 L566.0,306.3 L566.7,307.2 L567.5,308.2 L568.2,309.1 L569.0,310.0 L569.8,311.0 L570.6,311.9 L571.4,312.9 L572.2,313.8 L573.0,314.8 L573.8,315.7 L574.7,316.6 L575.5,317.6 L576.4,318.5 L577.2,319.5 L578.1,320.4 L579.0,321.3 L579.9,322.3 L580.7,323.2 L581.6,324.2 L582.6,325.1 L583.5,326.0 L584.4,327.0 L585.3,327.9 L586.3,328.9 L587.2,329.8 L588.2,330.7 L589.1,331.7 L590.1,332.6 L591.1,333.6 L592.1,334.5 L593.1,335.4 L594.1,336.4 L595.1,337.3 L596.1,338.3 L597.1,339.2 L598.2,340.1 L599.2,341.1 L600.3,342.0 L601.3,342.9 L602.4,343.9 L603.5,344.8 L604.5,345.7 L605.6,346.7 L606.7,347.6 L607.8,348.5 L608.9,349.5 L610.0,350.4 L611.2,351.3 L612.3,352.3 L613.4,353.2 L614.6,354.1 L615.7,355.0 L616.9,356.0 L618.0,356.9 L619.2,357.8 L620.4,358.7 L621.6,359.7 L622.8,360.6 L624.0,361.5 L625.2,362.4 L626.4,363.3 L627.6,364.3 L628.8,365.2 L630.0,366.1 L631.3,367.0 L632.5,367.9 L633.8,368.8 L635.0,369.8 L636.3,370.7 L637.5,371.6 L638.8,372.5 L640.1,373.4 L641.4,374.3 L642.7,375.2 L644.0,376.1 L645.3,377.0 L646.6,377.9 L647.9,378.8 L649.2,379.7 L650.5,380.6 L651.8,381.5 L653.2,382.4 L654.5,383.3 L655.8,384.2 L657.2,385.0 L658.5,385.9 L659.9,386.8 L661.2,387.7 L662.6,388.6 L664.0,389.5 L665.3,390.3 L666.7,391.2 L668.1,392.1 L669.5,393.0 L670.9,393.8 L672.3,394.7 L673.7,395.6 L675.1,396.4 L676.5,397.3 L677.9,398.1 L679.3,399.0 L680.7,399.9 L682.1,400.7 L683.5,401.6 L685.0,402.4 L686.4,403.3 L687.8,404.1 L689.3,404.9 L690.7,405.8 L692.1,406.6 L693.6,407.4 L695.0,408.3 L696.5,409.1 L697.9,409.9 L699.4,410.8 L700.8,411.6 L702.3,412.4 L703.7,413.2 L705.2,414.0 L706.7,414.8 L708.1,415.6 L709.6,416.4 L711.1,417.2 L712.6,418.0 L714.0,418.8 L715.5,419.6 L717.0,420.4 L718.5,421.2 L719.9,422.0 L721.4,422.7 L722.9,423.5 L724.4,424.3 L725.9,425.1 L727.3,425.8 L728.8,426.6 L730.3,427.3 L731.8,428.1 L733.3,428.8 L734.8,429.6 L736.3,430.3 L737.7,431.1 L739.2,431.8 L740.7,432.5 L742.2,433.2 L743.7,434.0 L745.2,434.7 L746.7,435.4 L748.2,436.1 L749.6,436.8 L751.1,437.5 L752.6,438.2 L754.1,438.9 L755.6,439.6 L757.1,440.3 L758.5,440.9 L760.0,441.6 L761.5,442.3 L763.0,442.9 L764.5,443.6 L765.9,444.2 L767.4,444.9 L768.9,445.5 L770.4,446.2 L771.8,446.8 L773.3,447.4" fill="none" stroke="#6a6a6a" stroke-width="1.2" stroke-dasharray="1.39 2.29"/>
<path d="M1236.5,146.5 L1236.4,146.0 L1236.2,145.4 L1236.1,144.9 L1236.0,144.4 L1236.0,143.9 L1235.9,143.4 L1235.9,142.9 L1235.9,142.4 L1236.0,142.0 L1236.0,141.5 L1236.1,141.1 L1236.2,140.7 M568.1,140.2 L570.3,139.8 L572.5,139.4 L574.8,139.1 L576.9,138.7 L579.1,138.3 L581.2,138.0 L583.3,137.7 L585.3,137.3 L587.4,137.0 L589.4,136.7 L591.3,136.4 L593.3,136.2 L595.2,135.9 L597.0,135.7 L598.9,135.4 L600.7,135.2 L602.5,135.0 L604.2,134.8 L605.9,134.6 L607.6,134.5 L609.3,134.3 L610.9,134.2 L612.5,134.0 L614.0,133.9 L615.5,133.8 L617.0,133.7 L618.5,133.7 L619.9,133.6 L621.3,133.6 L622.6,133.5 L623.9,133.5 L625.2,133.5 L626.5,133.5 L627.7,133.6 L628.9,133.6 L630.1,133.6 L631.2,133.7 L632.3,133.8 L633.4,133.9 L634.4,134.0 L635.5,134.1 L636.4,134.2 L637.4,134.4 L638.3,134.6 L639.2,134.7 L640.1,134.9 L640.9,135.1 L641.7,135.3 L642.5,135.6 L643.3,135.8 L644.0,136.0 L644.7,136.3 L645.4,136.6 L646.0,136.9 L646.7,137.2 L647.3,137.5 L647.8,137.8 L648.4,138.2 L648.9,138.5 L649.4,138.9 L649.9,139.3 L650.4,139.6 L650.8,140.0 L651.2,140.5 L651.6,140.9 L652.0,141.3 L652.4,141.8 L652.7,142.2 L653.0,142.7 L653.3,143.2 L653.6,143.6 L653.9,144.1 L654.1,144.7 L654.4,145.2 L654.6,145.7 L654.8,146.2 L655.0,146.8 L655.1,147.3 L655.3,147.9 L655.4,148.5 L655.6,149.1 L655.7,149.7 L655.8,150.3 L655.9,150.9 L656.0,151.5 L656.0,152.1 L656.1,152.8 L656.1,153.4 L656.2,154.1 L656.2,154.8 L656.2,155.4 L656.2,156.1 L656.2,156.8 L656.2,157.5 L656.2,158.2 L656.1,158.9 L656.1,159.6 L656.1,160.3 L656.0,161.1 L656.0,161.8 L655.9,162.5 L655.8,163.3 L655.7,164.1 L655.7,164.8 L655.6,165.6 L655.5,166.4 L655.4,167.1 L655.3,167.9 L655.2,168.7 L655.1,169.5 L655.0,170.3 L654.9,171.1 L654.8,171.9 L654.7,172.8 L654.5,173.6 L654.4,174.4 L654.3,175.3 L654.2,176.1 L654.1,177.0 L653.9,177.8 L653.8,178.7 L653.7,179.5 L653.6,180.4 L653.4,181.3 L653.3,182.1 L653.2,183.0 L653.1,183.9 L652.9,184.8 L652.8,185.7 L652.7,186.6 L652.6,187.5 L652.4,188.4 L652.3,189.3 L652.2,190.2 L652.1,191.1 L652.0,192.0 L651.9,192.9 L651.8,193.9 L651.6,194.8 L651.5,195.7 L651.4,196.6 L651.3,197.6 L651.2,198.5 L651.2,199.5 L651.1,200.4 L651.0,201.4 L650.9,202.3 L650.8,203.3 L650.7,204.2 L650.7,205.2 L650.6,206.2 L650.6,207.1 L650.5,208.1 L650.4,209.1 L650.4,210.0 L650.3,211.0 L650.3,212.0 L650.3,213.0 L650.2,214.0 L650.2,215.0 L650.2,215.9 L650.2,216.9 L650.2,217.9 L650.2,218.9 L650.2,219.9 L650.2,220.9 L650.2,221.9 L650.2,222.9 L650.2,223.9 L650.3,224.9 L650.3,225.9 L650.4,227.0 L650.4,228.0 L650.5,229.0 L650.5,230.0 L650.6,231.0 L650.7,232.0 L650.7,233.1 L650.8,234.1 L650.9,235.1 L651.0,236.1 L651.1,237.2 L651.2,238.2 L651.4,239.2 L651.5,240.3 L651.6,241.3 L651.8,242.3 L651.9,243.4 L652.1,244.4 L652.2,245.4 L652.4,246.5 L652.6,247.5 L652.8,248.6 L652.9,249.6 L653.1,250.7 L653.3,251.7 L653.6,252.8 L653.8,253.8 L654.0,254.9 L654.2,255.9 L654.5,257.0 L654.7,258.0 L655.0,259.1 L655.2,260.1 L655.5,261.2 L655.8,262.2 L656.1,263.3 L656.4,264.4 L656.7,265.4 L657.0,266.5 L657.3,267.5 L657.6,268.6 L657.9,269.7 L658.3,270.7 L658.6,271.8 L659.0,272.9 L659.3,273.9 L659.7,275.0 L660.1,276.1 L660.5,277.1 L660.9,278.2 L661.3,279.3 L661.7,280.3 L662.1,281.4 L662.5,282.5 L662.9,283.5 L663.4,284.6 L663.8,285.7 L664.3,286.8 L664.8,287.8 L665.2,288.9 L665.7,290.0 L666.2,291.1 L666.7,292.1 L667.2,293.2 L667.7,294.3 L668.2,295.4 L668.7,296.4 L669.3,297.5 L669.8,298.6 L670.4,299.7 L670.9,300.7 L671.5,301.8 L672.0,302.9 L672.6,304.0 L673.2,305.1 L673.8,306.1 L674.4,307.2 L675.0,308.3 L675.6,309.4 L676.2,310.5 L676.9,311.5 L677.5,312.6 L678.2,313.7 L678.8,314.8 L679.5,315.9 L680.2,316.9 L680.8,318.0 L681.5,319.1 L682.2,320.2 L682.9,321.3 L683.6,322.3 L684.3,323.4 L685.0,324.5 L685.8,325.6 L686.5,326.7 L687.3,327.8 L688.0,328.8 L688.8,329.9 L689.5,331.0 L690.3,332.1 L691.1,333.2 L691.9,334.2 L692.7,335.3 L693.5,336.4 L694.3,337.5 L695.1,338.5 L695.9,339.6 L696.7,340.7 L697.6,341.8 L698.4,342.9 L699.2,343.9 L700.1,345.0 L701.0,346.1 L701.8,347.2 L702.7,348.2 L703.6,349.3 L704.5,350.4 L705.4,351.5 L706.3,352.5 L707.2,353.6 L708.1,354.7 L709.0,355.8 L709.9,356.8 L710.9,357.9 L711.8,359.0 L712.7,360.0 L713.7,361.1 L714.6,362.2 L715.6,363.2 L716.6,364.3 L717.6,365.4 L718.5,366.5 L719.5,367.5 L720.5,368.6 L721.5,369.6 L722.5,370.7 L723.5,371.8 L724.5,372.8 L725.6,373.9 L726.6,375.0 L727.6,376.0 L728.6,377.1 L729.7,378.1 L730.7,379.2 L731.8,380.2 L732.8,381.3 L733.9,382.4 L735.0,383.4 L736.0,384.5 L737.1,385.5 L738.2,386.6 L739.3,387.6 L740.4,388.7 L741.5,389.7 L742.6,390.7 L743.7,391.8 L744.8,392.8 L745.9,393.9 L747.0,394.9 L748.2,396.0 L749.3,397.0 L750.4,398.0 L751.5,399.1 L752.7,400.1 L753.8,401.1 L755.0,402.2 L756.1,403.2 L757.3,404.2 L758.5,405.2 L759.6,406.3 L760.8,407.3 L762.0,408.3 L763.1,409.3 L764.3,410.4 L765.5,411.4 L766.7,412.4 L767.9,413.4 L769.1,414.4 L770.2,415.4 L771.4,416.4 L772.6,417.4 L773.8,418.4 L775.1,419.4 L776.3,420.4 L777.5,421.4 L778.7,422.4 L779.9,423.4 L781.1,424.4 L782.4,425.4 L783.6,426.4 L784.8,427.4 L786.0,428.3 L787.3,429.3 L788.5,430.3 L789.7,431.3 L791.0,432.2 L792.2,433.2 L793.5,434.2 L794.7,435.1 L795.9,436.1 L797.2,437.1 L798.4,438.0 L799.7,439.0 L800.9,439.9 L802.2,440.9 L803.4,441.8 L804.7,442.7 L806.0,443.7 L807.2,444.6 L808.5,445.5 L809.7,446.5 L811.0,447.4 L812.3,448.3 L813.5,449.2 L814.8,450.1 L816.0,451.0" fill="none" stroke="#6a6a6a" stroke-width="1.2" stroke-dasharray="1.39 2.29"/>
<path d="M1295.0,170.0 L1295.0,169.5 L1295.0,169.0 L1295.0,168.5 L1295.1,168.1 L1295.1,167.6 L1295.2,167.1 L1295.2,166.7 L1295.3,166.2 L1295.4,165.8 L1295.5,165.3 L1295.7,164.9 L1295.8,164.5 M510.4,164.1 L512.5,163.7 L514.5,163.3 L516.6,162.9 L518.6,162.5 L520.6,162.1 L522.6,161.8 L524.6,161.4 L526.5,161.0 L528.4,160.7 L530.4,160.4 L532.3,160.0 L534.1,159.7 L536.0,159.4 L537.9,159.1 L539.7,158.8 L541.5,158.5 L543.3,158.3 L545.1,158.0 L546.8,157.7 L548.5,157.5 L550.3,157.2 L552.0,157.0 L553.6,156.8 L555.3,156.6 L556.9,156.4 L558.5,156.2 L560.1,156.0 L561.7,155.8 L563.3,155.6 L564.8,155.5 L566.3,155.3 L567.8,155.2 L569.3,155.0 L570.8,154.9 L572.2,154.8 L573.6,154.7 L575.0,154.6 L576.4,154.5 L577.8,154.4 L579.1,154.4 L580.4,154.3 L581.7,154.3 L583.0,154.2 L584.3,154.2 L585.5,154.2 L586.7,154.2 L587.9,154.2 L589.1,154.2 L590.3,154.2 L591.4,154.2 L592.5,154.2 L593.7,154.3 L594.7,154.3 L595.8,154.4 L596.8,154.5 L597.9,154.6 L598.9,154.7 L599.9,154.8 L600.8,154.9 L601.8,155.0 L602.7,155.1 L603.6,155.3 L604.5,155.4 L605.4,155.6 L606.3,155.7 L607.1,155.9 L608.0,156.1 L608.8,156.3 L609.6,156.5 L610.4,156.7 L611.1,156.9 L611.9,157.1 L612.6,157.4 L613.3,157.6 L614.0,157.9 L614.7,158.2 L615.4,158.4 L616.0,158.7 L616.7,159.0 L617.3,159.3 L617.9,159.6 L618.5,159.9 L619.1,160.2 L619.7,160.6 L620.2,160.9 L620.8,161.3 L621.3,161.6 L621.8,162.0 L622.3,162.3 L622.8,162.7 L623.3,163.1 L623.8,163.5 L624.2,163.9 L624.7,164.3 L625.1,164.7 L625.5,165.2 L626.0,165.6 L626.4,166.0 L626.8,166.5 L627.2,166.9 L627.5,167.4 L627.9,167.9 L628.3,168.3 L628.6,168.8 L629.0,169.3 L629.3,169.8 L629.6,170.3 L629.9,170.8 L630.2,171.3 L630.5,171.8 L630.8,172.4 L631.1,172.9 L631.4,173.4 L631.7,174.0 L632.0,174.5 L632.2,175.1 L632.5,175.7 L632.7,176.2 L633.0,176.8 L633.2,177.4 L633.4,178.0 L633.7,178.6 L633.9,179.2 L634.1,179.8 L634.3,180.4 L634.5,181.0 L634.8,181.6 L635.0,182.2 L635.2,182.9 L635.4,183.5 L635.6,184.1 L635.7,184.8 L635.9,185.4 L636.1,186.1 L636.3,186.7 L636.5,187.4 L636.7,188.1 L636.8,188.7 L637.0,189.4 L637.2,190.1 L637.4,190.8 L637.5,191.5 L637.7,192.1 L637.9,192.8 L638.0,193.5 L638.2,194.3 L638.4,195.0 L638.5,195.7 L638.7,196.4 L638.8,197.1 L639.0,197.8 L639.2,198.6 L639.3,199.3 L639.5,200.0 L639.7,200.8 L639.8,201.5 L640.0,202.3 L640.2,203.0 L640.3,203.8 L640.5,204.5 L640.7,205.3 L640.8,206.0 L641.0,206.8 L641.2,207.6 L641.3,208.4 L641.5,209.1 L641.7,209.9 L641.9,210.7 L642.1,211.5 L642.2,212.3 L642.4,213.1 L642.6,213.8 L642.8,214.6 L643.0,215.4 L643.2,216.2 L643.4,217.0 L643.6,217.8 L643.8,218.7 L644.0,219.5 L644.2,220.3 L644.4,221.1 L644.6,221.9 L644.8,222.7 L645.0,223.6 L645.3,224.4 L645.5,225.2 L645.7,226.0 L646.0,226.9 L646.2,227.7 L646.4,228.5 L646.7,229.4 L646.9,230.2 L647.2,231.1 L647.4,231.9 L647.7,232.8 L647.9,233.6 L648.2,234.5 L648.5,235.3 L648.8,236.2 L649.0,237.0 L649.3,237.9 L649.6,238.7 L649.9,239.6 L650.2,240.5 L650.5,241.3 L650.8,242.2 L651.1,243.1 L651.4,243.9 L651.7,244.8 L652.1,245.7 L652.4,246.5 L652.7,247.4 L653.1,248.3 L653.4,249.2 L653.7,250.1 L654.1,250.9 L654.5,251.8 L654.8,252.7 L655.2,253.6 L655.5,254.5 L655.9,255.4 L656.3,256.3 L656.7,257.1 L657.1,258.0 L657.5,258.9 L657.9,259.8 L658.3,260.7 L658.7,261.6 L659.1,262.5 L659.5,263.4 L660.0,264.3 L660.4,265.2 L660.8,266.1 L661.3,267.0 L661.7,267.9 L662.2,268.8 L662.6,269.7 L663.1,270.6 L663.6,271.5 L664.0,272.4 L664.5,273.3 L665.0,274.3 L665.5,275.2 L666.0,276.1 L666.5,277.0 L667.0,277.9 L667.5,278.8 L668.0,279.7 L668.5,280.6 L669.1,281.6 L669.6,282.5 L670.1,283.4 L670.7,284.3 L671.2,285.2 L671.8,286.1 L672.3,287.1 L672.9,288.0 L673.5,288.9 L674.1,289.8 L674.6,290.7 L675.2,291.7 L675.8,292.6 L676.4,293.5 L677.0,294.4 L677.6,295.4 L678.3,296.3 L678.9,297.2 L679.5,298.1 L680.1,299.1 L680.8,300.0 L681.4,300.9 L682.1,301.8 L682.7,302.8 L683.4,303.7 L684.0,304.6 L684.7,305.5 L685.4,306.5 L686.1,307.4 L686.7,308.3 L687.4,309.3 L688.1,310.2 L688.8,311.1 L689.5,312.0 L690.3,313.0 L691.0,313.9 L691.7,314.8 L692.4,315.8 L693.2,316.7 L693.9,317.6 L694.6,318.5 L695.4,319.5 L696.1,320.4 L696.9,321.3 L697.7,322.3 L698.4,323.2 L699.2,324.1 L700.0,325.0 L700.8,326.0 L701.5,326.9 L702.3,327.8 L703.1,328.8 L703.9,329.7 L704.8,330.6 L705.6,331.5 L706.4,332.5 L707.2,333.4 L708.0,334.3 L708.9,335.3 L709.7,336.2 L710.5,337.1 L711.4,338.0 L712.2,339.0 L713.1,339.9 L714.0,340.8 L714.8,341.7 L715.7,342.7 L716.6,343.6 L717.5,344.5 L718.3,345.4 L719.2,346.4 L720.1,347.3 L721.0,348.2 L721.9,349.1 L722.8,350.0 L723.7,351.0 L724.6,351.9 L725.6,352.8 L726.5,353.7 L727.4,354.6 L728.3,355.6 L729.3,356.5 L730.2,357.4 L731.2,358.3 L732.1,359.2 L733.1,360.1 L734.0,361.1 L735.0,362.0 L735.9,362.9 L736.9,363.8 L737.9,364.7 L738.8,365.6 L739.8,366.5 L740.8,367.4 L741.8,368.3 L742.8,369.2 L743.8,370.2 L744.8,371.1 L745.8,372.0 L746.8,372.9 L747.8,373.8 L748.8,374.7 L749.8,375.6 L750.8,376.5 L751.8,377.4 L752.8,378.3 L753.9,379.2 L754.9,380.1 L755.9,380.9 L757.0,381.8 L758.0,382.7 L759.0,383.6 L760.1,384.5 L761.1,385.4 L762.2,386.3 L763.2,387.2 L764.3,388.1 L765.3,388.9 L766.4,389.8 L767.5,390.7 L768.5,391.6 L769.6,392.5 L770.7,393.3 L771.7,394.2 L772.8,395.1 L773.9,395.9 L775.0,396.8 L776.1,397.7 L777.1,398.6 L778.2,399.4 L779.3,400.3 L780.4,401.1 L781.5,402.0 L782.6,402.9 L783.7,403.7 L784.8,404.6 L785.9,405.4 L787.0,406.3" fill="none" stroke="#6a6a6a" stroke-width="1.2" stroke-dasharray="1.39 2.29"/>
<path d="M567.8,158.3 L568.4,158.4 L568.9,158.6 L569.5,158.7 L570.0,158.8 L570.6,159.0 L571.1,159.1 L571.6,159.3 L572.1,159.5 L572.6,159.6 L573.1,159.8 L573.6,160.0 L574.1,160.1 L574.5,160.3 L575.0,160.5 L575.4,160.7 L575.9,160.9 L576.3,161.1 L576.7,161.3 L577.1,161.5 L577.5,161.7 L577.9,161.9 L578.3,162.2 L578.7,162.4 L579.1,162.6 L579.5,162.8 L579.8,163.1 L580.2,163.3 L580.5,163.6 L580.9,163.8 L581.2,164.1 L581.5,164.3 L581.8,164.6 L582.2,164.9 L582.5,165.1 L582.8,165.4 L583.1,165.7 L583.3,165.9 L583.6,166.2 L583.9,166.5 L584.2,166.8 L584.4,167.1 L584.7,167.4 L584.9,167.7 L585.2,168.0 L585.4,168.3 L585.7,168.6 L585.9,168.9 L586.1,169.3 L586.3,169.6 L586.5,169.9 L586.7,170.2 L587.0,170.6 L587.1,170.9 L587.3,171.3 L587.5,171.6 L587.7,172.0 L587.9,172.3 L588.1,172.7 L588.2,173.0 L588.4,173.4 L588.6,173.7 L588.7,174.1 L588.9,174.5 L589.0,174.8 L589.2,175.2 L589.3,175.6 L589.4,176.0 L589.6,176.4 L589.7,176.8 L589.8,177.2 L590.0,177.5 L590.1,177.9 L590.2,178.3 L590.3,178.7 L590.4,179.2 L590.5,179.6 L590.6,180.0 L590.7,180.4 L590.8,180.8 L590.9,181.2 L591.0,181.6 L591.1,182.1 L591.2,182.5 L591.3,182.9 L591.4,183.4 L591.5,183.8 L591.5,184.2 L591.6,184.7 L591.7,185.1 L591.8,185.6 L591.8,186.0 L591.9,186.5 L592.0,186.9 L592.0,187.4 L592.1,187.8 L592.2,188.3 L592.2,188.8 L592.3,189.2 L592.4,189.7 L592.4,190.2 L592.5,190.6 L592.5,191.1 L592.6,191.6 L592.6,192.1 L592.7,192.6 L592.8,193.0 L592.8,193.5 L592.9,194.0 L592.9,194.5 L593.0,195.0 L593.0,195.5 L593.1,196.0 L593.1,196.5 L593.1,197.0 L593.2,197.5 L593.2,198.0 L593.3,198.5 L593.3,199.0 L593.4,199.5 L593.4,200.0 L593.5,200.5 L593.5,201.0 L593.6,201.6 L593.6,202.1 L593.7,202.6 L593.7,203.1 L593.8,203.7 L593.8,204.2 L593.9,204.7 L593.9,205.2 L594.0,205.8 L594.0,206.3 L594.1,206.8 L594.1,207.4 L594.2,207.9 L594.2,208.4 L594.3,209.0 L594.3,209.5 L594.4,210.1 L594.4,210.6 L594.5,211.2 L594.5,211.7 L594.6,212.3 L594.7,212.8 L594.7,213.4 L594.8,213.9 L594.9,214.5 L594.9,215.0 L595.0,215.6 L595.1,216.2 L595.1,216.7 L595.2,217.3 L595.3,217.9 L595.3,218.4 L595.4,219.0 L595.5,219.6 L595.6,220.1 L595.7,220.7 L595.7,221.3 L595.8,221.8 L595.9,222.4 L596.0,223.0 L596.1,223.6 L596.2,224.1 L596.3,224.7 L596.4,225.3 L596.4,225.9 L596.5,226.5 L596.6,227.1 L596.7,227.6 L596.8,228.2 L597.0,228.8 L597.1,229.4 L597.2,230.0 L597.3,230.6 L597.4,231.2 L597.5,231.8 L597.6,232.4 L597.8,233.0 L597.9,233.6 L598.0,234.2 L598.1,234.8 L598.3,235.4 L598.4,236.0 L598.5,236.6 L598.7,237.2 L598.8,237.8 L598.9,238.4 L599.1,239.0 L599.2,239.6 L599.4,240.2 L599.5,240.8 L599.7,241.4 L599.9,242.0 L600.0,242.6 L600.2,243.2 L600.3,243.8 L600.5,244.5 L600.7,245.1 L600.9,245.7 L601.0,246.3 L601.2,246.9 L601.4,247.5 L601.6,248.1 L601.8,248.8 L602.0,249.4 L602.1,250.0 L602.3,250.6 L602.5,251.2 L602.7,251.9 L602.9,252.5 L603.2,253.1 L603.4,253.7 L603.6,254.4 L603.8,255.0 L604.0,255.6 L604.2,256.2 L604.5,256.9 L604.7,257.5 L604.9,258.1 L605.2,258.7 L605.4,259.4 L605.6,260.0 L605.9,260.6 L606.1,261.3 L606.4,261.9 L606.6,262.5 L606.9,263.2 L607.1,263.8 L607.4,264.4 L607.7,265.1 L607.9,265.7 L608.2,266.3 L608.5,267.0 L608.8,267.6 L609.0,268.2 L609.3,268.9 L609.6,269.5 L609.9,270.2 L610.2,270.8" fill="none" stroke="#ffa500" stroke-width="1.6" stroke-dasharray="1.5 2.18"/>
<path d="M534.1,184.9 L534.6,185.0 L535.1,185.2 L535.6,185.3 L536.2,185.4 L536.7,185.6 L537.2,185.7 L537.7,185.9 L538.1,186.0 L538.6,186.2 L539.1,186.3 L539.6,186.5 L540.1,186.7 L540.5,186.8 L541.0,187.0 L541.5,187.2 L541.9,187.3 L542.4,187.5 L542.8,187.7 L543.3,187.9 L543.7,188.1 L544.1,188.2 L544.6,188.4 L545.0,188.6 L545.4,188.8 L545.9,189.0 L546.3,189.2 L546.7,189.4 L547.1,189.6 L547.5,189.8 L547.9,190.0 L548.3,190.2 L548.7,190.4 L549.1,190.6 L549.5,190.9 L549.9,191.1 L550.3,191.3 L550.7,191.5 L551.0,191.8 L551.4,192.0 L551.8,192.2 L552.2,192.4 L552.5,192.7 L552.9,192.9 L553.2,193.2 L553.6,193.4 L554.0,193.6 L554.3,193.9 L554.7,194.1 L555.0,194.4 L555.4,194.6 L555.7,194.9 L556.0,195.2 L556.4,195.4 L556.7,195.7 L557.0,195.9 L557.4,196.2 L557.7,196.5 L558.0,196.7 L558.3,197.0 L558.7,197.3 L559.0,197.6 L559.3,197.8 L559.6,198.1 L559.9,198.4 L560.2,198.7 L560.5,199.0 L560.8,199.3 L561.1,199.6 L561.4,199.9 L561.7,200.2 L562.0,200.5 L562.3,200.8 L562.6,201.1 L562.9,201.4 L563.2,201.7 L563.5,202.0 L563.8,202.3 L564.1,202.6 L564.4,202.9 L564.6,203.2 L564.9,203.5 L565.2,203.9 L565.5,204.2 L565.8,204.5 L566.0,204.8 L566.3,205.1 L566.6,205.5 L566.9,205.8 L567.1,206.1 L567.4,206.5 L567.7,206.8 L567.9,207.1 L568.2,207.5 L568.5,207.8 L568.7,208.2 L569.0,208.5 L569.3,208.8 L569.5,209.2 L569.8,209.5 L570.0,209.9 L570.3,210.2 L570.6,210.6 L570.8,210.9 L571.1,211.3 L571.3,211.7 L571.6,212.0 L571.8,212.4 L572.1,212.7 L572.3,213.1 L572.6,213.5 L572.8,213.8 L573.1,214.2 L573.3,214.6 L573.6,215.0 L573.9,215.3 L574.1,215.7 L574.4,216.1 L574.6,216.5 L574.9,216.8 L575.1,217.2 L575.4,217.6 L575.6,218.0 L575.9,218.4 L576.1,218.8 L576.3,219.1 L576.6,219.5 L576.8,219.9 L577.1,220.3 L577.3,220.7 L577.6,221.1 L577.8,221.5 L578.1,221.9 L578.3,222.3 L578.6,222.7 L578.8,223.1 L579.1,223.5 L579.3,223.9 L579.6,224.3 L579.8,224.7 L580.1,225.1 L580.3,225.5 L580.6,226.0 L580.8,226.4 L581.1,226.8 L581.4,227.2 L581.6,227.6 L581.9,228.0 L582.1,228.4 L582.4,228.9 L582.6,229.3 L582.9,229.7 L583.1,230.1 L583.4,230.5 L583.7,231.0 L583.9,231.4 L584.2,231.8 L584.4,232.3 L584.7,232.7 L585.0,233.1 L585.2,233.5 L585.5,234.0 L585.7,234.4 L586.0,234.8 L586.3,235.3 L586.5,235.7 L586.8,236.1 L587.1,236.6 L587.4,237.0 L587.6,237.5 L587.9,237.9 L588.2,238.3 L588.4,238.8 L588.7,239.2 L589.0,239.7 L589.3,240.1 L589.5,240.6 L589.8,241.0 L590.1,241.5 L590.4,241.9 L590.7,242.4 L590.9,242.8 L591.2,243.3 L591.5,243.7 L591.8,244.2 L592.1,244.6 L592.4,245.1 L592.7,245.6 L593.0,246.0 L593.3,246.5 L593.6,246.9 L593.8,247.4 L594.1,247.8 L594.4,248.3 L594.7,248.8 L595.0,249.2 L595.3,249.7 L595.7,250.2 L596.0,250.6 L596.3,251.1 L596.6,251.6 L596.9,252.0 L597.2,252.5 L597.5,253.0 L597.8,253.4 L598.1,253.9 L598.5,254.4 L598.8,254.9 L599.1,255.3 L599.4,255.8 L599.7,256.3 L600.1,256.8 L600.4,257.2 L600.7,257.7 L601.0,258.2 L601.4,258.7 L601.7,259.1 L602.0,259.6 L602.4,260.1 L602.7,260.6 L603.1,261.1 L603.4,261.5 L603.7,262.0 L604.1,262.5 L604.4,263.0 L604.8,263.5 L605.1,264.0 L605.5,264.4 L605.8,264.9 L606.2,265.4 L606.5,265.9 L606.9,266.4 L607.3,266.9 L607.6,267.4 L608.0,267.9 L608.3,268.3 L608.7,268.8 L609.1,269.3 L609.5,269.8 L609.8,270.3 L610.2,270.8" fill="none" stroke="#ffa500" stroke-width="1.6" stroke-dasharray="1.5 2.18"/>
<path d="M590.1,198.9 L590.1,199.2 L590.2,199.4 L590.2,199.7 L590.3,199.9 L590.3,200.2 L590.3,200.4 L590.4,200.7 L590.4,201.0 L590.5,201.2 L590.5,201.5 L590.6,201.7 L590.6,202.0 L590.6,202.3 L590.7,202.5 L590.7,202.8 L590.8,203.0 L590.8,203.3 L590.8,203.6 L590.9,203.8 L590.9,204.1 L591.0,204.4 L591.0,204.6 L591.0,204.9 L591.1,205.2 L591.1,205.4 L591.2,205.7 L591.2,206.0 L591.3,206.2 L591.3,206.5 L591.3,206.8 L591.4,207.0 L591.4,207.3 L591.5,207.6 L591.5,207.9 L591.6,208.1 L591.6,208.4 L591.6,208.7 L591.7,209.0 L591.7,209.2 L591.8,209.5 L591.8,209.8 L591.9,210.1 L591.9,210.3 L591.9,210.6 L592.0,210.9 L592.0,211.2 L592.1,211.4 L592.1,211.7 L592.2,212.0 L592.2,212.3 L592.3,212.5 L592.3,212.8 L592.3,213.1 L592.4,213.4 L592.4,213.7 L592.5,214.0 L592.5,214.2 L592.6,214.5 L592.6,214.8 L592.7,215.1 L592.7,215.4 L592.8,215.6 L592.8,215.9 L592.9,216.2 L592.9,216.5 L593.0,216.8 L593.0,217.1 L593.1,217.4 L593.1,217.6 L593.2,217.9 L593.2,218.2 L593.3,218.5 L593.3,218.8 L593.4,219.1 L593.4,219.4 L593.5,219.7 L593.5,219.9 L593.6,220.2 L593.7,220.5 L593.7,220.8 L593.8,221.1 L593.8,221.4 L593.9,221.7 L593.9,222.0 L594.0,222.3 L594.0,222.6 L594.1,222.9 L594.2,223.2 L594.2,223.4 L594.3,223.7 L594.3,224.0 L594.4,224.3 L594.5,224.6 L594.5,224.9 L594.6,225.2 L594.6,225.5 L594.7,225.8 L594.8,226.1 L594.8,226.4 L594.9,226.7 L595.0,227.0 L595.0,227.3 L595.1,227.6 L595.2,227.9 L595.2,228.2 L595.3,228.5 L595.4,228.8 L595.4,229.1 L595.5,229.4 L595.6,229.7 L595.6,230.0 L595.7,230.3 L595.8,230.6 L595.8,230.9 L595.9,231.2 L596.0,231.5 L596.1,231.8 L596.1,232.1 L596.2,232.4 L596.3,232.7 L596.4,233.0 L596.4,233.3 L596.5,233.6 L596.6,233.9 L596.7,234.2 L596.7,234.5 L596.8,234.8 L596.9,235.2 L597.0,235.5 L597.1,235.8 L597.1,236.1 L597.2,236.4 L597.3,236.7 L597.4,237.0 L597.5,237.3 L597.5,237.6 L597.6,237.9 L597.7,238.2 L597.8,238.5 L597.9,238.8 L598.0,239.1 L598.1,239.5 L598.2,239.8 L598.2,240.1 L598.3,240.4 L598.4,240.7 L598.5,241.0 L598.6,241.3 L598.7,241.6 L598.8,241.9 L598.9,242.3 L599.0,242.6 L599.1,242.9 L599.2,243.2 L599.3,243.5 L599.4,243.8 L599.5,244.1 L599.6,244.4 L599.7,244.8 L599.8,245.1 L599.9,245.4 L600.0,245.7 L600.1,246.0 L600.2,246.3 L600.3,246.6 L600.4,247.0 L600.5,247.3 L600.6,247.6 L600.7,247.9 L600.8,248.2 L600.9,248.5 L601.0,248.9 L601.1,249.2 L601.2,249.5 L601.3,249.8 L601.4,250.1 L601.6,250.4 L601.7,250.8 L601.8,251.1 L601.9,251.4 L602.0,251.7 L602.1,252.0 L602.2,252.3 L602.4,252.7 L602.5,253.0 L602.6,253.3 L602.7,253.6 L602.8,253.9 L603.0,254.3 L603.1,254.6 L603.2,254.9 L603.3,255.2 L603.5,255.5 L603.6,255.9 L603.7,256.2 L603.8,256.5 L604.0,256.8 L604.1,257.2 L604.2,257.5 L604.3,257.8 L604.5,258.1 L604.6,258.4 L604.7,258.8 L604.9,259.1 L605.0,259.4 L605.1,259.7 L605.3,260.1 L605.4,260.4 L605.6,260.7 L605.7,261.0 L605.8,261.3 L606.0,261.7 L606.1,262.0 L606.2,262.3 L606.4,262.6 L606.5,263.0 L606.7,263.3 L606.8,263.6 L607.0,263.9 L607.1,264.3 L607.3,264.6 L607.4,264.9 L607.6,265.2 L607.7,265.6 L607.9,265.9 L608.0,266.2 L608.2,266.5 L608.3,266.9 L608.5,267.2 L608.6,267.5 L608.8,267.9 L608.9,268.2 L609.1,268.5 L609.2,268.8 L609.4,269.2 L609.6,269.5 L609.7,269.8 L609.9,270.1 L610.0,270.5 L610.2,270.8" fill="none" stroke="#ffa500" stroke-width="1.6" stroke-dasharray="1.5 2.18"/>
<path d="M706.3,120.0 L705.8,120.5 L705.4,121.0 L704.9,121.5 L704.4,122.0 L703.9,122.5 L703.4,123.0 L702.9,123.5 L702.4,124.1 L701.9,124.6 L701.4,125.1 L700.9,125.6 L700.4,126.1 L699.9,126.7 L699.4,127.2 L698.9,127.7 L698.4,128.3 L697.9,128.8 L697.4,129.3 L696.9,129.9 L696.4,130.4 L695.8,130.9 L695.3,131.5 L694.8,132.0 L694.3,132.6 L693.8,133.1 L693.2,133.7 L692.7,134.2 L692.2,134.8 L691.7,135.3 L691.2,135.9 L690.6,136.4 L690.1,137.0 L689.6,137.5 L689.0,138.1 L688.5,138.7 L688.0,139.2 L687.5,139.8 L686.9,140.4 L686.4,140.9 L685.9,141.5 L685.3,142.1 L684.8,142.6 L684.3,143.2 L683.8,143.8 L683.2,144.4 L682.7,144.9 L682.2,145.5 L681.6,146.1 L681.1,146.7 L680.6,147.2 L680.1,147.8 L679.5,148.4 L679.0,149.0 L678.5,149.6 L678.0,150.2 L677.4,150.7 L676.9,151.3 L676.4,151.9 L675.9,152.5 L675.3,153.1 L674.8,153.7 L674.3,154.3 L673.8,154.9 L673.3,155.5 L672.7,156.1 L672.2,156.7 L671.7,157.3 L671.2,157.9 L670.7,158.5 L670.2,159.1 L669.7,159.7 L669.2,160.3 L668.7,160.9 L668.2,161.5 L667.6,162.1 L667.1,162.7 L666.6,163.3 L666.1,163.9 L665.6,164.5 L665.1,165.1 L664.6,165.7 L664.2,166.3 L663.7,166.9 L663.2,167.5 L662.7,168.1 L662.2,168.7 L661.7,169.4 L661.2,170.0 L660.7,170.6 L660.3,171.2 L659.8,171.8 L659.3,172.4 L658.8,173.0 L658.4,173.7 L657.9,174.3 L657.4,174.9 L656.9,175.5 L656.5,176.1 L656.0,176.7 L655.6,177.4 L655.1,178.0 L654.6,178.6 L654.2,179.2 L653.7,179.8 L653.3,180.5 L652.8,181.1 L652.4,181.7 L651.9,182.3 L651.5,183.0 L651.0,183.6 L650.6,184.2 L650.2,184.8 L649.7,185.5 L649.3,186.1 L648.9,186.7 L648.4,187.3 L648.0,188.0 L647.6,188.6 L647.2,189.2 L646.8,189.8 L646.3,190.5 L645.9,191.1 L645.5,191.7 L645.1,192.4 L644.7,193.0 L644.3,193.6 L643.9,194.3 L643.5,194.9 L643.1,195.5 L642.7,196.2 L642.3,196.8 L641.9,197.4 L641.6,198.1 L641.2,198.7 L640.8,199.3 L640.4,200.0 L640.1,200.6 L639.7,201.2 L639.3,201.9 L638.9,202.5 L638.6,203.1 L638.2,203.8 L637.9,204.4 L637.5,205.1 L637.2,205.7 L636.8,206.3 L636.5,207.0 L636.1,207.6 L635.8,208.2 L635.4,208.9 L635.1,209.5 L634.8,210.2 L634.4,210.8 L634.1,211.4 L633.8,212.1 L633.5,212.7 L633.1,213.4 L632.8,214.0 L632.5,214.7 L632.2,215.3 L631.9,215.9 L631.6,216.6 L631.3,217.2 L631.0,217.9 L630.7,218.5 L630.4,219.2 L630.1,219.8 L629.8,220.4 L629.6,221.1 L629.3,221.7 L629.0,222.4 L628.7,223.0 L628.5,223.7 L628.2,224.3 L627.9,225.0 L627.7,225.6 L627.4,226.3 L627.2,226.9 L626.9,227.5 L626.7,228.2 L626.4,228.8 L626.2,229.5 L625.9,230.1 L625.7,230.8 L625.5,231.4 L625.2,232.1 L625.0,232.7 L624.8,233.4 L624.6,234.0 L624.4,234.7 L624.1,235.3 L623.9,236.0 L623.7,236.6 L623.5,237.3 L623.3,237.9 L623.1,238.6 L622.9,239.2 L622.8,239.9 L622.6,240.5 L622.4,241.2 L622.2,241.8 L622.0,242.5 L621.8,243.1 L621.7,243.8 L621.5,244.4 L621.3,245.1 L621.2,245.7 L621.0,246.4 L620.9,247.0 L620.7,247.7 L620.6,248.3 L620.4,249.0 L620.3,249.6 L620.2,250.3 L620.0,250.9 L619.9,251.6 L619.8,252.3 L619.6,252.9 L619.5,253.6 L619.4,254.2 L619.3,254.9 L619.2,255.5 L619.1,256.2 L619.0,256.8 L618.9,257.5 L618.8,258.1 L618.7,258.8 L618.6,259.4 L618.5,260.1 L618.4,260.7 L618.4,261.4 L618.3,262.1 L618.2,262.7 L618.1,263.4 L618.1,264.0 L618.0,264.7 L618.0,265.3 L617.9,266.0 L617.8,266.6 L617.8,267.3" fill="none" stroke="#ffa500" stroke-width="1.6" stroke-dasharray="1.5 2.18"/>
<path d="M939.9,93.3 L938.6,92.6 L937.3,91.9 L936.0,91.2 L934.7,90.6 L933.4,89.9 L932.1,89.3 L930.9,88.7 L929.6,88.1 L928.4,87.5 L927.1,86.9 L925.9,86.4 L924.6,85.8 L923.4,85.3 L922.2,84.8 L921.0,84.3 L919.8,83.9 L918.5,83.4 L917.3,83.0 L916.2,82.6 L915.0,82.2 L913.8,81.9 L912.6,81.5 L911.4,81.2 L910.2,80.9 L909.1,80.7 L907.9,80.4 L906.7,80.2 L905.6,80.0 L904.4,79.8 L903.3,79.7 L902.1,79.6 L900.9,79.5 L899.8,79.4 L898.6,79.3 L897.5,79.3 L896.3,79.3 L895.1,79.3 L894.0,79.4 L892.8,79.5 L891.6,79.6 L890.4,79.7 L889.2,79.8 L888.1,80.0 L886.9,80.2 L885.6,80.4 L884.4,80.7 L883.2,81.0 L882.0,81.3 L880.7,81.6 L879.5,81.9 L878.2,82.3 L877.0,82.6 L875.7,83.1 L874.4,83.5 L873.1,83.9 L871.8,84.4 L870.5,84.9 L869.2,85.4 L867.9,85.9 L866.5,86.4 L865.2,87.0 L863.8,87.5 L862.5,88.1 L861.1,88.7 L859.7,89.3 L858.3,90.0 L856.9,90.6 L855.5,91.3 L854.1,92.0 L852.6,92.7 L851.2,93.4 L849.7,94.1 L848.3,94.8 L846.8,95.5 L845.3,96.3 L843.9,97.0 L842.4,97.8 L840.9,98.6 L839.4,99.4 L837.9,100.2 L836.4,101.0 L834.8,101.8 L833.3,102.6 L831.8,103.5 L830.2,104.3 L828.7,105.1 L827.2,106.0 L825.6,106.9 L824.0,107.7 L822.5,108.6 L820.9,109.5 L819.3,110.4 L817.8,111.3 L816.2,112.2 L814.6,113.1 L813.0,114.0 L811.4,114.9 L809.8,115.9 L808.2,116.8 L806.7,117.7 L805.1,118.7 L803.5,119.6 L801.8,120.6 L800.2,121.5 L798.6,122.5 L797.0,123.4 L795.4,124.4 L793.8,125.4 L792.2,126.3 L790.6,127.3 L789.0,128.3 L787.4,129.3 L785.8,130.3 L784.2,131.3 L782.5,132.3 L780.9,133.3 L779.3,134.3 L777.7,135.3 L776.1,136.3 L774.5,137.3 L772.9,138.3 L771.3,139.3 L769.7,140.3 L768.1,141.3 L766.5,142.4 L764.9,143.4 L763.3,144.4 L761.7,145.4 L760.1,146.5 L758.5,147.5 L756.9,148.5 L755.3,149.6 L753.7,150.6 L752.1,151.7 L750.6,152.7 L749.0,153.7 L747.4,154.8 L745.8,155.8 L744.3,156.9 L742.7,157.9 L741.2,159.0 L739.6,160.0 L738.0,161.1 L736.5,162.2 L735.0,163.2 L733.4,164.3 L731.9,165.3 L730.3,166.4 L728.8,167.5 L727.3,168.5 L725.8,169.6 L724.3,170.7 L722.7,171.7 L721.2,172.8 L719.7,173.9 L718.2,174.9 L716.8,176.0 L715.3,177.1 L713.8,178.2 L712.3,179.2 L710.8,180.3 L709.4,181.4 L707.9,182.5 L706.5,183.6 L705.0,184.6 L703.6,185.7 L702.1,186.8 L700.7,187.9 L699.3,189.0 L697.9,190.1 L696.5,191.1 L695.1,192.2 L693.7,193.3 L692.3,194.4 L690.9,195.5 L689.5,196.6 L688.1,197.7 L686.8,198.8 L685.4,199.9 L684.1,200.9 L682.7,202.0 L681.4,203.1 L680.0,204.2 L678.7,205.3 L677.4,206.4 L676.1,207.5 L674.8,208.6 L673.5,209.7 L672.2,210.8 L670.9,211.9 L669.7,213.0 L668.4,214.1 L667.1,215.2 L665.9,216.3 L664.6,217.4 L663.4,218.5 L662.2,219.6 L661.0,220.7 L659.8,221.8 L658.6,222.9 L657.4,224.0 L656.2,225.1 L655.0,226.2 L653.8,227.3 L652.7,228.4 L651.5,229.5 L650.4,230.6 L649.2,231.8 L648.1,232.9 L647.0,234.0 L645.9,235.1 L644.8,236.2 L643.7,237.3 L642.6,238.4 L641.6,239.5 L640.5,240.6 L639.4,241.7 L638.4,242.8 L637.4,243.9 L636.3,245.1 L635.3,246.2 L634.3,247.3 L633.3,248.4 L632.3,249.5 L631.3,250.6 L630.4,251.7 L629.4,252.8 L628.5,253.9 L627.5,255.1 L626.6,256.2 L625.7,257.3 L624.7,258.4 L623.8,259.5 L623.0,260.6 L622.1,261.7 L621.2,262.8 L620.3,264.0 L619.5,265.1 L618.6,266.2 L617.8,267.3" fill="none" stroke="#ffa500" stroke-width="1.6" stroke-dasharray="1.5 2.18"/>
<path d="M1121.2,107.6 L1121.1,107.2 L1121.1,106.7 L1121.1,106.3 L1121.1,105.9 L1121.1,105.6 L1121.2,105.2 L1121.3,104.8 L1121.5,104.5 L1121.7,104.2 L1121.9,103.8 L1122.2,103.5 L1122.5,103.3 L1122.8,103.0 L1123.2,102.7 L1123.7,102.5 L1124.1,102.3 L1124.6,102.1 L1125.2,101.9 L1125.8,101.7 L1126.4,101.5 L1127.1,101.4 L1127.8,101.2 L1128.6,101.1 M676.8,101.0 L678.2,100.9 L679.5,100.9 L680.8,100.8 L682.0,100.8 L683.2,100.7 L684.3,100.7 L685.4,100.7 L686.5,100.8 L687.5,100.8 L688.4,100.9 L689.3,101.0 L690.2,101.0 L691.0,101.2 L691.8,101.3 L692.5,101.4 L693.2,101.6 L693.9,101.7 L694.5,101.9 L695.1,102.1 L695.6,102.3 L696.1,102.6 L696.6,102.8 L697.0,103.1 L697.4,103.4 L697.7,103.7 L698.0,104.0 L698.3,104.3 L698.6,104.6 L698.8,105.0 L698.9,105.3 L699.1,105.7 L699.2,106.1 L699.3,106.5 L699.3,106.9 L699.4,107.3 L699.4,107.8 L699.3,108.2 L699.3,108.7 L699.2,109.2 L699.1,109.7 L698.9,110.1 L698.8,110.7 L698.6,111.2 L698.4,111.7 L698.1,112.3 L697.9,112.8 L697.6,113.4 L697.3,113.9 L697.0,114.5 L696.7,115.1 L696.3,115.7 L696.0,116.3 L695.6,117.0 L695.2,117.6 L694.8,118.2 L694.3,118.9 L693.9,119.5 L693.4,120.2 L693.0,120.9 L692.5,121.5 L692.0,122.2 L691.5,122.9 L690.9,123.6 L690.4,124.3 L689.9,125.0 L689.3,125.8 L688.7,126.5 L688.2,127.2 L687.6,128.0 L687.0,128.7 L686.4,129.5 L685.8,130.2 L685.2,131.0 L684.5,131.8 L683.9,132.6 L683.3,133.3 L682.6,134.1 L682.0,134.9 L681.3,135.7 L680.7,136.5 L680.0,137.3 L679.4,138.1 L678.7,139.0 L678.0,139.8 L677.3,140.6 L676.7,141.4 L676.0,142.3 L675.3,143.1 L674.6,144.0 L673.9,144.8 L673.2,145.7 L672.5,146.5 L671.8,147.4 L671.1,148.2 L670.4,149.1 L669.7,150.0 L669.0,150.9 L668.3,151.7 L667.6,152.6 L666.9,153.5 L666.2,154.4 L665.5,155.3 L664.8,156.2 L664.2,157.1 L663.5,158.0 L662.8,158.9 L662.1,159.8 L661.4,160.7 L660.7,161.6 L660.0,162.5 L659.3,163.4 L658.6,164.3 L658.0,165.2 L657.3,166.2 L656.6,167.1 L655.9,168.0 L655.3,169.0 L654.6,169.9 L653.9,170.8 L653.3,171.8 L652.6,172.7 L652.0,173.6 L651.3,174.6 L650.7,175.5 L650.0,176.5 L649.4,177.4 L648.8,178.4 L648.1,179.3 L647.5,180.3 L646.9,181.2 L646.3,182.2 L645.7,183.1 L645.1,184.1 L644.5,185.1 L643.9,186.0 L643.3,187.0 L642.7,187.9 L642.1,188.9 L641.5,189.9 L641.0,190.9 L640.4,191.8 L639.8,192.8 L639.3,193.8 L638.7,194.8 L638.2,195.7 L637.7,196.7 L637.1,197.7 L636.6,198.7 L636.1,199.6 L635.6,200.6 L635.1,201.6 L634.6,202.6 L634.1,203.6 L633.6,204.6 L633.1,205.6 L632.6,206.6 L632.2,207.5 L631.7,208.5 L631.3,209.5 L630.8,210.5 L630.4,211.5 L629.9,212.5 L629.5,213.5 L629.1,214.5 L628.7,215.5 L628.3,216.5 L627.9,217.5 L627.5,218.5 L627.1,219.5 L626.7,220.5 L626.4,221.5 L626.0,222.5 L625.6,223.5 L625.3,224.5 L624.9,225.5 L624.6,226.5 L624.3,227.6 L624.0,228.6 L623.7,229.6 L623.4,230.6 L623.1,231.6 L622.8,232.6 L622.5,233.6 L622.2,234.6 L622.0,235.6 L621.7,236.7 L621.5,237.7 L621.2,238.7 L621.0,239.7 L620.8,240.7 L620.5,241.7 L620.3,242.8 L620.1,243.8 L619.9,244.8 L619.8,245.8 L619.6,246.8 L619.4,247.8 L619.3,248.9 L619.1,249.9 L619.0,250.9 L618.8,251.9 L618.7,253.0 L618.6,254.0 L618.5,255.0 L618.4,256.0 L618.3,257.0 L618.2,258.1 L618.1,259.1 L618.0,260.1 L618.0,261.1 L617.9,262.2 L617.9,263.2 L617.9,264.2 L617.8,265.2 L617.8,266.3 L617.8,267.3" fill="none" stroke="#ffa500" stroke-width="1.6" stroke-dasharray="1.5 2.18"/>
<path d="M755.7,90.7 L754.9,91.2 L754.2,91.7 L753.4,92.2 L752.6,92.8 L751.8,93.3 L751.0,93.8 L750.2,94.3 L749.4,94.9 L748.6,95.4 L747.9,95.9 L747.1,96.5 L746.3,97.0 L745.5,97.5 L744.6,98.1 L743.8,98.6 L743.0,99.1 L742.2,99.7 L741.4,100.2 L740.6,100.8 L739.8,101.3 L739.0,101.8 L738.2,102.4 L737.3,102.9 L736.5,103.5 L735.7,104.0 L734.9,104.6 L734.1,105.1 L733.3,105.7 L732.4,106.2 L731.6,106.8 L730.8,107.4 L730.0,107.9 L729.1,108.5 L728.3,109.0 L727.5,109.6 L726.7,110.2 L725.8,110.7 L725.0,111.3 L724.2,111.8 L723.4,112.4 L722.6,113.0 L721.7,113.5 L720.9,114.1 L720.1,114.7 L719.3,115.2 L718.4,115.8 L717.6,116.4 L716.8,117.0 L716.0,117.5 L715.1,118.1 L714.3,118.7 L713.5,119.2 L712.7,119.8 L711.9,120.4 L711.0,121.0 L710.2,121.5 L709.4,122.1 L708.6,122.7 L707.8,123.3 L707.0,123.9 L706.1,124.4 L705.3,125.0 L704.5,125.6 L703.7,126.2 L702.9,126.8 L702.1,127.3 L701.3,127.9 L700.5,128.5 L699.7,129.1 L698.9,129.7 L698.1,130.2 L697.3,130.8 L696.5,131.4 L695.7,132.0 L694.9,132.6 L694.1,133.2 L693.3,133.8 L692.5,134.3 L691.7,134.9 L690.9,135.5 L690.1,136.1 L689.3,136.7 L688.5,137.3 L687.7,137.9 L686.9,138.5 L686.2,139.1 L685.4,139.7 L684.6,140.2 L683.8,140.8 L683.0,141.4 L682.3,142.0 L681.5,142.6 L680.7,143.2 L679.9,143.8 L679.2,144.4 L678.4,145.0 L677.6,145.6 L676.9,146.2 L676.1,146.8 L675.4,147.4 L674.6,148.0 L673.8,148.5 L673.1,149.1 L672.3,149.7 L671.6,150.3 L670.8,150.9 L670.1,151.5 L669.3,152.1 L668.6,152.7 L667.9,153.3 L667.1,153.9 L666.4,154.5 L665.6,155.1 L664.9,155.7 L664.2,156.3 L663.5,156.9 L662.7,157.5 L662.0,158.1 L661.3,158.7 L660.6,159.3 L659.8,159.9 L659.1,160.5 L658.4,161.1 L657.7,161.7 L657.0,162.3 L656.3,162.9 L655.6,163.5 L654.9,164.1 L654.2,164.7 L653.5,165.3 L652.8,165.9 L652.1,166.5 L651.4,167.1 L650.7,167.7 L650.0,168.3 L649.3,168.9 L648.7,169.5 L648.0,170.1 L647.3,170.7 L646.6,171.3 L646.0,172.0 L645.3,172.6 L644.6,173.2 L644.0,173.8 L643.3,174.4 L642.6,175.0 L642.0,175.6 L641.3,176.2 L640.7,176.8 L640.0,177.4 L639.4,178.0 L638.7,178.6 L638.1,179.2 L637.5,179.8 L636.8,180.4 L636.2,181.0 L635.6,181.6 L634.9,182.2 L634.3,182.8 L633.7,183.5 L633.1,184.1 L632.4,184.7 L631.8,185.3 L631.2,185.9 L630.6,186.5 L630.0,187.1 L629.4,187.7 L628.8,188.3 L628.2,188.9 L627.6,189.5 L627.0,190.1 L626.4,190.7 L625.8,191.4 L625.3,192.0 L624.7,192.6 L624.1,193.2 L623.5,193.8 L622.9,194.4 L622.4,195.0 L621.8,195.6 L621.2,196.2 L620.7,196.8 L620.1,197.4 L619.6,198.1 L619.0,198.7 L618.5,199.3 L617.9,199.9 L617.4,200.5 L616.8,201.1 L616.3,201.7 L615.8,202.3 L615.2,202.9 L614.7,203.5 L614.2,204.1 L613.6,204.8 L613.1,205.4 L612.6,206.0 L612.1,206.6 L611.6,207.2 L611.1,207.8 L610.6,208.4 L610.1,209.0 L609.6,209.6 L609.1,210.3 L608.6,210.9 L608.1,211.5 L607.6,212.1 L607.1,212.7 L606.6,213.3 L606.2,213.9 L605.7,214.5 L605.2,215.1 L604.7,215.8 L604.3,216.4 L603.8,217.0 L603.4,217.6 L602.9,218.2 L602.4,218.8 L602.0,219.4 L601.5,220.0 L601.1,220.7 L600.7,221.3 L600.2,221.9 L599.8,222.5 L599.4,223.1 L598.9,223.7 L598.5,224.3 L598.1,224.9 L597.7,225.6 L597.3,226.2 L596.9,226.8 L596.4,227.4 L596.0,228.0 L595.6,228.6 L595.2,229.2 L594.8,229.8 L594.5,230.5 L594.1,231.1 L593.7,231.7 L593.3,232.3" fill="none" stroke="#e020ff" stroke-width="1.6" stroke-dasharray="1.5 2.18"/>
<path d="M778.0,92.7 L777.2,93.3 L776.3,93.8 L775.5,94.4 L774.6,94.9 L773.8,95.5 L773.0,96.0 L772.1,96.6 L771.3,97.1 L770.5,97.7 L769.6,98.2 L768.8,98.8 L768.0,99.3 L767.1,99.9 L766.3,100.4 L765.5,101.0 L764.6,101.5 L763.8,102.1 L763.0,102.7 L762.2,103.2 L761.3,103.8 L760.5,104.3 L759.7,104.9 L758.8,105.4 L758.0,106.0 L757.2,106.6 L756.4,107.1 L755.6,107.7 L754.7,108.2 L753.9,108.8 L753.1,109.3 L752.3,109.9 L751.5,110.5 L750.7,111.0 L749.8,111.6 L749.0,112.1 L748.2,112.7 L747.4,113.3 L746.6,113.8 L745.8,114.4 L745.0,114.9 L744.2,115.5 L743.4,116.1 L742.6,116.6 L741.8,117.2 L741.0,117.7 L740.2,118.3 L739.4,118.9 L738.6,119.4 L737.8,120.0 L737.0,120.5 L736.2,121.1 L735.4,121.7 L734.6,122.2 L733.8,122.8 L733.0,123.3 L732.2,123.9 L731.5,124.5 L730.7,125.0 L729.9,125.6 L729.1,126.2 L728.3,126.7 L727.6,127.3 L726.8,127.8 L726.0,128.4 L725.2,129.0 L724.5,129.5 L723.7,130.1 L722.9,130.7 L722.1,131.2 L721.4,131.8 L720.6,132.3 L719.9,132.9 L719.1,133.5 L718.3,134.0 L717.6,134.6 L716.8,135.2 L716.1,135.7 L715.3,136.3 L714.6,136.9 L713.8,137.4 L713.1,138.0 L712.3,138.5 L711.6,139.1 L710.8,139.7 L710.1,140.2 L709.3,140.8 L708.6,141.4 L707.9,141.9 L707.1,142.5 L706.4,143.1 L705.7,143.6 L704.9,144.2 L704.2,144.8 L703.5,145.3 L702.7,145.9 L702.0,146.5 L701.3,147.0 L700.6,147.6 L699.9,148.2 L699.1,148.7 L698.4,149.3 L697.7,149.8 L697.0,150.4 L696.3,151.0 L695.6,151.5 L694.9,152.1 L694.2,152.7 L693.5,153.2 L692.8,153.8 L692.1,154.4 L691.4,154.9 L690.7,155.5 L690.0,156.1 L689.3,156.6 L688.6,157.2 L687.9,157.8 L687.2,158.3 L686.5,158.9 L685.9,159.5 L685.2,160.0 L684.5,160.6 L683.8,161.2 L683.2,161.7 L682.5,162.3 L681.8,162.9 L681.1,163.4 L680.5,164.0 L679.8,164.6 L679.2,165.1 L678.5,165.7 L677.8,166.3 L677.2,166.8 L676.5,167.4 L675.9,168.0 L675.2,168.5 L674.6,169.1 L673.9,169.7 L673.3,170.2 L672.6,170.8 L672.0,171.4 L671.4,171.9 L670.7,172.5 L670.1,173.1 L669.5,173.6 L668.8,174.2 L668.2,174.8 L667.6,175.3 L667.0,175.9 L666.3,176.5 L665.7,177.0 L665.1,177.6 L664.5,178.2 L663.9,178.7 L663.3,179.3 L662.7,179.9 L662.1,180.4 L661.5,181.0 L660.9,181.6 L660.3,182.2 L659.7,182.7 L659.1,183.3 L658.5,183.9 L657.9,184.4 L657.3,185.0 L656.7,185.6 L656.1,186.1 L655.5,186.7 L655.0,187.3 L654.4,187.8 L653.8,188.4 L653.2,189.0 L652.7,189.5 L652.1,190.1 L651.5,190.7 L651.0,191.2 L650.4,191.8 L649.9,192.4 L649.3,192.9 L648.8,193.5 L648.2,194.1 L647.7,194.6 L647.1,195.2 L646.6,195.8 L646.0,196.4 L645.5,196.9 L644.9,197.5 L644.4,198.1 L643.9,198.6 L643.4,199.2 L642.8,199.8 L642.3,200.3 L641.8,200.9 L641.3,201.5 L640.7,202.0 L640.2,202.6 L639.7,203.2 L639.2,203.7 L638.7,204.3 L638.2,204.9 L637.7,205.4 L637.2,206.0 L636.7,206.6 L636.2,207.2 L635.7,207.7 L635.2,208.3 L634.7,208.9 L634.2,209.4 L633.7,210.0 L633.3,210.6 L632.8,211.1 L632.3,211.7 L631.8,212.3 L631.4,212.8 L630.9,213.4 L630.4,214.0 L630.0,214.5 L629.5,215.1 L629.0,215.7 L628.6,216.3 L628.1,216.8 L627.7,217.4 L627.2,218.0 L626.8,218.5 L626.3,219.1 L625.9,219.7 L625.5,220.2 L625.0,220.8 L624.6,221.4 L624.2,221.9 L623.7,222.5 L623.3,223.1 L622.9,223.6 L622.5,224.2 L622.1,224.8 L621.6,225.4 L621.2,225.9 L620.8,226.5 L620.4,227.1 L620.0,227.6 L619.6,228.2" fill="none" stroke="#e020ff" stroke-width="1.6" stroke-dasharray="1.5 2.18"/>
<path d="M1223.3,149.0 L1223.4,148.6 L1223.4,148.3 L1223.5,147.9 L1223.6,147.6 L1223.7,147.2 L1223.9,146.9 L1224.0,146.5 L1224.2,146.2 L1224.3,145.9 L1224.5,145.6 L1224.7,145.3 L1224.9,145.0 L1225.1,144.7 L1225.4,144.4 L1225.6,144.1 L1225.9,143.8 L1226.1,143.5 L1226.4,143.3 L1226.7,143.0 L1227.1,142.8 L1227.4,142.5 L1227.7,142.3 L1228.1,142.1 L1228.5,141.8 L1228.9,141.6 L1229.3,141.4 L1229.7,141.2 L1230.2,141.0 L1230.7,140.8 L1231.1,140.6 L1231.6,140.4 L1232.2,140.3 L1232.7,140.1 L1233.2,140.0 L1233.8,139.8 L1234.4,139.7 M570.4,139.5 L571.7,139.4 L572.9,139.3 L574.2,139.2 L575.4,139.1 L576.6,139.0 L577.8,138.9 L579.0,138.8 L580.2,138.7 L581.3,138.6 L582.5,138.6 L583.6,138.5 L584.6,138.5 L585.7,138.4 L586.8,138.4 L587.8,138.4 L588.8,138.3 L589.8,138.3 L590.8,138.3 L591.7,138.3 L592.7,138.3 L593.6,138.4 L594.5,138.4 L595.4,138.4 L596.3,138.5 L597.1,138.5 L598.0,138.6 L598.8,138.6 L599.6,138.7 L600.3,138.8 L601.1,138.9 L601.9,138.9 L602.6,139.0 L603.3,139.1 L604.0,139.3 L604.7,139.4 L605.3,139.5 L606.0,139.6 L606.6,139.8 L607.2,139.9 L607.8,140.1 L608.4,140.3 L609.0,140.4 L609.5,140.6 L610.1,140.8 L610.6,141.0 L611.1,141.2 L611.6,141.4 L612.1,141.6 L612.5,141.8 L613.0,142.0 L613.4,142.3 L613.8,142.5 L614.2,142.7 L614.6,143.0 L615.0,143.3 L615.4,143.5 L615.7,143.8 L616.1,144.1 L616.4,144.4 L616.7,144.6 L617.0,144.9 L617.3,145.2 L617.6,145.5 L617.8,145.9 L618.1,146.2 L618.3,146.5 L618.6,146.8 L618.8,147.2 L619.0,147.5 L619.2,147.9 L619.4,148.2 L619.6,148.6 L619.7,149.0 L619.9,149.3 L620.0,149.7 L620.2,150.1 L620.3,150.5 L620.4,150.9 L620.5,151.3 L620.6,151.7 L620.7,152.1 L620.8,152.5 L620.9,152.9 L621.0,153.4 L621.0,153.8 L621.1,154.2 L621.1,154.7 L621.2,155.1 L621.2,155.6 L621.2,156.0 L621.2,156.5 L621.2,156.9 L621.2,157.4 L621.2,157.9 L621.2,158.4 L621.2,158.8 L621.2,159.3 L621.2,159.8 L621.1,160.3 L621.1,160.8 L621.1,161.3 L621.0,161.8 L621.0,162.3 L620.9,162.9 L620.8,163.4 L620.8,163.9 L620.7,164.4 L620.6,165.0 L620.5,165.5 L620.5,166.0 L620.4,166.6 L620.3,167.1 L620.2,167.7 L620.1,168.2 L620.0,168.8 L619.9,169.4 L619.8,169.9 L619.7,170.5 L619.6,171.1 L619.4,171.6 L619.3,172.2 L619.2,172.8 L619.1,173.4 L619.0,174.0 L618.8,174.6 L618.7,175.1 L618.6,175.7 L618.5,176.3 L618.3,176.9 L618.2,177.6 L618.1,178.2 L617.9,178.8 L617.8,179.4 L617.6,180.0 L617.5,180.6 L617.4,181.3 L617.2,181.9 L617.1,182.5 L617.0,183.1 L616.8,183.8 L616.7,184.4 L616.5,185.0 L616.4,185.7 L616.3,186.3 L616.1,187.0 L616.0,187.6 L615.8,188.3 L615.7,188.9 L615.6,189.6 L615.4,190.2 L615.3,190.9 L615.1,191.6 L615.0,192.2 L614.9,192.9 L614.7,193.6 L614.6,194.2 L614.5,194.9 L614.3,195.6 L614.2,196.3 L614.1,196.9 L614.0,197.6 L613.8,198.3 L613.7,199.0 L613.6,199.7 L613.5,200.4 L613.4,201.1 L613.2,201.7 L613.1,202.4 L613.0,203.1 L612.9,203.8 L612.8,204.5 L612.7,205.2 L612.6,205.9 L612.5,206.6 L612.4,207.3 L612.3,208.1 L612.2,208.8 L612.1,209.5 L612.0,210.2 L611.9,210.9 L611.8,211.6 L611.8,212.3 L611.7,213.1 L611.6,213.8 L611.5,214.5 L611.5,215.2 L611.4,215.9 L611.3,216.7 L611.3,217.4 L611.2,218.1 L611.2,218.9 L611.1,219.6 L611.1,220.3 L611.0,221.0 L611.0,221.8 L611.0,222.5 L610.9,223.3 L610.9,224.0 L610.9,224.7 L610.8,225.5 L610.8,226.2 L610.8,227.0 L610.8,227.7" fill="none" stroke="#e020ff" stroke-width="1.6" stroke-dasharray="1.5 2.18"/>
<path d="M470.2,197.5 L470.3,197.5 L470.5,197.5 L470.6,197.5 L470.8,197.5 L470.9,197.5 L471.1,197.5 L471.2,197.4 L471.3,197.4 L471.5,197.4 L471.6,197.4 L471.8,197.4 L471.9,197.4 L472.1,197.4 L472.2,197.4 L472.3,197.4 L472.5,197.4 L472.6,197.4 L472.8,197.4 L472.9,197.4 L473.1,197.3 L473.2,197.3 L473.3,197.3 L473.5,197.3 L473.6,197.3 L473.8,197.3 L473.9,197.3 L474.0,197.3 L474.2,197.3 L474.3,197.3 L474.5,197.3 L474.6,197.3 L474.7,197.3 L474.9,197.3 L475.0,197.3 L475.2,197.3 L475.3,197.2 L475.4,197.2 L475.6,197.2 L475.7,197.2 L475.9,197.2 L476.0,197.2 L476.1,197.2 L476.3,197.2 L476.4,197.2 L476.6,197.2 L476.7,197.2 L476.8,197.2 L477.0,197.2 L477.1,197.2 L477.3,197.2 L477.4,197.2 L477.5,197.2 L477.7,197.2 L477.8,197.2 L477.9,197.1 L478.1,197.1 L478.2,197.1 L478.4,197.1 L478.5,197.1 L478.6,197.1 L478.8,197.1 L478.9,197.1 L479.0,197.1 L479.2,197.1 L479.3,197.1 L479.4,197.1 L479.6,197.1 L479.7,197.1 L479.9,197.1 L480.0,197.1 L480.1,197.1 L480.3,197.1 L480.4,197.1 L480.5,197.1 L480.7,197.1 L480.8,197.1 L480.9,197.1 L481.1,197.1 L481.2,197.1 L481.3,197.1 L481.5,197.1 L481.6,197.0 L481.7,197.0 L481.9,197.0 L482.0,197.0 L482.1,197.0 L482.3,197.0 L482.4,197.0 L482.5,197.0 L482.7,197.0 L482.8,197.0 L482.9,197.0 L483.1,197.0 L483.2,197.0 L483.3,197.0 L483.5,197.0 L483.6,197.0 L483.7,197.0 L483.9,197.0 L484.0,197.0 L484.1,197.0 L484.3,197.0 L484.4,197.0 L484.5,197.0 L484.7,197.0 L484.8,197.0 L484.9,197.0 L485.1,197.0 L485.2,197.0 L485.3,197.0 L485.4,197.0 L485.6,197.0 L485.7,197.0 L485.8,197.0 L486.0,197.0 L486.1,197.0 L486.2,197.0 L486.4,197.0 L486.5,197.0 L486.6,197.0 L486.7,197.0 L486.9,197.0 L487.0,197.0 L487.1,197.0 L487.3,197.0 L487.4,197.0 L487.5,197.0 L487.6,197.0 L487.8,197.0 L487.9,197.0 L488.0,197.0 L488.2,197.0 L488.3,197.0 L488.4,197.0 L488.5,197.0 L488.7,197.0 L488.8,197.0 L488.9,197.0 L489.1,197.0 L489.2,197.0 L489.3,197.0 L489.4,197.0 L489.6,197.0 L489.7,197.0 L489.8,197.0 L489.9,197.0 L490.1,197.0 L490.2,197.0 L490.3,197.0 L490.4,197.0 L490.6,197.0 L490.7,197.0 L490.8,197.0 L490.9,197.0 L491.1,197.0 L491.2,197.0 L491.3,197.0 L491.4,197.0 L491.6,197.1 L491.7,197.1 L491.8,197.1 L491.9,197.1 L492.1,197.1 L492.2,197.1 L492.3,197.1 L492.4,197.1 L492.6,197.1 L492.7,197.1 L492.8,197.1 L492.9,197.1 L493.1,197.1 L493.2,197.1 L493.3,197.1 L493.4,197.1 L493.6,197.1 L493.7,197.1 L493.8,197.1 L493.9,197.1 L494.0,197.1 L494.2,197.1 L494.3,197.1 L494.4,197.1 L494.5,197.1 L494.7,197.1 L494.8,197.1 L494.9,197.2 L495.0,197.2 L495.1,197.2 L495.3,197.2 L495.4,197.2 L495.5,197.2 L495.6,197.2 L495.7,197.2 L495.9,197.2 L496.0,197.2 L496.1,197.2 L496.2,197.2 L496.4,197.2 L496.5,197.2 L496.6,197.2 L496.7,197.2 L496.8,197.2 L497.0,197.2 L497.1,197.2 L497.2,197.3 L497.3,197.3 L497.4,197.3 L497.5,197.3 L497.7,197.3 L497.8,197.3 L497.9,197.3 L498.0,197.3 L498.1,197.3 L498.3,197.3 L498.4,197.3 L498.5,197.3 L498.6,197.3 L498.7,197.3 L498.9,197.3 L499.0,197.3 L499.1,197.4 L499.2,197.4 L499.3,197.4 L499.4,197.4 L499.6,197.4 L499.7,197.4 L499.8,197.4 L499.9,197.4 L500.0,197.4 L500.1,197.4 L500.3,197.4 L500.4,197.4 L500.5,197.4 L500.6,197.5 L500.7,197.5 L500.8,197.5 L501.0,197.5 L501.1,197.5 L501.2,197.5 L501.3,197.5" fill="none" stroke="#55d400" stroke-width="1.6" stroke-dasharray="1.5 2.18"/>
<path d="M893.4,68.9 L893.1,68.2 L892.8,67.5 L892.5,66.7 L892.2,66.0 L891.9,65.3 L891.6,64.6 L891.2,64.0 L890.9,63.3 L890.6,62.6 L890.3,61.9 L890.0,61.3 L889.7,60.6 L889.3,60.0 L889.0,59.4 L888.7,58.7 L888.3,58.1 L888.0,57.5 L887.6,57.0 L887.3,56.4 L886.9,55.8 L886.5,55.3 L886.2,54.8 L885.8,54.2 L885.4,53.8 L885.0,53.3 L884.5,52.8 L884.1,52.4 L883.6,52.0 L883.2,51.6 L882.7,51.2 L882.2,50.9 L881.7,50.6 L881.1,50.3 L880.5,50.0 L879.9,49.8 L879.3,49.6 L878.6,49.4 L877.9,49.3 L877.2,49.2 L876.4,49.1 L875.6,49.1 L874.8,49.1 L873.9,49.1 L873.0,49.1 L872.0,49.2 L871.0,49.3 L869.9,49.5 L868.8,49.7 L867.7,49.9 L866.5,50.1 L865.3,50.4 L864.0,50.7 L862.7,51.1 L861.3,51.4 L859.9,51.8 L858.5,52.2 L857.0,52.6 L855.5,53.0 L853.9,53.5 L852.3,54.0 L850.7,54.5 L849.1,55.0 L847.4,55.6 L845.7,56.1 L843.9,56.7 L842.2,57.2 L840.4,57.8 L838.6,58.4 L836.8,59.0 L834.9,59.7 L833.0,60.3 L831.1,61.0 L829.2,61.6 L827.3,62.3 L825.4,62.9 L823.4,63.6 L821.4,64.3 L819.5,65.0 L817.5,65.7 L815.5,66.4 L813.4,67.1 L811.4,67.8 L809.4,68.5 L807.3,69.3 L805.3,70.0 L803.2,70.7 L801.1,71.5 L799.0,72.2 L796.9,73.0 L794.9,73.7 L792.7,74.5 L790.6,75.2 L788.5,76.0 L786.4,76.7 L784.3,77.5 L782.2,78.3 L780.0,79.0 L777.9,79.8 L775.8,80.6 L773.6,81.4 L771.5,82.2 L769.3,82.9 L767.2,83.7 L765.0,84.5 L762.9,85.3 L760.7,86.1 L758.6,86.9 L756.4,87.7 L754.3,88.5 L752.1,89.3 L749.9,90.1 L747.8,90.9 L745.6,91.7 L743.5,92.5 L741.3,93.3 L739.1,94.1 L737.0,94.9 L734.8,95.7 L732.7,96.5 L730.5,97.3 L728.4,98.1 L726.2,98.9 L724.1,99.7 L721.9,100.6 L719.7,101.4 L717.6,102.2 L715.4,103.0 L713.3,103.8 L711.2,104.6 L709.0,105.4 L706.9,106.3 L704.7,107.1 L702.6,107.9 L700.5,108.7 L698.3,109.5 L696.2,110.4 L694.1,111.2 L692.0,112.0 L689.8,112.8 L687.7,113.7 L685.6,114.5 L683.5,115.3 L681.4,116.1 L679.3,117.0 L677.2,117.8 L675.1,118.6 L673.0,119.5 L670.9,120.3 L668.8,121.1 L666.7,121.9 L664.6,122.8 L662.5,123.6 L660.5,124.4 L658.4,125.3 L656.3,126.1 L654.3,126.9 L652.2,127.8 L650.2,128.6 L648.1,129.4 L646.1,130.2 L644.0,131.1 L642.0,131.9 L640.0,132.7 L637.9,133.6 L635.9,134.4 L633.9,135.3 L631.9,136.1 L629.9,136.9 L627.9,137.8 L625.9,138.6 L623.9,139.4 L621.9,140.3 L619.9,141.1 L617.9,141.9 L616.0,142.8 L614.0,143.6 L612.0,144.5 L610.1,145.3 L608.1,146.1 L606.2,147.0 L604.2,147.8 L602.3,148.6 L600.4,149.5 L598.5,150.3 L596.5,151.2 L594.6,152.0 L592.7,152.8 L590.8,153.7 L588.9,154.5 L587.0,155.4 L585.2,156.2 L583.3,157.0 L581.4,157.9 L579.5,158.7 L577.7,159.6 L575.8,160.4 L574.0,161.2 L572.2,162.1 L570.3,162.9 L568.5,163.8 L566.7,164.6 L564.9,165.4 L563.1,166.3 L561.3,167.1 L559.5,168.0 L557.7,168.8 L555.9,169.7 L554.1,170.5 L552.4,171.3 L550.6,172.2 L548.9,173.0 L547.1,173.9 L545.4,174.7 L543.7,175.6 L541.9,176.4 L540.2,177.2 L538.5,178.1 L536.8,178.9 L535.1,179.8 L533.4,180.6 L531.7,181.5 L530.1,182.3 L528.4,183.1 L526.8,184.0 L525.1,184.8 L523.5,185.7 L521.8,186.5 L520.2,187.4 L518.6,188.2 L517.0,189.1 L515.4,189.9 L513.8,190.7 L512.2,191.6 L510.6,192.4 L509.0,193.3 L507.5,194.1 L505.9,195.0 L504.4,195.8 L502.8,196.7 L501.3,197.5" fill="none" stroke="#55d400" stroke-width="1.6" stroke-dasharray="1.5 2.18"/>
<path d="M781.0,100.7 L781.2,101.1 L781.5,101.5 L781.7,101.9 L781.9,102.3 L782.1,102.7 L782.3,103.1 L782.5,103.5 L782.6,103.9 L782.8,104.4 L782.9,104.8 L783.1,105.3 L783.2,105.8 L783.3,106.2 L783.4,106.7 L783.5,107.2 L783.6,107.7 L783.7,108.2 L783.7,108.7 L783.8,109.2 L783.9,109.7 L783.9,110.2 L783.9,110.8 L784.0,111.3 L784.0,111.9 L784.0,112.4 L784.0,113.0 L784.0,113.5 L784.0,114.1 L784.0,114.7 L784.0,115.2 L784.0,115.8 L784.0,116.4 L783.9,117.0 L783.9,117.6 L783.9,118.2 L783.8,118.8 L783.8,119.4 L783.7,120.0 L783.7,120.7 L783.6,121.3 L783.6,121.9 L783.5,122.5 L783.4,123.2 L783.4,123.8 L783.3,124.5 L783.2,125.1 L783.2,125.8 L783.1,126.4 L783.0,127.1 L782.9,127.8 L782.8,128.4 L782.7,129.1 L782.6,129.8 L782.5,130.4 L782.5,131.1 L782.4,131.8 L782.3,132.5 L782.2,133.2 L782.1,133.9 L782.0,134.6 L781.9,135.3 L781.7,136.0 L781.6,136.7 L781.5,137.4 L781.4,138.1 L781.3,138.8 L781.2,139.5 L781.1,140.2 L781.0,141.0 L780.9,141.7 L780.8,142.4 L780.7,143.1 L780.6,143.9 L780.4,144.6 L780.3,145.3 L780.2,146.1 L780.1,146.8 L780.0,147.5 L779.9,148.3 L779.8,149.0 L779.7,149.8 L779.6,150.5 L779.5,151.3 L779.3,152.0 L779.2,152.8 L779.1,153.5 L779.0,154.3 L778.9,155.0 L778.8,155.8 L778.7,156.6 L778.6,157.3 L778.5,158.1 L778.4,158.8 L778.3,159.6 L778.2,160.4 L778.1,161.2 L778.0,161.9 L777.9,162.7 L777.8,163.5 L777.7,164.3 L777.6,165.0 L777.5,165.8 L777.4,166.6 L777.3,167.4 L777.2,168.2 L777.2,168.9 L777.1,169.7 L777.0,170.5 L776.9,171.3 L776.8,172.1 L776.7,172.9 L776.7,173.7 L776.6,174.5 L776.5,175.2 L776.4,176.0 L776.4,176.8 L776.3,177.6 L776.2,178.4 L776.1,179.2 L776.1,180.0 L776.0,180.8 L776.0,181.6 L775.9,182.4 L775.8,183.2 L775.8,184.0 L775.7,184.8 L775.7,185.6 L775.6,186.5 L775.6,187.3 L775.5,188.1 L775.5,188.9 L775.4,189.7 L775.4,190.5 L775.3,191.3 L775.3,192.1 L775.3,192.9 L775.2,193.8 L775.2,194.6 L775.2,195.4 L775.1,196.2 L775.1,197.0 L775.1,197.8 L775.1,198.6 L775.0,199.5 L775.0,200.3 L775.0,201.1 L775.0,201.9 L775.0,202.7 L775.0,203.6 L775.0,204.4 L775.0,205.2 L775.0,206.0 L775.0,206.9 L775.0,207.7 L775.0,208.5 L775.0,209.3 L775.0,210.2 L775.0,211.0 L775.0,211.8 L775.0,212.6 L775.0,213.5 L775.0,214.3 L775.1,215.1 L775.1,216.0 L775.1,216.8 L775.2,217.6 L775.2,218.5 L775.2,219.3 L775.3,220.1 L775.3,220.9 L775.3,221.8 L775.4,222.6 L775.4,223.4 L775.5,224.3 L775.5,225.1 L775.6,226.0 L775.6,226.8 L775.7,227.6 L775.7,228.5 L775.8,229.3 L775.9,230.1 L775.9,231.0 L776.0,231.8 L776.1,232.6 L776.1,233.5 L776.2,234.3 L776.3,235.2 L776.4,236.0 L776.5,236.8 L776.5,237.7 L776.6,238.5 L776.7,239.4 L776.8,240.2 L776.9,241.0 L777.0,241.9 L777.1,242.7 L777.2,243.6 L777.3,244.4 L777.4,245.3 L777.5,246.1 L777.7,246.9 L777.8,247.8 L777.9,248.6 L778.0,249.5 L778.1,250.3 L778.3,251.2 L778.4,252.0 L778.5,252.9 L778.7,253.7 L778.8,254.5 L778.9,255.4 L779.1,256.2 L779.2,257.1 L779.4,257.9 L779.5,258.8 L779.7,259.6 L779.8,260.5 L780.0,261.3 L780.1,262.2 L780.3,263.0 L780.4,263.9 L780.6,264.7 L780.8,265.6 L780.9,266.4 L781.1,267.3 L781.3,268.1 L781.5,268.9 L781.6,269.8 L781.8,270.6 L782.0,271.5 L782.2,272.3 L782.4,273.2 L782.6,274.0 L782.8,274.9 L783.0,275.7 L783.2,276.6 L783.4,277.4 L783.6,278.3 L783.8,279.1 L784.0,280.0" fill="none" stroke="#ff2200" stroke-width="1.6" stroke-dasharray="1.5 2.18"/>
<path d="M477.2,197.7 L479.3,196.5 L481.6,195.2 L483.9,193.9 L486.3,192.7 L488.7,191.4 L491.3,190.1 L493.9,188.9 L496.5,187.7 L499.2,186.5 L501.9,185.3 L504.6,184.2 L507.4,183.0 L510.1,182.0 L512.8,180.9 L515.6,179.9 L518.3,179.0 L520.9,178.1 L523.5,177.2 L526.0,176.5 L528.5,175.7 L530.9,175.0 L533.2,174.4 L535.4,173.9 L537.6,173.4 L539.6,173.0 L541.4,172.7 L543.2,172.4 L544.8,172.2 L546.3,172.1 L547.7,172.1 L548.9,172.1 L549.9,172.2 L550.8,172.4 L551.6,172.7 L552.2,173.0 L552.6,173.4 L552.9,173.9 L553.1,174.4 L553.1,175.0 L552.9,175.7 L552.6,176.5 L552.2,177.2 L551.6,178.1 L550.9,179.0 L550.1,179.9 L549.1,180.9 L548.1,182.0 L546.9,183.0 L545.6,184.2 L544.2,185.3 L542.7,186.5 L541.2,187.7 L539.5,188.9 L537.8,190.1 L536.0,191.4 L534.1,192.7 L532.2,193.9 L530.2,195.2 L528.2,196.5 L526.1,197.7 L524.0,199.0 L521.8,200.3 L519.7,201.5 L517.5,202.7 L515.3,203.9 L513.0,205.1 L510.8,206.3 L508.5,207.4 L506.3,208.5 L504.1,209.6 L501.9,210.6 L499.6,211.6 L497.4,212.5 L495.3,213.5 L493.1,214.3 L491.0,215.1 L488.9,215.9 L486.9,216.6 L484.9,217.3 L482.9,217.9 L481.0,218.5 L479.1,219.0 L477.3,219.4 L475.6,219.8 L473.9,220.2 L472.3,220.4 L470.8,220.6 L469.3,220.8 L467.9,220.9 L466.6,220.9 L465.3,220.9 L464.2,220.8 L463.1,220.6 L462.2,220.4 L461.3,220.2 L460.5,219.8 L459.9,219.4 L459.3,219.0 L458.9,218.5 L458.6,217.9 L458.3,217.3 L458.2,216.6 L458.2,215.9 L458.4,215.1 L458.6,214.3 L459.0,213.5 L459.5,212.5 L460.1,211.6 L460.9,210.6 L461.8,209.6 L462.8,208.5 L463.9,207.4 L465.2,206.3 L466.5,205.1 L468.0,203.9 L469.6,202.7 L471.4,201.5 L473.2,200.3 L475.1,199.0 L477.2,197.7" fill="none" stroke="#55d400" stroke-width="2.08"/>
<path d="M582.5,229.9 L583.6,228.7 L584.7,227.4 L586.0,226.1 L587.3,224.9 L588.7,223.6 L590.2,222.4 L591.7,221.1 L593.3,219.9 L595.0,218.7 L596.7,217.6 L598.4,216.5 L600.1,215.4 L601.9,214.3 L603.8,213.3 L605.6,212.3 L607.4,211.4 L609.3,210.5 L611.1,209.7 L612.9,208.9 L614.7,208.2 L616.5,207.5 L618.3,207.0 L620.0,206.4 L621.6,206.0 L623.3,205.6 L624.8,205.3 L626.4,205.0 L627.8,204.8 L629.2,204.7 L630.5,204.7 L631.7,204.7 L632.9,204.8 L634.0,205.0 L635.0,205.3 L635.9,205.6 L636.7,206.0 L637.4,206.4 L638.1,207.0 L638.6,207.5 L639.1,208.2 L639.5,208.9 L639.7,209.7 L639.9,210.5 L640.1,211.4 L640.1,212.3 L640.0,213.3 L639.9,214.3 L639.6,215.4 L639.3,216.5 L638.9,217.6 L638.5,218.7 L637.9,219.9 L637.3,221.1 L636.7,222.4 L635.9,223.6 L635.1,224.9 L634.3,226.1 L633.3,227.4 L632.4,228.7 L631.3,229.9 L630.2,231.2 L629.1,232.5 L627.9,233.7 L626.7,235.0 L625.5,236.2 L624.2,237.4 L622.9,238.5 L621.5,239.7 L620.1,240.8 L618.7,241.9 L617.3,242.9 L615.8,244.0 L614.4,244.9 L612.9,245.9 L611.4,246.7 L609.9,247.6 L608.4,248.4 L606.9,249.1 L605.4,249.8 L603.9,250.4 L602.4,251.0 L600.9,251.5 L599.4,252.0 L598.0,252.4 L596.5,252.7 L595.1,253.0 L593.7,253.2 L592.4,253.4 L591.0,253.5 L589.7,253.5 L588.5,253.5 L587.3,253.4 L586.1,253.2 L585.0,253.0 L583.9,252.7 L582.9,252.4 L582.0,252.0 L581.1,251.5 L580.3,251.0 L579.5,250.4 L578.9,249.8 L578.3,249.1 L577.7,248.4 L577.3,247.6 L576.9,246.7 L576.7,245.9 L576.5,244.9 L576.4,244.0 L576.4,242.9 L576.5,241.9 L576.6,240.8 L576.9,239.7 L577.3,238.5 L577.7,237.4 L578.3,236.2 L579.0,235.0 L579.7,233.7 L580.5,232.5 L581.5,231.2 L582.5,229.9" fill="none" stroke="#e020ff" stroke-width="2.08"/>
<path d="M584.0,269.8 L584.6,268.6 L585.3,267.3 L586.0,266.0 L586.8,264.8 L587.7,263.5 L588.7,262.3 L589.8,261.1 L590.9,259.9 L592.0,258.7 L593.2,257.6 L594.5,256.5 L595.8,255.4 L597.2,254.3 L598.6,253.3 L600.0,252.4 L601.5,251.5 L602.9,250.6 L604.4,249.8 L605.9,249.1 L607.5,248.4 L609.0,247.8 L610.5,247.2 L612.0,246.7 L613.5,246.2 L614.9,245.9 L616.4,245.5 L617.8,245.3 L619.1,245.1 L620.5,245.0 L621.8,245.0 L623.0,245.0 L624.2,245.1 L625.4,245.3 L626.5,245.5 L627.5,245.9 L628.5,246.2 L629.4,246.7 L630.3,247.2 L631.1,247.8 L631.8,248.4 L632.5,249.1 L633.1,249.8 L633.6,250.6 L634.1,251.5 L634.5,252.4 L634.8,253.3 L635.1,254.3 L635.3,255.4 L635.4,256.5 L635.5,257.6 L635.5,258.7 L635.5,259.9 L635.3,261.1 L635.1,262.3 L634.9,263.5 L634.6,264.8 L634.2,266.0 L633.8,267.3 L633.4,268.6 L632.8,269.8 L632.2,271.1 L631.6,272.4 L630.9,273.6 L630.2,274.9 L629.4,276.1 L628.6,277.3 L627.7,278.5 L626.8,279.7 L625.9,280.8 L624.9,281.9 L623.9,283.0 L622.8,284.0 L621.8,285.0 L620.6,285.9 L619.5,286.9 L618.3,287.7 L617.1,288.5 L615.9,289.3 L614.7,290.0 L613.4,290.6 L612.1,291.2 L610.8,291.8 L609.6,292.2 L608.2,292.7 L606.9,293.0 L605.6,293.3 L604.3,293.5 L603.0,293.7 L601.7,293.8 L600.5,293.8 L599.2,293.8 L597.9,293.7 L596.7,293.5 L595.5,293.3 L594.3,293.0 L593.2,292.7 L592.1,292.2 L591.0,291.8 L590.0,291.2 L589.0,290.6 L588.1,290.0 L587.3,289.3 L586.4,288.5 L585.7,287.7 L585.0,286.9 L584.4,285.9 L583.9,285.0 L583.4,284.0 L583.0,283.0 L582.7,281.9 L582.4,280.8 L582.3,279.7 L582.2,278.5 L582.2,277.3 L582.3,276.1 L582.4,274.9 L582.7,273.6 L583.0,272.4 L583.5,271.1 L584.0,269.8" fill="none" stroke="#ffa500" stroke-width="2.08"/>
<path d="M749.7,283.3 L750.0,282.0 L750.2,280.8 L750.6,279.5 L751.0,278.2 L751.5,277.0 L752.1,275.8 L752.7,274.6 L753.4,273.4 L754.2,272.2 L755.0,271.1 L755.8,270.0 L756.8,268.9 L757.8,267.9 L758.8,266.9 L759.8,265.9 L761.0,265.0 L762.1,264.2 L763.3,263.4 L764.5,262.6 L765.7,262.0 L767.0,261.3 L768.3,260.8 L769.5,260.3 L770.8,259.8 L772.2,259.4 L773.5,259.1 L774.8,258.9 L776.1,258.7 L777.4,258.6 L778.7,258.6 L779.9,258.6 L781.2,258.7 L782.4,258.9 L783.6,259.1 L784.8,259.4 L785.9,259.8 L787.0,260.3 L788.1,260.8 L789.1,261.3 L790.1,262.0 L791.0,262.6 L791.9,263.4 L792.8,264.2 L793.6,265.0 L794.3,265.9 L795.0,266.9 L795.7,267.9 L796.2,268.9 L796.8,270.0 L797.2,271.1 L797.6,272.2 L798.0,273.4 L798.3,274.6 L798.5,275.8 L798.7,277.0 L798.8,278.2 L798.8,279.5 L798.8,280.8 L798.7,282.0 L798.6,283.3 L798.4,284.6 L798.1,285.9 L797.8,287.1 L797.4,288.4 L796.9,289.6 L796.4,290.8 L795.9,292.0 L795.3,293.2 L794.6,294.3 L793.9,295.4 L793.1,296.5 L792.3,297.5 L791.5,298.5 L790.5,299.5 L789.6,300.4 L788.6,301.3 L787.6,302.1 L786.5,302.8 L785.4,303.6 L784.3,304.2 L783.1,304.8 L781.9,305.3 L780.7,305.8 L779.5,306.2 L778.3,306.6 L777.0,306.9 L775.8,307.1 L774.5,307.3 L773.2,307.4 L771.9,307.4 L770.7,307.4 L769.4,307.3 L768.1,307.1 L766.9,306.9 L765.7,306.6 L764.5,306.2 L763.3,305.8 L762.1,305.3 L761.0,304.8 L759.9,304.2 L758.9,303.6 L757.9,302.8 L756.9,302.1 L756.0,301.3 L755.1,300.4 L754.3,299.5 L753.6,298.5 L752.9,297.5 L752.2,296.5 L751.6,295.4 L751.1,294.3 L750.7,293.2 L750.3,292.0 L750.0,290.8 L749.8,289.6 L749.6,288.4 L749.6,287.1 L749.5,285.9 L749.6,284.6 L749.7,283.3" fill="none" stroke="#ff2200" stroke-width="2.08"/>
<path d="M567.8,158.3 L567.5,158.2 L567.2,158.2 L566.9,158.1 L566.6,158.0 L566.2,157.9 L565.9,157.9 L565.6,157.8 L565.3,157.8 L565.0,157.7 L564.6,157.6 L564.3,157.6 L564.0,157.5 L563.6,157.5 L563.3,157.4 L562.9,157.3 L562.6,157.3 L562.2,157.2 L561.9,157.2 L561.5,157.1 L561.2,157.1 L560.8,157.1 L560.4,157.0 L560.1,157.0 L559.7,156.9 L559.3,156.9 L558.9,156.8 L558.6,156.8 L558.2,156.8 L557.8,156.7 L557.4,156.7" fill="none" stroke="#ffa500" stroke-width="1.7"/>
<path d="M534.1,184.9 L533.8,184.8 L533.5,184.7 L533.2,184.6 L532.9,184.6 L532.6,184.5 L532.4,184.4 L532.1,184.3 L531.8,184.2 L531.5,184.2 L531.2,184.1 L530.9,184.0 L530.6,183.9 L530.2,183.8 L529.9,183.8 L529.6,183.7 L529.3,183.6 L529.0,183.5 L528.7,183.5 L528.4,183.4 L528.1,183.3 L527.7,183.3 L527.4,183.2 L527.1,183.1 L526.8,183.1 L526.5,183.0 L526.1,182.9 L525.8,182.9 L525.5,182.8 L525.1,182.8 L524.8,182.7" fill="none" stroke="#ffa500" stroke-width="1.7"/>
<path d="M590.1,198.9 L590.1,198.7 L590.0,198.5 L590.0,198.3 L589.9,198.1 L589.9,197.9 L589.9,197.7 L589.8,197.4 L589.8,197.2 L589.8,197.0 L589.7,196.8 L589.7,196.6 L589.6,196.4 L589.6,196.2 L589.6,196.0 L589.5,195.8 L589.5,195.6 L589.4,195.4 L589.4,195.2 L589.4,195.0 L589.3,194.8 L589.3,194.6 L589.2,194.4 L589.2,194.2 L589.2,194.0 L589.1,193.8 L589.1,193.6 L589.0,193.4 L589.0,193.2 L588.9,193.0 L588.9,192.8" fill="none" stroke="#ffa500" stroke-width="1.7"/>
<path d="M706.3,120.0 L706.7,119.6 L707.2,119.2 L707.6,118.7 L708.0,118.3 L708.4,117.9 L708.8,117.5 L709.3,117.1 L709.7,116.6 L710.1,116.2 L710.5,115.8 L710.9,115.4 L711.3,115.0 L711.7,114.6 L712.1,114.2 L712.5,113.8 L712.9,113.4 L713.3,113.0 L713.6,112.6 L714.0,112.2 L714.4,111.8 L714.8,111.4 L715.2,111.0 L715.5,110.6 L715.9,110.3 L716.3,109.9 L716.6,109.5 L717.0,109.1 L717.3,108.7 L717.7,108.4 L718.0,108.0" fill="none" stroke="#ffa500" stroke-width="1.7"/>
<path d="M939.9,93.3 L940.2,93.4 L940.5,93.6 L940.8,93.7 L941.1,93.9 L941.4,94.0 L941.7,94.2 L942.0,94.3 L942.3,94.5 L942.6,94.6 L942.9,94.8 L943.2,94.9 L943.5,95.1 L943.8,95.2 L944.1,95.4 L944.4,95.5 L944.7,95.7 L945.0,95.8 L945.3,96.0 L945.6,96.1 L945.9,96.3 L946.2,96.5 L946.5,96.6 L946.8,96.8 L947.2,96.9 L947.5,97.1 L947.8,97.3 L948.1,97.4 L948.4,97.6 L948.7,97.7 L949.0,97.9" fill="none" stroke="#ffa500" stroke-width="1.7"/>
<path d="M1121.2,107.6 L1121.2,107.6 L1121.2,107.7 L1121.2,107.7 L1121.2,107.8 L1121.1,107.8 L1121.1,107.9 L1121.1,107.9 L1121.1,108.0 L1121.1,108.0 L1121.1,108.0 L1121.1,108.1 L1121.1,108.1 L1121.1,108.2 L1121.1,108.2 L1121.1,108.3 L1121.0,108.3 L1121.0,108.4 L1121.0,108.4 L1121.0,108.5 L1121.0,108.5 L1121.0,108.6 L1121.0,108.6 L1121.0,108.7 L1121.0,108.7 L1121.0,108.8 L1121.0,108.8 L1121.0,108.9 L1121.0,108.9 L1121.0,109.0 L1121.0,109.0" fill="none" stroke="#ffa500" stroke-width="1.7"/>
<path d="M755.7,90.7 L756.0,90.5 L756.4,90.2 L756.7,90.0 L757.0,89.8 L757.3,89.5 L757.6,89.3 L758.0,89.1 L758.3,88.9 L758.6,88.6 L758.9,88.4 L759.2,88.2 L759.5,88.0 L759.9,87.7 L760.2,87.5 L760.5,87.3 L760.8,87.1 L761.1,86.8 L761.4,86.6 L761.7,86.4 L762.0,86.2 L762.3,86.0 L762.6,85.7 L762.9,85.5 L763.2,85.3 L763.5,85.1 L763.8,84.9 L764.1,84.6 L764.4,84.4 L764.7,84.2 L765.0,84.0" fill="none" stroke="#e020ff" stroke-width="1.7"/>
<path d="M778.0,92.7 L778.5,92.4 L779.0,92.0 L779.5,91.7 L780.0,91.4 L780.5,91.1 L781.0,90.7 L781.5,90.4 L782.0,90.1 L782.5,89.8 L783.0,89.5 L783.5,89.1 L784.0,88.8 L784.5,88.5 L785.0,88.2 L785.5,87.8 L786.0,87.5 L786.5,87.2 L787.0,86.9 L787.5,86.5 L788.0,86.2 L788.5,85.9 L789.0,85.6 L789.5,85.3 L790.0,84.9 L790.5,84.6 L791.0,84.3 L791.5,84.0 L792.0,83.6 L792.5,83.3 L793.0,83.0" fill="none" stroke="#e020ff" stroke-width="1.7"/>
<path d="M1223.3,149.0 L1223.3,149.1 L1223.3,149.1 L1223.3,149.2 L1223.2,149.3 L1223.2,149.3 L1223.2,149.4 L1223.2,149.5 L1223.2,149.5 L1223.2,149.6 L1223.2,149.6 L1223.2,149.7 L1223.1,149.8 L1223.1,149.8 L1223.1,149.9 L1223.1,150.0 L1223.1,150.0 L1223.1,150.1 L1223.1,150.2 L1223.1,150.2 L1223.1,150.3 L1223.1,150.4 L1223.1,150.5 L1223.0,150.5 L1223.0,150.6 L1223.0,150.7 L1223.0,150.7 L1223.0,150.8 L1223.0,150.9 L1223.0,150.9 L1223.0,151.0" fill="none" stroke="#e020ff" stroke-width="1.7"/>
<path d="M470.2,197.5 L470.1,197.5 L469.9,197.5 L469.8,197.5 L469.6,197.6 L469.5,197.6 L469.3,197.6 L469.2,197.6 L469.1,197.6 L468.9,197.6 L468.8,197.6 L468.6,197.6 L468.5,197.7 L468.3,197.7 L468.2,197.7 L468.1,197.7 L467.9,197.7 L467.8,197.7 L467.6,197.7 L467.5,197.7 L467.3,197.8 L467.2,197.8 L467.1,197.8 L466.9,197.8 L466.8,197.8 L466.6,197.8 L466.5,197.8 L466.3,197.9 L466.2,197.9 L466.0,197.9 L465.9,197.9" fill="none" stroke="#55d400" stroke-width="1.7"/>
<path d="M893.4,68.9 L893.6,69.3 L893.8,69.7 L894.0,70.1 L894.1,70.5 L894.3,71.0 L894.5,71.4 L894.7,71.8 L894.9,72.2 L895.1,72.6 L895.2,73.0 L895.4,73.5 L895.6,73.9 L895.8,74.3 L896.0,74.7 L896.2,75.2 L896.3,75.6 L896.5,76.0 L896.7,76.5 L896.9,76.9 L897.1,77.3 L897.3,77.8 L897.4,78.2 L897.6,78.6 L897.8,79.1 L898.0,79.5 L898.2,79.9 L898.4,80.4 L898.5,80.8 L898.7,81.3 L898.9,81.7" fill="none" stroke="#55d400" stroke-width="1.7"/>
<path d="M781.0,100.7 L780.6,100.1 L780.1,99.6 L779.6,99.0 L779.1,98.5 L778.5,98.0 L777.9,97.6 L777.3,97.2 L776.6,96.7 L775.9,96.4 L775.1,96.0 L774.2,95.7 L773.4,95.4 L772.4,95.1 L771.5,94.9 L770.4,94.7 L769.3,94.5 L768.2,94.3 L767.0,94.2 L765.7,94.1 L764.4,94.0 L763.1,94.0 L761.6,94.0 L760.1,94.0 L758.6,94.1 L757.0,94.1 L755.3,94.3 L753.6,94.4 L751.8,94.6 L749.9,94.8 L748.0,95.0" fill="none" stroke="#ff2200" stroke-width="1.7"/>
<path d="M497.0,229.3 L497.4,229.1 L497.9,229.0 L498.3,228.8 L498.7,228.6 L499.1,228.5 L499.6,228.3 L500.0,228.1 L500.4,228.0 L500.9,227.8 L501.3,227.6 L501.7,227.5 L502.2,227.3 L502.6,227.1 L503.0,227.0 L503.4,226.8 L503.9,226.7 L504.3,226.5 L504.7,226.3 L505.2,226.2 L505.6,226.0" fill="none" stroke="#9a9a9a" stroke-width="1.2"/>
<path d="M834.7,72.0 L835.6,71.5 L836.5,70.9 L837.5,70.4 L838.4,69.9 L839.3,69.4 L840.2,68.9 L841.1,68.3 L842.0,67.8 L843.0,67.3 L843.9,66.8 L844.8,66.2 L845.7,65.7 L846.6,65.2 L847.5,64.7 L848.4,64.2 L849.4,63.7 L850.3,63.1 L851.2,62.6 L852.1,62.1 L853.0,61.6" fill="none" stroke="#9a9a9a" stroke-width="1.2"/>
<path d="M1108.0,121.9 L1108.3,122.1 L1108.6,122.3 L1108.8,122.6 L1109.1,122.8 L1109.4,123.0 L1109.7,123.2 L1110.0,123.5 L1110.2,123.7 L1110.5,123.9 L1110.8,124.1 L1111.1,124.4 L1111.4,124.6 L1111.6,124.8 L1111.9,125.0 L1112.2,125.3 L1112.5,125.5 L1112.8,125.7 L1113.0,125.9 L1113.3,126.2 L1113.6,126.4" fill="none" stroke="#9a9a9a" stroke-width="1.2"/>
<path d="M1236.5,146.5 L1236.6,146.8 L1236.6,147.0 L1236.7,147.3 L1236.8,147.5 L1236.8,147.8 L1236.9,148.1 L1237.0,148.3 L1237.1,148.6 L1237.2,148.9 L1237.3,149.1 L1237.4,149.4 L1237.5,149.7 L1237.6,150.0 L1237.7,150.3 L1237.8,150.5 L1238.0,150.8 L1238.1,151.1 L1238.2,151.4 L1238.4,151.7 L1238.5,152.0" fill="none" stroke="#9a9a9a" stroke-width="1.2"/>
<path d="M1244.0,172.6 L1244.5,172.3 L1245.0,172.0 L1245.5,171.8 L1246.0,171.5 L1246.5,171.2 L1247.1,171.0 L1247.6,170.7 L1248.2,170.5 L1248.7,170.2 L1249.3,170.0 L1249.9,169.8 L1250.5,169.6 L1251.1,169.3 L1251.7,169.1 L1252.4,168.9 L1253.0,168.7 L1253.7,168.5 L1254.3,168.4 L1255.0,168.2 L1255.7,168.0" fill="none" stroke="#9a9a9a" stroke-width="1.2"/>
<path d="M1296.5,164.9 L1296.3,165.2 L1296.2,165.4 L1296.1,165.7 L1296.0,165.9 L1295.9,166.2 L1295.8,166.4 L1295.7,166.7 L1295.6,167.0 L1295.5,167.2 L1295.5,167.5 L1295.4,167.8 L1295.3,168.0 L1295.3,168.3 L1295.2,168.6 L1295.2,168.9 L1295.1,169.1 L1295.1,169.4 L1295.0,169.7 L1295.0,170.0" fill="none" stroke="#9a9a9a" stroke-width="1.2"/>
<circle cx="557.4" cy="156.7" r="1.5" fill="#ff6a50"/>
<circle cx="524.8" cy="182.7" r="1.5" fill="#ff6a50"/>
<circle cx="588.9" cy="192.8" r="1.5" fill="#ff6a50"/>
<circle cx="718.0" cy="108.0" r="1.5" fill="#ff6a50"/>
<circle cx="949.0" cy="97.9" r="1.5" fill="#ff6a50"/>
<circle cx="1121.0" cy="109.0" r="1.5" fill="#ff6a50"/>
<circle cx="765.0" cy="84.0" r="1.5" fill="#ff6a50"/>
<circle cx="793.0" cy="83.0" r="1.5" fill="#ff6a50"/>
<circle cx="1223.0" cy="151.0" r="1.5" fill="#ff6a50"/>
<circle cx="465.9" cy="197.9" r="1.5" fill="#ff6a50"/>
<circle cx="898.9" cy="81.7" r="1.5" fill="#ff6a50"/>
<circle cx="748.0" cy="95.0" r="1.5" fill="#ff6a50"/>
<g stroke="#ff0000" stroke-width="1.6">
<path d="M497.8,197.5 h7 M501.3,194.0 v7"/>
<path d="M589.8,232.3 h7 M593.3,228.8 v7"/>
<path d="M616.1,228.2 h7 M619.6,224.7 v7"/>
<path d="M607.3,227.7 h7 M610.8,224.2 v7"/>
<path d="M614.3,267.3 h7 M617.8,263.8 v7"/>
<path d="M606.7,270.8 h7 M610.2,267.3 v7"/>
<path d="M780.5,280.0 h7 M784.0,276.5 v7"/>
</g>
<g font-family="Liberation Sans, sans-serif" font-size="10.5" fill="#ffffff" text-anchor="middle">
<text x="501.7" y="200.3">LMI</text>
<text x="605.6" y="232.9">EGE</text>
<text x="606.6" y="273.2">ORI</text>
<text x="772.2" y="286.8">STA</text>
</g>
<g font-family="Liberation Mono, monospace" font-size="13.9" fill="#ffffff">
<text x="315.5" y="30.0" xml:space="preserve">KR0019</text>
<text x="315.5" y="43.1" xml:space="preserve">Beg: 20251018 10:21:58 (sol = 204.94°)</text>
<text x="315.5" y="56.5" xml:space="preserve">End: 20251018 20:42:59 (sol = 205.37°)</text>
<text x="315.5" y="69.3" xml:space="preserve">--------------------------------------</text>
<text x="315.5" y="81.9" xml:space="preserve">...: 6</text>
<text x="315.5" y="95.0" xml:space="preserve">ORI: 6</text>
<text x="315.5" y="108.0" xml:space="preserve">EGE: 3</text>
<text x="315.5" y="121.3" xml:space="preserve">LMI: 2</text>
<text x="315.5" y="134.6" xml:space="preserve">STA: 1</text>
</g>
<clipPath id="axclip"><rect x="19.4" y="641.5" width="1766.1" height="201.0"/></clipPath>
<g font-family="Liberation Sans, sans-serif" font-size="30.70" fill="#5f5f5f" clip-path="url(#axclip)">
<text transform="translate(149.00,697.06) rotate(-90) scale(0.8719,1)">APR</text>
<text transform="translate(294.00,700.75) rotate(-90) scale(0.8741,1)">MAY</text>
<text transform="translate(436.00,690.95) rotate(-90) scale(0.8229,1)">JUN</text>
<text transform="translate(576.00,685.94) rotate(-90) scale(0.8600,1)">JUL</text>
<text transform="translate(723.00,700.98) rotate(-90) scale(0.8764,1)">AUG</text>
<text transform="translate(872.00,694.81) rotate(-90) scale(0.8407,1)">SEP</text>
<text transform="translate(1016.00,700.87) rotate(-90) scale(0.8944,1)">OCT</text>
<text transform="translate(1169.00,703.75) rotate(-90) scale(0.8777,1)">NOV</text>
<text transform="translate(1318.00,700.65) rotate(-90) scale(0.8661,1)">DEC</text>
<text transform="translate(1469.00,688.91) rotate(-90) scale(0.8140,1)">JAN</text>
<text transform="translate(1628.00,695.67) rotate(-90) scale(0.8261,1)">FEB</text>
<text transform="translate(1766.00,704.77) rotate(-90) scale(0.8868,1)">MAR</text>
</g>
<rect x="105.9" y="832.0" width="23.1" height="4" fill="#ee82ee"/>
<rect x="165.0" y="832.0" width="179.9" height="4" fill="#ee82ee"/>
<rect x="365.9" y="832.0" width="259.0" height="4" fill="#ee82ee"/>
<rect x="635.2" y="832.0" width="150.5" height="4" fill="#ee82ee"/>
<rect x="806.9" y="832.0" width="92.1" height="4" fill="#ee82ee"/>
<rect x="920.0" y="832.0" width="52.8" height="4" fill="#ee82ee"/>
<rect x="984.0" y="832.0" width="81.7" height="4" fill="#ee82ee"/>
<rect x="1082.0" y="832.0" width="120.9" height="4" fill="#ee82ee"/>
<rect x="1244.0" y="832.0" width="81.8" height="4" fill="#ee82ee"/>
<rect x="1337.0" y="832.0" width="18.0" height="4" fill="#ee82ee"/>
<rect x="1381.0" y="832.0" width="62.9" height="4" fill="#ee82ee"/>
<rect x="1459.0" y="832.0" width="52.8" height="4" fill="#ee82ee"/>
<rect x="1523.0" y="832.0" width="23.8" height="4" fill="#ee82ee"/>
<rect x="1724.0" y="832.0" width="23.8" height="4" fill="#ee82ee"/>
<rect x="1758.0" y="832.0" width="23.9" height="4" fill="#ee82ee"/>
<rect x="165.0" y="816.0" width="23.1" height="4" fill="#e41af0"/>
<rect x="222.9" y="816.0" width="63.0" height="4" fill="#e41af0"/>
<rect x="312.0" y="816.0" width="28.0" height="4" fill="#e41af0"/>
<rect x="365.9" y="816.0" width="126.0" height="4" fill="#e41af0"/>
<rect x="508.0" y="816.0" width="145.8" height="4" fill="#e41af0"/>
<rect x="704.0" y="816.0" width="32.9" height="4" fill="#e41af0"/>
<rect x="772.8" y="816.0" width="71.9" height="4" fill="#e41af0"/>
<rect x="871.0" y="816.0" width="116.7" height="4" fill="#e41af0"/>
<rect x="1003.0" y="816.0" width="13.9" height="4" fill="#e41af0"/>
<rect x="1062.0" y="816.0" width="150.9" height="4" fill="#e41af0"/>
<rect x="1244.0" y="816.0" width="22.8" height="4" fill="#e41af0"/>
<rect x="1293.0" y="816.0" width="22.8" height="4" fill="#e41af0"/>
<rect x="1342.0" y="816.0" width="23.0" height="4" fill="#e41af0"/>
<rect x="1386.0" y="816.0" width="43.0" height="4" fill="#e41af0"/>
<rect x="1459.0" y="816.0" width="23.9" height="4" fill="#e41af0"/>
<rect x="1548.0" y="816.0" width="22.8" height="4" fill="#e41af0"/>
<rect x="165.0" y="800.0" width="23.1" height="4" fill="#ff2200"/>
<rect x="257.9" y="800.0" width="229.1" height="4" fill="#ff2200"/>
<rect x="508.0" y="800.0" width="106.9" height="4" fill="#ff2200"/>
<rect x="626.0" y="800.0" width="92.0" height="4" fill="#ff2200"/>
<rect x="729.2" y="800.0" width="96.6" height="4" fill="#ff2200"/>
<rect x="949.0" y="800.0" width="200.0" height="4" fill="#ff2200"/>
<rect x="1160.0" y="800.0" width="87.9" height="4" fill="#ff2200"/>
<rect x="1258.2" y="800.0" width="185.7" height="4" fill="#ff2200"/>
<rect x="1459.0" y="800.0" width="23.9" height="4" fill="#ff2200"/>
<rect x="1552.0" y="800.0" width="24.0" height="4" fill="#ff2200"/>
<rect x="194.1" y="783.3" width="24.0" height="4" fill="#ffae1a"/>
<rect x="320.9" y="783.3" width="185.9" height="4" fill="#ffae1a"/>
<rect x="518.0" y="783.3" width="22.9" height="4" fill="#ffae1a"/>
<rect x="557.0" y="783.3" width="126.0" height="4" fill="#ffae1a"/>
<rect x="806.9" y="783.3" width="24.0" height="4" fill="#ffae1a"/>
<rect x="954.0" y="783.3" width="18.8" height="4" fill="#ffae1a"/>
<rect x="988.0" y="783.3" width="136.7" height="4" fill="#ffae1a"/>
<rect x="1155.0" y="783.3" width="62.8" height="4" fill="#ffae1a"/>
<rect x="1244.0" y="783.3" width="22.8" height="4" fill="#ffae1a"/>
<rect x="1317.0" y="783.3" width="23.8" height="4" fill="#ffae1a"/>
<rect x="1396.0" y="783.3" width="22.9" height="4" fill="#ffae1a"/>
<rect x="1464.0" y="783.3" width="186.0" height="4" fill="#ffae1a"/>
<rect x="340.9" y="767.0" width="29.0" height="4" fill="#fff000"/>
<rect x="410.0" y="767.0" width="37.8" height="4" fill="#fff000"/>
<rect x="469.0" y="767.0" width="22.9" height="4" fill="#fff000"/>
<rect x="526.9" y="767.0" width="19.1" height="4" fill="#fff000"/>
<rect x="561.9" y="767.0" width="28.0" height="4" fill="#fff000"/>
<rect x="616.0" y="767.0" width="32.9" height="4" fill="#fff000"/>
<rect x="958.8" y="767.0" width="29.2" height="4" fill="#fff000"/>
<rect x="1062.0" y="767.0" width="23.7" height="4" fill="#fff000"/>
<rect x="1101.0" y="767.0" width="23.7" height="4" fill="#fff000"/>
<rect x="1160.0" y="767.0" width="33.8" height="4" fill="#fff000"/>
<rect x="1248.0" y="767.0" width="23.7" height="4" fill="#fff000"/>
<rect x="1425.0" y="767.0" width="86.8" height="4" fill="#fff000"/>
<rect x="420.0" y="750.4" width="22.9" height="4" fill="#adff2f"/>
<rect x="531.8" y="750.4" width="24.2" height="4" fill="#adff2f"/>
<rect x="567.0" y="750.4" width="22.9" height="4" fill="#adff2f"/>
<rect x="620.9" y="750.4" width="121.1" height="4" fill="#adff2f"/>
<rect x="969.0" y="750.4" width="165.7" height="4" fill="#adff2f"/>
<rect x="1185.1" y="750.4" width="160.8" height="4" fill="#adff2f"/>
<rect x="1469.1" y="750.4" width="23.8" height="4" fill="#adff2f"/>
<rect x="429.1" y="734.0" width="23.8" height="4" fill="#55d400"/>
<rect x="575.9" y="734.0" width="157.0" height="4" fill="#55d400"/>
<rect x="992.9" y="734.0" width="112.0" height="4" fill="#55d400"/>
<rect x="1116.0" y="734.0" width="106.9" height="4" fill="#55d400"/>
<rect x="1263.0" y="734.0" width="29.0" height="4" fill="#55d400"/>
<rect x="1488.9" y="734.0" width="22.9" height="4" fill="#55d400"/>
<rect x="591.0" y="718.0" width="23.9" height="4" fill="#00f080"/>
<rect x="655.0" y="718.0" width="116.9" height="4" fill="#00f080"/>
<rect x="1072.0" y="718.0" width="171.0" height="4" fill="#00f080"/>
<rect x="1263.0" y="718.0" width="23.9" height="4" fill="#00f080"/>
<rect x="596.0" y="701.5" width="136.7" height="4" fill="#00e0ff"/>
<rect x="1091.0" y="701.5" width="28.8" height="4" fill="#00e0ff"/>
<rect x="1199.0" y="701.5" width="23.9" height="4" fill="#00e0ff"/>
<rect x="1272.9" y="701.5" width="52.9" height="4" fill="#00e0ff"/>
<rect x="1111.2" y="685.0" width="23.5" height="4" fill="#0014c8"/>
<g stroke="#ffffff" stroke-opacity="0.37" stroke-width="2.08" stroke-dasharray="2.08 3.44">
<line x1="73.8" y1="842.5" x2="73.8" y2="641.5"/>
<line x1="218.0" y1="842.5" x2="218.0" y2="641.5"/>
<line x1="365.0" y1="842.5" x2="365.0" y2="641.5"/>
<line x1="505.0" y1="842.5" x2="505.0" y2="641.5"/>
<line x1="650.0" y1="842.5" x2="650.0" y2="641.5"/>
<line x1="796.9" y1="842.5" x2="796.9" y2="641.5"/>
<line x1="939.9" y1="842.5" x2="939.9" y2="641.5"/>
<line x1="1090.9" y1="842.5" x2="1090.9" y2="641.5"/>
<line x1="1238.8" y1="842.5" x2="1238.8" y2="641.5"/>
<line x1="1394.0" y1="842.5" x2="1394.0" y2="641.5"/>
<line x1="1548.0" y1="842.5" x2="1548.0" y2="641.5"/>
<line x1="1686.9" y1="842.5" x2="1686.9" y2="641.5"/>
</g>
<g stroke="#ffffff" stroke-width="2">
<path d="M113.0,834.0 h8 M117.0,830.0 v8"/>
<path d="M240.8,834.0 h8 M244.8,830.0 v8"/>
<path d="M511.0,834.0 h8 M515.0,830.0 v8"/>
<path d="M707.0,834.0 h8 M711.0,830.0 v8"/>
<path d="M833.0,834.0 h8 M837.0,830.0 v8"/>
<path d="M961.8,834.0 h8 M965.8,830.0 v8"/>
<path d="M985.8,834.0 h8 M989.8,830.0 v8"/>
<path d="M1115.8,834.0 h8 M1119.8,830.0 v8"/>
<path d="M1294.5,834.0 h8 M1298.5,830.0 v8"/>
<path d="M1341.7,834.0 h8 M1345.7,830.0 v8"/>
<path d="M1412.8,834.0 h8 M1416.8,830.0 v8"/>
<path d="M1481.7,834.0 h8 M1485.7,830.0 v8"/>
<path d="M1530.7,834.0 h8 M1534.7,830.0 v8"/>
<path d="M1732.0,834.0 h8 M1736.0,830.0 v8"/>
<path d="M1765.7,834.0 h8 M1769.7,830.0 v8"/>
<path d="M172.1,818.0 h8 M176.1,814.0 v8"/>
<path d="M256.0,818.0 h8 M260.0,814.0 v8"/>
<path d="M322.7,818.0 h8 M326.7,814.0 v8"/>
<path d="M436.8,818.0 h8 M440.8,814.0 v8"/>
<path d="M599.0,818.0 h8 M603.0,814.0 v8"/>
<path d="M716.8,818.0 h8 M720.8,814.0 v8"/>
<path d="M792.9,818.0 h8 M796.9,814.0 v8"/>
<path d="M938.7,818.0 h8 M942.7,814.0 v8"/>
<path d="M1005.9,818.0 h8 M1009.9,814.0 v8"/>
<path d="M1152.7,818.0 h8 M1156.7,814.0 v8"/>
<path d="M1250.7,818.0 h8 M1254.7,814.0 v8"/>
<path d="M1299.7,818.0 h8 M1303.7,814.0 v8"/>
<path d="M1348.9,818.0 h8 M1352.9,814.0 v8"/>
<path d="M1402.8,818.0 h8 M1406.8,814.0 v8"/>
<path d="M1467.0,818.0 h8 M1471.0,814.0 v8"/>
<path d="M1554.5,818.0 h8 M1558.5,814.0 v8"/>
<path d="M173.9,802.0 h8 M177.9,798.0 v8"/>
<path d="M377.8,802.0 h8 M381.8,798.0 v8"/>
<path d="M544.8,802.0 h8 M548.8,798.0 v8"/>
<path d="M681.6,802.0 h8 M685.6,798.0 v8"/>
<path d="M740.8,802.0 h8 M744.8,798.0 v8"/>
<path d="M1075.0,802.0 h8 M1079.0,798.0 v8"/>
<path d="M1216.8,802.0 h8 M1220.8,798.0 v8"/>
<path d="M1304.8,802.0 h8 M1308.8,798.0 v8"/>
<path d="M1467.0,802.0 h8 M1471.0,798.0 v8"/>
<path d="M1559.8,802.0 h8 M1563.8,798.0 v8"/>
<path d="M201.5,785.3 h8 M205.5,781.3 v8"/>
<path d="M399.7,785.3 h8 M403.7,781.3 v8"/>
<path d="M524.8,785.3 h8 M528.8,781.3 v8"/>
<path d="M638.6,785.3 h8 M642.6,781.3 v8"/>
<path d="M814.8,785.3 h8 M818.8,781.3 v8"/>
<path d="M958.8,785.3 h8 M962.8,781.3 v8"/>
<path d="M1039.8,785.3 h8 M1043.8,781.3 v8"/>
<path d="M1187.7,785.3 h8 M1191.7,781.3 v8"/>
<path d="M1250.7,785.3 h8 M1254.7,781.3 v8"/>
<path d="M1324.8,785.3 h8 M1328.8,781.3 v8"/>
<path d="M1402.8,785.3 h8 M1406.8,781.3 v8"/>
<path d="M1545.8,785.3 h8 M1549.8,781.3 v8"/>
<path d="M355.8,769.0 h8 M359.8,765.0 v8"/>
<path d="M425.8,769.0 h8 M429.8,765.0 v8"/>
<path d="M475.8,769.0 h8 M479.8,765.0 v8"/>
<path d="M534.6,769.0 h8 M538.6,765.0 v8"/>
<path d="M570.5,769.0 h8 M574.5,765.0 v8"/>
<path d="M630.7,769.0 h8 M634.7,765.0 v8"/>
<path d="M973.9,769.0 h8 M977.9,765.0 v8"/>
<path d="M1069.8,769.0 h8 M1073.8,765.0 v8"/>
<path d="M1108.8,769.0 h8 M1112.8,765.0 v8"/>
<path d="M1177.9,769.0 h8 M1181.9,765.0 v8"/>
<path d="M1255.6,769.0 h8 M1259.6,765.0 v8"/>
<path d="M1467.0,769.0 h8 M1471.0,765.0 v8"/>
<path d="M426.5,752.4 h8 M430.5,748.4 v8"/>
<path d="M539.7,752.4 h8 M543.7,748.4 v8"/>
<path d="M573.8,752.4 h8 M577.8,748.4 v8"/>
<path d="M704.0,752.4 h8 M708.0,748.4 v8"/>
<path d="M1093.9,752.4 h8 M1097.9,748.4 v8"/>
<path d="M1271.0,752.4 h8 M1275.0,748.4 v8"/>
<path d="M1476.8,752.4 h8 M1480.8,748.4 v8"/>
<path d="M436.8,736.0 h8 M440.8,732.0 v8"/>
<path d="M630.7,736.0 h8 M634.7,732.0 v8"/>
<path d="M1038.8,736.0 h8 M1042.8,732.0 v8"/>
<path d="M1167.8,736.0 h8 M1171.8,732.0 v8"/>
<path d="M1274.7,736.0 h8 M1278.7,732.0 v8"/>
<path d="M1496.6,736.0 h8 M1500.6,732.0 v8"/>
<path d="M599.0,720.0 h8 M603.0,716.0 v8"/>
<path d="M726.8,720.0 h8 M730.8,716.0 v8"/>
<path d="M1187.9,720.0 h8 M1191.9,716.0 v8"/>
<path d="M1271.0,720.0 h8 M1275.0,716.0 v8"/>
<path d="M687.2,703.5 h8 M691.2,699.5 v8"/>
<path d="M1102.0,703.5 h8 M1106.0,699.5 v8"/>
<path d="M1207.0,703.5 h8 M1211.0,699.5 v8"/>
<path d="M1299.7,703.5 h8 M1303.7,699.5 v8"/>
<path d="M1118.8,687.0 h8 M1122.8,683.0 v8"/>
</g>
<g font-family="Liberation Sans, sans-serif" font-size="11.20" fill="#ffffff" text-anchor="middle">
<text x="117.5" y="831.3" textLength="20.6" lengthAdjust="spacingAndGlyphs">KSE</text>
<text x="254.9" y="831.3" textLength="19.8" lengthAdjust="spacingAndGlyphs">ETA</text>
<text x="495.3" y="831.3" textLength="22.8" lengthAdjust="spacingAndGlyphs">NZC</text>
<text x="711.1" y="831.3" textLength="23.4" lengthAdjust="spacingAndGlyphs">NDA</text>
<text x="853.4" y="831.3" textLength="20.0" lengthAdjust="spacingAndGlyphs">SPE</text>
<text x="946.6" y="831.3" textLength="23.0" lengthAdjust="spacingAndGlyphs">ARD</text>
<text x="1025.1" y="831.3" textLength="21.8" lengthAdjust="spacingAndGlyphs">EGE</text>
<text x="1142.8" y="831.3" textLength="21.0" lengthAdjust="spacingAndGlyphs">NTA</text>
<text x="1285.1" y="831.3" textLength="25.7" lengthAdjust="spacingAndGlyphs">MON</text>
<text x="1344.0" y="831.3" textLength="22.1" lengthAdjust="spacingAndGlyphs">URS</text>
<text x="1412.7" y="831.3" textLength="21.9" lengthAdjust="spacingAndGlyphs">AHY</text>
<text x="1486.2" y="831.3" textLength="25.4" lengthAdjust="spacingAndGlyphs">GUM</text>
<text x="1535.3" y="831.3" textLength="23.0" lengthAdjust="spacingAndGlyphs">OHY</text>
<text x="1736.4" y="831.3" textLength="22.1" lengthAdjust="spacingAndGlyphs">XHE</text>
<text x="1770.8" y="831.3" textLength="17.2" lengthAdjust="spacingAndGlyphs">EVI</text>
<text x="176.4" y="815.3" textLength="21.3" lengthAdjust="spacingAndGlyphs">AVB</text>
<text x="254.9" y="815.3" textLength="17.8" lengthAdjust="spacingAndGlyphs">ELY</text>
<text x="323.6" y="815.3" textLength="24.0" lengthAdjust="spacingAndGlyphs">CAM</text>
<text x="431.5" y="815.3" textLength="21.9" lengthAdjust="spacingAndGlyphs">SSG</text>
<text x="578.7" y="815.3" textLength="21.2" lengthAdjust="spacingAndGlyphs">PCA</text>
<text x="720.9" y="815.3" textLength="23.4" lengthAdjust="spacingAndGlyphs">AUD</text>
<text x="809.2" y="815.3" textLength="22.6" lengthAdjust="spacingAndGlyphs">AUR</text>
<text x="931.9" y="815.3" textLength="22.4" lengthAdjust="spacingAndGlyphs">DSX</text>
<text x="1010.4" y="815.3" textLength="23.7" lengthAdjust="spacingAndGlyphs">OCU</text>
<text x="1137.9" y="815.3" textLength="22.6" lengthAdjust="spacingAndGlyphs">OER</text>
<text x="1255.7" y="815.3" textLength="23.5" lengthAdjust="spacingAndGlyphs">DKD</text>
<text x="1304.7" y="815.3" textLength="22.4" lengthAdjust="spacingAndGlyphs">DSV</text>
<text x="1353.8" y="815.3" textLength="18.4" lengthAdjust="spacingAndGlyphs">ALY</text>
<text x="1407.8" y="815.3" textLength="15.9" lengthAdjust="spacingAndGlyphs">JLE</text>
<text x="1471.5" y="815.3" textLength="21.7" lengthAdjust="spacingAndGlyphs">SCC</text>
<text x="1559.8" y="815.3" textLength="20.2" lengthAdjust="spacingAndGlyphs">FEV</text>
<text x="176.4" y="799.3" textLength="18.5" lengthAdjust="spacingAndGlyphs">LYR</text>
<text x="372.6" y="799.3" textLength="19.9" lengthAdjust="spacingAndGlyphs">JMC</text>
<text x="559.0" y="799.3" textLength="16.4" lengthAdjust="spacingAndGlyphs">JPE</text>
<text x="671.9" y="799.3" textLength="20.9" lengthAdjust="spacingAndGlyphs">PAU</text>
<text x="774.9" y="799.3" textLength="18.5" lengthAdjust="spacingAndGlyphs">NIA</text>
<text x="1049.6" y="799.3" textLength="19.8" lengthAdjust="spacingAndGlyphs">STA</text>
<text x="1206.6" y="799.3" textLength="24.8" lengthAdjust="spacingAndGlyphs">NOO</text>
<text x="1353.8" y="799.3" textLength="25.1" lengthAdjust="spacingAndGlyphs">COM</text>
<text x="1471.5" y="799.3" textLength="22.9" lengthAdjust="spacingAndGlyphs">NCC</text>
<text x="1564.7" y="799.3" textLength="21.2" lengthAdjust="spacingAndGlyphs">FED</text>
<text x="205.8" y="782.6" textLength="18.5" lengthAdjust="spacingAndGlyphs">HVI</text>
<text x="411.9" y="782.6" textLength="17.9" lengthAdjust="spacingAndGlyphs">ARI</text>
<text x="529.6" y="782.6" textLength="21.6" lengthAdjust="spacingAndGlyphs">SZC</text>
<text x="617.9" y="782.6" textLength="21.2" lengthAdjust="spacingAndGlyphs">CAP</text>
<text x="819.1" y="782.6" textLength="22.6" lengthAdjust="spacingAndGlyphs">NUE</text>
<text x="961.3" y="782.6" textLength="22.4" lengthAdjust="spacingAndGlyphs">OCT</text>
<text x="1059.4" y="782.6" textLength="19.0" lengthAdjust="spacingAndGlyphs">ORI</text>
<text x="1187.0" y="782.6" textLength="25.0" lengthAdjust="spacingAndGlyphs">AMO</text>
<text x="1255.7" y="782.6" textLength="22.2" lengthAdjust="spacingAndGlyphs">DPC</text>
<text x="1329.3" y="782.6" textLength="17.8" lengthAdjust="spacingAndGlyphs">XVI</text>
<text x="1407.8" y="782.6" textLength="23.6" lengthAdjust="spacingAndGlyphs">QUA</text>
<text x="1559.8" y="782.6" textLength="22.9" lengthAdjust="spacingAndGlyphs">AAN</text>
<text x="353.0" y="766.3" textLength="21.1" lengthAdjust="spacingAndGlyphs">TAH</text>
<text x="431.5" y="766.3" textLength="17.2" lengthAdjust="spacingAndGlyphs">JEA</text>
<text x="480.5" y="766.3" textLength="12.8" lengthAdjust="spacingAndGlyphs">JIP</text>
<text x="539.4" y="766.3" textLength="19.7" lengthAdjust="spacingAndGlyphs">PPS</text>
<text x="578.7" y="766.3" textLength="21.6" lengthAdjust="spacingAndGlyphs">ZCS</text>
<text x="632.6" y="766.3" textLength="24.0" lengthAdjust="spacingAndGlyphs">GDR</text>
<text x="971.1" y="766.3" textLength="22.6" lengthAdjust="spacingAndGlyphs">DRA</text>
<text x="1074.2" y="766.3" textLength="22.5" lengthAdjust="spacingAndGlyphs">LUM</text>
<text x="1113.4" y="766.3" textLength="21.7" lengthAdjust="spacingAndGlyphs">RPU</text>
<text x="1177.2" y="766.3" textLength="21.9" lengthAdjust="spacingAndGlyphs">THA</text>
<text x="1260.6" y="766.3" textLength="21.1" lengthAdjust="spacingAndGlyphs">PSU</text>
<text x="1471.5" y="766.3" textLength="21.4" lengthAdjust="spacingAndGlyphs">XCB</text>
<text x="431.5" y="749.7" textLength="17.5" lengthAdjust="spacingAndGlyphs">IRC</text>
<text x="544.3" y="749.7" textLength="22.8" lengthAdjust="spacingAndGlyphs">CAN</text>
<text x="578.7" y="749.7" textLength="20.5" lengthAdjust="spacingAndGlyphs">FAN</text>
<text x="681.7" y="749.7" textLength="20.6" lengthAdjust="spacingAndGlyphs">PER</text>
<text x="1049.6" y="749.7" textLength="20.5" lengthAdjust="spacingAndGlyphs">CTA</text>
<text x="1265.5" y="749.7" textLength="22.8" lengthAdjust="spacingAndGlyphs">HYD</text>
<text x="1481.3" y="749.7" textLength="24.4" lengthAdjust="spacingAndGlyphs">XUM</text>
<text x="441.3" y="733.3" textLength="23.3" lengthAdjust="spacingAndGlyphs">COR</text>
<text x="657.2" y="733.3" textLength="22.2" lengthAdjust="spacingAndGlyphs">SDA</text>
<text x="1049.6" y="733.3" textLength="18.3" lengthAdjust="spacingAndGlyphs">LMI</text>
<text x="1167.4" y="733.3" textLength="21.1" lengthAdjust="spacingAndGlyphs">LEO</text>
<text x="1275.3" y="733.3" textLength="21.3" lengthAdjust="spacingAndGlyphs">EHY</text>
<text x="1501.0" y="733.3" textLength="21.6" lengthAdjust="spacingAndGlyphs">ECV</text>
<text x="603.2" y="717.3" textLength="17.8" lengthAdjust="spacingAndGlyphs">JXA</text>
<text x="716.0" y="717.3" textLength="22.2" lengthAdjust="spacingAndGlyphs">KCG</text>
<text x="1157.6" y="717.3" textLength="23.6" lengthAdjust="spacingAndGlyphs">AND</text>
<text x="1275.3" y="717.3" textLength="23.6" lengthAdjust="spacingAndGlyphs">DAD</text>
<text x="667.0" y="700.8" textLength="17.4" lengthAdjust="spacingAndGlyphs">ERI</text>
<text x="1108.5" y="700.8" textLength="21.0" lengthAdjust="spacingAndGlyphs">SLD</text>
<text x="1211.5" y="700.8" textLength="22.6" lengthAdjust="spacingAndGlyphs">ORS</text>
<text x="1299.8" y="700.8" textLength="24.3" lengthAdjust="spacingAndGlyphs">GEM</text>
<text x="1123.2" y="684.3" textLength="23.8" lengthAdjust="spacingAndGlyphs">KUM</text>
</g>
<g stroke="#ff0000" stroke-width="1.39" stroke-dasharray="5.14 2.22">
<line x1="1025.4" y1="842.5" x2="1025.4" y2="641.5"/>
<line x1="1027.6" y1="842.5" x2="1027.6" y2="641.5"/>
</g>
<rect x="19.4" y="641.5" width="1766.1" height="201.0" fill="none" stroke="#ffffff" stroke-width="1.1"/>
<g stroke="#ffffff" stroke-width="1.1">
<line x1="19.4" y1="842.5" x2="19.4" y2="847.4"/>
<line x1="264.7" y1="842.5" x2="264.7" y2="847.4"/>
<line x1="510.0" y1="842.5" x2="510.0" y2="847.4"/>
<line x1="755.3" y1="842.5" x2="755.3" y2="847.4"/>
<line x1="1000.6" y1="842.5" x2="1000.6" y2="847.4"/>
<line x1="1245.9" y1="842.5" x2="1245.9" y2="847.4"/>
<line x1="1491.2" y1="842.5" x2="1491.2" y2="847.4"/>
<line x1="1736.4" y1="842.5" x2="1736.4" y2="847.4"/>
</g>
<g font-family="Liberation Sans, sans-serif" font-size="14.6" fill="#ffffff" text-anchor="middle">
<text x="19.4" y="862" textLength="8.8" lengthAdjust="spacingAndGlyphs">0</text>
<text x="264.7" y="862" textLength="17.7" lengthAdjust="spacingAndGlyphs">50</text>
<text x="510.0" y="862" textLength="26.5" lengthAdjust="spacingAndGlyphs">100</text>
<text x="755.3" y="862" textLength="26.5" lengthAdjust="spacingAndGlyphs">150</text>
<text x="1000.6" y="862" textLength="26.5" lengthAdjust="spacingAndGlyphs">200</text>
<text x="1245.9" y="862" textLength="26.5" lengthAdjust="spacingAndGlyphs">250</text>
<text x="1491.2" y="862" textLength="26.5" lengthAdjust="spacingAndGlyphs">300</text>
<text x="1736.4" y="862" textLength="26.5" lengthAdjust="spacingAndGlyphs">350</text>
<text x="902.3" y="881.5" textLength="146.7" lengthAdjust="spacingAndGlyphs">Solar longitude (deg)</text>
</g>
</svg></body></html>
